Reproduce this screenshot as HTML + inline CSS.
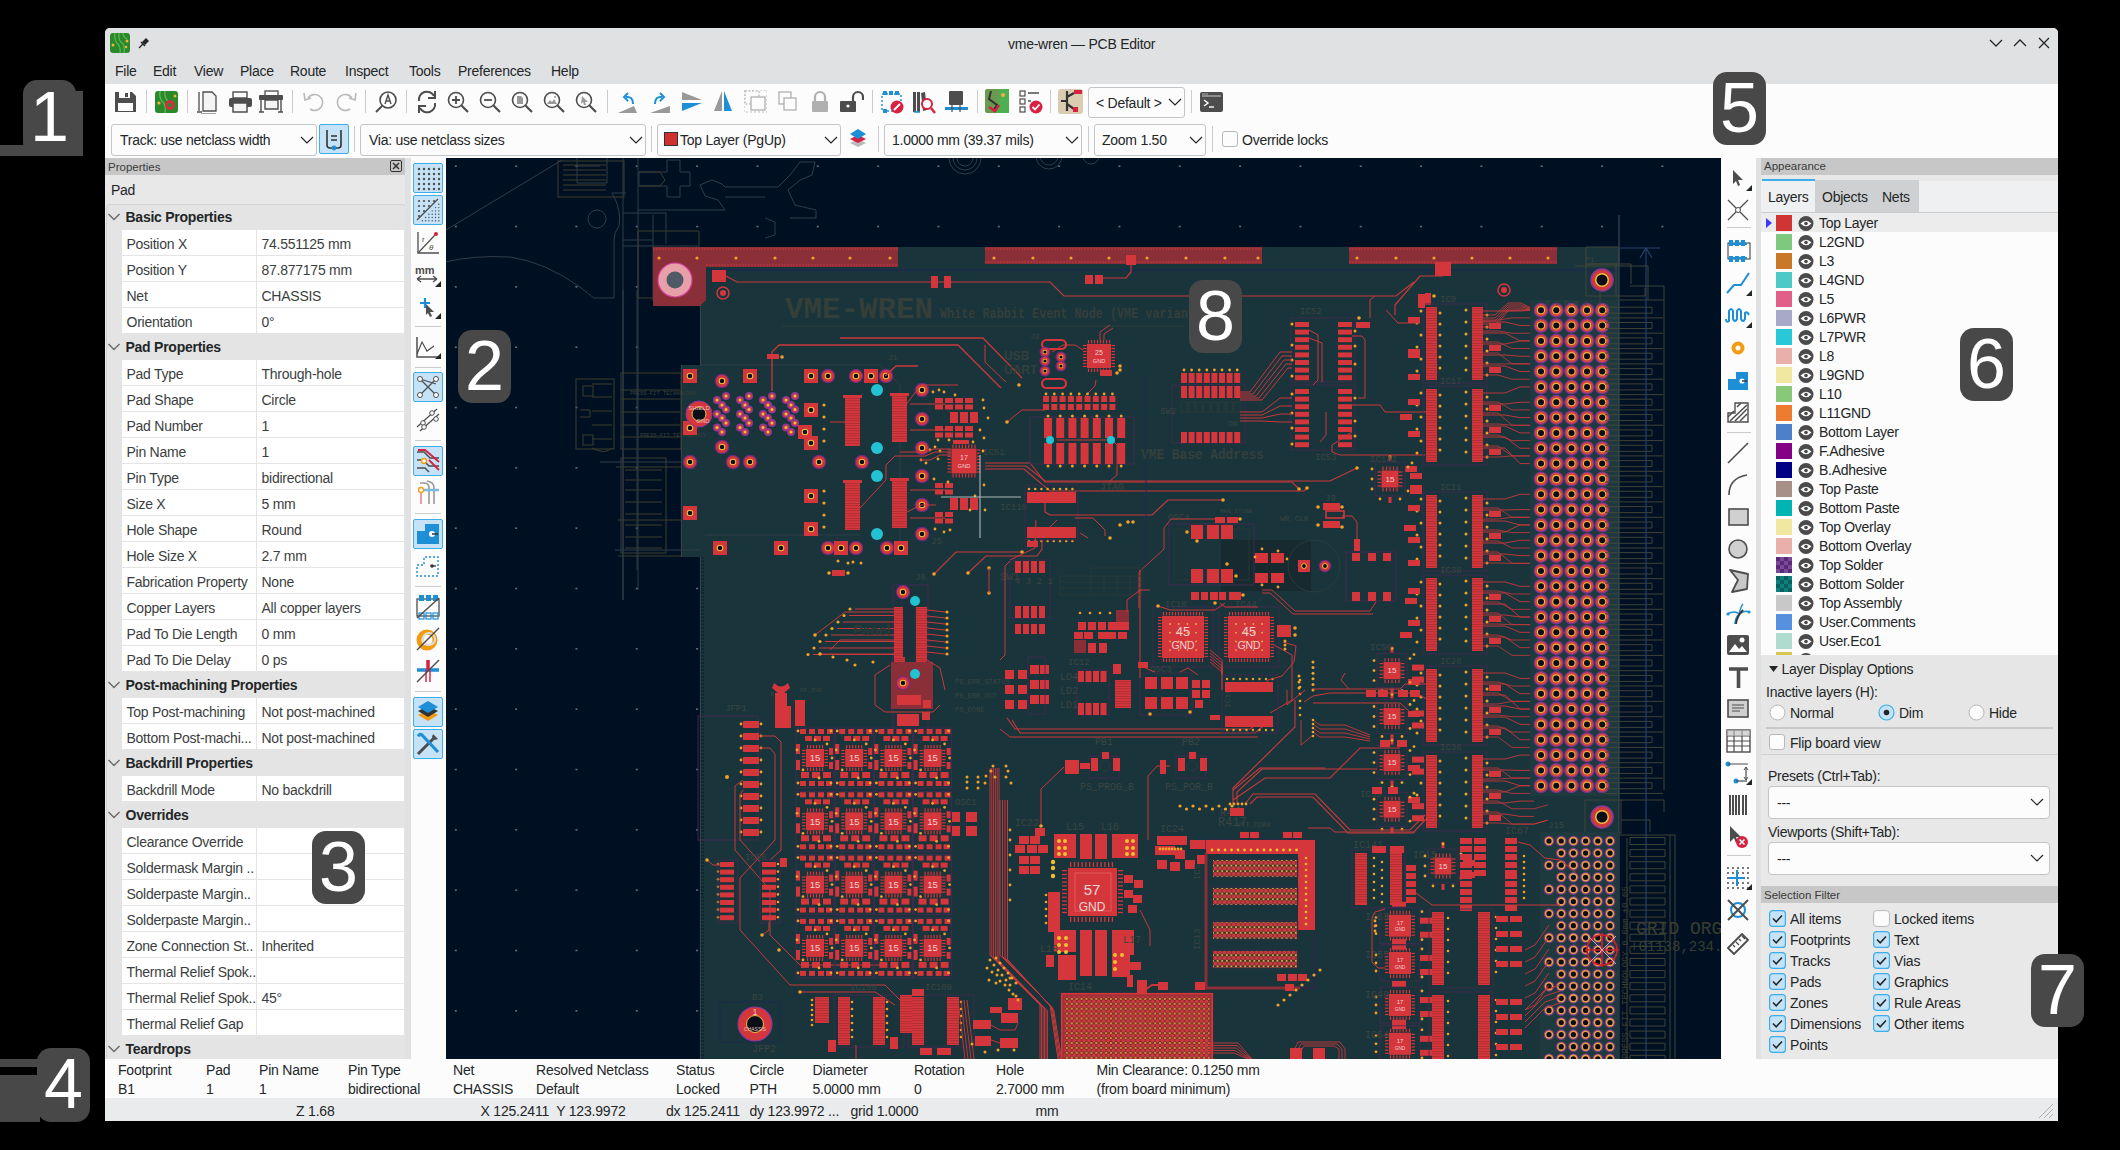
<!DOCTYPE html>
<html><head><meta charset="utf-8"><style>
html,body{margin:0;padding:0;background:#000;width:2120px;height:1150px;overflow:hidden}
body{position:relative;font-family:"Liberation Sans", sans-serif;color:#232627}
svg{overflow:hidden}
</style></head><body>
<div style="position:absolute;left:105px;top:28px;width:1953px;height:1093px;background:#eff0f1;border-radius:5px 5px 0 0;overflow:hidden"></div><div style="position:absolute;left:105px;top:28px;width:1953px;height:56px;background:#e0e1e3;border-radius:5px 5px 0 0"></div>
<svg style="position:absolute;left:445px;top:158px" width="1276" height="901" viewBox="445 158 1276 901"><rect x="445" y="158" width="1276" height="901" fill="#001023"/><defs><pattern id="pbga" x="1062" y="994" width="4.9" height="4.9" patternUnits="userSpaceOnUse"><circle cx="2.45" cy="2.45" r="2.2" fill="#d5363b"/><circle cx="0" cy="0" r="1.1" fill="#f2a22a"/><circle cx="4.9" cy="0" r="1.1" fill="#f2a22a"/><circle cx="0" cy="4.9" r="1.1" fill="#f2a22a"/><circle cx="4.9" cy="4.9" r="1.1" fill="#f2a22a"/></pattern><pattern id="pddr" x="1213" y="860" width="4.6" height="5.6" patternUnits="userSpaceOnUse"><circle cx="2.3" cy="2.8" r="2.1" fill="#d5363b"/><circle cx="0" cy="0" r="1.1" fill="#f2a22a"/><circle cx="4.6" cy="0" r="1.1" fill="#f2a22a"/><circle cx="0" cy="5.6" r="1.1" fill="#f2a22a"/><circle cx="4.6" cy="5.6" r="1.1" fill="#f2a22a"/></pattern><g id="vr"><circle r="7.4" fill="#7a3490"/><circle r="6.1" fill="#d8463a"/><circle r="4.1" fill="#eab440"/><circle r="3.0" fill="#0a0e18"/></g><g id="vs"><circle r="5.3" fill="#8a3898" opacity="0.9"/><circle r="4.2" fill="#e8a040"/><circle r="2.6" fill="#0a0e18"/></g></defs><rect x="454.8" y="165.4" width="2" height="1.6" fill="#8a95a0" opacity="0.7"/><rect x="454.8" y="225.73" width="2" height="1.6" fill="#8a95a0" opacity="0.7"/><rect x="454.8" y="286.06" width="2" height="1.6" fill="#8a95a0" opacity="0.7"/><rect x="454.8" y="346.39" width="2" height="1.6" fill="#8a95a0" opacity="0.7"/><rect x="454.8" y="406.72" width="2" height="1.6" fill="#8a95a0" opacity="0.7"/><rect x="454.8" y="467.05" width="2" height="1.6" fill="#8a95a0" opacity="0.7"/><rect x="454.8" y="527.38" width="2" height="1.6" fill="#8a95a0" opacity="0.7"/><rect x="454.8" y="587.71" width="2" height="1.6" fill="#8a95a0" opacity="0.7"/><rect x="454.8" y="648.04" width="2" height="1.6" fill="#8a95a0" opacity="0.7"/><rect x="454.8" y="708.37" width="2" height="1.6" fill="#8a95a0" opacity="0.7"/><rect x="454.8" y="768.7" width="2" height="1.6" fill="#8a95a0" opacity="0.7"/><rect x="454.8" y="829.03" width="2" height="1.6" fill="#8a95a0" opacity="0.7"/><rect x="454.8" y="889.36" width="2" height="1.6" fill="#8a95a0" opacity="0.7"/><rect x="454.8" y="949.69" width="2" height="1.6" fill="#8a95a0" opacity="0.7"/><rect x="454.8" y="1010.02" width="2" height="1.6" fill="#8a95a0" opacity="0.7"/><rect x="515.13" y="165.4" width="2" height="1.6" fill="#8a95a0" opacity="0.7"/><rect x="515.13" y="225.73" width="2" height="1.6" fill="#8a95a0" opacity="0.7"/><rect x="515.13" y="286.06" width="2" height="1.6" fill="#8a95a0" opacity="0.7"/><rect x="515.13" y="346.39" width="2" height="1.6" fill="#8a95a0" opacity="0.7"/><rect x="515.13" y="406.72" width="2" height="1.6" fill="#8a95a0" opacity="0.7"/><rect x="515.13" y="467.05" width="2" height="1.6" fill="#8a95a0" opacity="0.7"/><rect x="515.13" y="527.38" width="2" height="1.6" fill="#8a95a0" opacity="0.7"/><rect x="515.13" y="587.71" width="2" height="1.6" fill="#8a95a0" opacity="0.7"/><rect x="515.13" y="648.04" width="2" height="1.6" fill="#8a95a0" opacity="0.7"/><rect x="515.13" y="708.37" width="2" height="1.6" fill="#8a95a0" opacity="0.7"/><rect x="515.13" y="768.7" width="2" height="1.6" fill="#8a95a0" opacity="0.7"/><rect x="515.13" y="829.03" width="2" height="1.6" fill="#8a95a0" opacity="0.7"/><rect x="515.13" y="889.36" width="2" height="1.6" fill="#8a95a0" opacity="0.7"/><rect x="515.13" y="949.69" width="2" height="1.6" fill="#8a95a0" opacity="0.7"/><rect x="515.13" y="1010.02" width="2" height="1.6" fill="#8a95a0" opacity="0.7"/><rect x="575.46" y="165.4" width="2" height="1.6" fill="#8a95a0" opacity="0.7"/><rect x="575.46" y="225.73" width="2" height="1.6" fill="#8a95a0" opacity="0.7"/><rect x="575.46" y="286.06" width="2" height="1.6" fill="#8a95a0" opacity="0.7"/><rect x="575.46" y="346.39" width="2" height="1.6" fill="#8a95a0" opacity="0.7"/><rect x="575.46" y="406.72" width="2" height="1.6" fill="#8a95a0" opacity="0.7"/><rect x="575.46" y="467.05" width="2" height="1.6" fill="#8a95a0" opacity="0.7"/><rect x="575.46" y="527.38" width="2" height="1.6" fill="#8a95a0" opacity="0.7"/><rect x="575.46" y="587.71" width="2" height="1.6" fill="#8a95a0" opacity="0.7"/><rect x="575.46" y="648.04" width="2" height="1.6" fill="#8a95a0" opacity="0.7"/><rect x="575.46" y="708.37" width="2" height="1.6" fill="#8a95a0" opacity="0.7"/><rect x="575.46" y="768.7" width="2" height="1.6" fill="#8a95a0" opacity="0.7"/><rect x="575.46" y="829.03" width="2" height="1.6" fill="#8a95a0" opacity="0.7"/><rect x="575.46" y="889.36" width="2" height="1.6" fill="#8a95a0" opacity="0.7"/><rect x="575.46" y="949.69" width="2" height="1.6" fill="#8a95a0" opacity="0.7"/><rect x="575.46" y="1010.02" width="2" height="1.6" fill="#8a95a0" opacity="0.7"/><rect x="635.79" y="165.4" width="2" height="1.6" fill="#8a95a0" opacity="0.7"/><rect x="635.79" y="225.73" width="2" height="1.6" fill="#8a95a0" opacity="0.7"/><rect x="635.79" y="286.06" width="2" height="1.6" fill="#8a95a0" opacity="0.7"/><rect x="635.79" y="346.39" width="2" height="1.6" fill="#8a95a0" opacity="0.7"/><rect x="635.79" y="406.72" width="2" height="1.6" fill="#8a95a0" opacity="0.7"/><rect x="635.79" y="467.05" width="2" height="1.6" fill="#8a95a0" opacity="0.7"/><rect x="635.79" y="527.38" width="2" height="1.6" fill="#8a95a0" opacity="0.7"/><rect x="635.79" y="587.71" width="2" height="1.6" fill="#8a95a0" opacity="0.7"/><rect x="635.79" y="648.04" width="2" height="1.6" fill="#8a95a0" opacity="0.7"/><rect x="635.79" y="708.37" width="2" height="1.6" fill="#8a95a0" opacity="0.7"/><rect x="635.79" y="768.7" width="2" height="1.6" fill="#8a95a0" opacity="0.7"/><rect x="635.79" y="829.03" width="2" height="1.6" fill="#8a95a0" opacity="0.7"/><rect x="635.79" y="889.36" width="2" height="1.6" fill="#8a95a0" opacity="0.7"/><rect x="635.79" y="949.69" width="2" height="1.6" fill="#8a95a0" opacity="0.7"/><rect x="635.79" y="1010.02" width="2" height="1.6" fill="#8a95a0" opacity="0.7"/><rect x="696.12" y="165.4" width="2" height="1.6" fill="#8a95a0" opacity="0.7"/><rect x="696.12" y="225.73" width="2" height="1.6" fill="#8a95a0" opacity="0.7"/><rect x="696.12" y="286.06" width="2" height="1.6" fill="#8a95a0" opacity="0.7"/><rect x="696.12" y="346.39" width="2" height="1.6" fill="#8a95a0" opacity="0.7"/><rect x="696.12" y="406.72" width="2" height="1.6" fill="#8a95a0" opacity="0.7"/><rect x="696.12" y="467.05" width="2" height="1.6" fill="#8a95a0" opacity="0.7"/><rect x="696.12" y="527.38" width="2" height="1.6" fill="#8a95a0" opacity="0.7"/><rect x="696.12" y="587.71" width="2" height="1.6" fill="#8a95a0" opacity="0.7"/><rect x="696.12" y="648.04" width="2" height="1.6" fill="#8a95a0" opacity="0.7"/><rect x="696.12" y="708.37" width="2" height="1.6" fill="#8a95a0" opacity="0.7"/><rect x="696.12" y="768.7" width="2" height="1.6" fill="#8a95a0" opacity="0.7"/><rect x="696.12" y="829.03" width="2" height="1.6" fill="#8a95a0" opacity="0.7"/><rect x="696.12" y="889.36" width="2" height="1.6" fill="#8a95a0" opacity="0.7"/><rect x="696.12" y="949.69" width="2" height="1.6" fill="#8a95a0" opacity="0.7"/><rect x="696.12" y="1010.02" width="2" height="1.6" fill="#8a95a0" opacity="0.7"/><rect x="756.45" y="165.4" width="2" height="1.6" fill="#8a95a0" opacity="0.7"/><rect x="756.45" y="225.73" width="2" height="1.6" fill="#8a95a0" opacity="0.7"/><rect x="756.45" y="286.06" width="2" height="1.6" fill="#8a95a0" opacity="0.7"/><rect x="756.45" y="346.39" width="2" height="1.6" fill="#8a95a0" opacity="0.7"/><rect x="756.45" y="406.72" width="2" height="1.6" fill="#8a95a0" opacity="0.7"/><rect x="756.45" y="467.05" width="2" height="1.6" fill="#8a95a0" opacity="0.7"/><rect x="756.45" y="527.38" width="2" height="1.6" fill="#8a95a0" opacity="0.7"/><rect x="756.45" y="587.71" width="2" height="1.6" fill="#8a95a0" opacity="0.7"/><rect x="756.45" y="648.04" width="2" height="1.6" fill="#8a95a0" opacity="0.7"/><rect x="756.45" y="708.37" width="2" height="1.6" fill="#8a95a0" opacity="0.7"/><rect x="756.45" y="768.7" width="2" height="1.6" fill="#8a95a0" opacity="0.7"/><rect x="756.45" y="829.03" width="2" height="1.6" fill="#8a95a0" opacity="0.7"/><rect x="756.45" y="889.36" width="2" height="1.6" fill="#8a95a0" opacity="0.7"/><rect x="756.45" y="949.69" width="2" height="1.6" fill="#8a95a0" opacity="0.7"/><rect x="756.45" y="1010.02" width="2" height="1.6" fill="#8a95a0" opacity="0.7"/><rect x="816.78" y="165.4" width="2" height="1.6" fill="#8a95a0" opacity="0.7"/><rect x="816.78" y="225.73" width="2" height="1.6" fill="#8a95a0" opacity="0.7"/><rect x="816.78" y="286.06" width="2" height="1.6" fill="#8a95a0" opacity="0.7"/><rect x="816.78" y="346.39" width="2" height="1.6" fill="#8a95a0" opacity="0.7"/><rect x="816.78" y="406.72" width="2" height="1.6" fill="#8a95a0" opacity="0.7"/><rect x="816.78" y="467.05" width="2" height="1.6" fill="#8a95a0" opacity="0.7"/><rect x="816.78" y="527.38" width="2" height="1.6" fill="#8a95a0" opacity="0.7"/><rect x="816.78" y="587.71" width="2" height="1.6" fill="#8a95a0" opacity="0.7"/><rect x="816.78" y="648.04" width="2" height="1.6" fill="#8a95a0" opacity="0.7"/><rect x="816.78" y="708.37" width="2" height="1.6" fill="#8a95a0" opacity="0.7"/><rect x="816.78" y="768.7" width="2" height="1.6" fill="#8a95a0" opacity="0.7"/><rect x="816.78" y="829.03" width="2" height="1.6" fill="#8a95a0" opacity="0.7"/><rect x="816.78" y="889.36" width="2" height="1.6" fill="#8a95a0" opacity="0.7"/><rect x="816.78" y="949.69" width="2" height="1.6" fill="#8a95a0" opacity="0.7"/><rect x="816.78" y="1010.02" width="2" height="1.6" fill="#8a95a0" opacity="0.7"/><rect x="877.11" y="165.4" width="2" height="1.6" fill="#8a95a0" opacity="0.7"/><rect x="877.11" y="225.73" width="2" height="1.6" fill="#8a95a0" opacity="0.7"/><rect x="877.11" y="286.06" width="2" height="1.6" fill="#8a95a0" opacity="0.7"/><rect x="877.11" y="346.39" width="2" height="1.6" fill="#8a95a0" opacity="0.7"/><rect x="877.11" y="406.72" width="2" height="1.6" fill="#8a95a0" opacity="0.7"/><rect x="877.11" y="467.05" width="2" height="1.6" fill="#8a95a0" opacity="0.7"/><rect x="877.11" y="527.38" width="2" height="1.6" fill="#8a95a0" opacity="0.7"/><rect x="877.11" y="587.71" width="2" height="1.6" fill="#8a95a0" opacity="0.7"/><rect x="877.11" y="648.04" width="2" height="1.6" fill="#8a95a0" opacity="0.7"/><rect x="877.11" y="708.37" width="2" height="1.6" fill="#8a95a0" opacity="0.7"/><rect x="877.11" y="768.7" width="2" height="1.6" fill="#8a95a0" opacity="0.7"/><rect x="877.11" y="829.03" width="2" height="1.6" fill="#8a95a0" opacity="0.7"/><rect x="877.11" y="889.36" width="2" height="1.6" fill="#8a95a0" opacity="0.7"/><rect x="877.11" y="949.69" width="2" height="1.6" fill="#8a95a0" opacity="0.7"/><rect x="877.11" y="1010.02" width="2" height="1.6" fill="#8a95a0" opacity="0.7"/><rect x="937.44" y="165.4" width="2" height="1.6" fill="#8a95a0" opacity="0.7"/><rect x="937.44" y="225.73" width="2" height="1.6" fill="#8a95a0" opacity="0.7"/><rect x="937.44" y="286.06" width="2" height="1.6" fill="#8a95a0" opacity="0.7"/><rect x="937.44" y="346.39" width="2" height="1.6" fill="#8a95a0" opacity="0.7"/><rect x="937.44" y="406.72" width="2" height="1.6" fill="#8a95a0" opacity="0.7"/><rect x="937.44" y="467.05" width="2" height="1.6" fill="#8a95a0" opacity="0.7"/><rect x="937.44" y="527.38" width="2" height="1.6" fill="#8a95a0" opacity="0.7"/><rect x="937.44" y="587.71" width="2" height="1.6" fill="#8a95a0" opacity="0.7"/><rect x="937.44" y="648.04" width="2" height="1.6" fill="#8a95a0" opacity="0.7"/><rect x="937.44" y="708.37" width="2" height="1.6" fill="#8a95a0" opacity="0.7"/><rect x="937.44" y="768.7" width="2" height="1.6" fill="#8a95a0" opacity="0.7"/><rect x="937.44" y="829.03" width="2" height="1.6" fill="#8a95a0" opacity="0.7"/><rect x="937.44" y="889.36" width="2" height="1.6" fill="#8a95a0" opacity="0.7"/><rect x="937.44" y="949.69" width="2" height="1.6" fill="#8a95a0" opacity="0.7"/><rect x="937.44" y="1010.02" width="2" height="1.6" fill="#8a95a0" opacity="0.7"/><rect x="997.77" y="165.4" width="2" height="1.6" fill="#8a95a0" opacity="0.7"/><rect x="997.77" y="225.73" width="2" height="1.6" fill="#8a95a0" opacity="0.7"/><rect x="997.77" y="286.06" width="2" height="1.6" fill="#8a95a0" opacity="0.7"/><rect x="997.77" y="346.39" width="2" height="1.6" fill="#8a95a0" opacity="0.7"/><rect x="997.77" y="406.72" width="2" height="1.6" fill="#8a95a0" opacity="0.7"/><rect x="997.77" y="467.05" width="2" height="1.6" fill="#8a95a0" opacity="0.7"/><rect x="997.77" y="527.38" width="2" height="1.6" fill="#8a95a0" opacity="0.7"/><rect x="997.77" y="587.71" width="2" height="1.6" fill="#8a95a0" opacity="0.7"/><rect x="997.77" y="648.04" width="2" height="1.6" fill="#8a95a0" opacity="0.7"/><rect x="997.77" y="708.37" width="2" height="1.6" fill="#8a95a0" opacity="0.7"/><rect x="997.77" y="768.7" width="2" height="1.6" fill="#8a95a0" opacity="0.7"/><rect x="997.77" y="829.03" width="2" height="1.6" fill="#8a95a0" opacity="0.7"/><rect x="997.77" y="889.36" width="2" height="1.6" fill="#8a95a0" opacity="0.7"/><rect x="997.77" y="949.69" width="2" height="1.6" fill="#8a95a0" opacity="0.7"/><rect x="997.77" y="1010.02" width="2" height="1.6" fill="#8a95a0" opacity="0.7"/><rect x="1058.1" y="165.4" width="2" height="1.6" fill="#8a95a0" opacity="0.7"/><rect x="1058.1" y="225.73" width="2" height="1.6" fill="#8a95a0" opacity="0.7"/><rect x="1058.1" y="286.06" width="2" height="1.6" fill="#8a95a0" opacity="0.7"/><rect x="1058.1" y="346.39" width="2" height="1.6" fill="#8a95a0" opacity="0.7"/><rect x="1058.1" y="406.72" width="2" height="1.6" fill="#8a95a0" opacity="0.7"/><rect x="1058.1" y="467.05" width="2" height="1.6" fill="#8a95a0" opacity="0.7"/><rect x="1058.1" y="527.38" width="2" height="1.6" fill="#8a95a0" opacity="0.7"/><rect x="1058.1" y="587.71" width="2" height="1.6" fill="#8a95a0" opacity="0.7"/><rect x="1058.1" y="648.04" width="2" height="1.6" fill="#8a95a0" opacity="0.7"/><rect x="1058.1" y="708.37" width="2" height="1.6" fill="#8a95a0" opacity="0.7"/><rect x="1058.1" y="768.7" width="2" height="1.6" fill="#8a95a0" opacity="0.7"/><rect x="1058.1" y="829.03" width="2" height="1.6" fill="#8a95a0" opacity="0.7"/><rect x="1058.1" y="889.36" width="2" height="1.6" fill="#8a95a0" opacity="0.7"/><rect x="1058.1" y="949.69" width="2" height="1.6" fill="#8a95a0" opacity="0.7"/><rect x="1058.1" y="1010.02" width="2" height="1.6" fill="#8a95a0" opacity="0.7"/><rect x="1118.43" y="165.4" width="2" height="1.6" fill="#8a95a0" opacity="0.7"/><rect x="1118.43" y="225.73" width="2" height="1.6" fill="#8a95a0" opacity="0.7"/><rect x="1118.43" y="286.06" width="2" height="1.6" fill="#8a95a0" opacity="0.7"/><rect x="1118.43" y="346.39" width="2" height="1.6" fill="#8a95a0" opacity="0.7"/><rect x="1118.43" y="406.72" width="2" height="1.6" fill="#8a95a0" opacity="0.7"/><rect x="1118.43" y="467.05" width="2" height="1.6" fill="#8a95a0" opacity="0.7"/><rect x="1118.43" y="527.38" width="2" height="1.6" fill="#8a95a0" opacity="0.7"/><rect x="1118.43" y="587.71" width="2" height="1.6" fill="#8a95a0" opacity="0.7"/><rect x="1118.43" y="648.04" width="2" height="1.6" fill="#8a95a0" opacity="0.7"/><rect x="1118.43" y="708.37" width="2" height="1.6" fill="#8a95a0" opacity="0.7"/><rect x="1118.43" y="768.7" width="2" height="1.6" fill="#8a95a0" opacity="0.7"/><rect x="1118.43" y="829.03" width="2" height="1.6" fill="#8a95a0" opacity="0.7"/><rect x="1118.43" y="889.36" width="2" height="1.6" fill="#8a95a0" opacity="0.7"/><rect x="1118.43" y="949.69" width="2" height="1.6" fill="#8a95a0" opacity="0.7"/><rect x="1118.43" y="1010.02" width="2" height="1.6" fill="#8a95a0" opacity="0.7"/><rect x="1178.76" y="165.4" width="2" height="1.6" fill="#8a95a0" opacity="0.7"/><rect x="1178.76" y="225.73" width="2" height="1.6" fill="#8a95a0" opacity="0.7"/><rect x="1178.76" y="286.06" width="2" height="1.6" fill="#8a95a0" opacity="0.7"/><rect x="1178.76" y="346.39" width="2" height="1.6" fill="#8a95a0" opacity="0.7"/><rect x="1178.76" y="406.72" width="2" height="1.6" fill="#8a95a0" opacity="0.7"/><rect x="1178.76" y="467.05" width="2" height="1.6" fill="#8a95a0" opacity="0.7"/><rect x="1178.76" y="527.38" width="2" height="1.6" fill="#8a95a0" opacity="0.7"/><rect x="1178.76" y="587.71" width="2" height="1.6" fill="#8a95a0" opacity="0.7"/><rect x="1178.76" y="648.04" width="2" height="1.6" fill="#8a95a0" opacity="0.7"/><rect x="1178.76" y="708.37" width="2" height="1.6" fill="#8a95a0" opacity="0.7"/><rect x="1178.76" y="768.7" width="2" height="1.6" fill="#8a95a0" opacity="0.7"/><rect x="1178.76" y="829.03" width="2" height="1.6" fill="#8a95a0" opacity="0.7"/><rect x="1178.76" y="889.36" width="2" height="1.6" fill="#8a95a0" opacity="0.7"/><rect x="1178.76" y="949.69" width="2" height="1.6" fill="#8a95a0" opacity="0.7"/><rect x="1178.76" y="1010.02" width="2" height="1.6" fill="#8a95a0" opacity="0.7"/><rect x="1239.09" y="165.4" width="2" height="1.6" fill="#8a95a0" opacity="0.7"/><rect x="1239.09" y="225.73" width="2" height="1.6" fill="#8a95a0" opacity="0.7"/><rect x="1239.09" y="286.06" width="2" height="1.6" fill="#8a95a0" opacity="0.7"/><rect x="1239.09" y="346.39" width="2" height="1.6" fill="#8a95a0" opacity="0.7"/><rect x="1239.09" y="406.72" width="2" height="1.6" fill="#8a95a0" opacity="0.7"/><rect x="1239.09" y="467.05" width="2" height="1.6" fill="#8a95a0" opacity="0.7"/><rect x="1239.09" y="527.38" width="2" height="1.6" fill="#8a95a0" opacity="0.7"/><rect x="1239.09" y="587.71" width="2" height="1.6" fill="#8a95a0" opacity="0.7"/><rect x="1239.09" y="648.04" width="2" height="1.6" fill="#8a95a0" opacity="0.7"/><rect x="1239.09" y="708.37" width="2" height="1.6" fill="#8a95a0" opacity="0.7"/><rect x="1239.09" y="768.7" width="2" height="1.6" fill="#8a95a0" opacity="0.7"/><rect x="1239.09" y="829.03" width="2" height="1.6" fill="#8a95a0" opacity="0.7"/><rect x="1239.09" y="889.36" width="2" height="1.6" fill="#8a95a0" opacity="0.7"/><rect x="1239.09" y="949.69" width="2" height="1.6" fill="#8a95a0" opacity="0.7"/><rect x="1239.09" y="1010.02" width="2" height="1.6" fill="#8a95a0" opacity="0.7"/><rect x="1299.42" y="165.4" width="2" height="1.6" fill="#8a95a0" opacity="0.7"/><rect x="1299.42" y="225.73" width="2" height="1.6" fill="#8a95a0" opacity="0.7"/><rect x="1299.42" y="286.06" width="2" height="1.6" fill="#8a95a0" opacity="0.7"/><rect x="1299.42" y="346.39" width="2" height="1.6" fill="#8a95a0" opacity="0.7"/><rect x="1299.42" y="406.72" width="2" height="1.6" fill="#8a95a0" opacity="0.7"/><rect x="1299.42" y="467.05" width="2" height="1.6" fill="#8a95a0" opacity="0.7"/><rect x="1299.42" y="527.38" width="2" height="1.6" fill="#8a95a0" opacity="0.7"/><rect x="1299.42" y="587.71" width="2" height="1.6" fill="#8a95a0" opacity="0.7"/><rect x="1299.42" y="648.04" width="2" height="1.6" fill="#8a95a0" opacity="0.7"/><rect x="1299.42" y="708.37" width="2" height="1.6" fill="#8a95a0" opacity="0.7"/><rect x="1299.42" y="768.7" width="2" height="1.6" fill="#8a95a0" opacity="0.7"/><rect x="1299.42" y="829.03" width="2" height="1.6" fill="#8a95a0" opacity="0.7"/><rect x="1299.42" y="889.36" width="2" height="1.6" fill="#8a95a0" opacity="0.7"/><rect x="1299.42" y="949.69" width="2" height="1.6" fill="#8a95a0" opacity="0.7"/><rect x="1299.42" y="1010.02" width="2" height="1.6" fill="#8a95a0" opacity="0.7"/><rect x="1359.75" y="165.4" width="2" height="1.6" fill="#8a95a0" opacity="0.7"/><rect x="1359.75" y="225.73" width="2" height="1.6" fill="#8a95a0" opacity="0.7"/><rect x="1359.75" y="286.06" width="2" height="1.6" fill="#8a95a0" opacity="0.7"/><rect x="1359.75" y="346.39" width="2" height="1.6" fill="#8a95a0" opacity="0.7"/><rect x="1359.75" y="406.72" width="2" height="1.6" fill="#8a95a0" opacity="0.7"/><rect x="1359.75" y="467.05" width="2" height="1.6" fill="#8a95a0" opacity="0.7"/><rect x="1359.75" y="527.38" width="2" height="1.6" fill="#8a95a0" opacity="0.7"/><rect x="1359.75" y="587.71" width="2" height="1.6" fill="#8a95a0" opacity="0.7"/><rect x="1359.75" y="648.04" width="2" height="1.6" fill="#8a95a0" opacity="0.7"/><rect x="1359.75" y="708.37" width="2" height="1.6" fill="#8a95a0" opacity="0.7"/><rect x="1359.75" y="768.7" width="2" height="1.6" fill="#8a95a0" opacity="0.7"/><rect x="1359.75" y="829.03" width="2" height="1.6" fill="#8a95a0" opacity="0.7"/><rect x="1359.75" y="889.36" width="2" height="1.6" fill="#8a95a0" opacity="0.7"/><rect x="1359.75" y="949.69" width="2" height="1.6" fill="#8a95a0" opacity="0.7"/><rect x="1359.75" y="1010.02" width="2" height="1.6" fill="#8a95a0" opacity="0.7"/><rect x="1420.08" y="165.4" width="2" height="1.6" fill="#8a95a0" opacity="0.7"/><rect x="1420.08" y="225.73" width="2" height="1.6" fill="#8a95a0" opacity="0.7"/><rect x="1420.08" y="286.06" width="2" height="1.6" fill="#8a95a0" opacity="0.7"/><rect x="1420.08" y="346.39" width="2" height="1.6" fill="#8a95a0" opacity="0.7"/><rect x="1420.08" y="406.72" width="2" height="1.6" fill="#8a95a0" opacity="0.7"/><rect x="1420.08" y="467.05" width="2" height="1.6" fill="#8a95a0" opacity="0.7"/><rect x="1420.08" y="527.38" width="2" height="1.6" fill="#8a95a0" opacity="0.7"/><rect x="1420.08" y="587.71" width="2" height="1.6" fill="#8a95a0" opacity="0.7"/><rect x="1420.08" y="648.04" width="2" height="1.6" fill="#8a95a0" opacity="0.7"/><rect x="1420.08" y="708.37" width="2" height="1.6" fill="#8a95a0" opacity="0.7"/><rect x="1420.08" y="768.7" width="2" height="1.6" fill="#8a95a0" opacity="0.7"/><rect x="1420.08" y="829.03" width="2" height="1.6" fill="#8a95a0" opacity="0.7"/><rect x="1420.08" y="889.36" width="2" height="1.6" fill="#8a95a0" opacity="0.7"/><rect x="1420.08" y="949.69" width="2" height="1.6" fill="#8a95a0" opacity="0.7"/><rect x="1420.08" y="1010.02" width="2" height="1.6" fill="#8a95a0" opacity="0.7"/><rect x="1480.41" y="165.4" width="2" height="1.6" fill="#8a95a0" opacity="0.7"/><rect x="1480.41" y="225.73" width="2" height="1.6" fill="#8a95a0" opacity="0.7"/><rect x="1480.41" y="286.06" width="2" height="1.6" fill="#8a95a0" opacity="0.7"/><rect x="1480.41" y="346.39" width="2" height="1.6" fill="#8a95a0" opacity="0.7"/><rect x="1480.41" y="406.72" width="2" height="1.6" fill="#8a95a0" opacity="0.7"/><rect x="1480.41" y="467.05" width="2" height="1.6" fill="#8a95a0" opacity="0.7"/><rect x="1480.41" y="527.38" width="2" height="1.6" fill="#8a95a0" opacity="0.7"/><rect x="1480.41" y="587.71" width="2" height="1.6" fill="#8a95a0" opacity="0.7"/><rect x="1480.41" y="648.04" width="2" height="1.6" fill="#8a95a0" opacity="0.7"/><rect x="1480.41" y="708.37" width="2" height="1.6" fill="#8a95a0" opacity="0.7"/><rect x="1480.41" y="768.7" width="2" height="1.6" fill="#8a95a0" opacity="0.7"/><rect x="1480.41" y="829.03" width="2" height="1.6" fill="#8a95a0" opacity="0.7"/><rect x="1480.41" y="889.36" width="2" height="1.6" fill="#8a95a0" opacity="0.7"/><rect x="1480.41" y="949.69" width="2" height="1.6" fill="#8a95a0" opacity="0.7"/><rect x="1480.41" y="1010.02" width="2" height="1.6" fill="#8a95a0" opacity="0.7"/><rect x="1540.74" y="165.4" width="2" height="1.6" fill="#8a95a0" opacity="0.7"/><rect x="1540.74" y="225.73" width="2" height="1.6" fill="#8a95a0" opacity="0.7"/><rect x="1540.74" y="286.06" width="2" height="1.6" fill="#8a95a0" opacity="0.7"/><rect x="1540.74" y="346.39" width="2" height="1.6" fill="#8a95a0" opacity="0.7"/><rect x="1540.74" y="406.72" width="2" height="1.6" fill="#8a95a0" opacity="0.7"/><rect x="1540.74" y="467.05" width="2" height="1.6" fill="#8a95a0" opacity="0.7"/><rect x="1540.74" y="527.38" width="2" height="1.6" fill="#8a95a0" opacity="0.7"/><rect x="1540.74" y="587.71" width="2" height="1.6" fill="#8a95a0" opacity="0.7"/><rect x="1540.74" y="648.04" width="2" height="1.6" fill="#8a95a0" opacity="0.7"/><rect x="1540.74" y="708.37" width="2" height="1.6" fill="#8a95a0" opacity="0.7"/><rect x="1540.74" y="768.7" width="2" height="1.6" fill="#8a95a0" opacity="0.7"/><rect x="1540.74" y="829.03" width="2" height="1.6" fill="#8a95a0" opacity="0.7"/><rect x="1540.74" y="889.36" width="2" height="1.6" fill="#8a95a0" opacity="0.7"/><rect x="1540.74" y="949.69" width="2" height="1.6" fill="#8a95a0" opacity="0.7"/><rect x="1540.74" y="1010.02" width="2" height="1.6" fill="#8a95a0" opacity="0.7"/><rect x="1601.07" y="165.4" width="2" height="1.6" fill="#8a95a0" opacity="0.7"/><rect x="1601.07" y="225.73" width="2" height="1.6" fill="#8a95a0" opacity="0.7"/><rect x="1601.07" y="286.06" width="2" height="1.6" fill="#8a95a0" opacity="0.7"/><rect x="1601.07" y="346.39" width="2" height="1.6" fill="#8a95a0" opacity="0.7"/><rect x="1601.07" y="406.72" width="2" height="1.6" fill="#8a95a0" opacity="0.7"/><rect x="1601.07" y="467.05" width="2" height="1.6" fill="#8a95a0" opacity="0.7"/><rect x="1601.07" y="527.38" width="2" height="1.6" fill="#8a95a0" opacity="0.7"/><rect x="1601.07" y="587.71" width="2" height="1.6" fill="#8a95a0" opacity="0.7"/><rect x="1601.07" y="648.04" width="2" height="1.6" fill="#8a95a0" opacity="0.7"/><rect x="1601.07" y="708.37" width="2" height="1.6" fill="#8a95a0" opacity="0.7"/><rect x="1601.07" y="768.7" width="2" height="1.6" fill="#8a95a0" opacity="0.7"/><rect x="1601.07" y="829.03" width="2" height="1.6" fill="#8a95a0" opacity="0.7"/><rect x="1601.07" y="889.36" width="2" height="1.6" fill="#8a95a0" opacity="0.7"/><rect x="1601.07" y="949.69" width="2" height="1.6" fill="#8a95a0" opacity="0.7"/><rect x="1601.07" y="1010.02" width="2" height="1.6" fill="#8a95a0" opacity="0.7"/><rect x="1661.4" y="165.4" width="2" height="1.6" fill="#8a95a0" opacity="0.7"/><rect x="1661.4" y="225.73" width="2" height="1.6" fill="#8a95a0" opacity="0.7"/><rect x="1661.4" y="286.06" width="2" height="1.6" fill="#8a95a0" opacity="0.7"/><rect x="1661.4" y="346.39" width="2" height="1.6" fill="#8a95a0" opacity="0.7"/><rect x="1661.4" y="406.72" width="2" height="1.6" fill="#8a95a0" opacity="0.7"/><rect x="1661.4" y="467.05" width="2" height="1.6" fill="#8a95a0" opacity="0.7"/><rect x="1661.4" y="527.38" width="2" height="1.6" fill="#8a95a0" opacity="0.7"/><rect x="1661.4" y="587.71" width="2" height="1.6" fill="#8a95a0" opacity="0.7"/><rect x="1661.4" y="648.04" width="2" height="1.6" fill="#8a95a0" opacity="0.7"/><rect x="1661.4" y="708.37" width="2" height="1.6" fill="#8a95a0" opacity="0.7"/><rect x="1661.4" y="768.7" width="2" height="1.6" fill="#8a95a0" opacity="0.7"/><rect x="1661.4" y="829.03" width="2" height="1.6" fill="#8a95a0" opacity="0.7"/><rect x="1661.4" y="889.36" width="2" height="1.6" fill="#8a95a0" opacity="0.7"/><rect x="1661.4" y="949.69" width="2" height="1.6" fill="#8a95a0" opacity="0.7"/><rect x="1661.4" y="1010.02" width="2" height="1.6" fill="#8a95a0" opacity="0.7"/><g stroke="#2f3d47" stroke-width="1" fill="none"><path d="M446 230 L562 160"/><path d="M445 262 Q475 255 510 257 Q545 262 580 287 Q590 295 594 298 L614 298 L614 240 Q614 232 619 226 Q622 210 612 193 L626 193"/><circle cx="597" cy="219" r="9"/><path d="M623 158 L623 600 M638 158 L638 590 M623 213 L666 213 L666 244 M623 240 L653 240 M623 246 L700 246 M653 215 L653 301"/><path d="M577 158 L577 183 L607 183 L607 158 M577 166 L600 166"/><path d="M667 160 L680 160 L680 172 L690 172 L690 186 L680 186 L680 197 L667 197 L667 186 L639 186 L639 172 L667 172 Z"/><path d="M638 210 L725 210 L718 200 L705 196 L700 185 L712 180 L722 184 L725 187 L765 187 M725 197 L765 197"/><path d="M765 187 L778 187 L790 175 L800 162 L815 162 L812 175 L800 180 L788 190 L795 205 L816 210 L816 218 L790 218"/><path d="M765 218 L775 222 L775 235 L765 238"/><circle cx="965" cy="158" r="16"/><circle cx="965" cy="158" r="12"/><circle cx="965" cy="158" r="8"/><circle cx="1049" cy="156" r="13"/><circle cx="1049" cy="156" r="9"/><circle cx="1091" cy="156" r="8"/></g><g stroke="#3d3d2c" stroke-width="1" fill="none"><rect x="558" y="161" width="66" height="36"/><path d="M563 165 L606 165 M563 170 L606 170 M563 175 L606 175 M563 180 L606 180 M563 185 L606 185 M563 190 L606 190"/><path d="M638 298 L638 231 L699 231 L699 245 M638 298 L653 298"/><path d="M639 172 L660 172 M639 186 L660 186 L665 180 L660 172"/></g><path d="M653 247 L1619 247 L1619 1059 L700 1059 L700 557 L681 557 L681 365 L700 365 L700 305 L653 305 Z" fill="#19343a"/><path d="M653 305 L700 305 L700 365 L681 365 L681 305 Z" fill="#001023"/><path d="M653 270 L1619 270" stroke="#1a2a50" stroke-width="1.5"/><path d="M700.5 557 L700.5 1059 M681.5 365 L681.5 557 M700.5 305 L700.5 365" stroke="#34444e" stroke-width="1.2"/><path d="M702.5 557 L702.5 1059" stroke="#0e2430" stroke-width="2.5" stroke-dasharray="2,1.5"/><path d="M653 247 L898 247 L898 267 L706 267 L706 300 L700 306 L653 306 Z" fill="#8a2e38"/><path d="M985 247 L1262 247 L1262 264 L985 264 Z" fill="#8a2e38"/><path d="M1349 247 L1557 247 L1557 264 L1349 264 Z" fill="#8a2e38"/><path d="M706 265 L898 265 M985 262 L1262 262 M1349 262 L1557 262 M653 249 L898 249 M985 249 L1262 249 M1349 249 L1557 249" stroke="#a8343a" stroke-width="2.5" stroke-dasharray="2,1"/><path d="M1435 262 L1451 262 L1451 276 L1435 276 Z" fill="#d5363b"/><circle cx="659" cy="258" r="1.6" fill="#f2a22a"/><circle cx="697" cy="258" r="1.6" fill="#f2a22a"/><circle cx="736" cy="258" r="1.6" fill="#f2a22a"/><circle cx="775" cy="258" r="1.6" fill="#f2a22a"/><circle cx="813" cy="258" r="1.6" fill="#f2a22a"/><circle cx="850" cy="258" r="1.6" fill="#f2a22a"/><circle cx="890" cy="258" r="1.6" fill="#f2a22a"/><circle cx="994" cy="258" r="1.6" fill="#f2a22a"/><circle cx="1033" cy="258" r="1.6" fill="#f2a22a"/><circle cx="1071" cy="258" r="1.6" fill="#f2a22a"/><circle cx="1109" cy="258" r="1.6" fill="#f2a22a"/><circle cx="1147" cy="258" r="1.6" fill="#f2a22a"/><circle cx="1186" cy="258" r="1.6" fill="#f2a22a"/><circle cx="1225" cy="258" r="1.6" fill="#f2a22a"/><circle cx="1258" cy="258" r="1.6" fill="#f2a22a"/><circle cx="1357" cy="258" r="1.6" fill="#f2a22a"/><circle cx="1396" cy="258" r="1.6" fill="#f2a22a"/><circle cx="1434" cy="258" r="1.6" fill="#f2a22a"/><circle cx="1472" cy="258" r="1.6" fill="#f2a22a"/><circle cx="1510" cy="258" r="1.6" fill="#f2a22a"/><circle cx="1548" cy="258" r="1.6" fill="#f2a22a"/><circle cx="675" cy="280" r="17" fill="#e8a0a8" stroke="#d040a0" stroke-width="1.2"/><circle cx="675" cy="280" r="8.5" fill="#505a66"/><circle cx="723" cy="293" r="6" fill="none" stroke="#d5363b" stroke-width="1.5"/><circle cx="723" cy="293" r="3" fill="#d5363b"/><rect x="712" y="270" width="14" height="12" fill="#d5363b" /><circle cx="1602" cy="280" r="11" fill="#d03a3a" stroke="#8a3898" stroke-width="1.5"/><circle cx="1602" cy="280" r="7" fill="#f0c040"/><circle cx="1602" cy="280" r="5.5" fill="#0a0e18"/><circle cx="1504" cy="290" r="6" fill="none" stroke="#d5363b" stroke-width="1.5"/><circle cx="1504" cy="290" r="3" fill="#d5363b"/><text x="785" y="318" font-size="30" fill="#343f3a" font-weight="bold" font-family="Liberation Mono" text-anchor="start" textLength="148" lengthAdjust="spacingAndGlyphs">VME-WREN</text><text x="940" y="318" font-size="15" fill="#343f3a" font-weight="bold" font-family="Liberation Mono" text-anchor="start" textLength="262" lengthAdjust="spacingAndGlyphs">White Rabbit Event Node (VME variant)</text><path d="M782 326 L1185 326" stroke="#2f3c38" stroke-width="1"/><g stroke="#3d3d2c" stroke-width="1" fill="none"><rect x="576" y="379" width="38" height="70"/><rect x="583" y="386" width="10" height="10"/><rect x="583" y="435" width="10" height="10"/><path d="M580 410 L590 410 L590 417 L580 417"/><path d="M592 384 L612 384 M592 397 L612 397 M592 411 L612 411 M592 425 L612 425 M592 439 L612 439 M592 448 Q605 455 612 448"/><rect x="621" y="373" width="60" height="76"/><path d="M621 390 L680 390 M621 399 L680 399 M621 412 L680 412 M621 425 L680 425 M621 437 L680 437"/><rect x="621" y="458" width="45" height="95"/><path d="M625 470 L662 470 M625 480 L662 480 M625 490 L662 490 M625 502 L662 502 M625 514 L662 514 M625 525 L662 525 M625 537 L662 537 M625 548 L662 548"/><path d="M616 467 L681 467 M618 520 L681 520 M618 556 L681 556"/></g><g stroke="#2f3d47" stroke-width="1" fill="none"><path d="M623 290 L623 600 M637 290 L637 570 M600 462 L700 462 M615 550 L700 550"/><path d="M700 365 L880 365 L900 385 L900 555"/><path d="M705 535 L860 535"/></g><text x="630" y="395" font-size="5.5" fill="#3d4038" font-weight="normal" font-family="Liberation Mono" text-anchor="start" >PRESS-FIT TECHNOLOGY</text><text x="640" y="437" font-size="5.5" fill="#3d4038" font-weight="normal" font-family="Liberation Mono" text-anchor="start" >PRESS-FIT TECHNOLOGY</text><circle cx="690" cy="376" r="7.3" fill="#7a2a88" opacity="0.85"/><rect x="683" y="369" width="14" height="14" fill="#d5363b" /><circle cx="690" cy="376" r="3.3000000000000003" fill="#f0c040"/><circle cx="690" cy="376" r="2.2800000000000002" fill="#0a1018"/><circle cx="750" cy="376" r="7.3" fill="#7a2a88" opacity="0.85"/><rect x="743" y="369" width="14" height="14" fill="#d5363b" /><circle cx="750" cy="376" r="3.3000000000000003" fill="#f0c040"/><circle cx="750" cy="376" r="2.2800000000000002" fill="#0a1018"/><circle cx="811" cy="376" r="7.3" fill="#7a2a88" opacity="0.85"/><rect x="804" y="369" width="14" height="14" fill="#d5363b" /><circle cx="811" cy="376" r="3.3000000000000003" fill="#f0c040"/><circle cx="811" cy="376" r="2.2800000000000002" fill="#0a1018"/><circle cx="828" cy="376" r="7.3" fill="#7a2a88" opacity="0.85"/><circle cx="828" cy="376" r="6" fill="#d5363b"/><circle cx="828" cy="376" r="3.3000000000000003" fill="#f0c040"/><circle cx="828" cy="376" r="2.2800000000000002" fill="#0a1018"/><circle cx="856" cy="376" r="7.3" fill="#7a2a88" opacity="0.85"/><circle cx="856" cy="376" r="6" fill="#d5363b"/><circle cx="856" cy="376" r="3.3000000000000003" fill="#f0c040"/><circle cx="856" cy="376" r="2.2800000000000002" fill="#0a1018"/><circle cx="871" cy="376" r="7.3" fill="#7a2a88" opacity="0.85"/><rect x="864" y="369" width="14" height="14" fill="#d5363b" /><circle cx="871" cy="376" r="3.3000000000000003" fill="#f0c040"/><circle cx="871" cy="376" r="2.2800000000000002" fill="#0a1018"/><circle cx="886" cy="376" r="7.3" fill="#7a2a88" opacity="0.85"/><circle cx="886" cy="376" r="6" fill="#d5363b"/><circle cx="886" cy="376" r="3.3000000000000003" fill="#f0c040"/><circle cx="886" cy="376" r="2.2800000000000002" fill="#0a1018"/><circle cx="722" cy="381" r="7.3" fill="#7a2a88" opacity="0.85"/><circle cx="722" cy="381" r="6" fill="#d5363b"/><circle cx="722" cy="381" r="3.3000000000000003" fill="#f0c040"/><circle cx="722" cy="381" r="2.2800000000000002" fill="#0a1018"/><circle cx="690" cy="428" r="7.3" fill="#7a2a88" opacity="0.85"/><rect x="683" y="421" width="14" height="14" fill="#d5363b" /><circle cx="690" cy="428" r="3.3000000000000003" fill="#f0c040"/><circle cx="690" cy="428" r="2.2800000000000002" fill="#0a1018"/><circle cx="811" cy="410" r="7.3" fill="#7a2a88" opacity="0.85"/><rect x="804" y="403" width="14" height="14" fill="#d5363b" /><circle cx="811" cy="410" r="3.3000000000000003" fill="#f0c040"/><circle cx="811" cy="410" r="2.2800000000000002" fill="#0a1018"/><circle cx="805" cy="432" r="7.3" fill="#7a2a88" opacity="0.85"/><rect x="798" y="425" width="14" height="14" fill="#d5363b" /><circle cx="805" cy="432" r="3.3000000000000003" fill="#f0c040"/><circle cx="805" cy="432" r="2.2800000000000002" fill="#0a1018"/><circle cx="811" cy="443" r="7.3" fill="#7a2a88" opacity="0.85"/><rect x="804" y="436" width="14" height="14" fill="#d5363b" /><circle cx="811" cy="443" r="3.3000000000000003" fill="#f0c040"/><circle cx="811" cy="443" r="2.2800000000000002" fill="#0a1018"/><circle cx="722" cy="447" r="7.3" fill="#7a2a88" opacity="0.85"/><circle cx="722" cy="447" r="6" fill="#d5363b"/><circle cx="722" cy="447" r="3.3000000000000003" fill="#f0c040"/><circle cx="722" cy="447" r="2.2800000000000002" fill="#0a1018"/><circle cx="690" cy="462" r="7.3" fill="#7a2a88" opacity="0.85"/><circle cx="690" cy="462" r="6" fill="#d5363b"/><circle cx="690" cy="462" r="3.3000000000000003" fill="#f0c040"/><circle cx="690" cy="462" r="2.2800000000000002" fill="#0a1018"/><circle cx="733" cy="462" r="7.3" fill="#7a2a88" opacity="0.85"/><circle cx="733" cy="462" r="6" fill="#d5363b"/><circle cx="733" cy="462" r="3.3000000000000003" fill="#f0c040"/><circle cx="733" cy="462" r="2.2800000000000002" fill="#0a1018"/><circle cx="750" cy="462" r="7.3" fill="#7a2a88" opacity="0.85"/><circle cx="750" cy="462" r="6" fill="#d5363b"/><circle cx="750" cy="462" r="3.3000000000000003" fill="#f0c040"/><circle cx="750" cy="462" r="2.2800000000000002" fill="#0a1018"/><circle cx="819" cy="462" r="7.3" fill="#7a2a88" opacity="0.85"/><circle cx="819" cy="462" r="6" fill="#d5363b"/><circle cx="819" cy="462" r="3.3000000000000003" fill="#f0c040"/><circle cx="819" cy="462" r="2.2800000000000002" fill="#0a1018"/><circle cx="862" cy="462" r="7.3" fill="#7a2a88" opacity="0.85"/><circle cx="862" cy="462" r="6" fill="#d5363b"/><circle cx="862" cy="462" r="3.3000000000000003" fill="#f0c040"/><circle cx="862" cy="462" r="2.2800000000000002" fill="#0a1018"/><circle cx="811" cy="496" r="7.3" fill="#7a2a88" opacity="0.85"/><rect x="804" y="489" width="14" height="14" fill="#d5363b" /><circle cx="811" cy="496" r="3.3000000000000003" fill="#f0c040"/><circle cx="811" cy="496" r="2.2800000000000002" fill="#0a1018"/><circle cx="690" cy="513" r="7.3" fill="#7a2a88" opacity="0.85"/><rect x="683" y="506" width="14" height="14" fill="#d5363b" /><circle cx="690" cy="513" r="3.3000000000000003" fill="#f0c040"/><circle cx="690" cy="513" r="2.2800000000000002" fill="#0a1018"/><circle cx="811" cy="529" r="7.3" fill="#7a2a88" opacity="0.85"/><rect x="804" y="522" width="14" height="14" fill="#d5363b" /><circle cx="811" cy="529" r="3.3000000000000003" fill="#f0c040"/><circle cx="811" cy="529" r="2.2800000000000002" fill="#0a1018"/><circle cx="720" cy="548" r="7.3" fill="#7a2a88" opacity="0.85"/><rect x="713" y="541" width="14" height="14" fill="#d5363b" /><circle cx="720" cy="548" r="3.3000000000000003" fill="#f0c040"/><circle cx="720" cy="548" r="2.2800000000000002" fill="#0a1018"/><circle cx="781" cy="548" r="7.3" fill="#7a2a88" opacity="0.85"/><rect x="774" y="541" width="14" height="14" fill="#d5363b" /><circle cx="781" cy="548" r="3.3000000000000003" fill="#f0c040"/><circle cx="781" cy="548" r="2.2800000000000002" fill="#0a1018"/><circle cx="828" cy="548" r="7.3" fill="#7a2a88" opacity="0.85"/><circle cx="828" cy="548" r="6" fill="#d5363b"/><circle cx="828" cy="548" r="3.3000000000000003" fill="#f0c040"/><circle cx="828" cy="548" r="2.2800000000000002" fill="#0a1018"/><circle cx="841" cy="548" r="7.3" fill="#7a2a88" opacity="0.85"/><rect x="834" y="541" width="14" height="14" fill="#d5363b" /><circle cx="841" cy="548" r="3.3000000000000003" fill="#f0c040"/><circle cx="841" cy="548" r="2.2800000000000002" fill="#0a1018"/><circle cx="856" cy="548" r="7.3" fill="#7a2a88" opacity="0.85"/><circle cx="856" cy="548" r="6" fill="#d5363b"/><circle cx="856" cy="548" r="3.3000000000000003" fill="#f0c040"/><circle cx="856" cy="548" r="2.2800000000000002" fill="#0a1018"/><circle cx="887" cy="548" r="7.3" fill="#7a2a88" opacity="0.85"/><circle cx="887" cy="548" r="6" fill="#d5363b"/><circle cx="887" cy="548" r="3.3000000000000003" fill="#f0c040"/><circle cx="887" cy="548" r="2.2800000000000002" fill="#0a1018"/><circle cx="901" cy="548" r="7.3" fill="#7a2a88" opacity="0.85"/><rect x="894" y="541" width="14" height="14" fill="#d5363b" /><circle cx="901" cy="548" r="3.3000000000000003" fill="#f0c040"/><circle cx="901" cy="548" r="2.2800000000000002" fill="#0a1018"/><circle cx="922" cy="390" r="7.3" fill="#7a2a88" opacity="0.85"/><circle cx="922" cy="390" r="6" fill="#d5363b"/><circle cx="922" cy="390" r="3.3000000000000003" fill="#f0c040"/><circle cx="922" cy="390" r="2.2800000000000002" fill="#0a1018"/><circle cx="922" cy="419" r="7.3" fill="#7a2a88" opacity="0.85"/><circle cx="922" cy="419" r="6" fill="#d5363b"/><circle cx="922" cy="419" r="3.3000000000000003" fill="#f0c040"/><circle cx="922" cy="419" r="2.2800000000000002" fill="#0a1018"/><circle cx="922" cy="448" r="7.3" fill="#7a2a88" opacity="0.85"/><circle cx="922" cy="448" r="6" fill="#d5363b"/><circle cx="922" cy="448" r="3.3000000000000003" fill="#f0c040"/><circle cx="922" cy="448" r="2.2800000000000002" fill="#0a1018"/><circle cx="922" cy="476" r="7.3" fill="#7a2a88" opacity="0.85"/><circle cx="922" cy="476" r="6" fill="#d5363b"/><circle cx="922" cy="476" r="3.3000000000000003" fill="#f0c040"/><circle cx="922" cy="476" r="2.2800000000000002" fill="#0a1018"/><circle cx="922" cy="505" r="7.3" fill="#7a2a88" opacity="0.85"/><circle cx="922" cy="505" r="6" fill="#d5363b"/><circle cx="922" cy="505" r="3.3000000000000003" fill="#f0c040"/><circle cx="922" cy="505" r="2.2800000000000002" fill="#0a1018"/><circle cx="922" cy="534" r="7.3" fill="#7a2a88" opacity="0.85"/><circle cx="922" cy="534" r="6" fill="#d5363b"/><circle cx="922" cy="534" r="3.3000000000000003" fill="#f0c040"/><circle cx="922" cy="534" r="2.2800000000000002" fill="#0a1018"/><circle cx="699" cy="414" r="13" fill="#d5363b" stroke="#8a3898" stroke-width="1"/><circle cx="699" cy="414" r="7" fill="#0a0e18" stroke="#f0c040" stroke-width="1"/><text x="699" y="410" font-size="6" fill="#e8c0c0" font-weight="normal" font-family="Liberation Sans" text-anchor="middle" >SHIELD</text><text x="703" y="423" font-size="6" fill="#e8c0c0" font-weight="normal" font-family="Liberation Sans" text-anchor="middle" >GND</text><circle cx="726" cy="396" r="4" fill="#8a3898"/><circle cx="726" cy="396" r="2.6" fill="#d5363b"/><circle cx="726" cy="396" r="1.5" fill="#f0c040"/><circle cx="717" cy="400" r="4" fill="#8a3898"/><circle cx="717" cy="400" r="2.6" fill="#d5363b"/><circle cx="717" cy="400" r="1.5" fill="#f0c040"/><circle cx="722" cy="405" r="4" fill="#8a3898"/><circle cx="722" cy="405" r="2.6" fill="#d5363b"/><circle cx="722" cy="405" r="1.5" fill="#f0c040"/><circle cx="726" cy="409.5" r="4" fill="#8a3898"/><circle cx="726" cy="409.5" r="2.6" fill="#d5363b"/><circle cx="726" cy="409.5" r="1.5" fill="#f0c040"/><circle cx="717" cy="414" r="4" fill="#8a3898"/><circle cx="717" cy="414" r="2.6" fill="#d5363b"/><circle cx="717" cy="414" r="1.5" fill="#f0c040"/><circle cx="722" cy="418" r="4" fill="#8a3898"/><circle cx="722" cy="418" r="2.6" fill="#d5363b"/><circle cx="722" cy="418" r="1.5" fill="#f0c040"/><circle cx="726" cy="423" r="4" fill="#8a3898"/><circle cx="726" cy="423" r="2.6" fill="#d5363b"/><circle cx="726" cy="423" r="1.5" fill="#f0c040"/><circle cx="717" cy="427.5" r="4" fill="#8a3898"/><circle cx="717" cy="427.5" r="2.6" fill="#d5363b"/><circle cx="717" cy="427.5" r="1.5" fill="#f0c040"/><circle cx="722" cy="432" r="4" fill="#8a3898"/><circle cx="722" cy="432" r="2.6" fill="#d5363b"/><circle cx="722" cy="432" r="1.5" fill="#f0c040"/><circle cx="749" cy="396" r="4" fill="#8a3898"/><circle cx="749" cy="396" r="2.6" fill="#d5363b"/><circle cx="749" cy="396" r="1.5" fill="#f0c040"/><circle cx="740" cy="400" r="4" fill="#8a3898"/><circle cx="740" cy="400" r="2.6" fill="#d5363b"/><circle cx="740" cy="400" r="1.5" fill="#f0c040"/><circle cx="745" cy="405" r="4" fill="#8a3898"/><circle cx="745" cy="405" r="2.6" fill="#d5363b"/><circle cx="745" cy="405" r="1.5" fill="#f0c040"/><circle cx="749" cy="409.5" r="4" fill="#8a3898"/><circle cx="749" cy="409.5" r="2.6" fill="#d5363b"/><circle cx="749" cy="409.5" r="1.5" fill="#f0c040"/><circle cx="740" cy="414" r="4" fill="#8a3898"/><circle cx="740" cy="414" r="2.6" fill="#d5363b"/><circle cx="740" cy="414" r="1.5" fill="#f0c040"/><circle cx="745" cy="418" r="4" fill="#8a3898"/><circle cx="745" cy="418" r="2.6" fill="#d5363b"/><circle cx="745" cy="418" r="1.5" fill="#f0c040"/><circle cx="749" cy="423" r="4" fill="#8a3898"/><circle cx="749" cy="423" r="2.6" fill="#d5363b"/><circle cx="749" cy="423" r="1.5" fill="#f0c040"/><circle cx="740" cy="427.5" r="4" fill="#8a3898"/><circle cx="740" cy="427.5" r="2.6" fill="#d5363b"/><circle cx="740" cy="427.5" r="1.5" fill="#f0c040"/><circle cx="745" cy="432" r="4" fill="#8a3898"/><circle cx="745" cy="432" r="2.6" fill="#d5363b"/><circle cx="745" cy="432" r="1.5" fill="#f0c040"/><circle cx="772" cy="396" r="4" fill="#8a3898"/><circle cx="772" cy="396" r="2.6" fill="#d5363b"/><circle cx="772" cy="396" r="1.5" fill="#f0c040"/><circle cx="763" cy="400" r="4" fill="#8a3898"/><circle cx="763" cy="400" r="2.6" fill="#d5363b"/><circle cx="763" cy="400" r="1.5" fill="#f0c040"/><circle cx="768" cy="405" r="4" fill="#8a3898"/><circle cx="768" cy="405" r="2.6" fill="#d5363b"/><circle cx="768" cy="405" r="1.5" fill="#f0c040"/><circle cx="772" cy="409.5" r="4" fill="#8a3898"/><circle cx="772" cy="409.5" r="2.6" fill="#d5363b"/><circle cx="772" cy="409.5" r="1.5" fill="#f0c040"/><circle cx="763" cy="414" r="4" fill="#8a3898"/><circle cx="763" cy="414" r="2.6" fill="#d5363b"/><circle cx="763" cy="414" r="1.5" fill="#f0c040"/><circle cx="768" cy="418" r="4" fill="#8a3898"/><circle cx="768" cy="418" r="2.6" fill="#d5363b"/><circle cx="768" cy="418" r="1.5" fill="#f0c040"/><circle cx="772" cy="423" r="4" fill="#8a3898"/><circle cx="772" cy="423" r="2.6" fill="#d5363b"/><circle cx="772" cy="423" r="1.5" fill="#f0c040"/><circle cx="763" cy="427.5" r="4" fill="#8a3898"/><circle cx="763" cy="427.5" r="2.6" fill="#d5363b"/><circle cx="763" cy="427.5" r="1.5" fill="#f0c040"/><circle cx="768" cy="432" r="4" fill="#8a3898"/><circle cx="768" cy="432" r="2.6" fill="#d5363b"/><circle cx="768" cy="432" r="1.5" fill="#f0c040"/><circle cx="795" cy="396" r="4" fill="#8a3898"/><circle cx="795" cy="396" r="2.6" fill="#d5363b"/><circle cx="795" cy="396" r="1.5" fill="#f0c040"/><circle cx="786" cy="400" r="4" fill="#8a3898"/><circle cx="786" cy="400" r="2.6" fill="#d5363b"/><circle cx="786" cy="400" r="1.5" fill="#f0c040"/><circle cx="791" cy="405" r="4" fill="#8a3898"/><circle cx="791" cy="405" r="2.6" fill="#d5363b"/><circle cx="791" cy="405" r="1.5" fill="#f0c040"/><circle cx="795" cy="409.5" r="4" fill="#8a3898"/><circle cx="795" cy="409.5" r="2.6" fill="#d5363b"/><circle cx="795" cy="409.5" r="1.5" fill="#f0c040"/><circle cx="786" cy="414" r="4" fill="#8a3898"/><circle cx="786" cy="414" r="2.6" fill="#d5363b"/><circle cx="786" cy="414" r="1.5" fill="#f0c040"/><circle cx="791" cy="418" r="4" fill="#8a3898"/><circle cx="791" cy="418" r="2.6" fill="#d5363b"/><circle cx="791" cy="418" r="1.5" fill="#f0c040"/><circle cx="795" cy="423" r="4" fill="#8a3898"/><circle cx="795" cy="423" r="2.6" fill="#d5363b"/><circle cx="795" cy="423" r="1.5" fill="#f0c040"/><circle cx="786" cy="427.5" r="4" fill="#8a3898"/><circle cx="786" cy="427.5" r="2.6" fill="#d5363b"/><circle cx="786" cy="427.5" r="1.5" fill="#f0c040"/><circle cx="791" cy="432" r="4" fill="#8a3898"/><circle cx="791" cy="432" r="2.6" fill="#d5363b"/><circle cx="791" cy="432" r="1.5" fill="#f0c040"/><rect x="845" y="397" width="15" height="49" fill="#d5363b" /><rect x="845" y="398" width="15" height="0.6" fill="#a02a30" /><rect x="845" y="400.5" width="15" height="0.6" fill="#a02a30" /><rect x="845" y="403" width="15" height="0.6" fill="#a02a30" /><rect x="845" y="405.5" width="15" height="0.6" fill="#a02a30" /><rect x="845" y="408" width="15" height="0.6" fill="#a02a30" /><rect x="845" y="410.5" width="15" height="0.6" fill="#a02a30" /><rect x="845" y="413" width="15" height="0.6" fill="#a02a30" /><rect x="845" y="415.5" width="15" height="0.6" fill="#a02a30" /><rect x="845" y="418" width="15" height="0.6" fill="#a02a30" /><rect x="845" y="420.5" width="15" height="0.6" fill="#a02a30" /><rect x="845" y="423" width="15" height="0.6" fill="#a02a30" /><rect x="845" y="425.5" width="15" height="0.6" fill="#a02a30" /><rect x="845" y="428" width="15" height="0.6" fill="#a02a30" /><rect x="845" y="430.5" width="15" height="0.6" fill="#a02a30" /><rect x="845" y="433" width="15" height="0.6" fill="#a02a30" /><rect x="845" y="435.5" width="15" height="0.6" fill="#a02a30" /><rect x="845" y="438" width="15" height="0.6" fill="#a02a30" /><rect x="845" y="440.5" width="15" height="0.6" fill="#a02a30" /><rect x="845" y="443" width="15" height="0.6" fill="#a02a30" /><rect x="843" y="395" width="19" height="3" fill="#d5363b" /><rect x="845" y="482" width="15" height="48" fill="#d5363b" /><rect x="845" y="483" width="15" height="0.6" fill="#a02a30" /><rect x="845" y="485.5" width="15" height="0.6" fill="#a02a30" /><rect x="845" y="488" width="15" height="0.6" fill="#a02a30" /><rect x="845" y="490.5" width="15" height="0.6" fill="#a02a30" /><rect x="845" y="493" width="15" height="0.6" fill="#a02a30" /><rect x="845" y="495.5" width="15" height="0.6" fill="#a02a30" /><rect x="845" y="498" width="15" height="0.6" fill="#a02a30" /><rect x="845" y="500.5" width="15" height="0.6" fill="#a02a30" /><rect x="845" y="503" width="15" height="0.6" fill="#a02a30" /><rect x="845" y="505.5" width="15" height="0.6" fill="#a02a30" /><rect x="845" y="508" width="15" height="0.6" fill="#a02a30" /><rect x="845" y="510.5" width="15" height="0.6" fill="#a02a30" /><rect x="845" y="513" width="15" height="0.6" fill="#a02a30" /><rect x="845" y="515.5" width="15" height="0.6" fill="#a02a30" /><rect x="845" y="518" width="15" height="0.6" fill="#a02a30" /><rect x="845" y="520.5" width="15" height="0.6" fill="#a02a30" /><rect x="845" y="523" width="15" height="0.6" fill="#a02a30" /><rect x="845" y="525.5" width="15" height="0.6" fill="#a02a30" /><rect x="845" y="528" width="15" height="0.6" fill="#a02a30" /><rect x="843" y="480" width="19" height="3" fill="#d5363b" /><rect x="892" y="395" width="15" height="47" fill="#d5363b" /><rect x="892" y="396" width="15" height="0.6" fill="#a02a30" /><rect x="892" y="398.5" width="15" height="0.6" fill="#a02a30" /><rect x="892" y="401" width="15" height="0.6" fill="#a02a30" /><rect x="892" y="403.5" width="15" height="0.6" fill="#a02a30" /><rect x="892" y="406" width="15" height="0.6" fill="#a02a30" /><rect x="892" y="408.5" width="15" height="0.6" fill="#a02a30" /><rect x="892" y="411" width="15" height="0.6" fill="#a02a30" /><rect x="892" y="413.5" width="15" height="0.6" fill="#a02a30" /><rect x="892" y="416" width="15" height="0.6" fill="#a02a30" /><rect x="892" y="418.5" width="15" height="0.6" fill="#a02a30" /><rect x="892" y="421" width="15" height="0.6" fill="#a02a30" /><rect x="892" y="423.5" width="15" height="0.6" fill="#a02a30" /><rect x="892" y="426" width="15" height="0.6" fill="#a02a30" /><rect x="892" y="428.5" width="15" height="0.6" fill="#a02a30" /><rect x="892" y="431" width="15" height="0.6" fill="#a02a30" /><rect x="892" y="433.5" width="15" height="0.6" fill="#a02a30" /><rect x="892" y="436" width="15" height="0.6" fill="#a02a30" /><rect x="892" y="438.5" width="15" height="0.6" fill="#a02a30" /><rect x="890" y="393" width="19" height="3" fill="#d5363b" /><rect x="892" y="480" width="15" height="48" fill="#d5363b" /><rect x="892" y="481" width="15" height="0.6" fill="#a02a30" /><rect x="892" y="483.5" width="15" height="0.6" fill="#a02a30" /><rect x="892" y="486" width="15" height="0.6" fill="#a02a30" /><rect x="892" y="488.5" width="15" height="0.6" fill="#a02a30" /><rect x="892" y="491" width="15" height="0.6" fill="#a02a30" /><rect x="892" y="493.5" width="15" height="0.6" fill="#a02a30" /><rect x="892" y="496" width="15" height="0.6" fill="#a02a30" /><rect x="892" y="498.5" width="15" height="0.6" fill="#a02a30" /><rect x="892" y="501" width="15" height="0.6" fill="#a02a30" /><rect x="892" y="503.5" width="15" height="0.6" fill="#a02a30" /><rect x="892" y="506" width="15" height="0.6" fill="#a02a30" /><rect x="892" y="508.5" width="15" height="0.6" fill="#a02a30" /><rect x="892" y="511" width="15" height="0.6" fill="#a02a30" /><rect x="892" y="513.5" width="15" height="0.6" fill="#a02a30" /><rect x="892" y="516" width="15" height="0.6" fill="#a02a30" /><rect x="892" y="518.5" width="15" height="0.6" fill="#a02a30" /><rect x="892" y="521" width="15" height="0.6" fill="#a02a30" /><rect x="892" y="523.5" width="15" height="0.6" fill="#a02a30" /><rect x="892" y="526" width="15" height="0.6" fill="#a02a30" /><rect x="890" y="478" width="19" height="3" fill="#d5363b" /><circle cx="877" cy="390" r="6" fill="#22c2d2"/><circle cx="877" cy="448" r="6" fill="#22c2d2"/><circle cx="877" cy="476" r="6" fill="#22c2d2"/><circle cx="877" cy="534" r="6" fill="#22c2d2"/><circle cx="824" cy="405" r="1.6" fill="#f2a22a"/><circle cx="824" cy="417" r="1.6" fill="#f2a22a"/><circle cx="824" cy="429" r="1.6" fill="#f2a22a"/><circle cx="824" cy="441" r="1.6" fill="#f2a22a"/><circle cx="824" cy="491" r="1.6" fill="#f2a22a"/><circle cx="824" cy="503" r="1.6" fill="#f2a22a"/><circle cx="824" cy="515" r="1.6" fill="#f2a22a"/><circle cx="824" cy="527" r="1.6" fill="#f2a22a"/><rect x="935" y="398" width="8" height="5" fill="#d5363b" /><rect x="935" y="404.5" width="8" height="5" fill="#d5363b" /><rect x="945" y="398" width="8" height="5" fill="#d5363b" /><rect x="945" y="404.5" width="8" height="5" fill="#d5363b" /><rect x="955" y="398" width="8" height="5" fill="#d5363b" /><rect x="955" y="404.5" width="8" height="5" fill="#d5363b" /><rect x="965" y="398" width="8" height="5" fill="#d5363b" /><rect x="965" y="404.5" width="8" height="5" fill="#d5363b" /><rect x="950" y="412" width="8" height="11" fill="#d5363b" /><rect x="960" y="412" width="8" height="11" fill="#d5363b" /><rect x="970" y="412" width="8" height="11" fill="#d5363b" /><rect x="935" y="426" width="8" height="5" fill="#d5363b" /><rect x="935" y="432.5" width="8" height="5" fill="#d5363b" /><rect x="945" y="426" width="8" height="5" fill="#d5363b" /><rect x="945" y="432.5" width="8" height="5" fill="#d5363b" /><rect x="955" y="426" width="8" height="5" fill="#d5363b" /><rect x="955" y="432.5" width="8" height="5" fill="#d5363b" /><rect x="965" y="426" width="8" height="5" fill="#d5363b" /><rect x="965" y="432.5" width="8" height="5" fill="#d5363b" /><rect x="935" y="483" width="8" height="5" fill="#d5363b" /><rect x="935" y="489.5" width="8" height="5" fill="#d5363b" /><rect x="945" y="483" width="8" height="5" fill="#d5363b" /><rect x="945" y="489.5" width="8" height="5" fill="#d5363b" /><rect x="950" y="498" width="8" height="12" fill="#d5363b" /><rect x="960" y="498" width="8" height="12" fill="#d5363b" /><rect x="970" y="498" width="8" height="12" fill="#d5363b" /><rect x="935" y="512" width="8" height="5" fill="#d5363b" /><rect x="935" y="518.5" width="8" height="5" fill="#d5363b" /><rect x="945" y="512" width="8" height="5" fill="#d5363b" /><rect x="945" y="518.5" width="8" height="5" fill="#d5363b" /><circle cx="933" cy="392" r="1.4" fill="#f2a22a"/><circle cx="939" cy="390" r="1.4" fill="#f2a22a"/><circle cx="944" cy="392" r="1.4" fill="#f2a22a"/><circle cx="955" cy="395" r="1.4" fill="#f2a22a"/><circle cx="983" cy="400" r="1.4" fill="#f2a22a"/><circle cx="984" cy="408" r="1.4" fill="#f2a22a"/><circle cx="988" cy="418" r="1.4" fill="#f2a22a"/><circle cx="980" cy="430" r="1.4" fill="#f2a22a"/><circle cx="984" cy="438" r="1.4" fill="#f2a22a"/><circle cx="938" cy="440" r="1.4" fill="#f2a22a"/><circle cx="949" cy="440" r="1.4" fill="#f2a22a"/><circle cx="973" cy="442" r="1.4" fill="#f2a22a"/><circle cx="983" cy="451" r="1.4" fill="#f2a22a"/><circle cx="930" cy="450" r="1.4" fill="#f2a22a"/><circle cx="935" cy="447" r="1.4" fill="#f2a22a"/><circle cx="940" cy="451" r="1.4" fill="#f2a22a"/><circle cx="934" cy="479" r="1.4" fill="#f2a22a"/><circle cx="948" cy="482" r="1.4" fill="#f2a22a"/><circle cx="984" cy="485" r="1.4" fill="#f2a22a"/><circle cx="975" cy="496" r="1.4" fill="#f2a22a"/><circle cx="970" cy="510" r="1.4" fill="#f2a22a"/><circle cx="985" cy="510" r="1.4" fill="#f2a22a"/><circle cx="935" cy="529" r="1.4" fill="#f2a22a"/><circle cx="944" cy="532" r="1.4" fill="#f2a22a"/><circle cx="950" cy="530" r="1.4" fill="#f2a22a"/><circle cx="921" cy="460" r="1.4" fill="#f2a22a"/><circle cx="926" cy="463" r="1.4" fill="#f2a22a"/><circle cx="938" cy="459" r="1.4" fill="#f2a22a"/><circle cx="955" cy="459" r="1.4" fill="#f2a22a"/><path d="M951 455 L940 455 L930 460 L920 460" stroke="#c9383a" stroke-width="1" fill="none"/><path d="M951 452 L935 452 L925 456 L895 456 L886 465 L886 480 L860 508" stroke="#c9383a" stroke-width="1" fill="none"/><path d="M951 449 L933 449 L926 452 L900 452" stroke="#c9383a" stroke-width="1" fill="none"/><rect x="951.5" y="448.5" width="25" height="25" fill="#d5363b" /><rect x="947.5" y="449.4" width="3.5" height="1.2" fill="#d5363b" /><rect x="977" y="449.4" width="3.5" height="1.2" fill="#d5363b" /><rect x="952.4" y="444.5" width="1.2" height="3.5" fill="#d5363b" /><rect x="952.4" y="474" width="1.2" height="3.5" fill="#d5363b" /><rect x="947.5" y="452.543" width="3.5" height="1.2" fill="#d5363b" /><rect x="977" y="452.543" width="3.5" height="1.2" fill="#d5363b" /><rect x="955.543" y="444.5" width="1.2" height="3.5" fill="#d5363b" /><rect x="955.543" y="474" width="1.2" height="3.5" fill="#d5363b" /><rect x="947.5" y="455.686" width="3.5" height="1.2" fill="#d5363b" /><rect x="977" y="455.686" width="3.5" height="1.2" fill="#d5363b" /><rect x="958.686" y="444.5" width="1.2" height="3.5" fill="#d5363b" /><rect x="958.686" y="474" width="1.2" height="3.5" fill="#d5363b" /><rect x="947.5" y="458.829" width="3.5" height="1.2" fill="#d5363b" /><rect x="977" y="458.829" width="3.5" height="1.2" fill="#d5363b" /><rect x="961.829" y="444.5" width="1.2" height="3.5" fill="#d5363b" /><rect x="961.829" y="474" width="1.2" height="3.5" fill="#d5363b" /><rect x="947.5" y="461.971" width="3.5" height="1.2" fill="#d5363b" /><rect x="977" y="461.971" width="3.5" height="1.2" fill="#d5363b" /><rect x="964.971" y="444.5" width="1.2" height="3.5" fill="#d5363b" /><rect x="964.971" y="474" width="1.2" height="3.5" fill="#d5363b" /><rect x="947.5" y="465.114" width="3.5" height="1.2" fill="#d5363b" /><rect x="977" y="465.114" width="3.5" height="1.2" fill="#d5363b" /><rect x="968.114" y="444.5" width="1.2" height="3.5" fill="#d5363b" /><rect x="968.114" y="474" width="1.2" height="3.5" fill="#d5363b" /><rect x="947.5" y="468.257" width="3.5" height="1.2" fill="#d5363b" /><rect x="977" y="468.257" width="3.5" height="1.2" fill="#d5363b" /><rect x="971.257" y="444.5" width="1.2" height="3.5" fill="#d5363b" /><rect x="971.257" y="474" width="1.2" height="3.5" fill="#d5363b" /><rect x="947.5" y="471.4" width="3.5" height="1.2" fill="#d5363b" /><rect x="977" y="471.4" width="3.5" height="1.2" fill="#d5363b" /><rect x="974.4" y="444.5" width="1.2" height="3.5" fill="#d5363b" /><rect x="974.4" y="474" width="1.2" height="3.5" fill="#d5363b" /><text x="964" y="460" font-size="7" fill="#f4d0d0" font-weight="normal" font-family="Liberation Sans" text-anchor="middle" >17</text><text x="964" y="467.65" font-size="5.6000000000000005" fill="#f4d0d0" font-weight="normal" font-family="Liberation Sans" text-anchor="middle" >GND</text><rect x="953" y="440" width="16" height="4" fill="#d5363b" /><path d="M980 455 L980 538 M941 497 L1021 497" stroke="#c8d0d0" stroke-width="1.1" opacity="0.85"/><text x="983" y="455" font-size="9" fill="#3b4542" font-weight="normal" font-family="Liberation Mono" text-anchor="start" >IC51</text><text x="1000" y="510" font-size="9" fill="#3b4542" font-weight="normal" font-family="Liberation Mono" text-anchor="start" >IC110</text><text x="888" y="360" font-size="8" fill="#3b4542" font-weight="normal" font-family="Liberation Mono" text-anchor="start" >J1</text><text x="931" y="544" font-size="9" fill="#3b4542" font-weight="normal" font-family="Liberation Mono" text-anchor="start" >J5</text><path d="M772 391 L772 352 L779 345 L958 345 L1001 388" stroke="#c9383a" stroke-width="1.3" fill="none"/><path d="M840 338 L983 338 L1022 378" stroke="#c9383a" stroke-width="1.3" fill="none"/><path d="M885 376 L896 366 L918 366" stroke="#c9383a" stroke-width="1.3" fill="none"/><rect x="767" y="354" width="12" height="5" fill="#d5363b" /><circle cx="782" cy="357" r="1.8" fill="#f2a22a"/><path d="M845 422 L830 422" stroke="#c9383a" stroke-width="1" fill="none"/><path d="M901 411 L921 385 L958 385" stroke="#c9383a" stroke-width="1" fill="none"/><path d="M901 515 L921 505 L936 505" stroke="#c9383a" stroke-width="1" fill="none"/><path d="M910 404 L945 404" stroke="#c9383a" stroke-width="1" fill="none"/><path d="M910 430 L945 430" stroke="#c9383a" stroke-width="1" fill="none"/><path d="M910 490 L945 490" stroke="#c9383a" stroke-width="1" fill="none"/><path d="M910 518 L945 518" stroke="#c9383a" stroke-width="1" fill="none"/><path d="M985 463 L1030 463 L1045 482 L1292 482 L1299 489" stroke="#c9383a" stroke-width="1.2" fill="none"/><circle cx="1299" cy="489" r="1.8" fill="#f2a22a"/><path d="M985 466 L1026 466 L1045 481 L1330 481 L1357 468" stroke="#c9383a" stroke-width="1.2" fill="none"/><path d="M985 469 L1024 469 L1050 491 L1304 491 L1307 488" stroke="#c9383a" stroke-width="1.2" fill="none"/><circle cx="1307" cy="488" r="1.8" fill="#f2a22a"/><circle cx="1357" cy="468" r="1.8" fill="#f2a22a"/><path d="M1085 396 L1095 386 L1096 380" stroke="#c9383a" stroke-width="1" fill="none"/><path d="M1057 440 L1112 440 L1117 445 L1117 475 L1110 481" stroke="#c9383a" stroke-width="1" fill="none"/><text x="1004" y="360" font-size="12" fill="#34403d" font-weight="bold" font-family="Liberation Sans" text-anchor="start" >USB</text><text x="1004" y="374" font-size="12" fill="#34403d" font-weight="bold" font-family="Liberation Sans" text-anchor="start" >UART</text><text x="1030" y="339" font-size="8" fill="#3b4542" font-weight="normal" font-family="Liberation Mono" text-anchor="start" >J2</text><rect x="1042" y="340" width="24" height="9" rx="4.5" fill="none" stroke="#d5363b" stroke-width="2.2"/><rect x="1042" y="379" width="24" height="9" rx="4.5" fill="none" stroke="#d5363b" stroke-width="2.2"/><circle cx="1045" cy="352" r="5.5" fill="#7a2a88" opacity="0.85"/><circle cx="1045" cy="352" r="4.2" fill="#d5363b"/><circle cx="1045" cy="352" r="2.3100000000000005" fill="#f0c040"/><circle cx="1045" cy="352" r="1.596" fill="#0a1018"/><circle cx="1045" cy="361" r="5.5" fill="#7a2a88" opacity="0.85"/><circle cx="1045" cy="361" r="4.2" fill="#d5363b"/><circle cx="1045" cy="361" r="2.3100000000000005" fill="#f0c040"/><circle cx="1045" cy="361" r="1.596" fill="#0a1018"/><circle cx="1045" cy="371" r="5.5" fill="#7a2a88" opacity="0.85"/><circle cx="1045" cy="371" r="4.2" fill="#d5363b"/><circle cx="1045" cy="371" r="2.3100000000000005" fill="#f0c040"/><circle cx="1045" cy="371" r="1.596" fill="#0a1018"/><circle cx="1061" cy="357" r="5.5" fill="#7a2a88" opacity="0.85"/><circle cx="1061" cy="357" r="4.2" fill="#d5363b"/><circle cx="1061" cy="357" r="2.3100000000000005" fill="#f0c040"/><circle cx="1061" cy="357" r="1.596" fill="#0a1018"/><circle cx="1061" cy="366" r="5.5" fill="#7a2a88" opacity="0.85"/><circle cx="1061" cy="366" r="4.2" fill="#d5363b"/><circle cx="1061" cy="366" r="2.3100000000000005" fill="#f0c040"/><circle cx="1061" cy="366" r="1.596" fill="#0a1018"/><rect x="1087" y="344" width="24" height="24" fill="#d5363b" /><rect x="1083" y="344.9" width="3.5" height="1.2" fill="#d5363b" /><rect x="1111.5" y="344.9" width="3.5" height="1.2" fill="#d5363b" /><rect x="1087.9" y="340" width="1.2" height="3.5" fill="#d5363b" /><rect x="1087.9" y="368.5" width="1.2" height="3.5" fill="#d5363b" /><rect x="1083" y="347.9" width="3.5" height="1.2" fill="#d5363b" /><rect x="1111.5" y="347.9" width="3.5" height="1.2" fill="#d5363b" /><rect x="1090.9" y="340" width="1.2" height="3.5" fill="#d5363b" /><rect x="1090.9" y="368.5" width="1.2" height="3.5" fill="#d5363b" /><rect x="1083" y="350.9" width="3.5" height="1.2" fill="#d5363b" /><rect x="1111.5" y="350.9" width="3.5" height="1.2" fill="#d5363b" /><rect x="1093.9" y="340" width="1.2" height="3.5" fill="#d5363b" /><rect x="1093.9" y="368.5" width="1.2" height="3.5" fill="#d5363b" /><rect x="1083" y="353.9" width="3.5" height="1.2" fill="#d5363b" /><rect x="1111.5" y="353.9" width="3.5" height="1.2" fill="#d5363b" /><rect x="1096.9" y="340" width="1.2" height="3.5" fill="#d5363b" /><rect x="1096.9" y="368.5" width="1.2" height="3.5" fill="#d5363b" /><rect x="1083" y="356.9" width="3.5" height="1.2" fill="#d5363b" /><rect x="1111.5" y="356.9" width="3.5" height="1.2" fill="#d5363b" /><rect x="1099.9" y="340" width="1.2" height="3.5" fill="#d5363b" /><rect x="1099.9" y="368.5" width="1.2" height="3.5" fill="#d5363b" /><rect x="1083" y="359.9" width="3.5" height="1.2" fill="#d5363b" /><rect x="1111.5" y="359.9" width="3.5" height="1.2" fill="#d5363b" /><rect x="1102.9" y="340" width="1.2" height="3.5" fill="#d5363b" /><rect x="1102.9" y="368.5" width="1.2" height="3.5" fill="#d5363b" /><rect x="1083" y="362.9" width="3.5" height="1.2" fill="#d5363b" /><rect x="1111.5" y="362.9" width="3.5" height="1.2" fill="#d5363b" /><rect x="1105.9" y="340" width="1.2" height="3.5" fill="#d5363b" /><rect x="1105.9" y="368.5" width="1.2" height="3.5" fill="#d5363b" /><rect x="1083" y="365.9" width="3.5" height="1.2" fill="#d5363b" /><rect x="1111.5" y="365.9" width="3.5" height="1.2" fill="#d5363b" /><rect x="1108.9" y="340" width="1.2" height="3.5" fill="#d5363b" /><rect x="1108.9" y="368.5" width="1.2" height="3.5" fill="#d5363b" /><text x="1099" y="355" font-size="7" fill="#f4d0d0" font-weight="normal" font-family="Liberation Sans" text-anchor="middle" >25</text><text x="1099" y="362.65" font-size="5.6000000000000005" fill="#f4d0d0" font-weight="normal" font-family="Liberation Sans" text-anchor="middle" >GND</text><path d="M1052 352 L1063 345 L1075 345 L1083 350" stroke="#c9383a" stroke-width="1" fill="none"/><path d="M1100 340 L1100 332 L1110 325" stroke="#c9383a" stroke-width="1" fill="none"/><path d="M1104 340 L1104 334 L1113 328" stroke="#c9383a" stroke-width="1" fill="none"/><rect x="1100" y="370" width="12" height="6" fill="#d5363b" /><circle cx="1117" cy="373" r="1.8" fill="#f2a22a"/><circle cx="1120" cy="366" r="1.8" fill="#f2a22a"/><circle cx="1120" cy="370" r="1.8" fill="#f2a22a"/><path d="M726 276 L737 282 L1050 282 L1064 296 L1396 296 L1414 282" stroke="#c9383a" stroke-width="1.2" fill="none"/><rect x="931" y="276" width="7" height="12" fill="#d5363b" /><rect x="944" y="276" width="7" height="12" fill="#d5363b" /><path d="M1131 262 L1131 272 L1126 278 L1100 278" stroke="#c9383a" stroke-width="1.2" fill="none"/><rect x="1095" y="275" width="8" height="9" fill="#d5363b" /><rect x="1085" y="275" width="8" height="9" fill="#d5363b" /><rect x="1126" y="255" width="10" height="10" fill="#d5363b" /><path d="M1443 276 L1420 276 L1395 305 L1395 315" stroke="#c9383a" stroke-width="1.2" fill="none"/><rect x="1425" y="293" width="6" height="12" fill="#d5363b" /><circle cx="1434" cy="296" r="1.8" fill="#f2a22a"/><rect x="1030" y="417" width="104" height="47" fill="none" stroke="#452a55" stroke-width="0.9"/><rect x="1043" y="396" width="6" height="6" fill="#d5363b" /><rect x="1043" y="404" width="6" height="6" fill="#d5363b" /><circle cx="1046" cy="394" r="1.4" fill="#f2a22a"/><rect x="1051.3" y="396" width="6" height="6" fill="#d5363b" /><rect x="1051.3" y="404" width="6" height="6" fill="#d5363b" /><circle cx="1054.3" cy="394" r="1.4" fill="#f2a22a"/><rect x="1059.6" y="396" width="6" height="6" fill="#d5363b" /><rect x="1059.6" y="404" width="6" height="6" fill="#d5363b" /><circle cx="1062.6" cy="394" r="1.4" fill="#f2a22a"/><rect x="1067.9" y="396" width="6" height="6" fill="#d5363b" /><rect x="1067.9" y="404" width="6" height="6" fill="#d5363b" /><circle cx="1070.9" cy="394" r="1.4" fill="#f2a22a"/><rect x="1076.2" y="396" width="6" height="6" fill="#d5363b" /><rect x="1076.2" y="404" width="6" height="6" fill="#d5363b" /><circle cx="1079.2" cy="394" r="1.4" fill="#f2a22a"/><rect x="1084.5" y="396" width="6" height="6" fill="#d5363b" /><rect x="1084.5" y="404" width="6" height="6" fill="#d5363b" /><circle cx="1087.5" cy="394" r="1.4" fill="#f2a22a"/><rect x="1092.8" y="396" width="6" height="6" fill="#d5363b" /><rect x="1092.8" y="404" width="6" height="6" fill="#d5363b" /><circle cx="1095.8" cy="394" r="1.4" fill="#f2a22a"/><rect x="1101.1" y="396" width="6" height="6" fill="#d5363b" /><rect x="1101.1" y="404" width="6" height="6" fill="#d5363b" /><circle cx="1104.1" cy="394" r="1.4" fill="#f2a22a"/><rect x="1109.4" y="396" width="6" height="6" fill="#d5363b" /><rect x="1109.4" y="404" width="6" height="6" fill="#d5363b" /><circle cx="1112.4" cy="394" r="1.4" fill="#f2a22a"/><rect x="1044" y="418" width="8" height="20" fill="#d5363b" /><rect x="1044" y="443" width="8" height="21" fill="#d5363b" /><circle cx="1048" cy="416" r="1.5" fill="#f2a22a"/><circle cx="1048" cy="466" r="1.5" fill="#f2a22a"/><rect x="1056.2" y="418" width="8" height="20" fill="#d5363b" /><rect x="1056.2" y="443" width="8" height="21" fill="#d5363b" /><circle cx="1060.2" cy="416" r="1.5" fill="#f2a22a"/><circle cx="1060.2" cy="466" r="1.5" fill="#f2a22a"/><rect x="1068.4" y="418" width="8" height="20" fill="#d5363b" /><rect x="1068.4" y="443" width="8" height="21" fill="#d5363b" /><circle cx="1072.4" cy="416" r="1.5" fill="#f2a22a"/><circle cx="1072.4" cy="466" r="1.5" fill="#f2a22a"/><rect x="1080.6" y="418" width="8" height="20" fill="#d5363b" /><rect x="1080.6" y="443" width="8" height="21" fill="#d5363b" /><circle cx="1084.6" cy="416" r="1.5" fill="#f2a22a"/><circle cx="1084.6" cy="466" r="1.5" fill="#f2a22a"/><rect x="1092.8" y="418" width="8" height="20" fill="#d5363b" /><rect x="1092.8" y="443" width="8" height="21" fill="#d5363b" /><circle cx="1096.8" cy="416" r="1.5" fill="#f2a22a"/><circle cx="1096.8" cy="466" r="1.5" fill="#f2a22a"/><rect x="1105" y="418" width="8" height="20" fill="#d5363b" /><rect x="1105" y="443" width="8" height="21" fill="#d5363b" /><circle cx="1109" cy="416" r="1.5" fill="#f2a22a"/><circle cx="1109" cy="466" r="1.5" fill="#f2a22a"/><rect x="1117.2" y="418" width="8" height="20" fill="#d5363b" /><rect x="1117.2" y="443" width="8" height="21" fill="#d5363b" /><circle cx="1121.2" cy="416" r="1.5" fill="#f2a22a"/><circle cx="1121.2" cy="466" r="1.5" fill="#f2a22a"/><circle cx="1050" cy="440" r="4" fill="#22c2d2"/><circle cx="1111" cy="440" r="4" fill="#22c2d2"/><path d="M1007 422 L1022 410 L1045 410" stroke="#c9383a" stroke-width="1" fill="none"/><circle cx="1007" cy="422" r="1.8" fill="#f2a22a"/><circle cx="1019" cy="385" r="1.8" fill="#f2a22a"/><path d="M1006 382 L985 362 L985 345" stroke="#c9383a" stroke-width="1" fill="none"/><rect x="1027" y="492" width="49" height="11" fill="#d5363b" /><circle cx="1029" cy="489" r="1.3" fill="#f2a22a"/><circle cx="1035.2" cy="489" r="1.3" fill="#f2a22a"/><circle cx="1041.4" cy="489" r="1.3" fill="#f2a22a"/><circle cx="1047.6" cy="489" r="1.3" fill="#f2a22a"/><circle cx="1053.8" cy="489" r="1.3" fill="#f2a22a"/><circle cx="1060" cy="489" r="1.3" fill="#f2a22a"/><circle cx="1066.2" cy="489" r="1.3" fill="#f2a22a"/><circle cx="1072.4" cy="489" r="1.3" fill="#f2a22a"/><rect x="1027" y="527" width="49" height="11" fill="#d5363b" /><circle cx="1029" cy="541" r="1.3" fill="#f2a22a"/><circle cx="1035.2" cy="541" r="1.3" fill="#f2a22a"/><circle cx="1041.4" cy="541" r="1.3" fill="#f2a22a"/><circle cx="1047.6" cy="541" r="1.3" fill="#f2a22a"/><circle cx="1053.8" cy="541" r="1.3" fill="#f2a22a"/><circle cx="1060" cy="541" r="1.3" fill="#f2a22a"/><circle cx="1066.2" cy="541" r="1.3" fill="#f2a22a"/><circle cx="1072.4" cy="541" r="1.3" fill="#f2a22a"/><rect x="1025" y="485" width="53" height="55" fill="none" stroke="#452a55" stroke-width="0.8"/><path d="M1045 503 L1045 512 L1050 515 L1152 515 L1168 500 L1223 500" stroke="#c9383a" stroke-width="1.2" fill="none"/><circle cx="1223" cy="500" r="1.8" fill="#f2a22a"/><path d="M1050 527 L1057 520" stroke="#c9383a" stroke-width="1" fill="none"/><path d="M1080 533 L1088 538" stroke="#c9383a" stroke-width="1" fill="none"/><path d="M934 574 L956 552 L1022 552" stroke="#c9383a" stroke-width="1.1" fill="none"/><circle cx="934" cy="574" r="1.8" fill="#f2a22a"/><circle cx="1022" cy="552" r="1.8" fill="#f2a22a"/><path d="M968 573 L986 556 L1037 556 L1042 549 L1042 540" stroke="#c9383a" stroke-width="1.1" fill="none"/><circle cx="968" cy="573" r="1.8" fill="#f2a22a"/><circle cx="838" cy="561" r="1.5" fill="#f2a22a"/><circle cx="848" cy="563" r="1.5" fill="#f2a22a"/><circle cx="853" cy="562" r="1.5" fill="#f2a22a"/><circle cx="861" cy="563" r="1.5" fill="#f2a22a"/><rect x="832" y="570" width="13" height="6" fill="#d5363b" /><circle cx="829" cy="573" r="1.8" fill="#f2a22a"/><circle cx="848" cy="573" r="1.8" fill="#f2a22a"/><rect x="1027" y="541" width="11" height="6" fill="#d5363b" /><circle cx="1110" cy="538" r="1.8" fill="#f2a22a"/><circle cx="1120" cy="525" r="1.8" fill="#f2a22a"/><path d="M1075 518 L1093 518 L1105 530 L1105 536" stroke="#c9383a" stroke-width="1" fill="none"/><circle cx="1128" cy="522" r="1.8" fill="#f2a22a"/><circle cx="1133" cy="522" r="1.8" fill="#f2a22a"/><text x="1141" y="459" font-size="14" fill="#34403d" font-weight="bold" font-family="Liberation Mono" text-anchor="start" textLength="123" lengthAdjust="spacingAndGlyphs">VME Base Address</text><text x="1100" y="490" font-size="10" fill="#34403d" font-weight="bold" font-family="Liberation Mono" text-anchor="start" >JTAG</text><path d="M1146 375 L1146 565" stroke="#1e2a50" stroke-width="1"/><rect x="1291" y="318" width="64" height="64" fill="none" stroke="#452a55" stroke-width="0.8"/><rect x="1291" y="385" width="64" height="65" fill="none" stroke="#452a55" stroke-width="0.8"/><text x="1300" y="314" font-size="9" fill="#3b4542" font-weight="normal" font-family="Liberation Mono" text-anchor="start" >IC52</text><text x="1315" y="460" font-size="9" fill="#3b4542" font-weight="normal" font-family="Liberation Mono" text-anchor="start" >IC53</text><rect x="1295" y="322" width="14" height="5" fill="#d5363b" /><rect x="1338" y="322" width="14" height="5" fill="#d5363b" /><rect x="1295" y="389" width="14" height="5" fill="#d5363b" /><rect x="1338" y="389" width="14" height="5" fill="#d5363b" /><rect x="1295" y="329.6" width="14" height="5" fill="#d5363b" /><rect x="1338" y="329.6" width="14" height="5" fill="#d5363b" /><rect x="1295" y="396.6" width="14" height="5" fill="#d5363b" /><rect x="1338" y="396.6" width="14" height="5" fill="#d5363b" /><rect x="1295" y="337.2" width="14" height="5" fill="#d5363b" /><rect x="1338" y="337.2" width="14" height="5" fill="#d5363b" /><rect x="1295" y="404.2" width="14" height="5" fill="#d5363b" /><rect x="1338" y="404.2" width="14" height="5" fill="#d5363b" /><rect x="1295" y="344.8" width="14" height="5" fill="#d5363b" /><rect x="1338" y="344.8" width="14" height="5" fill="#d5363b" /><rect x="1295" y="411.8" width="14" height="5" fill="#d5363b" /><rect x="1338" y="411.8" width="14" height="5" fill="#d5363b" /><rect x="1295" y="352.4" width="14" height="5" fill="#d5363b" /><rect x="1338" y="352.4" width="14" height="5" fill="#d5363b" /><rect x="1295" y="419.4" width="14" height="5" fill="#d5363b" /><rect x="1338" y="419.4" width="14" height="5" fill="#d5363b" /><rect x="1295" y="360" width="14" height="5" fill="#d5363b" /><rect x="1338" y="360" width="14" height="5" fill="#d5363b" /><rect x="1295" y="427" width="14" height="5" fill="#d5363b" /><rect x="1338" y="427" width="14" height="5" fill="#d5363b" /><rect x="1295" y="367.6" width="14" height="5" fill="#d5363b" /><rect x="1338" y="367.6" width="14" height="5" fill="#d5363b" /><rect x="1295" y="434.6" width="14" height="5" fill="#d5363b" /><rect x="1338" y="434.6" width="14" height="5" fill="#d5363b" /><rect x="1295" y="375.2" width="14" height="5" fill="#d5363b" /><rect x="1338" y="375.2" width="14" height="5" fill="#d5363b" /><rect x="1295" y="442.2" width="14" height="5" fill="#d5363b" /><rect x="1338" y="442.2" width="14" height="5" fill="#d5363b" /><circle cx="1292" cy="324" r="1.5" fill="#f2a22a"/><circle cx="1292" cy="345" r="1.5" fill="#f2a22a"/><circle cx="1292" cy="360" r="1.5" fill="#f2a22a"/><circle cx="1292" cy="376" r="1.5" fill="#f2a22a"/><circle cx="1292" cy="394" r="1.5" fill="#f2a22a"/><circle cx="1292" cy="413" r="1.5" fill="#f2a22a"/><circle cx="1292" cy="428" r="1.5" fill="#f2a22a"/><circle cx="1292" cy="444" r="1.5" fill="#f2a22a"/><circle cx="1355" cy="331" r="1.5" fill="#f2a22a"/><circle cx="1355" cy="346" r="1.5" fill="#f2a22a"/><circle cx="1355" cy="364" r="1.5" fill="#f2a22a"/><circle cx="1355" cy="398" r="1.5" fill="#f2a22a"/><circle cx="1355" cy="421" r="1.5" fill="#f2a22a"/><circle cx="1355" cy="436" r="1.5" fill="#f2a22a"/><rect x="1356" y="322" width="14" height="6" fill="#d5363b" /><circle cx="1359" cy="318" r="1.8" fill="#f2a22a"/><rect x="1172" y="385" width="73" height="58" fill="none" stroke="#452a55" stroke-width="0.8"/><text x="1160" y="414" font-size="9" fill="#3b4542" font-weight="normal" font-family="Liberation Mono" text-anchor="start" >SW2</text><rect x="1181" y="373" width="6" height="10" fill="#d5363b" /><rect x="1181" y="386" width="6" height="12" fill="#d5363b" /><rect x="1181" y="432" width="6" height="11" fill="#d5363b" /><circle cx="1184" cy="370" r="1.4" fill="#f2a22a"/><rect x="1188.6" y="373" width="6" height="10" fill="#d5363b" /><rect x="1188.6" y="386" width="6" height="12" fill="#d5363b" /><rect x="1188.6" y="432" width="6" height="11" fill="#d5363b" /><circle cx="1191.6" cy="370" r="1.4" fill="#f2a22a"/><rect x="1196.2" y="373" width="6" height="10" fill="#d5363b" /><rect x="1196.2" y="386" width="6" height="12" fill="#d5363b" /><rect x="1196.2" y="432" width="6" height="11" fill="#d5363b" /><circle cx="1199.2" cy="370" r="1.4" fill="#f2a22a"/><rect x="1203.8" y="373" width="6" height="10" fill="#d5363b" /><rect x="1203.8" y="386" width="6" height="12" fill="#d5363b" /><rect x="1203.8" y="432" width="6" height="11" fill="#d5363b" /><circle cx="1206.8" cy="370" r="1.4" fill="#f2a22a"/><rect x="1211.4" y="373" width="6" height="10" fill="#d5363b" /><rect x="1211.4" y="386" width="6" height="12" fill="#d5363b" /><rect x="1211.4" y="432" width="6" height="11" fill="#d5363b" /><circle cx="1214.4" cy="370" r="1.4" fill="#f2a22a"/><rect x="1219" y="373" width="6" height="10" fill="#d5363b" /><rect x="1219" y="386" width="6" height="12" fill="#d5363b" /><rect x="1219" y="432" width="6" height="11" fill="#d5363b" /><circle cx="1222" cy="370" r="1.4" fill="#f2a22a"/><rect x="1226.6" y="373" width="6" height="10" fill="#d5363b" /><rect x="1226.6" y="386" width="6" height="12" fill="#d5363b" /><rect x="1226.6" y="432" width="6" height="11" fill="#d5363b" /><circle cx="1229.6" cy="370" r="1.4" fill="#f2a22a"/><rect x="1234.2" y="373" width="6" height="10" fill="#d5363b" /><rect x="1234.2" y="386" width="6" height="12" fill="#d5363b" /><rect x="1234.2" y="432" width="6" height="11" fill="#d5363b" /><circle cx="1237.2" cy="370" r="1.4" fill="#f2a22a"/><g fill="none" stroke="#2e3c3a" stroke-width="0.8"><rect x="1181.0" y="402" width="6" height="10"/><rect x="1188.6" y="402" width="6" height="10"/><rect x="1196.2" y="402" width="6" height="10"/><rect x="1203.8" y="402" width="6" height="10"/><rect x="1211.4" y="402" width="6" height="10"/><rect x="1219.0" y="402" width="6" height="10"/><rect x="1226.6" y="402" width="6" height="10"/><rect x="1234.2" y="402" width="6" height="10"/></g><text x="1228" y="426" font-size="8" fill="#3b4542" font-weight="normal" font-family="Liberation Mono" text-anchor="start" >ON</text><path d="M1240 392 L1250 392 L1280 352 L1292 352" stroke="#c9383a" stroke-width="1" fill="none"/><path d="M1240 394 L1253 394 L1282 356 L1292 356" stroke="#c9383a" stroke-width="1" fill="none"/><path d="M1240 396 L1256 396 L1284 360 L1292 360" stroke="#c9383a" stroke-width="1" fill="none"/><path d="M1240 398 L1259 398 L1286 364 L1292 364" stroke="#c9383a" stroke-width="1" fill="none"/><path d="M1240 400 L1262 400 L1288 368 L1292 368" stroke="#c9383a" stroke-width="1" fill="none"/><path d="M1240 412 L1262 412 L1280 398 L1292 398" stroke="#c9383a" stroke-width="1" fill="none"/><path d="M1240 415 L1262 415 L1280 406 L1292 406" stroke="#c9383a" stroke-width="1" fill="none"/><path d="M1240 418 L1262 418 L1280 414 L1292 414" stroke="#c9383a" stroke-width="1" fill="none"/><path d="M1240 421 L1262 421 L1280 422 L1292 422" stroke="#c9383a" stroke-width="1" fill="none"/><path d="M1309 330 L1318 335 L1318 380 L1313 385" stroke="#c9383a" stroke-width="1" fill="none"/><path d="M1309 338 L1322 343 L1322 382" stroke="#c9383a" stroke-width="1" fill="none"/><path d="M1326 412 L1326 435 L1320 442" stroke="#c9383a" stroke-width="1" fill="none"/><path d="M1352 432 L1332 445 L1332 452 L1340 455 L1425 455" stroke="#c9383a" stroke-width="1" fill="none"/><path d="M1352 405 L1380 405 L1385 412 L1427 412" stroke="#c9383a" stroke-width="1" fill="none"/><path d="M1352 336 L1362 336 L1365 340 L1365 398 L1358 398" stroke="#c9383a" stroke-width="1" fill="none"/><path d="M1370 318 L1370 300 L1375 296" stroke="#c9383a" stroke-width="1" fill="none"/><rect x="1423" y="304" width="64" height="79" fill="none" stroke="#452a55" stroke-width="0.8"/><rect x="1426" y="307" width="11" height="73" fill="#d5363b" /><rect x="1426" y="308" width="11" height="0.6" fill="#a02a30" /><rect x="1426" y="310.5" width="11" height="0.6" fill="#a02a30" /><rect x="1426" y="313" width="11" height="0.6" fill="#a02a30" /><rect x="1426" y="315.5" width="11" height="0.6" fill="#a02a30" /><rect x="1426" y="318" width="11" height="0.6" fill="#a02a30" /><rect x="1426" y="320.5" width="11" height="0.6" fill="#a02a30" /><rect x="1426" y="323" width="11" height="0.6" fill="#a02a30" /><rect x="1426" y="325.5" width="11" height="0.6" fill="#a02a30" /><rect x="1426" y="328" width="11" height="0.6" fill="#a02a30" /><rect x="1426" y="330.5" width="11" height="0.6" fill="#a02a30" /><rect x="1426" y="333" width="11" height="0.6" fill="#a02a30" /><rect x="1426" y="335.5" width="11" height="0.6" fill="#a02a30" /><rect x="1426" y="338" width="11" height="0.6" fill="#a02a30" /><rect x="1426" y="340.5" width="11" height="0.6" fill="#a02a30" /><rect x="1426" y="343" width="11" height="0.6" fill="#a02a30" /><rect x="1426" y="345.5" width="11" height="0.6" fill="#a02a30" /><rect x="1426" y="348" width="11" height="0.6" fill="#a02a30" /><rect x="1426" y="350.5" width="11" height="0.6" fill="#a02a30" /><rect x="1426" y="353" width="11" height="0.6" fill="#a02a30" /><rect x="1426" y="355.5" width="11" height="0.6" fill="#a02a30" /><rect x="1426" y="358" width="11" height="0.6" fill="#a02a30" /><rect x="1426" y="360.5" width="11" height="0.6" fill="#a02a30" /><rect x="1426" y="363" width="11" height="0.6" fill="#a02a30" /><rect x="1426" y="365.5" width="11" height="0.6" fill="#a02a30" /><rect x="1426" y="368" width="11" height="0.6" fill="#a02a30" /><rect x="1426" y="370.5" width="11" height="0.6" fill="#a02a30" /><rect x="1426" y="373" width="11" height="0.6" fill="#a02a30" /><rect x="1426" y="375.5" width="11" height="0.6" fill="#a02a30" /><rect x="1426" y="378" width="11" height="0.6" fill="#a02a30" /><rect x="1472" y="307" width="11" height="73" fill="#d5363b" /><rect x="1472" y="308" width="11" height="0.6" fill="#a02a30" /><rect x="1472" y="310.5" width="11" height="0.6" fill="#a02a30" /><rect x="1472" y="313" width="11" height="0.6" fill="#a02a30" /><rect x="1472" y="315.5" width="11" height="0.6" fill="#a02a30" /><rect x="1472" y="318" width="11" height="0.6" fill="#a02a30" /><rect x="1472" y="320.5" width="11" height="0.6" fill="#a02a30" /><rect x="1472" y="323" width="11" height="0.6" fill="#a02a30" /><rect x="1472" y="325.5" width="11" height="0.6" fill="#a02a30" /><rect x="1472" y="328" width="11" height="0.6" fill="#a02a30" /><rect x="1472" y="330.5" width="11" height="0.6" fill="#a02a30" /><rect x="1472" y="333" width="11" height="0.6" fill="#a02a30" /><rect x="1472" y="335.5" width="11" height="0.6" fill="#a02a30" /><rect x="1472" y="338" width="11" height="0.6" fill="#a02a30" /><rect x="1472" y="340.5" width="11" height="0.6" fill="#a02a30" /><rect x="1472" y="343" width="11" height="0.6" fill="#a02a30" /><rect x="1472" y="345.5" width="11" height="0.6" fill="#a02a30" /><rect x="1472" y="348" width="11" height="0.6" fill="#a02a30" /><rect x="1472" y="350.5" width="11" height="0.6" fill="#a02a30" /><rect x="1472" y="353" width="11" height="0.6" fill="#a02a30" /><rect x="1472" y="355.5" width="11" height="0.6" fill="#a02a30" /><rect x="1472" y="358" width="11" height="0.6" fill="#a02a30" /><rect x="1472" y="360.5" width="11" height="0.6" fill="#a02a30" /><rect x="1472" y="363" width="11" height="0.6" fill="#a02a30" /><rect x="1472" y="365.5" width="11" height="0.6" fill="#a02a30" /><rect x="1472" y="368" width="11" height="0.6" fill="#a02a30" /><rect x="1472" y="370.5" width="11" height="0.6" fill="#a02a30" /><rect x="1472" y="373" width="11" height="0.6" fill="#a02a30" /><rect x="1472" y="375.5" width="11" height="0.6" fill="#a02a30" /><rect x="1472" y="378" width="11" height="0.6" fill="#a02a30" /><circle cx="1421" cy="311" r="1.5" fill="#f2a22a"/><circle cx="1440" cy="313" r="1.5" fill="#f2a22a"/><circle cx="1466" cy="310" r="1.5" fill="#f2a22a"/><circle cx="1487" cy="315" r="1.5" fill="#f2a22a"/><circle cx="1417" cy="323" r="1.5" fill="#f2a22a"/><circle cx="1440" cy="324" r="1.5" fill="#f2a22a"/><circle cx="1466" cy="322" r="1.5" fill="#f2a22a"/><circle cx="1487" cy="327" r="1.5" fill="#f2a22a"/><circle cx="1421" cy="335" r="1.5" fill="#f2a22a"/><circle cx="1440" cy="335" r="1.5" fill="#f2a22a"/><circle cx="1466" cy="334" r="1.5" fill="#f2a22a"/><circle cx="1487" cy="339" r="1.5" fill="#f2a22a"/><circle cx="1417" cy="347" r="1.5" fill="#f2a22a"/><circle cx="1440" cy="346" r="1.5" fill="#f2a22a"/><circle cx="1466" cy="346" r="1.5" fill="#f2a22a"/><circle cx="1487" cy="351" r="1.5" fill="#f2a22a"/><circle cx="1421" cy="359" r="1.5" fill="#f2a22a"/><circle cx="1440" cy="357" r="1.5" fill="#f2a22a"/><circle cx="1466" cy="358" r="1.5" fill="#f2a22a"/><circle cx="1487" cy="363" r="1.5" fill="#f2a22a"/><circle cx="1417" cy="371" r="1.5" fill="#f2a22a"/><circle cx="1440" cy="368" r="1.5" fill="#f2a22a"/><circle cx="1466" cy="370" r="1.5" fill="#f2a22a"/><circle cx="1487" cy="375" r="1.5" fill="#f2a22a"/><rect x="1408" y="317" width="12" height="6" fill="#d5363b" /><rect x="1408" y="349" width="12" height="6" fill="#d5363b" /><rect x="1489" y="323" width="12" height="6" fill="#d5363b" /><rect x="1489" y="345" width="12" height="6" fill="#d5363b" /><rect x="1489" y="367" width="12" height="6" fill="#d5363b" /><text x="1440" y="302" font-size="9" fill="#3b4542" font-weight="normal" font-family="Liberation Mono" text-anchor="start" >IC9</text><rect x="1423" y="386" width="64" height="79" fill="none" stroke="#452a55" stroke-width="0.8"/><rect x="1426" y="389" width="11" height="73" fill="#d5363b" /><rect x="1426" y="390" width="11" height="0.6" fill="#a02a30" /><rect x="1426" y="392.5" width="11" height="0.6" fill="#a02a30" /><rect x="1426" y="395" width="11" height="0.6" fill="#a02a30" /><rect x="1426" y="397.5" width="11" height="0.6" fill="#a02a30" /><rect x="1426" y="400" width="11" height="0.6" fill="#a02a30" /><rect x="1426" y="402.5" width="11" height="0.6" fill="#a02a30" /><rect x="1426" y="405" width="11" height="0.6" fill="#a02a30" /><rect x="1426" y="407.5" width="11" height="0.6" fill="#a02a30" /><rect x="1426" y="410" width="11" height="0.6" fill="#a02a30" /><rect x="1426" y="412.5" width="11" height="0.6" fill="#a02a30" /><rect x="1426" y="415" width="11" height="0.6" fill="#a02a30" /><rect x="1426" y="417.5" width="11" height="0.6" fill="#a02a30" /><rect x="1426" y="420" width="11" height="0.6" fill="#a02a30" /><rect x="1426" y="422.5" width="11" height="0.6" fill="#a02a30" /><rect x="1426" y="425" width="11" height="0.6" fill="#a02a30" /><rect x="1426" y="427.5" width="11" height="0.6" fill="#a02a30" /><rect x="1426" y="430" width="11" height="0.6" fill="#a02a30" /><rect x="1426" y="432.5" width="11" height="0.6" fill="#a02a30" /><rect x="1426" y="435" width="11" height="0.6" fill="#a02a30" /><rect x="1426" y="437.5" width="11" height="0.6" fill="#a02a30" /><rect x="1426" y="440" width="11" height="0.6" fill="#a02a30" /><rect x="1426" y="442.5" width="11" height="0.6" fill="#a02a30" /><rect x="1426" y="445" width="11" height="0.6" fill="#a02a30" /><rect x="1426" y="447.5" width="11" height="0.6" fill="#a02a30" /><rect x="1426" y="450" width="11" height="0.6" fill="#a02a30" /><rect x="1426" y="452.5" width="11" height="0.6" fill="#a02a30" /><rect x="1426" y="455" width="11" height="0.6" fill="#a02a30" /><rect x="1426" y="457.5" width="11" height="0.6" fill="#a02a30" /><rect x="1426" y="460" width="11" height="0.6" fill="#a02a30" /><rect x="1472" y="389" width="11" height="73" fill="#d5363b" /><rect x="1472" y="390" width="11" height="0.6" fill="#a02a30" /><rect x="1472" y="392.5" width="11" height="0.6" fill="#a02a30" /><rect x="1472" y="395" width="11" height="0.6" fill="#a02a30" /><rect x="1472" y="397.5" width="11" height="0.6" fill="#a02a30" /><rect x="1472" y="400" width="11" height="0.6" fill="#a02a30" /><rect x="1472" y="402.5" width="11" height="0.6" fill="#a02a30" /><rect x="1472" y="405" width="11" height="0.6" fill="#a02a30" /><rect x="1472" y="407.5" width="11" height="0.6" fill="#a02a30" /><rect x="1472" y="410" width="11" height="0.6" fill="#a02a30" /><rect x="1472" y="412.5" width="11" height="0.6" fill="#a02a30" /><rect x="1472" y="415" width="11" height="0.6" fill="#a02a30" /><rect x="1472" y="417.5" width="11" height="0.6" fill="#a02a30" /><rect x="1472" y="420" width="11" height="0.6" fill="#a02a30" /><rect x="1472" y="422.5" width="11" height="0.6" fill="#a02a30" /><rect x="1472" y="425" width="11" height="0.6" fill="#a02a30" /><rect x="1472" y="427.5" width="11" height="0.6" fill="#a02a30" /><rect x="1472" y="430" width="11" height="0.6" fill="#a02a30" /><rect x="1472" y="432.5" width="11" height="0.6" fill="#a02a30" /><rect x="1472" y="435" width="11" height="0.6" fill="#a02a30" /><rect x="1472" y="437.5" width="11" height="0.6" fill="#a02a30" /><rect x="1472" y="440" width="11" height="0.6" fill="#a02a30" /><rect x="1472" y="442.5" width="11" height="0.6" fill="#a02a30" /><rect x="1472" y="445" width="11" height="0.6" fill="#a02a30" /><rect x="1472" y="447.5" width="11" height="0.6" fill="#a02a30" /><rect x="1472" y="450" width="11" height="0.6" fill="#a02a30" /><rect x="1472" y="452.5" width="11" height="0.6" fill="#a02a30" /><rect x="1472" y="455" width="11" height="0.6" fill="#a02a30" /><rect x="1472" y="457.5" width="11" height="0.6" fill="#a02a30" /><rect x="1472" y="460" width="11" height="0.6" fill="#a02a30" /><circle cx="1421" cy="393" r="1.5" fill="#f2a22a"/><circle cx="1440" cy="395" r="1.5" fill="#f2a22a"/><circle cx="1466" cy="392" r="1.5" fill="#f2a22a"/><circle cx="1487" cy="397" r="1.5" fill="#f2a22a"/><circle cx="1417" cy="405" r="1.5" fill="#f2a22a"/><circle cx="1440" cy="406" r="1.5" fill="#f2a22a"/><circle cx="1466" cy="404" r="1.5" fill="#f2a22a"/><circle cx="1487" cy="409" r="1.5" fill="#f2a22a"/><circle cx="1421" cy="417" r="1.5" fill="#f2a22a"/><circle cx="1440" cy="417" r="1.5" fill="#f2a22a"/><circle cx="1466" cy="416" r="1.5" fill="#f2a22a"/><circle cx="1487" cy="421" r="1.5" fill="#f2a22a"/><circle cx="1417" cy="429" r="1.5" fill="#f2a22a"/><circle cx="1440" cy="428" r="1.5" fill="#f2a22a"/><circle cx="1466" cy="428" r="1.5" fill="#f2a22a"/><circle cx="1487" cy="433" r="1.5" fill="#f2a22a"/><circle cx="1421" cy="441" r="1.5" fill="#f2a22a"/><circle cx="1440" cy="439" r="1.5" fill="#f2a22a"/><circle cx="1466" cy="440" r="1.5" fill="#f2a22a"/><circle cx="1487" cy="445" r="1.5" fill="#f2a22a"/><circle cx="1417" cy="453" r="1.5" fill="#f2a22a"/><circle cx="1440" cy="450" r="1.5" fill="#f2a22a"/><circle cx="1466" cy="452" r="1.5" fill="#f2a22a"/><circle cx="1487" cy="457" r="1.5" fill="#f2a22a"/><rect x="1408" y="399" width="12" height="6" fill="#d5363b" /><rect x="1408" y="431" width="12" height="6" fill="#d5363b" /><rect x="1489" y="405" width="12" height="6" fill="#d5363b" /><rect x="1489" y="427" width="12" height="6" fill="#d5363b" /><rect x="1489" y="449" width="12" height="6" fill="#d5363b" /><text x="1440" y="384" font-size="9" fill="#3b4542" font-weight="normal" font-family="Liberation Mono" text-anchor="start" >IC17</text><rect x="1423" y="492" width="64" height="79" fill="none" stroke="#452a55" stroke-width="0.8"/><rect x="1426" y="495" width="11" height="73" fill="#d5363b" /><rect x="1426" y="496" width="11" height="0.6" fill="#a02a30" /><rect x="1426" y="498.5" width="11" height="0.6" fill="#a02a30" /><rect x="1426" y="501" width="11" height="0.6" fill="#a02a30" /><rect x="1426" y="503.5" width="11" height="0.6" fill="#a02a30" /><rect x="1426" y="506" width="11" height="0.6" fill="#a02a30" /><rect x="1426" y="508.5" width="11" height="0.6" fill="#a02a30" /><rect x="1426" y="511" width="11" height="0.6" fill="#a02a30" /><rect x="1426" y="513.5" width="11" height="0.6" fill="#a02a30" /><rect x="1426" y="516" width="11" height="0.6" fill="#a02a30" /><rect x="1426" y="518.5" width="11" height="0.6" fill="#a02a30" /><rect x="1426" y="521" width="11" height="0.6" fill="#a02a30" /><rect x="1426" y="523.5" width="11" height="0.6" fill="#a02a30" /><rect x="1426" y="526" width="11" height="0.6" fill="#a02a30" /><rect x="1426" y="528.5" width="11" height="0.6" fill="#a02a30" /><rect x="1426" y="531" width="11" height="0.6" fill="#a02a30" /><rect x="1426" y="533.5" width="11" height="0.6" fill="#a02a30" /><rect x="1426" y="536" width="11" height="0.6" fill="#a02a30" /><rect x="1426" y="538.5" width="11" height="0.6" fill="#a02a30" /><rect x="1426" y="541" width="11" height="0.6" fill="#a02a30" /><rect x="1426" y="543.5" width="11" height="0.6" fill="#a02a30" /><rect x="1426" y="546" width="11" height="0.6" fill="#a02a30" /><rect x="1426" y="548.5" width="11" height="0.6" fill="#a02a30" /><rect x="1426" y="551" width="11" height="0.6" fill="#a02a30" /><rect x="1426" y="553.5" width="11" height="0.6" fill="#a02a30" /><rect x="1426" y="556" width="11" height="0.6" fill="#a02a30" /><rect x="1426" y="558.5" width="11" height="0.6" fill="#a02a30" /><rect x="1426" y="561" width="11" height="0.6" fill="#a02a30" /><rect x="1426" y="563.5" width="11" height="0.6" fill="#a02a30" /><rect x="1426" y="566" width="11" height="0.6" fill="#a02a30" /><rect x="1472" y="495" width="11" height="73" fill="#d5363b" /><rect x="1472" y="496" width="11" height="0.6" fill="#a02a30" /><rect x="1472" y="498.5" width="11" height="0.6" fill="#a02a30" /><rect x="1472" y="501" width="11" height="0.6" fill="#a02a30" /><rect x="1472" y="503.5" width="11" height="0.6" fill="#a02a30" /><rect x="1472" y="506" width="11" height="0.6" fill="#a02a30" /><rect x="1472" y="508.5" width="11" height="0.6" fill="#a02a30" /><rect x="1472" y="511" width="11" height="0.6" fill="#a02a30" /><rect x="1472" y="513.5" width="11" height="0.6" fill="#a02a30" /><rect x="1472" y="516" width="11" height="0.6" fill="#a02a30" /><rect x="1472" y="518.5" width="11" height="0.6" fill="#a02a30" /><rect x="1472" y="521" width="11" height="0.6" fill="#a02a30" /><rect x="1472" y="523.5" width="11" height="0.6" fill="#a02a30" /><rect x="1472" y="526" width="11" height="0.6" fill="#a02a30" /><rect x="1472" y="528.5" width="11" height="0.6" fill="#a02a30" /><rect x="1472" y="531" width="11" height="0.6" fill="#a02a30" /><rect x="1472" y="533.5" width="11" height="0.6" fill="#a02a30" /><rect x="1472" y="536" width="11" height="0.6" fill="#a02a30" /><rect x="1472" y="538.5" width="11" height="0.6" fill="#a02a30" /><rect x="1472" y="541" width="11" height="0.6" fill="#a02a30" /><rect x="1472" y="543.5" width="11" height="0.6" fill="#a02a30" /><rect x="1472" y="546" width="11" height="0.6" fill="#a02a30" /><rect x="1472" y="548.5" width="11" height="0.6" fill="#a02a30" /><rect x="1472" y="551" width="11" height="0.6" fill="#a02a30" /><rect x="1472" y="553.5" width="11" height="0.6" fill="#a02a30" /><rect x="1472" y="556" width="11" height="0.6" fill="#a02a30" /><rect x="1472" y="558.5" width="11" height="0.6" fill="#a02a30" /><rect x="1472" y="561" width="11" height="0.6" fill="#a02a30" /><rect x="1472" y="563.5" width="11" height="0.6" fill="#a02a30" /><rect x="1472" y="566" width="11" height="0.6" fill="#a02a30" /><circle cx="1421" cy="499" r="1.5" fill="#f2a22a"/><circle cx="1440" cy="501" r="1.5" fill="#f2a22a"/><circle cx="1466" cy="498" r="1.5" fill="#f2a22a"/><circle cx="1487" cy="503" r="1.5" fill="#f2a22a"/><circle cx="1417" cy="511" r="1.5" fill="#f2a22a"/><circle cx="1440" cy="512" r="1.5" fill="#f2a22a"/><circle cx="1466" cy="510" r="1.5" fill="#f2a22a"/><circle cx="1487" cy="515" r="1.5" fill="#f2a22a"/><circle cx="1421" cy="523" r="1.5" fill="#f2a22a"/><circle cx="1440" cy="523" r="1.5" fill="#f2a22a"/><circle cx="1466" cy="522" r="1.5" fill="#f2a22a"/><circle cx="1487" cy="527" r="1.5" fill="#f2a22a"/><circle cx="1417" cy="535" r="1.5" fill="#f2a22a"/><circle cx="1440" cy="534" r="1.5" fill="#f2a22a"/><circle cx="1466" cy="534" r="1.5" fill="#f2a22a"/><circle cx="1487" cy="539" r="1.5" fill="#f2a22a"/><circle cx="1421" cy="547" r="1.5" fill="#f2a22a"/><circle cx="1440" cy="545" r="1.5" fill="#f2a22a"/><circle cx="1466" cy="546" r="1.5" fill="#f2a22a"/><circle cx="1487" cy="551" r="1.5" fill="#f2a22a"/><circle cx="1417" cy="559" r="1.5" fill="#f2a22a"/><circle cx="1440" cy="556" r="1.5" fill="#f2a22a"/><circle cx="1466" cy="558" r="1.5" fill="#f2a22a"/><circle cx="1487" cy="563" r="1.5" fill="#f2a22a"/><rect x="1408" y="505" width="12" height="6" fill="#d5363b" /><rect x="1408" y="537" width="12" height="6" fill="#d5363b" /><rect x="1489" y="511" width="12" height="6" fill="#d5363b" /><rect x="1489" y="533" width="12" height="6" fill="#d5363b" /><rect x="1489" y="555" width="12" height="6" fill="#d5363b" /><text x="1440" y="490" font-size="9" fill="#3b4542" font-weight="normal" font-family="Liberation Mono" text-anchor="start" >IC11</text><rect x="1423" y="575" width="64" height="79" fill="none" stroke="#452a55" stroke-width="0.8"/><rect x="1426" y="578" width="11" height="73" fill="#d5363b" /><rect x="1426" y="579" width="11" height="0.6" fill="#a02a30" /><rect x="1426" y="581.5" width="11" height="0.6" fill="#a02a30" /><rect x="1426" y="584" width="11" height="0.6" fill="#a02a30" /><rect x="1426" y="586.5" width="11" height="0.6" fill="#a02a30" /><rect x="1426" y="589" width="11" height="0.6" fill="#a02a30" /><rect x="1426" y="591.5" width="11" height="0.6" fill="#a02a30" /><rect x="1426" y="594" width="11" height="0.6" fill="#a02a30" /><rect x="1426" y="596.5" width="11" height="0.6" fill="#a02a30" /><rect x="1426" y="599" width="11" height="0.6" fill="#a02a30" /><rect x="1426" y="601.5" width="11" height="0.6" fill="#a02a30" /><rect x="1426" y="604" width="11" height="0.6" fill="#a02a30" /><rect x="1426" y="606.5" width="11" height="0.6" fill="#a02a30" /><rect x="1426" y="609" width="11" height="0.6" fill="#a02a30" /><rect x="1426" y="611.5" width="11" height="0.6" fill="#a02a30" /><rect x="1426" y="614" width="11" height="0.6" fill="#a02a30" /><rect x="1426" y="616.5" width="11" height="0.6" fill="#a02a30" /><rect x="1426" y="619" width="11" height="0.6" fill="#a02a30" /><rect x="1426" y="621.5" width="11" height="0.6" fill="#a02a30" /><rect x="1426" y="624" width="11" height="0.6" fill="#a02a30" /><rect x="1426" y="626.5" width="11" height="0.6" fill="#a02a30" /><rect x="1426" y="629" width="11" height="0.6" fill="#a02a30" /><rect x="1426" y="631.5" width="11" height="0.6" fill="#a02a30" /><rect x="1426" y="634" width="11" height="0.6" fill="#a02a30" /><rect x="1426" y="636.5" width="11" height="0.6" fill="#a02a30" /><rect x="1426" y="639" width="11" height="0.6" fill="#a02a30" /><rect x="1426" y="641.5" width="11" height="0.6" fill="#a02a30" /><rect x="1426" y="644" width="11" height="0.6" fill="#a02a30" /><rect x="1426" y="646.5" width="11" height="0.6" fill="#a02a30" /><rect x="1426" y="649" width="11" height="0.6" fill="#a02a30" /><rect x="1472" y="578" width="11" height="73" fill="#d5363b" /><rect x="1472" y="579" width="11" height="0.6" fill="#a02a30" /><rect x="1472" y="581.5" width="11" height="0.6" fill="#a02a30" /><rect x="1472" y="584" width="11" height="0.6" fill="#a02a30" /><rect x="1472" y="586.5" width="11" height="0.6" fill="#a02a30" /><rect x="1472" y="589" width="11" height="0.6" fill="#a02a30" /><rect x="1472" y="591.5" width="11" height="0.6" fill="#a02a30" /><rect x="1472" y="594" width="11" height="0.6" fill="#a02a30" /><rect x="1472" y="596.5" width="11" height="0.6" fill="#a02a30" /><rect x="1472" y="599" width="11" height="0.6" fill="#a02a30" /><rect x="1472" y="601.5" width="11" height="0.6" fill="#a02a30" /><rect x="1472" y="604" width="11" height="0.6" fill="#a02a30" /><rect x="1472" y="606.5" width="11" height="0.6" fill="#a02a30" /><rect x="1472" y="609" width="11" height="0.6" fill="#a02a30" /><rect x="1472" y="611.5" width="11" height="0.6" fill="#a02a30" /><rect x="1472" y="614" width="11" height="0.6" fill="#a02a30" /><rect x="1472" y="616.5" width="11" height="0.6" fill="#a02a30" /><rect x="1472" y="619" width="11" height="0.6" fill="#a02a30" /><rect x="1472" y="621.5" width="11" height="0.6" fill="#a02a30" /><rect x="1472" y="624" width="11" height="0.6" fill="#a02a30" /><rect x="1472" y="626.5" width="11" height="0.6" fill="#a02a30" /><rect x="1472" y="629" width="11" height="0.6" fill="#a02a30" /><rect x="1472" y="631.5" width="11" height="0.6" fill="#a02a30" /><rect x="1472" y="634" width="11" height="0.6" fill="#a02a30" /><rect x="1472" y="636.5" width="11" height="0.6" fill="#a02a30" /><rect x="1472" y="639" width="11" height="0.6" fill="#a02a30" /><rect x="1472" y="641.5" width="11" height="0.6" fill="#a02a30" /><rect x="1472" y="644" width="11" height="0.6" fill="#a02a30" /><rect x="1472" y="646.5" width="11" height="0.6" fill="#a02a30" /><rect x="1472" y="649" width="11" height="0.6" fill="#a02a30" /><circle cx="1421" cy="582" r="1.5" fill="#f2a22a"/><circle cx="1440" cy="584" r="1.5" fill="#f2a22a"/><circle cx="1466" cy="581" r="1.5" fill="#f2a22a"/><circle cx="1487" cy="586" r="1.5" fill="#f2a22a"/><circle cx="1417" cy="594" r="1.5" fill="#f2a22a"/><circle cx="1440" cy="595" r="1.5" fill="#f2a22a"/><circle cx="1466" cy="593" r="1.5" fill="#f2a22a"/><circle cx="1487" cy="598" r="1.5" fill="#f2a22a"/><circle cx="1421" cy="606" r="1.5" fill="#f2a22a"/><circle cx="1440" cy="606" r="1.5" fill="#f2a22a"/><circle cx="1466" cy="605" r="1.5" fill="#f2a22a"/><circle cx="1487" cy="610" r="1.5" fill="#f2a22a"/><circle cx="1417" cy="618" r="1.5" fill="#f2a22a"/><circle cx="1440" cy="617" r="1.5" fill="#f2a22a"/><circle cx="1466" cy="617" r="1.5" fill="#f2a22a"/><circle cx="1487" cy="622" r="1.5" fill="#f2a22a"/><circle cx="1421" cy="630" r="1.5" fill="#f2a22a"/><circle cx="1440" cy="628" r="1.5" fill="#f2a22a"/><circle cx="1466" cy="629" r="1.5" fill="#f2a22a"/><circle cx="1487" cy="634" r="1.5" fill="#f2a22a"/><circle cx="1417" cy="642" r="1.5" fill="#f2a22a"/><circle cx="1440" cy="639" r="1.5" fill="#f2a22a"/><circle cx="1466" cy="641" r="1.5" fill="#f2a22a"/><circle cx="1487" cy="646" r="1.5" fill="#f2a22a"/><rect x="1408" y="588" width="12" height="6" fill="#d5363b" /><rect x="1408" y="620" width="12" height="6" fill="#d5363b" /><rect x="1489" y="594" width="12" height="6" fill="#d5363b" /><rect x="1489" y="616" width="12" height="6" fill="#d5363b" /><rect x="1489" y="638" width="12" height="6" fill="#d5363b" /><text x="1440" y="573" font-size="9" fill="#3b4542" font-weight="normal" font-family="Liberation Mono" text-anchor="start" >IC38</text><rect x="1423" y="666" width="64" height="79" fill="none" stroke="#452a55" stroke-width="0.8"/><rect x="1426" y="669" width="11" height="73" fill="#d5363b" /><rect x="1426" y="670" width="11" height="0.6" fill="#a02a30" /><rect x="1426" y="672.5" width="11" height="0.6" fill="#a02a30" /><rect x="1426" y="675" width="11" height="0.6" fill="#a02a30" /><rect x="1426" y="677.5" width="11" height="0.6" fill="#a02a30" /><rect x="1426" y="680" width="11" height="0.6" fill="#a02a30" /><rect x="1426" y="682.5" width="11" height="0.6" fill="#a02a30" /><rect x="1426" y="685" width="11" height="0.6" fill="#a02a30" /><rect x="1426" y="687.5" width="11" height="0.6" fill="#a02a30" /><rect x="1426" y="690" width="11" height="0.6" fill="#a02a30" /><rect x="1426" y="692.5" width="11" height="0.6" fill="#a02a30" /><rect x="1426" y="695" width="11" height="0.6" fill="#a02a30" /><rect x="1426" y="697.5" width="11" height="0.6" fill="#a02a30" /><rect x="1426" y="700" width="11" height="0.6" fill="#a02a30" /><rect x="1426" y="702.5" width="11" height="0.6" fill="#a02a30" /><rect x="1426" y="705" width="11" height="0.6" fill="#a02a30" /><rect x="1426" y="707.5" width="11" height="0.6" fill="#a02a30" /><rect x="1426" y="710" width="11" height="0.6" fill="#a02a30" /><rect x="1426" y="712.5" width="11" height="0.6" fill="#a02a30" /><rect x="1426" y="715" width="11" height="0.6" fill="#a02a30" /><rect x="1426" y="717.5" width="11" height="0.6" fill="#a02a30" /><rect x="1426" y="720" width="11" height="0.6" fill="#a02a30" /><rect x="1426" y="722.5" width="11" height="0.6" fill="#a02a30" /><rect x="1426" y="725" width="11" height="0.6" fill="#a02a30" /><rect x="1426" y="727.5" width="11" height="0.6" fill="#a02a30" /><rect x="1426" y="730" width="11" height="0.6" fill="#a02a30" /><rect x="1426" y="732.5" width="11" height="0.6" fill="#a02a30" /><rect x="1426" y="735" width="11" height="0.6" fill="#a02a30" /><rect x="1426" y="737.5" width="11" height="0.6" fill="#a02a30" /><rect x="1426" y="740" width="11" height="0.6" fill="#a02a30" /><rect x="1472" y="669" width="11" height="73" fill="#d5363b" /><rect x="1472" y="670" width="11" height="0.6" fill="#a02a30" /><rect x="1472" y="672.5" width="11" height="0.6" fill="#a02a30" /><rect x="1472" y="675" width="11" height="0.6" fill="#a02a30" /><rect x="1472" y="677.5" width="11" height="0.6" fill="#a02a30" /><rect x="1472" y="680" width="11" height="0.6" fill="#a02a30" /><rect x="1472" y="682.5" width="11" height="0.6" fill="#a02a30" /><rect x="1472" y="685" width="11" height="0.6" fill="#a02a30" /><rect x="1472" y="687.5" width="11" height="0.6" fill="#a02a30" /><rect x="1472" y="690" width="11" height="0.6" fill="#a02a30" /><rect x="1472" y="692.5" width="11" height="0.6" fill="#a02a30" /><rect x="1472" y="695" width="11" height="0.6" fill="#a02a30" /><rect x="1472" y="697.5" width="11" height="0.6" fill="#a02a30" /><rect x="1472" y="700" width="11" height="0.6" fill="#a02a30" /><rect x="1472" y="702.5" width="11" height="0.6" fill="#a02a30" /><rect x="1472" y="705" width="11" height="0.6" fill="#a02a30" /><rect x="1472" y="707.5" width="11" height="0.6" fill="#a02a30" /><rect x="1472" y="710" width="11" height="0.6" fill="#a02a30" /><rect x="1472" y="712.5" width="11" height="0.6" fill="#a02a30" /><rect x="1472" y="715" width="11" height="0.6" fill="#a02a30" /><rect x="1472" y="717.5" width="11" height="0.6" fill="#a02a30" /><rect x="1472" y="720" width="11" height="0.6" fill="#a02a30" /><rect x="1472" y="722.5" width="11" height="0.6" fill="#a02a30" /><rect x="1472" y="725" width="11" height="0.6" fill="#a02a30" /><rect x="1472" y="727.5" width="11" height="0.6" fill="#a02a30" /><rect x="1472" y="730" width="11" height="0.6" fill="#a02a30" /><rect x="1472" y="732.5" width="11" height="0.6" fill="#a02a30" /><rect x="1472" y="735" width="11" height="0.6" fill="#a02a30" /><rect x="1472" y="737.5" width="11" height="0.6" fill="#a02a30" /><rect x="1472" y="740" width="11" height="0.6" fill="#a02a30" /><circle cx="1421" cy="673" r="1.5" fill="#f2a22a"/><circle cx="1440" cy="675" r="1.5" fill="#f2a22a"/><circle cx="1466" cy="672" r="1.5" fill="#f2a22a"/><circle cx="1487" cy="677" r="1.5" fill="#f2a22a"/><circle cx="1417" cy="685" r="1.5" fill="#f2a22a"/><circle cx="1440" cy="686" r="1.5" fill="#f2a22a"/><circle cx="1466" cy="684" r="1.5" fill="#f2a22a"/><circle cx="1487" cy="689" r="1.5" fill="#f2a22a"/><circle cx="1421" cy="697" r="1.5" fill="#f2a22a"/><circle cx="1440" cy="697" r="1.5" fill="#f2a22a"/><circle cx="1466" cy="696" r="1.5" fill="#f2a22a"/><circle cx="1487" cy="701" r="1.5" fill="#f2a22a"/><circle cx="1417" cy="709" r="1.5" fill="#f2a22a"/><circle cx="1440" cy="708" r="1.5" fill="#f2a22a"/><circle cx="1466" cy="708" r="1.5" fill="#f2a22a"/><circle cx="1487" cy="713" r="1.5" fill="#f2a22a"/><circle cx="1421" cy="721" r="1.5" fill="#f2a22a"/><circle cx="1440" cy="719" r="1.5" fill="#f2a22a"/><circle cx="1466" cy="720" r="1.5" fill="#f2a22a"/><circle cx="1487" cy="725" r="1.5" fill="#f2a22a"/><circle cx="1417" cy="733" r="1.5" fill="#f2a22a"/><circle cx="1440" cy="730" r="1.5" fill="#f2a22a"/><circle cx="1466" cy="732" r="1.5" fill="#f2a22a"/><circle cx="1487" cy="737" r="1.5" fill="#f2a22a"/><rect x="1408" y="679" width="12" height="6" fill="#d5363b" /><rect x="1408" y="711" width="12" height="6" fill="#d5363b" /><rect x="1489" y="685" width="12" height="6" fill="#d5363b" /><rect x="1489" y="707" width="12" height="6" fill="#d5363b" /><rect x="1489" y="729" width="12" height="6" fill="#d5363b" /><text x="1440" y="664" font-size="9" fill="#3b4542" font-weight="normal" font-family="Liberation Mono" text-anchor="start" >IC28</text><rect x="1423" y="752" width="64" height="79" fill="none" stroke="#452a55" stroke-width="0.8"/><rect x="1426" y="755" width="11" height="73" fill="#d5363b" /><rect x="1426" y="756" width="11" height="0.6" fill="#a02a30" /><rect x="1426" y="758.5" width="11" height="0.6" fill="#a02a30" /><rect x="1426" y="761" width="11" height="0.6" fill="#a02a30" /><rect x="1426" y="763.5" width="11" height="0.6" fill="#a02a30" /><rect x="1426" y="766" width="11" height="0.6" fill="#a02a30" /><rect x="1426" y="768.5" width="11" height="0.6" fill="#a02a30" /><rect x="1426" y="771" width="11" height="0.6" fill="#a02a30" /><rect x="1426" y="773.5" width="11" height="0.6" fill="#a02a30" /><rect x="1426" y="776" width="11" height="0.6" fill="#a02a30" /><rect x="1426" y="778.5" width="11" height="0.6" fill="#a02a30" /><rect x="1426" y="781" width="11" height="0.6" fill="#a02a30" /><rect x="1426" y="783.5" width="11" height="0.6" fill="#a02a30" /><rect x="1426" y="786" width="11" height="0.6" fill="#a02a30" /><rect x="1426" y="788.5" width="11" height="0.6" fill="#a02a30" /><rect x="1426" y="791" width="11" height="0.6" fill="#a02a30" /><rect x="1426" y="793.5" width="11" height="0.6" fill="#a02a30" /><rect x="1426" y="796" width="11" height="0.6" fill="#a02a30" /><rect x="1426" y="798.5" width="11" height="0.6" fill="#a02a30" /><rect x="1426" y="801" width="11" height="0.6" fill="#a02a30" /><rect x="1426" y="803.5" width="11" height="0.6" fill="#a02a30" /><rect x="1426" y="806" width="11" height="0.6" fill="#a02a30" /><rect x="1426" y="808.5" width="11" height="0.6" fill="#a02a30" /><rect x="1426" y="811" width="11" height="0.6" fill="#a02a30" /><rect x="1426" y="813.5" width="11" height="0.6" fill="#a02a30" /><rect x="1426" y="816" width="11" height="0.6" fill="#a02a30" /><rect x="1426" y="818.5" width="11" height="0.6" fill="#a02a30" /><rect x="1426" y="821" width="11" height="0.6" fill="#a02a30" /><rect x="1426" y="823.5" width="11" height="0.6" fill="#a02a30" /><rect x="1426" y="826" width="11" height="0.6" fill="#a02a30" /><rect x="1472" y="755" width="11" height="73" fill="#d5363b" /><rect x="1472" y="756" width="11" height="0.6" fill="#a02a30" /><rect x="1472" y="758.5" width="11" height="0.6" fill="#a02a30" /><rect x="1472" y="761" width="11" height="0.6" fill="#a02a30" /><rect x="1472" y="763.5" width="11" height="0.6" fill="#a02a30" /><rect x="1472" y="766" width="11" height="0.6" fill="#a02a30" /><rect x="1472" y="768.5" width="11" height="0.6" fill="#a02a30" /><rect x="1472" y="771" width="11" height="0.6" fill="#a02a30" /><rect x="1472" y="773.5" width="11" height="0.6" fill="#a02a30" /><rect x="1472" y="776" width="11" height="0.6" fill="#a02a30" /><rect x="1472" y="778.5" width="11" height="0.6" fill="#a02a30" /><rect x="1472" y="781" width="11" height="0.6" fill="#a02a30" /><rect x="1472" y="783.5" width="11" height="0.6" fill="#a02a30" /><rect x="1472" y="786" width="11" height="0.6" fill="#a02a30" /><rect x="1472" y="788.5" width="11" height="0.6" fill="#a02a30" /><rect x="1472" y="791" width="11" height="0.6" fill="#a02a30" /><rect x="1472" y="793.5" width="11" height="0.6" fill="#a02a30" /><rect x="1472" y="796" width="11" height="0.6" fill="#a02a30" /><rect x="1472" y="798.5" width="11" height="0.6" fill="#a02a30" /><rect x="1472" y="801" width="11" height="0.6" fill="#a02a30" /><rect x="1472" y="803.5" width="11" height="0.6" fill="#a02a30" /><rect x="1472" y="806" width="11" height="0.6" fill="#a02a30" /><rect x="1472" y="808.5" width="11" height="0.6" fill="#a02a30" /><rect x="1472" y="811" width="11" height="0.6" fill="#a02a30" /><rect x="1472" y="813.5" width="11" height="0.6" fill="#a02a30" /><rect x="1472" y="816" width="11" height="0.6" fill="#a02a30" /><rect x="1472" y="818.5" width="11" height="0.6" fill="#a02a30" /><rect x="1472" y="821" width="11" height="0.6" fill="#a02a30" /><rect x="1472" y="823.5" width="11" height="0.6" fill="#a02a30" /><rect x="1472" y="826" width="11" height="0.6" fill="#a02a30" /><circle cx="1421" cy="759" r="1.5" fill="#f2a22a"/><circle cx="1440" cy="761" r="1.5" fill="#f2a22a"/><circle cx="1466" cy="758" r="1.5" fill="#f2a22a"/><circle cx="1487" cy="763" r="1.5" fill="#f2a22a"/><circle cx="1417" cy="771" r="1.5" fill="#f2a22a"/><circle cx="1440" cy="772" r="1.5" fill="#f2a22a"/><circle cx="1466" cy="770" r="1.5" fill="#f2a22a"/><circle cx="1487" cy="775" r="1.5" fill="#f2a22a"/><circle cx="1421" cy="783" r="1.5" fill="#f2a22a"/><circle cx="1440" cy="783" r="1.5" fill="#f2a22a"/><circle cx="1466" cy="782" r="1.5" fill="#f2a22a"/><circle cx="1487" cy="787" r="1.5" fill="#f2a22a"/><circle cx="1417" cy="795" r="1.5" fill="#f2a22a"/><circle cx="1440" cy="794" r="1.5" fill="#f2a22a"/><circle cx="1466" cy="794" r="1.5" fill="#f2a22a"/><circle cx="1487" cy="799" r="1.5" fill="#f2a22a"/><circle cx="1421" cy="807" r="1.5" fill="#f2a22a"/><circle cx="1440" cy="805" r="1.5" fill="#f2a22a"/><circle cx="1466" cy="806" r="1.5" fill="#f2a22a"/><circle cx="1487" cy="811" r="1.5" fill="#f2a22a"/><circle cx="1417" cy="819" r="1.5" fill="#f2a22a"/><circle cx="1440" cy="816" r="1.5" fill="#f2a22a"/><circle cx="1466" cy="818" r="1.5" fill="#f2a22a"/><circle cx="1487" cy="823" r="1.5" fill="#f2a22a"/><rect x="1408" y="765" width="12" height="6" fill="#d5363b" /><rect x="1408" y="797" width="12" height="6" fill="#d5363b" /><rect x="1489" y="771" width="12" height="6" fill="#d5363b" /><rect x="1489" y="793" width="12" height="6" fill="#d5363b" /><rect x="1489" y="815" width="12" height="6" fill="#d5363b" /><text x="1440" y="750" font-size="9" fill="#3b4542" font-weight="normal" font-family="Liberation Mono" text-anchor="start" >IC36</text><path d="M1483 311 L1505 311 L1520 310.2 L1534 310.2" stroke="#c9383a" stroke-width="0.9" fill="none"/><path d="M1483 322 L1505 322 L1520 325.54 L1534 325.54" stroke="#c9383a" stroke-width="0.9" fill="none"/><path d="M1483 333 L1505 333 L1520 340.88 L1534 340.88" stroke="#c9383a" stroke-width="0.9" fill="none"/><path d="M1483 344 L1505 344 L1520 340.88 L1534 340.88" stroke="#c9383a" stroke-width="0.9" fill="none"/><path d="M1483 355 L1505 355 L1520 356.22 L1534 356.22" stroke="#c9383a" stroke-width="0.9" fill="none"/><path d="M1483 366 L1505 366 L1520 371.56 L1534 371.56" stroke="#c9383a" stroke-width="0.9" fill="none"/><path d="M1483 393 L1505 393 L1520 386.9 L1534 386.9" stroke="#c9383a" stroke-width="0.9" fill="none"/><path d="M1483 404 L1505 404 L1520 402.24 L1534 402.24" stroke="#c9383a" stroke-width="0.9" fill="none"/><path d="M1483 415 L1505 415 L1520 417.58 L1534 417.58" stroke="#c9383a" stroke-width="0.9" fill="none"/><path d="M1483 426 L1505 426 L1520 432.92 L1534 432.92" stroke="#c9383a" stroke-width="0.9" fill="none"/><path d="M1483 437 L1505 437 L1520 448.26 L1534 448.26" stroke="#c9383a" stroke-width="0.9" fill="none"/><path d="M1483 448 L1505 448 L1520 463.6 L1534 463.6" stroke="#c9383a" stroke-width="0.9" fill="none"/><path d="M1483 499 L1505 499 L1520 494.28 L1534 494.28" stroke="#c9383a" stroke-width="0.9" fill="none"/><path d="M1483 510 L1505 510 L1520 509.62 L1534 509.62" stroke="#c9383a" stroke-width="0.9" fill="none"/><path d="M1483 521 L1505 521 L1520 524.96 L1534 524.96" stroke="#c9383a" stroke-width="0.9" fill="none"/><path d="M1483 532 L1505 532 L1520 524.96 L1534 524.96" stroke="#c9383a" stroke-width="0.9" fill="none"/><path d="M1483 543 L1505 543 L1520 540.3 L1534 540.3" stroke="#c9383a" stroke-width="0.9" fill="none"/><path d="M1483 554 L1505 554 L1520 555.64 L1534 555.64" stroke="#c9383a" stroke-width="0.9" fill="none"/><path d="M1483 582 L1505 582 L1520 586.32 L1534 586.32" stroke="#c9383a" stroke-width="0.9" fill="none"/><path d="M1483 593 L1505 593 L1520 601.66 L1534 601.66" stroke="#c9383a" stroke-width="0.9" fill="none"/><path d="M1483 604 L1505 604 L1520 617 L1534 617" stroke="#c9383a" stroke-width="0.9" fill="none"/><path d="M1483 615 L1505 615 L1520 617 L1534 617" stroke="#c9383a" stroke-width="0.9" fill="none"/><path d="M1483 626 L1505 626 L1520 632.34 L1534 632.34" stroke="#c9383a" stroke-width="0.9" fill="none"/><path d="M1483 637 L1505 637 L1520 647.68 L1534 647.68" stroke="#c9383a" stroke-width="0.9" fill="none"/><path d="M1483 673 L1505 673 L1520 678.36 L1534 678.36" stroke="#c9383a" stroke-width="0.9" fill="none"/><path d="M1483 684 L1505 684 L1520 693.7 L1534 693.7" stroke="#c9383a" stroke-width="0.9" fill="none"/><path d="M1483 695 L1505 695 L1520 709.04 L1534 709.04" stroke="#c9383a" stroke-width="0.9" fill="none"/><path d="M1483 706 L1505 706 L1520 709.04 L1534 709.04" stroke="#c9383a" stroke-width="0.9" fill="none"/><path d="M1483 717 L1505 717 L1520 724.38 L1534 724.38" stroke="#c9383a" stroke-width="0.9" fill="none"/><path d="M1483 728 L1505 728 L1520 739.72 L1534 739.72" stroke="#c9383a" stroke-width="0.9" fill="none"/><path d="M1483 759 L1505 759 L1520 755.06 L1534 755.06" stroke="#c9383a" stroke-width="0.9" fill="none"/><path d="M1483 770 L1505 770 L1520 770.4 L1534 770.4" stroke="#c9383a" stroke-width="0.9" fill="none"/><path d="M1483 781 L1505 781 L1520 785.74 L1534 785.74" stroke="#c9383a" stroke-width="0.9" fill="none"/><path d="M1483 792 L1505 792 L1520 785.74 L1534 785.74" stroke="#c9383a" stroke-width="0.9" fill="none"/><path d="M1483 803 L1505 803 L1520 801.08 L1534 801.08" stroke="#c9383a" stroke-width="0.9" fill="none"/><path d="M1483 814 L1505 814 L1520 816.42 L1534 816.42" stroke="#c9383a" stroke-width="0.9" fill="none"/><path d="M1483 315 L1495 315 L1508 303 L1521 303 L1535 310" stroke="#c9383a" stroke-width="0.9" fill="none"/><path d="M1483 318 L1495 318 L1508 305 L1521 305 L1535 310" stroke="#c9383a" stroke-width="0.9" fill="none"/><path d="M1483 321 L1495 321 L1508 307 L1521 307 L1535 310" stroke="#c9383a" stroke-width="0.9" fill="none"/><path d="M1483 324 L1495 324 L1508 309 L1521 309 L1535 310" stroke="#c9383a" stroke-width="0.9" fill="none"/><path d="M1483 327 L1495 327 L1508 311 L1521 311 L1535 310" stroke="#c9383a" stroke-width="0.9" fill="none"/><path d="M1483 320 L1498 320 L1512 317.87 L1534 317.87 L1548 313.87" stroke="#c9383a" stroke-width="0.8" fill="none"/><path d="M1483 331 L1498 331 L1512 333.21 L1534 333.21 L1548 329.21" stroke="#c9383a" stroke-width="0.8" fill="none"/><path d="M1483 342 L1498 342 L1512 348.55 L1534 348.55 L1548 344.55" stroke="#c9383a" stroke-width="0.8" fill="none"/><path d="M1483 353 L1498 353 L1512 363.89 L1534 363.89 L1548 359.89" stroke="#c9383a" stroke-width="0.8" fill="none"/><path d="M1483 364 L1498 364 L1512 363.89 L1534 363.89 L1548 359.89" stroke="#c9383a" stroke-width="0.8" fill="none"/><path d="M1483 375 L1498 375 L1512 379.23 L1534 379.23 L1548 375.23" stroke="#c9383a" stroke-width="0.8" fill="none"/><path d="M1483 402 L1498 402 L1512 409.91 L1534 409.91 L1548 405.91" stroke="#c9383a" stroke-width="0.8" fill="none"/><path d="M1483 413 L1498 413 L1512 425.25 L1534 425.25 L1548 421.25" stroke="#c9383a" stroke-width="0.8" fill="none"/><path d="M1483 424 L1498 424 L1512 425.25 L1534 425.25 L1548 421.25" stroke="#c9383a" stroke-width="0.8" fill="none"/><path d="M1483 435 L1498 435 L1512 440.59 L1534 440.59 L1548 436.59" stroke="#c9383a" stroke-width="0.8" fill="none"/><path d="M1483 446 L1498 446 L1512 455.93 L1534 455.93 L1548 451.93" stroke="#c9383a" stroke-width="0.8" fill="none"/><path d="M1483 457 L1498 457 L1512 455.93 L1534 455.93 L1548 451.93" stroke="#c9383a" stroke-width="0.8" fill="none"/><path d="M1483 508 L1498 508 L1512 517.29 L1534 517.29 L1548 513.29" stroke="#c9383a" stroke-width="0.8" fill="none"/><path d="M1483 519 L1498 519 L1512 517.29 L1534 517.29 L1548 513.29" stroke="#c9383a" stroke-width="0.8" fill="none"/><path d="M1483 530 L1498 530 L1512 532.63 L1534 532.63 L1548 528.63" stroke="#c9383a" stroke-width="0.8" fill="none"/><path d="M1483 541 L1498 541 L1512 547.97 L1534 547.97 L1548 543.97" stroke="#c9383a" stroke-width="0.8" fill="none"/><path d="M1483 552 L1498 552 L1512 563.31 L1534 563.31 L1548 559.31" stroke="#c9383a" stroke-width="0.8" fill="none"/><path d="M1483 563 L1498 563 L1512 563.31 L1534 563.31 L1548 559.31" stroke="#c9383a" stroke-width="0.8" fill="none"/><path d="M1483 591 L1498 591 L1512 593.99 L1534 593.99 L1548 589.99" stroke="#c9383a" stroke-width="0.8" fill="none"/><path d="M1483 602 L1498 602 L1512 609.33 L1534 609.33 L1548 605.33" stroke="#c9383a" stroke-width="0.8" fill="none"/><path d="M1483 613 L1498 613 L1512 624.67 L1534 624.67 L1548 620.67" stroke="#c9383a" stroke-width="0.8" fill="none"/><path d="M1483 624 L1498 624 L1512 624.67 L1534 624.67 L1548 620.67" stroke="#c9383a" stroke-width="0.8" fill="none"/><path d="M1483 635 L1498 635 L1512 640.01 L1534 640.01 L1548 636.01" stroke="#c9383a" stroke-width="0.8" fill="none"/><path d="M1483 646 L1498 646 L1512 655.35 L1534 655.35 L1548 651.35" stroke="#c9383a" stroke-width="0.8" fill="none"/><path d="M1483 682 L1498 682 L1512 686.03 L1534 686.03 L1548 682.03" stroke="#c9383a" stroke-width="0.8" fill="none"/><path d="M1483 693 L1498 693 L1512 701.37 L1534 701.37 L1548 697.37" stroke="#c9383a" stroke-width="0.8" fill="none"/><path d="M1483 704 L1498 704 L1512 701.37 L1534 701.37 L1548 697.37" stroke="#c9383a" stroke-width="0.8" fill="none"/><path d="M1483 715 L1498 715 L1512 716.71 L1534 716.71 L1548 712.71" stroke="#c9383a" stroke-width="0.8" fill="none"/><path d="M1483 726 L1498 726 L1512 732.05 L1534 732.05 L1548 728.05" stroke="#c9383a" stroke-width="0.8" fill="none"/><path d="M1483 737 L1498 737 L1512 747.39 L1534 747.39 L1548 743.39" stroke="#c9383a" stroke-width="0.8" fill="none"/><path d="M1483 768 L1498 768 L1512 778.07 L1534 778.07 L1548 774.07" stroke="#c9383a" stroke-width="0.8" fill="none"/><path d="M1483 779 L1498 779 L1512 778.07 L1534 778.07 L1548 774.07" stroke="#c9383a" stroke-width="0.8" fill="none"/><path d="M1483 790 L1498 790 L1512 793.41 L1534 793.41 L1548 789.41" stroke="#c9383a" stroke-width="0.8" fill="none"/><path d="M1483 801 L1498 801 L1512 808.75 L1534 808.75 L1548 804.75" stroke="#c9383a" stroke-width="0.8" fill="none"/><path d="M1483 812 L1498 812 L1512 824.09 L1534 824.09 L1548 820.09" stroke="#c9383a" stroke-width="0.8" fill="none"/><path d="M1483 823 L1498 823 L1512 824.09 L1534 824.09 L1548 820.09" stroke="#c9383a" stroke-width="0.8" fill="none"/><rect x="1408" y="352" width="12" height="6" fill="#d5363b" /><rect x="1408" y="374" width="12" height="6" fill="#d5363b" /><rect x="1400" y="414" width="12" height="6" fill="#d5363b" /><rect x="1405" y="466" width="12" height="6" fill="#d5363b" /><rect x="1410" y="488" width="12" height="6" fill="#d5363b" /><rect x="1404" y="525" width="12" height="6" fill="#d5363b" /><rect x="1408" y="560" width="12" height="6" fill="#d5363b" /><rect x="1405" y="598" width="12" height="6" fill="#d5363b" /><rect x="1400" y="632" width="12" height="6" fill="#d5363b" /><path d="M1386 310 L1398 323 L1420 323" stroke="#c9383a" stroke-width="1" fill="none"/><rect x="1418" y="294" width="7" height="14" fill="#d5363b" /><rect x="1530" y="300" width="89" height="496" fill="#1e3a3f"/><use href="#vr" x="1541.0" y="310.2"/><use href="#vr" x="1556.3" y="310.2"/><use href="#vr" x="1571.5" y="310.2"/><use href="#vr" x="1587.0" y="310.2"/><use href="#vr" x="1602.2" y="310.2"/><use href="#vr" x="1541.0" y="325.5"/><use href="#vr" x="1556.3" y="325.5"/><use href="#vr" x="1571.5" y="325.5"/><use href="#vr" x="1587.0" y="325.5"/><use href="#vr" x="1602.2" y="325.5"/><use href="#vr" x="1541.0" y="340.9"/><use href="#vr" x="1556.3" y="340.9"/><use href="#vr" x="1571.5" y="340.9"/><use href="#vr" x="1587.0" y="340.9"/><use href="#vr" x="1602.2" y="340.9"/><use href="#vr" x="1541.0" y="356.2"/><use href="#vr" x="1556.3" y="356.2"/><use href="#vr" x="1571.5" y="356.2"/><use href="#vr" x="1587.0" y="356.2"/><use href="#vr" x="1602.2" y="356.2"/><use href="#vr" x="1541.0" y="371.6"/><use href="#vr" x="1556.3" y="371.6"/><use href="#vr" x="1571.5" y="371.6"/><use href="#vr" x="1587.0" y="371.6"/><use href="#vr" x="1602.2" y="371.6"/><use href="#vr" x="1541.0" y="386.9"/><use href="#vr" x="1556.3" y="386.9"/><use href="#vr" x="1571.5" y="386.9"/><use href="#vr" x="1587.0" y="386.9"/><use href="#vr" x="1602.2" y="386.9"/><use href="#vr" x="1541.0" y="402.2"/><use href="#vr" x="1556.3" y="402.2"/><use href="#vr" x="1571.5" y="402.2"/><use href="#vr" x="1587.0" y="402.2"/><use href="#vr" x="1602.2" y="402.2"/><use href="#vr" x="1541.0" y="417.6"/><use href="#vr" x="1556.3" y="417.6"/><use href="#vr" x="1571.5" y="417.6"/><use href="#vr" x="1587.0" y="417.6"/><use href="#vr" x="1602.2" y="417.6"/><use href="#vr" x="1541.0" y="432.9"/><use href="#vr" x="1556.3" y="432.9"/><use href="#vr" x="1571.5" y="432.9"/><use href="#vr" x="1587.0" y="432.9"/><use href="#vr" x="1602.2" y="432.9"/><use href="#vr" x="1541.0" y="448.3"/><use href="#vr" x="1556.3" y="448.3"/><use href="#vr" x="1571.5" y="448.3"/><use href="#vr" x="1587.0" y="448.3"/><use href="#vr" x="1602.2" y="448.3"/><use href="#vr" x="1541.0" y="463.6"/><use href="#vr" x="1556.3" y="463.6"/><use href="#vr" x="1571.5" y="463.6"/><use href="#vr" x="1587.0" y="463.6"/><use href="#vr" x="1602.2" y="463.6"/><use href="#vr" x="1541.0" y="478.9"/><use href="#vr" x="1556.3" y="478.9"/><use href="#vr" x="1571.5" y="478.9"/><use href="#vr" x="1587.0" y="478.9"/><use href="#vr" x="1602.2" y="478.9"/><use href="#vr" x="1541.0" y="494.3"/><use href="#vr" x="1556.3" y="494.3"/><use href="#vr" x="1571.5" y="494.3"/><use href="#vr" x="1587.0" y="494.3"/><use href="#vr" x="1602.2" y="494.3"/><use href="#vr" x="1541.0" y="509.6"/><use href="#vr" x="1556.3" y="509.6"/><use href="#vr" x="1571.5" y="509.6"/><use href="#vr" x="1587.0" y="509.6"/><use href="#vr" x="1602.2" y="509.6"/><use href="#vr" x="1541.0" y="525.0"/><use href="#vr" x="1556.3" y="525.0"/><use href="#vr" x="1571.5" y="525.0"/><use href="#vr" x="1587.0" y="525.0"/><use href="#vr" x="1602.2" y="525.0"/><use href="#vr" x="1541.0" y="540.3"/><use href="#vr" x="1556.3" y="540.3"/><use href="#vr" x="1571.5" y="540.3"/><use href="#vr" x="1587.0" y="540.3"/><use href="#vr" x="1602.2" y="540.3"/><use href="#vr" x="1541.0" y="555.6"/><use href="#vr" x="1556.3" y="555.6"/><use href="#vr" x="1571.5" y="555.6"/><use href="#vr" x="1587.0" y="555.6"/><use href="#vr" x="1602.2" y="555.6"/><use href="#vr" x="1541.0" y="571.0"/><use href="#vr" x="1556.3" y="571.0"/><use href="#vr" x="1571.5" y="571.0"/><use href="#vr" x="1587.0" y="571.0"/><use href="#vr" x="1602.2" y="571.0"/><use href="#vr" x="1541.0" y="586.3"/><use href="#vr" x="1556.3" y="586.3"/><use href="#vr" x="1571.5" y="586.3"/><use href="#vr" x="1587.0" y="586.3"/><use href="#vr" x="1602.2" y="586.3"/><use href="#vr" x="1541.0" y="601.7"/><use href="#vr" x="1556.3" y="601.7"/><use href="#vr" x="1571.5" y="601.7"/><use href="#vr" x="1587.0" y="601.7"/><use href="#vr" x="1602.2" y="601.7"/><use href="#vr" x="1541.0" y="617.0"/><use href="#vr" x="1556.3" y="617.0"/><use href="#vr" x="1571.5" y="617.0"/><use href="#vr" x="1587.0" y="617.0"/><use href="#vr" x="1602.2" y="617.0"/><use href="#vr" x="1541.0" y="632.3"/><use href="#vr" x="1556.3" y="632.3"/><use href="#vr" x="1571.5" y="632.3"/><use href="#vr" x="1587.0" y="632.3"/><use href="#vr" x="1602.2" y="632.3"/><use href="#vr" x="1541.0" y="647.7"/><use href="#vr" x="1556.3" y="647.7"/><use href="#vr" x="1571.5" y="647.7"/><use href="#vr" x="1587.0" y="647.7"/><use href="#vr" x="1602.2" y="647.7"/><use href="#vr" x="1541.0" y="663.0"/><use href="#vr" x="1556.3" y="663.0"/><use href="#vr" x="1571.5" y="663.0"/><use href="#vr" x="1587.0" y="663.0"/><use href="#vr" x="1602.2" y="663.0"/><use href="#vr" x="1541.0" y="678.4"/><use href="#vr" x="1556.3" y="678.4"/><use href="#vr" x="1571.5" y="678.4"/><use href="#vr" x="1587.0" y="678.4"/><use href="#vr" x="1602.2" y="678.4"/><use href="#vr" x="1541.0" y="693.7"/><use href="#vr" x="1556.3" y="693.7"/><use href="#vr" x="1571.5" y="693.7"/><use href="#vr" x="1587.0" y="693.7"/><use href="#vr" x="1602.2" y="693.7"/><use href="#vr" x="1541.0" y="709.0"/><use href="#vr" x="1556.3" y="709.0"/><use href="#vr" x="1571.5" y="709.0"/><use href="#vr" x="1587.0" y="709.0"/><use href="#vr" x="1602.2" y="709.0"/><use href="#vr" x="1541.0" y="724.4"/><use href="#vr" x="1556.3" y="724.4"/><use href="#vr" x="1571.5" y="724.4"/><use href="#vr" x="1587.0" y="724.4"/><use href="#vr" x="1602.2" y="724.4"/><use href="#vr" x="1541.0" y="739.7"/><use href="#vr" x="1556.3" y="739.7"/><use href="#vr" x="1571.5" y="739.7"/><use href="#vr" x="1587.0" y="739.7"/><use href="#vr" x="1602.2" y="739.7"/><use href="#vr" x="1541.0" y="755.1"/><use href="#vr" x="1556.3" y="755.1"/><use href="#vr" x="1571.5" y="755.1"/><use href="#vr" x="1587.0" y="755.1"/><use href="#vr" x="1602.2" y="755.1"/><use href="#vr" x="1541.0" y="770.4"/><use href="#vr" x="1556.3" y="770.4"/><use href="#vr" x="1571.5" y="770.4"/><use href="#vr" x="1587.0" y="770.4"/><use href="#vr" x="1602.2" y="770.4"/><use href="#vr" x="1541.0" y="785.7"/><use href="#vr" x="1556.3" y="785.7"/><use href="#vr" x="1571.5" y="785.7"/><use href="#vr" x="1587.0" y="785.7"/><use href="#vr" x="1602.2" y="785.7"/><text x="1545" y="305" font-size="8" fill="#3b4542" font-weight="normal" font-family="Liberation Mono" text-anchor="start" >d  c  b  a  z</text><rect x="1619" y="247" width="102" height="812" fill="#001023"/><g stroke="#454838" stroke-width="0.9" fill="none"><path d="M1605 307.2 L1652 307.2 L1652 313.2 L1605 313.2 M1605 317.9 L1663 317.9"/><path d="M1605 322.5 L1652 322.5 L1652 328.5 L1605 328.5 M1605 333.2 L1663 333.2"/><path d="M1605 337.9 L1652 337.9 L1652 343.9 L1605 343.9 M1605 348.6 L1663 348.6"/><path d="M1605 353.2 L1652 353.2 L1652 359.2 L1605 359.2 M1605 363.9 L1663 363.9"/><path d="M1605 368.6 L1652 368.6 L1652 374.6 L1605 374.6 M1605 379.2 L1663 379.2"/><path d="M1605 383.9 L1652 383.9 L1652 389.9 L1605 389.9 M1605 394.6 L1663 394.6"/><path d="M1605 399.2 L1652 399.2 L1652 405.2 L1605 405.2 M1605 409.9 L1663 409.9"/><path d="M1605 414.6 L1652 414.6 L1652 420.6 L1605 420.6 M1605 425.2 L1663 425.2"/><path d="M1605 429.9 L1652 429.9 L1652 435.9 L1605 435.9 M1605 440.6 L1663 440.6"/><path d="M1605 445.3 L1652 445.3 L1652 451.3 L1605 451.3 M1605 455.9 L1663 455.9"/><path d="M1605 460.6 L1652 460.6 L1652 466.6 L1605 466.6 M1605 471.3 L1663 471.3"/><path d="M1605 475.9 L1652 475.9 L1652 481.9 L1605 481.9 M1605 486.6 L1663 486.6"/><path d="M1605 491.3 L1652 491.3 L1652 497.3 L1605 497.3 M1605 501.9 L1663 501.9"/><path d="M1605 506.6 L1652 506.6 L1652 512.6 L1605 512.6 M1605 517.3 L1663 517.3"/><path d="M1605 522.0 L1652 522.0 L1652 528.0 L1605 528.0 M1605 532.6 L1663 532.6"/><path d="M1605 537.3 L1652 537.3 L1652 543.3 L1605 543.3 M1605 548.0 L1663 548.0"/><path d="M1605 552.6 L1652 552.6 L1652 558.6 L1605 558.6 M1605 563.3 L1663 563.3"/><path d="M1605 568.0 L1652 568.0 L1652 574.0 L1605 574.0 M1605 578.6 L1663 578.6"/><path d="M1605 583.3 L1652 583.3 L1652 589.3 L1605 589.3 M1605 594.0 L1663 594.0"/><path d="M1605 598.7 L1652 598.7 L1652 604.7 L1605 604.7 M1605 609.3 L1663 609.3"/><path d="M1605 614.0 L1652 614.0 L1652 620.0 L1605 620.0 M1605 624.7 L1663 624.7"/><path d="M1605 629.3 L1652 629.3 L1652 635.3 L1605 635.3 M1605 640.0 L1663 640.0"/><path d="M1605 644.7 L1652 644.7 L1652 650.7 L1605 650.7 M1605 655.4 L1663 655.4"/><path d="M1605 660.0 L1652 660.0 L1652 666.0 L1605 666.0 M1605 670.7 L1663 670.7"/><path d="M1605 675.4 L1652 675.4 L1652 681.4 L1605 681.4 M1605 686.0 L1663 686.0"/><path d="M1605 690.7 L1652 690.7 L1652 696.7 L1605 696.7 M1605 701.4 L1663 701.4"/><path d="M1605 706.0 L1652 706.0 L1652 712.0 L1605 712.0 M1605 716.7 L1663 716.7"/><path d="M1605 721.4 L1652 721.4 L1652 727.4 L1605 727.4 M1605 732.0 L1663 732.0"/><path d="M1605 736.7 L1652 736.7 L1652 742.7 L1605 742.7 M1605 747.4 L1663 747.4"/><path d="M1605 752.1 L1652 752.1 L1652 758.1 L1605 758.1 M1605 762.7 L1663 762.7"/><path d="M1605 767.4 L1652 767.4 L1652 773.4 L1605 773.4 M1605 778.1 L1663 778.1"/><path d="M1605 782.7 L1652 782.7 L1652 788.7 L1605 788.7 M1605 793.4 L1663 793.4"/><path d="M1664 300 L1664 790 M1620 300 L1664 300"/><path d="M1586 264 L1619 264 L1619 247 L1586 247 Z M1575 266 L1648 266 L1648 300 M1630 286 L1664 286 L1664 300"/></g><text x="1585" y="262" font-size="8" fill="#3b4542" font-weight="normal" font-family="Liberation Mono" text-anchor="start" >P1</text><path d="M1619 215 L1619 1059" stroke="#3a4656" stroke-width="1.2"/><path d="M1646 248 L1646 1059 M1640 258 L1646 248 L1652 258 M1619 248 L1660 248" stroke="#25406a" stroke-width="1.2" fill="none"/><path d="M1601 1059 L1601 960" stroke="#25406a" stroke-width="1"/><g stroke="#454838" stroke-width="0.9" fill="none"><rect x="1586" y="264" width="30" height="32"/><path d="M1616 264 L1631 264 L1631 284 M1616 296 L1645 296 L1645 288 M1600 290 L1600 305"/></g><circle cx="1602" cy="817" r="11" fill="#d03a3a" stroke="#8a3898" stroke-width="1.5"/><circle cx="1602" cy="817" r="7" fill="#f0c040"/><circle cx="1602" cy="817" r="5.5" fill="#0a0e18"/><g stroke="#454838" stroke-width="0.9" fill="none"><rect x="1585" y="800" width="36" height="33"/><path d="M1621 800 L1664 800 L1664 812 M1621 820 L1650 820 L1650 832"/></g><rect x="1540" y="832" width="79" height="227" fill="#1e3a3f"/><use href="#vs" x="1549.0" y="841.0"/><use href="#vs" x="1561.2" y="841.0"/><use href="#vs" x="1573.4" y="841.0"/><use href="#vs" x="1585.6" y="841.0"/><use href="#vs" x="1597.8" y="841.0"/><use href="#vs" x="1610.0" y="841.0"/><use href="#vs" x="1561.2" y="853.1"/><use href="#vs" x="1573.4" y="853.1"/><use href="#vs" x="1585.6" y="853.1"/><use href="#vs" x="1597.8" y="853.1"/><use href="#vs" x="1610.0" y="853.1"/><use href="#vs" x="1549.0" y="865.2"/><use href="#vs" x="1561.2" y="865.2"/><use href="#vs" x="1573.4" y="865.2"/><use href="#vs" x="1585.6" y="865.2"/><use href="#vs" x="1597.8" y="865.2"/><use href="#vs" x="1610.0" y="865.2"/><use href="#vs" x="1561.2" y="877.3"/><use href="#vs" x="1573.4" y="877.3"/><use href="#vs" x="1585.6" y="877.3"/><use href="#vs" x="1597.8" y="877.3"/><use href="#vs" x="1610.0" y="877.3"/><use href="#vs" x="1549.0" y="889.4"/><use href="#vs" x="1561.2" y="889.4"/><use href="#vs" x="1573.4" y="889.4"/><use href="#vs" x="1585.6" y="889.4"/><use href="#vs" x="1597.8" y="889.4"/><use href="#vs" x="1610.0" y="889.4"/><use href="#vs" x="1561.2" y="901.5"/><use href="#vs" x="1573.4" y="901.5"/><use href="#vs" x="1585.6" y="901.5"/><use href="#vs" x="1597.8" y="901.5"/><use href="#vs" x="1610.0" y="901.5"/><use href="#vs" x="1549.0" y="913.6"/><use href="#vs" x="1561.2" y="913.6"/><use href="#vs" x="1573.4" y="913.6"/><use href="#vs" x="1585.6" y="913.6"/><use href="#vs" x="1597.8" y="913.6"/><use href="#vs" x="1610.0" y="913.6"/><use href="#vs" x="1561.2" y="925.7"/><use href="#vs" x="1573.4" y="925.7"/><use href="#vs" x="1585.6" y="925.7"/><use href="#vs" x="1597.8" y="925.7"/><use href="#vs" x="1610.0" y="925.7"/><use href="#vs" x="1549.0" y="937.8"/><use href="#vs" x="1561.2" y="937.8"/><use href="#vs" x="1573.4" y="937.8"/><use href="#vs" x="1585.6" y="937.8"/><use href="#vs" x="1597.8" y="937.8"/><use href="#vs" x="1610.0" y="937.8"/><use href="#vs" x="1561.2" y="949.9"/><use href="#vs" x="1573.4" y="949.9"/><use href="#vs" x="1585.6" y="949.9"/><use href="#vs" x="1597.8" y="949.9"/><use href="#vs" x="1610.0" y="949.9"/><use href="#vs" x="1549.0" y="962.0"/><use href="#vs" x="1561.2" y="962.0"/><use href="#vs" x="1573.4" y="962.0"/><use href="#vs" x="1585.6" y="962.0"/><use href="#vs" x="1597.8" y="962.0"/><use href="#vs" x="1610.0" y="962.0"/><use href="#vs" x="1561.2" y="974.1"/><use href="#vs" x="1573.4" y="974.1"/><use href="#vs" x="1585.6" y="974.1"/><use href="#vs" x="1597.8" y="974.1"/><use href="#vs" x="1610.0" y="974.1"/><use href="#vs" x="1549.0" y="986.2"/><use href="#vs" x="1561.2" y="986.2"/><use href="#vs" x="1573.4" y="986.2"/><use href="#vs" x="1585.6" y="986.2"/><use href="#vs" x="1597.8" y="986.2"/><use href="#vs" x="1610.0" y="986.2"/><use href="#vs" x="1561.2" y="998.3"/><use href="#vs" x="1573.4" y="998.3"/><use href="#vs" x="1585.6" y="998.3"/><use href="#vs" x="1597.8" y="998.3"/><use href="#vs" x="1610.0" y="998.3"/><use href="#vs" x="1549.0" y="1010.4"/><use href="#vs" x="1561.2" y="1010.4"/><use href="#vs" x="1573.4" y="1010.4"/><use href="#vs" x="1585.6" y="1010.4"/><use href="#vs" x="1597.8" y="1010.4"/><use href="#vs" x="1610.0" y="1010.4"/><use href="#vs" x="1561.2" y="1022.5"/><use href="#vs" x="1573.4" y="1022.5"/><use href="#vs" x="1585.6" y="1022.5"/><use href="#vs" x="1597.8" y="1022.5"/><use href="#vs" x="1610.0" y="1022.5"/><use href="#vs" x="1549.0" y="1034.6"/><use href="#vs" x="1561.2" y="1034.6"/><use href="#vs" x="1573.4" y="1034.6"/><use href="#vs" x="1585.6" y="1034.6"/><use href="#vs" x="1597.8" y="1034.6"/><use href="#vs" x="1610.0" y="1034.6"/><use href="#vs" x="1561.2" y="1046.7"/><use href="#vs" x="1573.4" y="1046.7"/><use href="#vs" x="1585.6" y="1046.7"/><use href="#vs" x="1597.8" y="1046.7"/><use href="#vs" x="1610.0" y="1046.7"/><use href="#vs" x="1549.0" y="1058.8"/><use href="#vs" x="1561.2" y="1058.8"/><use href="#vs" x="1573.4" y="1058.8"/><use href="#vs" x="1585.6" y="1058.8"/><use href="#vs" x="1597.8" y="1058.8"/><use href="#vs" x="1610.0" y="1058.8"/><text x="1548" y="828" font-size="9" fill="#3b4542" font-weight="normal" font-family="Liberation Mono" text-anchor="start" >J15</text><g stroke="#454838" stroke-width="0.9" fill="none"><path d="M1630 837.5 L1665 837.5 L1665 844.5 L1630 844.5 Z"/><path d="M1630 849.6 L1665 849.6 L1665 856.6 L1630 856.6 Z"/><path d="M1630 861.7 L1665 861.7 L1665 868.7 L1630 868.7 Z"/><path d="M1630 873.8 L1665 873.8 L1665 880.8 L1630 880.8 Z"/><path d="M1630 885.9 L1665 885.9 L1665 892.9 L1630 892.9 Z"/><path d="M1630 898.0 L1665 898.0 L1665 905.0 L1630 905.0 Z"/><path d="M1630 910.1 L1665 910.1 L1665 917.1 L1630 917.1 Z"/><path d="M1630 922.2 L1665 922.2 L1665 929.2 L1630 929.2 Z"/><path d="M1630 934.3 L1665 934.3 L1665 941.3 L1630 941.3 Z"/><path d="M1630 946.4 L1665 946.4 L1665 953.4 L1630 953.4 Z"/><path d="M1630 958.5 L1665 958.5 L1665 965.5 L1630 965.5 Z"/><path d="M1630 970.6 L1665 970.6 L1665 977.6 L1630 977.6 Z"/><path d="M1630 982.7 L1665 982.7 L1665 989.7 L1630 989.7 Z"/><path d="M1630 994.8 L1665 994.8 L1665 1001.8 L1630 1001.8 Z"/><path d="M1630 1006.9 L1665 1006.9 L1665 1013.9 L1630 1013.9 Z"/><path d="M1630 1019.0 L1665 1019.0 L1665 1026.0 L1630 1026.0 Z"/><path d="M1630 1031.1 L1665 1031.1 L1665 1038.1 L1630 1038.1 Z"/><path d="M1630 1043.2 L1665 1043.2 L1665 1050.2 L1630 1050.2 Z"/><path d="M1630 1055.3 L1665 1055.3 L1665 1062.3 L1630 1062.3 Z"/><path d="M1620 835 L1675 835 L1675 1059 M1670 835 L1670 1059 M1627 838 L1627 1059"/></g><text x="1636" y="934" font-size="18" fill="#3a3e30" font-weight="normal" font-family="Liberation Mono" text-anchor="start" >GRID ORG</text><text x="1630" y="951" font-size="14" fill="#3a3e30" font-weight="normal" font-family="Liberation Mono" text-anchor="start" >+01138,234.24 (</text><text x="0" y="0" font-size="9" fill="#3a3e30" font-family="Liberation Mono" transform="translate(1628 1059) rotate(-90)">PRESS-FIT TECHNOLOGY 0.6mm ±0.05</text><circle cx="1602" cy="950" r="15" fill="none" stroke="#d0202a" stroke-width="1.6"/><path d="M1585 950 L1619 950 M1602 933 L1602 967" stroke="#d0202a" stroke-width="1.6"/><path d="M1588 936 L1616 964 M1616 936 L1588 964" stroke="#c8d0d8" stroke-width="1" opacity="0.8"/><rect x="893" y="585" width="35" height="155" fill="none" stroke="#452a55" stroke-width="0.9"/><text x="915" y="580" font-size="9" fill="#3b4542" font-weight="normal" font-family="Liberation Mono" text-anchor="start" >J6</text><rect x="894" y="607" width="11" height="61" fill="#d5363b" /><rect x="894" y="608" width="11" height="0.6" fill="#a02a30" /><rect x="894" y="610.5" width="11" height="0.6" fill="#a02a30" /><rect x="894" y="613" width="11" height="0.6" fill="#a02a30" /><rect x="894" y="615.5" width="11" height="0.6" fill="#a02a30" /><rect x="894" y="618" width="11" height="0.6" fill="#a02a30" /><rect x="894" y="620.5" width="11" height="0.6" fill="#a02a30" /><rect x="894" y="623" width="11" height="0.6" fill="#a02a30" /><rect x="894" y="625.5" width="11" height="0.6" fill="#a02a30" /><rect x="894" y="628" width="11" height="0.6" fill="#a02a30" /><rect x="894" y="630.5" width="11" height="0.6" fill="#a02a30" /><rect x="894" y="633" width="11" height="0.6" fill="#a02a30" /><rect x="894" y="635.5" width="11" height="0.6" fill="#a02a30" /><rect x="894" y="638" width="11" height="0.6" fill="#a02a30" /><rect x="894" y="640.5" width="11" height="0.6" fill="#a02a30" /><rect x="894" y="643" width="11" height="0.6" fill="#a02a30" /><rect x="894" y="645.5" width="11" height="0.6" fill="#a02a30" /><rect x="894" y="648" width="11" height="0.6" fill="#a02a30" /><rect x="894" y="650.5" width="11" height="0.6" fill="#a02a30" /><rect x="894" y="653" width="11" height="0.6" fill="#a02a30" /><rect x="894" y="655.5" width="11" height="0.6" fill="#a02a30" /><rect x="894" y="658" width="11" height="0.6" fill="#a02a30" /><rect x="894" y="660.5" width="11" height="0.6" fill="#a02a30" /><rect x="894" y="663" width="11" height="0.6" fill="#a02a30" /><rect x="894" y="665.5" width="11" height="0.6" fill="#a02a30" /><rect x="916" y="607" width="11" height="61" fill="#d5363b" /><rect x="916" y="608" width="11" height="0.6" fill="#a02a30" /><rect x="916" y="610.5" width="11" height="0.6" fill="#a02a30" /><rect x="916" y="613" width="11" height="0.6" fill="#a02a30" /><rect x="916" y="615.5" width="11" height="0.6" fill="#a02a30" /><rect x="916" y="618" width="11" height="0.6" fill="#a02a30" /><rect x="916" y="620.5" width="11" height="0.6" fill="#a02a30" /><rect x="916" y="623" width="11" height="0.6" fill="#a02a30" /><rect x="916" y="625.5" width="11" height="0.6" fill="#a02a30" /><rect x="916" y="628" width="11" height="0.6" fill="#a02a30" /><rect x="916" y="630.5" width="11" height="0.6" fill="#a02a30" /><rect x="916" y="633" width="11" height="0.6" fill="#a02a30" /><rect x="916" y="635.5" width="11" height="0.6" fill="#a02a30" /><rect x="916" y="638" width="11" height="0.6" fill="#a02a30" /><rect x="916" y="640.5" width="11" height="0.6" fill="#a02a30" /><rect x="916" y="643" width="11" height="0.6" fill="#a02a30" /><rect x="916" y="645.5" width="11" height="0.6" fill="#a02a30" /><rect x="916" y="648" width="11" height="0.6" fill="#a02a30" /><rect x="916" y="650.5" width="11" height="0.6" fill="#a02a30" /><rect x="916" y="653" width="11" height="0.6" fill="#a02a30" /><rect x="916" y="655.5" width="11" height="0.6" fill="#a02a30" /><rect x="916" y="658" width="11" height="0.6" fill="#a02a30" /><rect x="916" y="660.5" width="11" height="0.6" fill="#a02a30" /><rect x="916" y="663" width="11" height="0.6" fill="#a02a30" /><rect x="916" y="665.5" width="11" height="0.6" fill="#a02a30" /><rect x="891" y="662" width="42" height="47" fill="#8a2e38" /><rect x="903" y="597" width="10" height="60" fill="#1d2f3a" /><circle cx="903" cy="592" r="7.3" fill="#7a2a88" opacity="0.85"/><circle cx="903" cy="592" r="6" fill="#d5363b"/><circle cx="903" cy="592" r="3.3000000000000003" fill="#f0c040"/><circle cx="903" cy="592" r="2.2800000000000002" fill="#0a1018"/><circle cx="915" cy="601" r="5" fill="#22c2d2"/><circle cx="903" cy="683" r="7.3" fill="#7a2a88" opacity="0.85"/><circle cx="903" cy="683" r="6" fill="#d5363b"/><circle cx="903" cy="683" r="3.3000000000000003" fill="#f0c040"/><circle cx="903" cy="683" r="2.2800000000000002" fill="#0a1018"/><circle cx="915" cy="674" r="5" fill="#22c2d2"/><rect x="897" y="695" width="24" height="10" fill="#d5363b" /><rect x="923" y="700" width="8" height="8" fill="#d5363b" /><rect x="897" y="714" width="22" height="12" fill="#d5363b" /><rect x="922" y="712" width="8" height="8" fill="#d5363b" /><path d="M894 609 L855 609" stroke="#c9383a" stroke-width="1" fill="none"/><circle cx="850" cy="609" r="1.6" fill="#f2a22a"/><path d="M927 610 L945 612" stroke="#c9383a" stroke-width="1" fill="none"/><circle cx="947" cy="612" r="1.6" fill="#f2a22a"/><path d="M894 615.5 L849 615.5" stroke="#c9383a" stroke-width="1" fill="none"/><circle cx="844" cy="615.5" r="1.6" fill="#f2a22a"/><path d="M927 616 L945 618" stroke="#c9383a" stroke-width="1" fill="none"/><circle cx="947" cy="618" r="1.6" fill="#f2a22a"/><path d="M894 622 L843 622" stroke="#c9383a" stroke-width="1" fill="none"/><circle cx="838" cy="622" r="1.6" fill="#f2a22a"/><path d="M927 622 L945 624" stroke="#c9383a" stroke-width="1" fill="none"/><circle cx="947" cy="624" r="1.6" fill="#f2a22a"/><path d="M894 628.5 L837 628.5" stroke="#c9383a" stroke-width="1" fill="none"/><circle cx="832" cy="628.5" r="1.6" fill="#f2a22a"/><path d="M927 628 L945 630" stroke="#c9383a" stroke-width="1" fill="none"/><circle cx="947" cy="630" r="1.6" fill="#f2a22a"/><path d="M894 635 L831 635" stroke="#c9383a" stroke-width="1" fill="none"/><circle cx="826" cy="635" r="1.6" fill="#f2a22a"/><path d="M927 634 L945 636" stroke="#c9383a" stroke-width="1" fill="none"/><circle cx="947" cy="636" r="1.6" fill="#f2a22a"/><path d="M894 641.5 L825 641.5" stroke="#c9383a" stroke-width="1" fill="none"/><circle cx="820" cy="641.5" r="1.6" fill="#f2a22a"/><path d="M927 640 L945 642" stroke="#c9383a" stroke-width="1" fill="none"/><circle cx="947" cy="642" r="1.6" fill="#f2a22a"/><path d="M894 648 L819 648" stroke="#c9383a" stroke-width="1" fill="none"/><circle cx="814" cy="648" r="1.6" fill="#f2a22a"/><path d="M927 646 L945 648" stroke="#c9383a" stroke-width="1" fill="none"/><circle cx="947" cy="648" r="1.6" fill="#f2a22a"/><path d="M894 654.5 L813 654.5" stroke="#c9383a" stroke-width="1" fill="none"/><circle cx="808" cy="654.5" r="1.6" fill="#f2a22a"/><path d="M927 652 L945 654" stroke="#c9383a" stroke-width="1" fill="none"/><circle cx="947" cy="654" r="1.6" fill="#f2a22a"/><path d="M894 612 L845 612 L815 635" stroke="#c9383a" stroke-width="1" fill="none"/><circle cx="815" cy="635" r="1.8" fill="#f2a22a"/><path d="M894 640 L840 640 L830 650" stroke="#c9383a" stroke-width="1" fill="none"/><path d="M894 654 L820 654" stroke="#c9383a" stroke-width="1" fill="none"/><circle cx="820" cy="654" r="1.8" fill="#f2a22a"/><path d="M890 665 L875 675 L875 705 L885 712 L933 712 L940 705" stroke="#c9383a" stroke-width="1" fill="none"/><path d="M927 660 L940 668 L945 690" stroke="#c9383a" stroke-width="1" fill="none"/><circle cx="833" cy="657" r="1.6" fill="#f2a22a"/><circle cx="847" cy="660" r="1.6" fill="#f2a22a"/><circle cx="873" cy="662" r="1.6" fill="#f2a22a"/><circle cx="855" cy="665" r="1.6" fill="#f2a22a"/><text x="955" y="684" font-size="7" fill="#3b4542" font-weight="normal" font-family="Liberation Mono" text-anchor="start" >PS_ERR_STATUS</text><text x="955" y="698" font-size="7" fill="#3b4542" font-weight="normal" font-family="Liberation Mono" text-anchor="start" >PS_ERR_OUT</text><text x="955" y="712" font-size="7" fill="#3b4542" font-weight="normal" font-family="Liberation Mono" text-anchor="start" >PS_DONE</text><text x="853" y="635" font-size="14" fill="#2c3a38" font-weight="bold" font-family="Liberation Sans" text-anchor="start" >Panel</text><text x="770" y="697" font-size="8" fill="#3b4542" font-weight="normal" font-family="Liberation Mono" text-anchor="start" >F2</text><path d="M774 683 Q781 690 788 683 L790 688 L784 693 L778 693 L772 688 Z" fill="#d5363b"/><rect x="775" y="693" width="12" height="13" fill="#d5363b" /><rect x="775" y="706" width="16" height="22" fill="#d5363b" /><rect x="795" y="700" width="10" height="26" fill="#d5363b" /><text x="800" y="692" font-size="6" fill="#3b4542" font-weight="normal" font-family="Liberation Mono" text-anchor="start" >FP_3V0</text><rect x="698" y="716" width="60" height="124" fill="none" stroke="#452a55" stroke-width="0.9"/><text x="725" y="711" font-size="9" fill="#3b4542" font-weight="normal" font-family="Liberation Mono" text-anchor="start" >JFP1</text><rect x="743" y="721" width="16" height="7" fill="#d5363b" /><circle cx="741" cy="724" r="1.4" fill="#f2a22a"/><circle cx="761" cy="724" r="1.4" fill="#f2a22a"/><rect x="743" y="733" width="16" height="7" fill="#d5363b" /><circle cx="741" cy="736" r="1.4" fill="#f2a22a"/><circle cx="761" cy="736" r="1.4" fill="#f2a22a"/><rect x="743" y="745" width="16" height="7" fill="#d5363b" /><circle cx="741" cy="748" r="1.4" fill="#f2a22a"/><circle cx="761" cy="748" r="1.4" fill="#f2a22a"/><rect x="743" y="757" width="16" height="7" fill="#d5363b" /><circle cx="741" cy="760" r="1.4" fill="#f2a22a"/><circle cx="761" cy="760" r="1.4" fill="#f2a22a"/><rect x="743" y="769" width="16" height="7" fill="#d5363b" /><circle cx="741" cy="772" r="1.4" fill="#f2a22a"/><circle cx="761" cy="772" r="1.4" fill="#f2a22a"/><rect x="743" y="781" width="16" height="7" fill="#d5363b" /><circle cx="741" cy="784" r="1.4" fill="#f2a22a"/><circle cx="761" cy="784" r="1.4" fill="#f2a22a"/><rect x="743" y="793" width="16" height="7" fill="#d5363b" /><circle cx="741" cy="796" r="1.4" fill="#f2a22a"/><circle cx="761" cy="796" r="1.4" fill="#f2a22a"/><rect x="743" y="805" width="16" height="7" fill="#d5363b" /><circle cx="741" cy="808" r="1.4" fill="#f2a22a"/><circle cx="761" cy="808" r="1.4" fill="#f2a22a"/><rect x="743" y="817" width="16" height="7" fill="#d5363b" /><circle cx="741" cy="820" r="1.4" fill="#f2a22a"/><circle cx="761" cy="820" r="1.4" fill="#f2a22a"/><rect x="743" y="829" width="16" height="7" fill="#d5363b" /><circle cx="741" cy="832" r="1.4" fill="#f2a22a"/><circle cx="761" cy="832" r="1.4" fill="#f2a22a"/><path d="M759 736 L775 736 L781 742 L781 850 L770 860" stroke="#c9383a" stroke-width="1" fill="none"/><path d="M759 748 L770 748 L775 754 L775 840 L740 878 L740 930 L790 985 L885 985 L900 1000" stroke="#c9383a" stroke-width="1" fill="none"/><path d="M743 780 L735 786 L735 850 L770 890 L770 935 L800 965 L880 965" stroke="#c9383a" stroke-width="1" fill="none"/><path d="M743 790 L740 795 L740 840 L760 862" stroke="#c9383a" stroke-width="1" fill="none"/><circle cx="727" cy="777" r="2" fill="#f2a22a"/><defs><g id="c15"><rect x="-19" y="-30" width="38" height="60" fill="none" stroke="#452a55" stroke-width="0.8"/><rect x="-9" y="-9" width="18" height="18" fill="#d5363b" /><rect x="-13" y="-8.1" width="3.5" height="1.2" fill="#d5363b" /><rect x="9.5" y="-8.1" width="3.5" height="1.2" fill="#d5363b" /><rect x="-8.1" y="-13" width="1.2" height="3.5" fill="#d5363b" /><rect x="-8.1" y="9.5" width="1.2" height="3.5" fill="#d5363b" /><rect x="-13" y="-5.1" width="3.5" height="1.2" fill="#d5363b" /><rect x="9.5" y="-5.1" width="3.5" height="1.2" fill="#d5363b" /><rect x="-5.1" y="-13" width="1.2" height="3.5" fill="#d5363b" /><rect x="-5.1" y="9.5" width="1.2" height="3.5" fill="#d5363b" /><rect x="-13" y="-2.1" width="3.5" height="1.2" fill="#d5363b" /><rect x="9.5" y="-2.1" width="3.5" height="1.2" fill="#d5363b" /><rect x="-2.1" y="-13" width="1.2" height="3.5" fill="#d5363b" /><rect x="-2.1" y="9.5" width="1.2" height="3.5" fill="#d5363b" /><rect x="-13" y="0.9" width="3.5" height="1.2" fill="#d5363b" /><rect x="9.5" y="0.9" width="3.5" height="1.2" fill="#d5363b" /><rect x="0.9" y="-13" width="1.2" height="3.5" fill="#d5363b" /><rect x="0.9" y="9.5" width="1.2" height="3.5" fill="#d5363b" /><rect x="-13" y="3.9" width="3.5" height="1.2" fill="#d5363b" /><rect x="9.5" y="3.9" width="3.5" height="1.2" fill="#d5363b" /><rect x="3.9" y="-13" width="1.2" height="3.5" fill="#d5363b" /><rect x="3.9" y="9.5" width="1.2" height="3.5" fill="#d5363b" /><rect x="-13" y="6.9" width="3.5" height="1.2" fill="#d5363b" /><rect x="9.5" y="6.9" width="3.5" height="1.2" fill="#d5363b" /><rect x="6.9" y="-13" width="1.2" height="3.5" fill="#d5363b" /><rect x="6.9" y="9.5" width="1.2" height="3.5" fill="#d5363b" /><text x="0" y="3.3249999999999997" font-size="9.5" fill="#f4d0d0" font-weight="normal" font-family="Liberation Sans" text-anchor="middle" >15</text><rect x="-15" y="-29" width="6" height="5" fill="#d5363b" /><rect x="-6" y="-29" width="6" height="5" fill="#d5363b" /><rect x="3" y="-29" width="6" height="5" fill="#d5363b" /><rect x="12" y="-29" width="6" height="5" fill="#d5363b" /><rect x="-10" y="-22" width="7" height="5" fill="#d5363b" /><rect x="-1" y="-22" width="7" height="5" fill="#d5363b" /><rect x="8" y="-22" width="7" height="5" fill="#d5363b" /><rect x="-19" y="-14" width="4" height="10" fill="#d5363b" /><rect x="-19" y="2" width="4" height="10" fill="#d5363b" /><rect x="14" y="-10" width="4" height="7" fill="#d5363b" /><rect x="14" y="4" width="4" height="7" fill="#d5363b" /><rect x="-14" y="14" width="8" height="6" fill="#d5363b" /><rect x="-3" y="14" width="8" height="6" fill="#d5363b" /><rect x="8" y="14" width="8" height="6" fill="#d5363b" /><rect x="-15" y="23" width="6" height="5" fill="#d5363b" /><rect x="-6" y="23" width="6" height="5" fill="#d5363b" /><rect x="3" y="23" width="6" height="5" fill="#d5363b" /><rect x="11" y="23" width="6" height="5" fill="#d5363b" /><circle cx="-17" cy="-27" r="1.4" fill="#f2a22a"/><circle cx="16" cy="-27" r="1.4" fill="#f2a22a"/><circle cx="-17" cy="25" r="1.4" fill="#f2a22a"/><circle cx="16" cy="25" r="1.4" fill="#f2a22a"/><circle cx="-18" cy="-8" r="1.4" fill="#f2a22a"/><circle cx="17" cy="0" r="1.4" fill="#f2a22a"/><circle cx="-12" cy="12" r="1.4" fill="#f2a22a"/><circle cx="12" cy="-14" r="1.4" fill="#f2a22a"/><circle cx="0" cy="-18" r="1.4" fill="#f2a22a"/><circle cx="4" cy="20" r="1.4" fill="#f2a22a"/></g></defs><use href="#c15" x="815.0" y="758.0"/><use href="#c15" x="854.2" y="758.0"/><use href="#c15" x="893.4" y="758.0"/><use href="#c15" x="932.6" y="758.0"/><use href="#c15" x="815.0" y="821.3"/><use href="#c15" x="854.2" y="821.3"/><use href="#c15" x="893.4" y="821.3"/><use href="#c15" x="932.6" y="821.3"/><use href="#c15" x="815.0" y="884.6"/><use href="#c15" x="854.2" y="884.6"/><use href="#c15" x="893.4" y="884.6"/><use href="#c15" x="932.6" y="884.6"/><use href="#c15" x="815.0" y="947.9"/><use href="#c15" x="854.2" y="947.9"/><use href="#c15" x="893.4" y="947.9"/><use href="#c15" x="932.6" y="947.9"/><text x="745" y="860" font-size="9" fill="#3b4542" font-weight="normal" font-family="Liberation Mono" text-anchor="start" >IC56</text><rect x="720" y="862" width="14" height="5" fill="#d5363b" /><rect x="762" y="862" width="14" height="5" fill="#d5363b" /><circle cx="718" cy="864" r="1.3" fill="#f2a22a"/><circle cx="778" cy="864" r="1.3" fill="#f2a22a"/><rect x="720" y="869.6" width="14" height="5" fill="#d5363b" /><rect x="762" y="869.6" width="14" height="5" fill="#d5363b" /><circle cx="718" cy="871.6" r="1.3" fill="#f2a22a"/><circle cx="778" cy="871.6" r="1.3" fill="#f2a22a"/><rect x="720" y="877.2" width="14" height="5" fill="#d5363b" /><rect x="762" y="877.2" width="14" height="5" fill="#d5363b" /><circle cx="718" cy="879.2" r="1.3" fill="#f2a22a"/><circle cx="778" cy="879.2" r="1.3" fill="#f2a22a"/><rect x="720" y="884.8" width="14" height="5" fill="#d5363b" /><rect x="762" y="884.8" width="14" height="5" fill="#d5363b" /><circle cx="718" cy="886.8" r="1.3" fill="#f2a22a"/><circle cx="778" cy="886.8" r="1.3" fill="#f2a22a"/><rect x="720" y="892.4" width="14" height="5" fill="#d5363b" /><rect x="762" y="892.4" width="14" height="5" fill="#d5363b" /><circle cx="718" cy="894.4" r="1.3" fill="#f2a22a"/><circle cx="778" cy="894.4" r="1.3" fill="#f2a22a"/><rect x="720" y="900" width="14" height="5" fill="#d5363b" /><rect x="762" y="900" width="14" height="5" fill="#d5363b" /><circle cx="718" cy="902" r="1.3" fill="#f2a22a"/><circle cx="778" cy="902" r="1.3" fill="#f2a22a"/><rect x="720" y="907.6" width="14" height="5" fill="#d5363b" /><rect x="762" y="907.6" width="14" height="5" fill="#d5363b" /><circle cx="718" cy="909.6" r="1.3" fill="#f2a22a"/><circle cx="778" cy="909.6" r="1.3" fill="#f2a22a"/><rect x="720" y="915.2" width="14" height="5" fill="#d5363b" /><rect x="762" y="915.2" width="14" height="5" fill="#d5363b" /><circle cx="718" cy="917.2" r="1.3" fill="#f2a22a"/><circle cx="778" cy="917.2" r="1.3" fill="#f2a22a"/><rect x="718" y="860" width="20" height="63" fill="none" stroke="#452a55" stroke-width="0.8"/><rect x="760" y="860" width="20" height="63" fill="none" stroke="#452a55" stroke-width="0.8"/><path d="M707 860 L713 865 L720 865" stroke="#c9383a" stroke-width="1" fill="none"/><circle cx="707" cy="860" r="1.8" fill="#f2a22a"/><rect x="780" y="858" width="7" height="9" fill="#d5363b" /><path d="M769 922 L769 930 L762 935" stroke="#c9383a" stroke-width="1" fill="none"/><circle cx="762" cy="935" r="1.8" fill="#f2a22a"/><circle cx="779" cy="950" r="1.8" fill="#f2a22a"/><text x="752" y="1000" font-size="9" fill="#3b4542" font-weight="normal" font-family="Liberation Mono" text-anchor="start" >B3</text><rect x="720" y="1002" width="60" height="40" fill="none" stroke="#1e2a50" stroke-width="0.9"/><circle cx="755" cy="1024" r="17" fill="#d5363b" stroke="#8a3898" stroke-width="1.2"/><circle cx="755" cy="1024" r="8.5" fill="#0a0e18" stroke="#f0c040" stroke-width="1"/><text x="755" y="1015" font-size="9" fill="#e8c0c0" font-weight="normal" font-family="Liberation Sans" text-anchor="middle" >1</text><text x="755" y="1031" font-size="5" fill="#e8c0c0" font-weight="normal" font-family="Liberation Sans" text-anchor="middle" >CHASSIS</text><text x="752" y="1052" font-size="10" fill="#3b4542" font-weight="normal" font-family="Liberation Mono" text-anchor="start" >JFP2</text><text x="850" y="990" font-size="9" fill="#3b4542" font-weight="normal" font-family="Liberation Mono" text-anchor="start" >IC108</text><text x="925" y="990" font-size="9" fill="#3b4542" font-weight="normal" font-family="Liberation Mono" text-anchor="start" >IC109</text><rect x="834" y="995" width="70" height="52" fill="none" stroke="#452a55" stroke-width="0.8"/><rect x="908" y="995" width="66" height="52" fill="none" stroke="#452a55" stroke-width="0.8"/><rect x="815" y="997" width="14" height="26" fill="#d5363b" /><rect x="815" y="998" width="14" height="0.6" fill="#a02a30" /><rect x="815" y="1000.5" width="14" height="0.6" fill="#a02a30" /><rect x="815" y="1003" width="14" height="0.6" fill="#a02a30" /><rect x="815" y="1005.5" width="14" height="0.6" fill="#a02a30" /><rect x="815" y="1008" width="14" height="0.6" fill="#a02a30" /><rect x="815" y="1010.5" width="14" height="0.6" fill="#a02a30" /><rect x="815" y="1013" width="14" height="0.6" fill="#a02a30" /><rect x="815" y="1015.5" width="14" height="0.6" fill="#a02a30" /><rect x="815" y="1018" width="14" height="0.6" fill="#a02a30" /><rect x="815" y="1020.5" width="14" height="0.6" fill="#a02a30" /><rect x="838" y="997" width="12" height="48" fill="#d5363b" /><rect x="838" y="998" width="12" height="0.6" fill="#a02a30" /><rect x="838" y="1000.5" width="12" height="0.6" fill="#a02a30" /><rect x="838" y="1003" width="12" height="0.6" fill="#a02a30" /><rect x="838" y="1005.5" width="12" height="0.6" fill="#a02a30" /><rect x="838" y="1008" width="12" height="0.6" fill="#a02a30" /><rect x="838" y="1010.5" width="12" height="0.6" fill="#a02a30" /><rect x="838" y="1013" width="12" height="0.6" fill="#a02a30" /><rect x="838" y="1015.5" width="12" height="0.6" fill="#a02a30" /><rect x="838" y="1018" width="12" height="0.6" fill="#a02a30" /><rect x="838" y="1020.5" width="12" height="0.6" fill="#a02a30" /><rect x="838" y="1023" width="12" height="0.6" fill="#a02a30" /><rect x="838" y="1025.5" width="12" height="0.6" fill="#a02a30" /><rect x="838" y="1028" width="12" height="0.6" fill="#a02a30" /><rect x="838" y="1030.5" width="12" height="0.6" fill="#a02a30" /><rect x="838" y="1033" width="12" height="0.6" fill="#a02a30" /><rect x="838" y="1035.5" width="12" height="0.6" fill="#a02a30" /><rect x="838" y="1038" width="12" height="0.6" fill="#a02a30" /><rect x="838" y="1040.5" width="12" height="0.6" fill="#a02a30" /><rect x="838" y="1043" width="12" height="0.6" fill="#a02a30" /><rect x="873" y="997" width="12" height="48" fill="#d5363b" /><rect x="873" y="998" width="12" height="0.6" fill="#a02a30" /><rect x="873" y="1000.5" width="12" height="0.6" fill="#a02a30" /><rect x="873" y="1003" width="12" height="0.6" fill="#a02a30" /><rect x="873" y="1005.5" width="12" height="0.6" fill="#a02a30" /><rect x="873" y="1008" width="12" height="0.6" fill="#a02a30" /><rect x="873" y="1010.5" width="12" height="0.6" fill="#a02a30" /><rect x="873" y="1013" width="12" height="0.6" fill="#a02a30" /><rect x="873" y="1015.5" width="12" height="0.6" fill="#a02a30" /><rect x="873" y="1018" width="12" height="0.6" fill="#a02a30" /><rect x="873" y="1020.5" width="12" height="0.6" fill="#a02a30" /><rect x="873" y="1023" width="12" height="0.6" fill="#a02a30" /><rect x="873" y="1025.5" width="12" height="0.6" fill="#a02a30" /><rect x="873" y="1028" width="12" height="0.6" fill="#a02a30" /><rect x="873" y="1030.5" width="12" height="0.6" fill="#a02a30" /><rect x="873" y="1033" width="12" height="0.6" fill="#a02a30" /><rect x="873" y="1035.5" width="12" height="0.6" fill="#a02a30" /><rect x="873" y="1038" width="12" height="0.6" fill="#a02a30" /><rect x="873" y="1040.5" width="12" height="0.6" fill="#a02a30" /><rect x="873" y="1043" width="12" height="0.6" fill="#a02a30" /><rect x="900" y="995" width="12" height="38" fill="#d5363b" /><rect x="900" y="996" width="12" height="0.6" fill="#a02a30" /><rect x="900" y="998.5" width="12" height="0.6" fill="#a02a30" /><rect x="900" y="1001" width="12" height="0.6" fill="#a02a30" /><rect x="900" y="1003.5" width="12" height="0.6" fill="#a02a30" /><rect x="900" y="1006" width="12" height="0.6" fill="#a02a30" /><rect x="900" y="1008.5" width="12" height="0.6" fill="#a02a30" /><rect x="900" y="1011" width="12" height="0.6" fill="#a02a30" /><rect x="900" y="1013.5" width="12" height="0.6" fill="#a02a30" /><rect x="900" y="1016" width="12" height="0.6" fill="#a02a30" /><rect x="900" y="1018.5" width="12" height="0.6" fill="#a02a30" /><rect x="900" y="1021" width="12" height="0.6" fill="#a02a30" /><rect x="900" y="1023.5" width="12" height="0.6" fill="#a02a30" /><rect x="900" y="1026" width="12" height="0.6" fill="#a02a30" /><rect x="900" y="1028.5" width="12" height="0.6" fill="#a02a30" /><rect x="900" y="1031" width="12" height="0.6" fill="#a02a30" /><rect x="912" y="997" width="12" height="48" fill="#d5363b" /><rect x="912" y="998" width="12" height="0.6" fill="#a02a30" /><rect x="912" y="1000.5" width="12" height="0.6" fill="#a02a30" /><rect x="912" y="1003" width="12" height="0.6" fill="#a02a30" /><rect x="912" y="1005.5" width="12" height="0.6" fill="#a02a30" /><rect x="912" y="1008" width="12" height="0.6" fill="#a02a30" /><rect x="912" y="1010.5" width="12" height="0.6" fill="#a02a30" /><rect x="912" y="1013" width="12" height="0.6" fill="#a02a30" /><rect x="912" y="1015.5" width="12" height="0.6" fill="#a02a30" /><rect x="912" y="1018" width="12" height="0.6" fill="#a02a30" /><rect x="912" y="1020.5" width="12" height="0.6" fill="#a02a30" /><rect x="912" y="1023" width="12" height="0.6" fill="#a02a30" /><rect x="912" y="1025.5" width="12" height="0.6" fill="#a02a30" /><rect x="912" y="1028" width="12" height="0.6" fill="#a02a30" /><rect x="912" y="1030.5" width="12" height="0.6" fill="#a02a30" /><rect x="912" y="1033" width="12" height="0.6" fill="#a02a30" /><rect x="912" y="1035.5" width="12" height="0.6" fill="#a02a30" /><rect x="912" y="1038" width="12" height="0.6" fill="#a02a30" /><rect x="912" y="1040.5" width="12" height="0.6" fill="#a02a30" /><rect x="912" y="1043" width="12" height="0.6" fill="#a02a30" /><rect x="947" y="997" width="12" height="48" fill="#d5363b" /><rect x="947" y="998" width="12" height="0.6" fill="#a02a30" /><rect x="947" y="1000.5" width="12" height="0.6" fill="#a02a30" /><rect x="947" y="1003" width="12" height="0.6" fill="#a02a30" /><rect x="947" y="1005.5" width="12" height="0.6" fill="#a02a30" /><rect x="947" y="1008" width="12" height="0.6" fill="#a02a30" /><rect x="947" y="1010.5" width="12" height="0.6" fill="#a02a30" /><rect x="947" y="1013" width="12" height="0.6" fill="#a02a30" /><rect x="947" y="1015.5" width="12" height="0.6" fill="#a02a30" /><rect x="947" y="1018" width="12" height="0.6" fill="#a02a30" /><rect x="947" y="1020.5" width="12" height="0.6" fill="#a02a30" /><rect x="947" y="1023" width="12" height="0.6" fill="#a02a30" /><rect x="947" y="1025.5" width="12" height="0.6" fill="#a02a30" /><rect x="947" y="1028" width="12" height="0.6" fill="#a02a30" /><rect x="947" y="1030.5" width="12" height="0.6" fill="#a02a30" /><rect x="947" y="1033" width="12" height="0.6" fill="#a02a30" /><rect x="947" y="1035.5" width="12" height="0.6" fill="#a02a30" /><rect x="947" y="1038" width="12" height="0.6" fill="#a02a30" /><rect x="947" y="1040.5" width="12" height="0.6" fill="#a02a30" /><rect x="947" y="1043" width="12" height="0.6" fill="#a02a30" /><circle cx="812" cy="1000" r="1.3" fill="#f2a22a"/><circle cx="852" cy="1002" r="1.3" fill="#f2a22a"/><circle cx="887" cy="1002" r="1.3" fill="#f2a22a"/><circle cx="961" cy="1002" r="1.3" fill="#f2a22a"/><circle cx="812" cy="1005" r="1.3" fill="#f2a22a"/><circle cx="852" cy="1009" r="1.3" fill="#f2a22a"/><circle cx="887" cy="1009" r="1.3" fill="#f2a22a"/><circle cx="961" cy="1009" r="1.3" fill="#f2a22a"/><circle cx="812" cy="1010" r="1.3" fill="#f2a22a"/><circle cx="852" cy="1016" r="1.3" fill="#f2a22a"/><circle cx="887" cy="1016" r="1.3" fill="#f2a22a"/><circle cx="961" cy="1016" r="1.3" fill="#f2a22a"/><circle cx="812" cy="1015" r="1.3" fill="#f2a22a"/><circle cx="852" cy="1023" r="1.3" fill="#f2a22a"/><circle cx="887" cy="1023" r="1.3" fill="#f2a22a"/><circle cx="961" cy="1023" r="1.3" fill="#f2a22a"/><circle cx="812" cy="1020" r="1.3" fill="#f2a22a"/><circle cx="852" cy="1030" r="1.3" fill="#f2a22a"/><circle cx="887" cy="1030" r="1.3" fill="#f2a22a"/><circle cx="961" cy="1030" r="1.3" fill="#f2a22a"/><circle cx="812" cy="1025" r="1.3" fill="#f2a22a"/><circle cx="852" cy="1037" r="1.3" fill="#f2a22a"/><circle cx="887" cy="1037" r="1.3" fill="#f2a22a"/><circle cx="961" cy="1037" r="1.3" fill="#f2a22a"/><rect x="912" y="989" width="12" height="7" fill="#d5363b" /><rect x="920" y="1048" width="12" height="7" fill="#d5363b" /><rect x="937" y="1048" width="14" height="7" fill="#d5363b" /><rect x="828" y="1040" width="8" height="12" fill="#d5363b" /><rect x="890" y="1037" width="8" height="12" fill="#d5363b" /><path d="M800 992 L875 992 L895 1005" stroke="#c9383a" stroke-width="1" fill="none"/><circle cx="800" cy="992" r="1.8" fill="#f2a22a"/><path d="M856 1045 L856 1059" stroke="#c9383a" stroke-width="1" fill="none"/><path d="M990 768 L990 955 L1040 1005 L1040 1059" stroke="#c9383a" stroke-width="0.9" fill="none"/><path d="M991.8 768 L991.8 956.2 L1041.5 1006.2 L1041.5 1059" stroke="#c9383a" stroke-width="0.9" fill="none"/><path d="M993.6 768 L993.6 957.4 L1043 1007.4 L1043 1059" stroke="#c9383a" stroke-width="0.9" fill="none"/><path d="M995.4 768 L995.4 958.6 L1044.5 1008.6 L1044.5 1059" stroke="#c9383a" stroke-width="0.9" fill="none"/><path d="M997.2 768 L997.2 959.8 L1046 1009.8 L1046 1059" stroke="#c9383a" stroke-width="0.9" fill="none"/><path d="M999 768 L999 961 L1047.5 1011 L1047.5 1059" stroke="#c9383a" stroke-width="0.9" fill="none"/><circle cx="993" cy="766" r="1.5" fill="#f2a22a"/><circle cx="1006" cy="766" r="1.5" fill="#f2a22a"/><circle cx="991" cy="771" r="1.5" fill="#f2a22a"/><circle cx="1008" cy="771" r="1.5" fill="#f2a22a"/><circle cx="995" cy="777" r="1.5" fill="#f2a22a"/><circle cx="1006" cy="777" r="1.5" fill="#f2a22a"/><circle cx="1011" cy="783" r="1.5" fill="#f2a22a"/><path d="M958 1000 L965 1059" stroke="#c9383a" stroke-width="0.9" fill="none"/><path d="M961 1000 L968 1059" stroke="#c9383a" stroke-width="0.9" fill="none"/><path d="M964 1000 L971 1059" stroke="#c9383a" stroke-width="0.9" fill="none"/><path d="M967 1000 L974 1059" stroke="#c9383a" stroke-width="0.9" fill="none"/><text x="955" y="805" font-size="9" fill="#3b4542" font-weight="normal" font-family="Liberation Mono" text-anchor="start" >OSC1</text><rect x="966" y="812" width="11" height="10" fill="#d5363b" /><rect x="966" y="826" width="11" height="10" fill="#d5363b" /><rect x="952" y="812" width="8" height="10" fill="#d5363b" /><rect x="952" y="826" width="8" height="10" fill="#d5363b" /><circle cx="967" cy="777" r="1.5" fill="#f2a22a"/><circle cx="967" cy="782" r="1.5" fill="#f2a22a"/><circle cx="967" cy="788" r="1.5" fill="#f2a22a"/><circle cx="978" cy="777" r="1.5" fill="#f2a22a"/><circle cx="978" cy="782" r="1.5" fill="#f2a22a"/><circle cx="978" cy="788" r="1.5" fill="#f2a22a"/><circle cx="986" cy="776" r="1.5" fill="#f2a22a"/><circle cx="985" cy="783" r="1.5" fill="#f2a22a"/><circle cx="1010" cy="830" r="1.4" fill="#f2a22a"/><circle cx="1010" cy="840" r="1.4" fill="#f2a22a"/><circle cx="1010" cy="855" r="1.4" fill="#f2a22a"/><circle cx="1010" cy="870" r="1.4" fill="#f2a22a"/><circle cx="1010" cy="885" r="1.4" fill="#f2a22a"/><circle cx="1010" cy="900" r="1.4" fill="#f2a22a"/><rect x="973" y="1020" width="18" height="9" fill="#d5363b" /><rect x="975" y="1036" width="16" height="10" fill="#d5363b" /><rect x="1001" y="1013" width="17" height="10" fill="#d5363b" /><rect x="1000" y="1038" width="18" height="10" fill="#d5363b" /><rect x="1008" y="998" width="14" height="12" fill="#d5363b" /><rect x="990" y="1007" width="12" height="6" fill="#d5363b" /><circle cx="987" cy="968" r="1.5" fill="#f2a22a"/><circle cx="992" cy="972" r="1.5" fill="#f2a22a"/><circle cx="997" cy="975" r="1.5" fill="#f2a22a"/><circle cx="1000" cy="981" r="1.5" fill="#f2a22a"/><circle cx="1005" cy="985" r="1.5" fill="#f2a22a"/><circle cx="1009" cy="990" r="1.5" fill="#f2a22a"/><circle cx="1013" cy="994" r="1.5" fill="#f2a22a"/><circle cx="1018" cy="1000" r="1.5" fill="#f2a22a"/><circle cx="989" cy="980" r="1.5" fill="#f2a22a"/><circle cx="996" cy="983" r="1.5" fill="#f2a22a"/><circle cx="1010" cy="978" r="1.5" fill="#f2a22a"/><circle cx="1016" cy="996" r="1.5" fill="#f2a22a"/><circle cx="972" cy="1044" r="1.5" fill="#f2a22a"/><circle cx="985" cy="1052" r="1.5" fill="#f2a22a"/><circle cx="998" cy="1050" r="1.5" fill="#f2a22a"/><circle cx="1014" cy="1050" r="1.5" fill="#f2a22a"/><path d="M991 1025 L1000 1030 L1015 1030 L1018 1023" stroke="#c9383a" stroke-width="0.9" fill="none"/><path d="M991 1040 L1000 1043" stroke="#c9383a" stroke-width="0.9" fill="none"/><circle cx="990" cy="960" r="1.5" fill="#f2a22a"/><circle cx="996" cy="958" r="1.5" fill="#f2a22a"/><circle cx="994" cy="965" r="1.5" fill="#f2a22a"/><circle cx="1000" cy="963" r="1.5" fill="#f2a22a"/><circle cx="998" cy="970" r="1.5" fill="#f2a22a"/><circle cx="1004" cy="968" r="1.5" fill="#f2a22a"/><circle cx="1002" cy="975" r="1.5" fill="#f2a22a"/><circle cx="1008" cy="973" r="1.5" fill="#f2a22a"/><circle cx="1006" cy="980" r="1.5" fill="#f2a22a"/><circle cx="1012" cy="978" r="1.5" fill="#f2a22a"/><circle cx="1010" cy="985" r="1.5" fill="#f2a22a"/><circle cx="1016" cy="983" r="1.5" fill="#f2a22a"/><text x="1165" y="607" font-size="9" fill="#3b4542" font-weight="normal" font-family="Liberation Mono" text-anchor="start" >IC18</text><text x="1235" y="607" font-size="9" fill="#3b4542" font-weight="normal" font-family="Liberation Mono" text-anchor="start" >IC44</text><rect x="1153" y="607" width="60" height="60" fill="none" stroke="#452a55" stroke-width="0.8"/><rect x="1162" y="616" width="42" height="42" fill="#d5363b" /><rect x="1158" y="616.9" width="3.5" height="1.2" fill="#d5363b" /><rect x="1204.5" y="616.9" width="3.5" height="1.2" fill="#d5363b" /><rect x="1162.9" y="612" width="1.2" height="3.5" fill="#d5363b" /><rect x="1162.9" y="658.5" width="1.2" height="3.5" fill="#d5363b" /><rect x="1158" y="619.9" width="3.5" height="1.2" fill="#d5363b" /><rect x="1204.5" y="619.9" width="3.5" height="1.2" fill="#d5363b" /><rect x="1165.9" y="612" width="1.2" height="3.5" fill="#d5363b" /><rect x="1165.9" y="658.5" width="1.2" height="3.5" fill="#d5363b" /><rect x="1158" y="622.9" width="3.5" height="1.2" fill="#d5363b" /><rect x="1204.5" y="622.9" width="3.5" height="1.2" fill="#d5363b" /><rect x="1168.9" y="612" width="1.2" height="3.5" fill="#d5363b" /><rect x="1168.9" y="658.5" width="1.2" height="3.5" fill="#d5363b" /><rect x="1158" y="625.9" width="3.5" height="1.2" fill="#d5363b" /><rect x="1204.5" y="625.9" width="3.5" height="1.2" fill="#d5363b" /><rect x="1171.9" y="612" width="1.2" height="3.5" fill="#d5363b" /><rect x="1171.9" y="658.5" width="1.2" height="3.5" fill="#d5363b" /><rect x="1158" y="628.9" width="3.5" height="1.2" fill="#d5363b" /><rect x="1204.5" y="628.9" width="3.5" height="1.2" fill="#d5363b" /><rect x="1174.9" y="612" width="1.2" height="3.5" fill="#d5363b" /><rect x="1174.9" y="658.5" width="1.2" height="3.5" fill="#d5363b" /><rect x="1158" y="631.9" width="3.5" height="1.2" fill="#d5363b" /><rect x="1204.5" y="631.9" width="3.5" height="1.2" fill="#d5363b" /><rect x="1177.9" y="612" width="1.2" height="3.5" fill="#d5363b" /><rect x="1177.9" y="658.5" width="1.2" height="3.5" fill="#d5363b" /><rect x="1158" y="634.9" width="3.5" height="1.2" fill="#d5363b" /><rect x="1204.5" y="634.9" width="3.5" height="1.2" fill="#d5363b" /><rect x="1180.9" y="612" width="1.2" height="3.5" fill="#d5363b" /><rect x="1180.9" y="658.5" width="1.2" height="3.5" fill="#d5363b" /><rect x="1158" y="637.9" width="3.5" height="1.2" fill="#d5363b" /><rect x="1204.5" y="637.9" width="3.5" height="1.2" fill="#d5363b" /><rect x="1183.9" y="612" width="1.2" height="3.5" fill="#d5363b" /><rect x="1183.9" y="658.5" width="1.2" height="3.5" fill="#d5363b" /><rect x="1158" y="640.9" width="3.5" height="1.2" fill="#d5363b" /><rect x="1204.5" y="640.9" width="3.5" height="1.2" fill="#d5363b" /><rect x="1186.9" y="612" width="1.2" height="3.5" fill="#d5363b" /><rect x="1186.9" y="658.5" width="1.2" height="3.5" fill="#d5363b" /><rect x="1158" y="643.9" width="3.5" height="1.2" fill="#d5363b" /><rect x="1204.5" y="643.9" width="3.5" height="1.2" fill="#d5363b" /><rect x="1189.9" y="612" width="1.2" height="3.5" fill="#d5363b" /><rect x="1189.9" y="658.5" width="1.2" height="3.5" fill="#d5363b" /><rect x="1158" y="646.9" width="3.5" height="1.2" fill="#d5363b" /><rect x="1204.5" y="646.9" width="3.5" height="1.2" fill="#d5363b" /><rect x="1192.9" y="612" width="1.2" height="3.5" fill="#d5363b" /><rect x="1192.9" y="658.5" width="1.2" height="3.5" fill="#d5363b" /><rect x="1158" y="649.9" width="3.5" height="1.2" fill="#d5363b" /><rect x="1204.5" y="649.9" width="3.5" height="1.2" fill="#d5363b" /><rect x="1195.9" y="612" width="1.2" height="3.5" fill="#d5363b" /><rect x="1195.9" y="658.5" width="1.2" height="3.5" fill="#d5363b" /><rect x="1158" y="652.9" width="3.5" height="1.2" fill="#d5363b" /><rect x="1204.5" y="652.9" width="3.5" height="1.2" fill="#d5363b" /><rect x="1198.9" y="612" width="1.2" height="3.5" fill="#d5363b" /><rect x="1198.9" y="658.5" width="1.2" height="3.5" fill="#d5363b" /><rect x="1158" y="655.9" width="3.5" height="1.2" fill="#d5363b" /><rect x="1204.5" y="655.9" width="3.5" height="1.2" fill="#d5363b" /><rect x="1201.9" y="612" width="1.2" height="3.5" fill="#d5363b" /><rect x="1201.9" y="658.5" width="1.2" height="3.5" fill="#d5363b" /><text x="1183" y="636" font-size="13" fill="#f4d0d0" font-weight="normal" font-family="Liberation Sans" text-anchor="middle" >45</text><text x="1183" y="649.35" font-size="10.4" fill="#f4d0d0" font-weight="normal" font-family="Liberation Sans" text-anchor="middle" >GND</text><circle cx="1170" cy="624" r="0.9" fill="#f0b040"/><circle cx="1170" cy="632.7" r="0.9" fill="#f0b040"/><circle cx="1170" cy="641.4" r="0.9" fill="#f0b040"/><circle cx="1170" cy="650.1" r="0.9" fill="#f0b040"/><circle cx="1178.7" cy="624" r="0.9" fill="#f0b040"/><circle cx="1178.7" cy="632.7" r="0.9" fill="#f0b040"/><circle cx="1178.7" cy="641.4" r="0.9" fill="#f0b040"/><circle cx="1178.7" cy="650.1" r="0.9" fill="#f0b040"/><circle cx="1187.4" cy="624" r="0.9" fill="#f0b040"/><circle cx="1187.4" cy="632.7" r="0.9" fill="#f0b040"/><circle cx="1187.4" cy="641.4" r="0.9" fill="#f0b040"/><circle cx="1187.4" cy="650.1" r="0.9" fill="#f0b040"/><circle cx="1196.1" cy="624" r="0.9" fill="#f0b040"/><circle cx="1196.1" cy="632.7" r="0.9" fill="#f0b040"/><circle cx="1196.1" cy="641.4" r="0.9" fill="#f0b040"/><circle cx="1196.1" cy="650.1" r="0.9" fill="#f0b040"/><rect x="1219" y="607" width="60" height="60" fill="none" stroke="#452a55" stroke-width="0.8"/><rect x="1228" y="616" width="42" height="42" fill="#d5363b" /><rect x="1224" y="616.9" width="3.5" height="1.2" fill="#d5363b" /><rect x="1270.5" y="616.9" width="3.5" height="1.2" fill="#d5363b" /><rect x="1228.9" y="612" width="1.2" height="3.5" fill="#d5363b" /><rect x="1228.9" y="658.5" width="1.2" height="3.5" fill="#d5363b" /><rect x="1224" y="619.9" width="3.5" height="1.2" fill="#d5363b" /><rect x="1270.5" y="619.9" width="3.5" height="1.2" fill="#d5363b" /><rect x="1231.9" y="612" width="1.2" height="3.5" fill="#d5363b" /><rect x="1231.9" y="658.5" width="1.2" height="3.5" fill="#d5363b" /><rect x="1224" y="622.9" width="3.5" height="1.2" fill="#d5363b" /><rect x="1270.5" y="622.9" width="3.5" height="1.2" fill="#d5363b" /><rect x="1234.9" y="612" width="1.2" height="3.5" fill="#d5363b" /><rect x="1234.9" y="658.5" width="1.2" height="3.5" fill="#d5363b" /><rect x="1224" y="625.9" width="3.5" height="1.2" fill="#d5363b" /><rect x="1270.5" y="625.9" width="3.5" height="1.2" fill="#d5363b" /><rect x="1237.9" y="612" width="1.2" height="3.5" fill="#d5363b" /><rect x="1237.9" y="658.5" width="1.2" height="3.5" fill="#d5363b" /><rect x="1224" y="628.9" width="3.5" height="1.2" fill="#d5363b" /><rect x="1270.5" y="628.9" width="3.5" height="1.2" fill="#d5363b" /><rect x="1240.9" y="612" width="1.2" height="3.5" fill="#d5363b" /><rect x="1240.9" y="658.5" width="1.2" height="3.5" fill="#d5363b" /><rect x="1224" y="631.9" width="3.5" height="1.2" fill="#d5363b" /><rect x="1270.5" y="631.9" width="3.5" height="1.2" fill="#d5363b" /><rect x="1243.9" y="612" width="1.2" height="3.5" fill="#d5363b" /><rect x="1243.9" y="658.5" width="1.2" height="3.5" fill="#d5363b" /><rect x="1224" y="634.9" width="3.5" height="1.2" fill="#d5363b" /><rect x="1270.5" y="634.9" width="3.5" height="1.2" fill="#d5363b" /><rect x="1246.9" y="612" width="1.2" height="3.5" fill="#d5363b" /><rect x="1246.9" y="658.5" width="1.2" height="3.5" fill="#d5363b" /><rect x="1224" y="637.9" width="3.5" height="1.2" fill="#d5363b" /><rect x="1270.5" y="637.9" width="3.5" height="1.2" fill="#d5363b" /><rect x="1249.9" y="612" width="1.2" height="3.5" fill="#d5363b" /><rect x="1249.9" y="658.5" width="1.2" height="3.5" fill="#d5363b" /><rect x="1224" y="640.9" width="3.5" height="1.2" fill="#d5363b" /><rect x="1270.5" y="640.9" width="3.5" height="1.2" fill="#d5363b" /><rect x="1252.9" y="612" width="1.2" height="3.5" fill="#d5363b" /><rect x="1252.9" y="658.5" width="1.2" height="3.5" fill="#d5363b" /><rect x="1224" y="643.9" width="3.5" height="1.2" fill="#d5363b" /><rect x="1270.5" y="643.9" width="3.5" height="1.2" fill="#d5363b" /><rect x="1255.9" y="612" width="1.2" height="3.5" fill="#d5363b" /><rect x="1255.9" y="658.5" width="1.2" height="3.5" fill="#d5363b" /><rect x="1224" y="646.9" width="3.5" height="1.2" fill="#d5363b" /><rect x="1270.5" y="646.9" width="3.5" height="1.2" fill="#d5363b" /><rect x="1258.9" y="612" width="1.2" height="3.5" fill="#d5363b" /><rect x="1258.9" y="658.5" width="1.2" height="3.5" fill="#d5363b" /><rect x="1224" y="649.9" width="3.5" height="1.2" fill="#d5363b" /><rect x="1270.5" y="649.9" width="3.5" height="1.2" fill="#d5363b" /><rect x="1261.9" y="612" width="1.2" height="3.5" fill="#d5363b" /><rect x="1261.9" y="658.5" width="1.2" height="3.5" fill="#d5363b" /><rect x="1224" y="652.9" width="3.5" height="1.2" fill="#d5363b" /><rect x="1270.5" y="652.9" width="3.5" height="1.2" fill="#d5363b" /><rect x="1264.9" y="612" width="1.2" height="3.5" fill="#d5363b" /><rect x="1264.9" y="658.5" width="1.2" height="3.5" fill="#d5363b" /><rect x="1224" y="655.9" width="3.5" height="1.2" fill="#d5363b" /><rect x="1270.5" y="655.9" width="3.5" height="1.2" fill="#d5363b" /><rect x="1267.9" y="612" width="1.2" height="3.5" fill="#d5363b" /><rect x="1267.9" y="658.5" width="1.2" height="3.5" fill="#d5363b" /><text x="1249" y="636" font-size="13" fill="#f4d0d0" font-weight="normal" font-family="Liberation Sans" text-anchor="middle" >45</text><text x="1249" y="649.35" font-size="10.4" fill="#f4d0d0" font-weight="normal" font-family="Liberation Sans" text-anchor="middle" >GND</text><circle cx="1236" cy="624" r="0.9" fill="#f0b040"/><circle cx="1236" cy="632.7" r="0.9" fill="#f0b040"/><circle cx="1236" cy="641.4" r="0.9" fill="#f0b040"/><circle cx="1236" cy="650.1" r="0.9" fill="#f0b040"/><circle cx="1244.7" cy="624" r="0.9" fill="#f0b040"/><circle cx="1244.7" cy="632.7" r="0.9" fill="#f0b040"/><circle cx="1244.7" cy="641.4" r="0.9" fill="#f0b040"/><circle cx="1244.7" cy="650.1" r="0.9" fill="#f0b040"/><circle cx="1253.4" cy="624" r="0.9" fill="#f0b040"/><circle cx="1253.4" cy="632.7" r="0.9" fill="#f0b040"/><circle cx="1253.4" cy="641.4" r="0.9" fill="#f0b040"/><circle cx="1253.4" cy="650.1" r="0.9" fill="#f0b040"/><circle cx="1262.1" cy="624" r="0.9" fill="#f0b040"/><circle cx="1262.1" cy="632.7" r="0.9" fill="#f0b040"/><circle cx="1262.1" cy="641.4" r="0.9" fill="#f0b040"/><circle cx="1262.1" cy="650.1" r="0.9" fill="#f0b040"/><path d="M1210 650 L1222 660 L1222 690" stroke="#c9383a" stroke-width="0.9" fill="none"/><path d="M1210 653 L1222 663 L1222 690" stroke="#c9383a" stroke-width="0.9" fill="none"/><path d="M1210 656 L1222 666 L1222 690" stroke="#c9383a" stroke-width="0.9" fill="none"/><path d="M1210 659 L1222 669 L1222 690" stroke="#c9383a" stroke-width="0.9" fill="none"/><path d="M1210 662 L1222 672 L1222 690" stroke="#c9383a" stroke-width="0.9" fill="none"/><path d="M1158 606 L1170 610 L1215 610 L1225 603" stroke="#c9383a" stroke-width="1" fill="none"/><circle cx="1158" cy="606" r="1.8" fill="#f2a22a"/><rect x="1277" y="625" width="14" height="12" fill="#d5363b" /><circle cx="1295" cy="628" r="1.8" fill="#f2a22a"/><circle cx="1295" cy="635" r="1.8" fill="#f2a22a"/><path d="M1274 645 L1292 655 L1292 700 L1270 713" stroke="#c9383a" stroke-width="1" fill="none"/><rect x="1078" y="622" width="8" height="8" fill="#d5363b" /><rect x="1088" y="622" width="8" height="8" fill="#d5363b" /><rect x="1098" y="622" width="8" height="8" fill="#d5363b" /><rect x="1108" y="622" width="8" height="8" fill="#d5363b" /><rect x="1116" y="610" width="13" height="12" fill="#8a2e38" /><rect x="1116" y="622" width="13" height="8" fill="#d5363b" /><rect x="1074" y="632" width="9" height="7" fill="#d5363b" /><rect x="1084" y="632" width="9" height="7" fill="#d5363b" /><rect x="1098" y="632" width="9" height="7" fill="#d5363b" /><rect x="1107" y="632" width="9" height="7" fill="#d5363b" /><rect x="1118" y="632" width="9" height="7" fill="#d5363b" /><rect x="1074" y="640" width="12" height="13" fill="#8a2e38" /><rect x="1088" y="643" width="8" height="10" fill="#d5363b" /><rect x="1099" y="643" width="8" height="10" fill="#d5363b" /><circle cx="1080" cy="613" r="1.3" fill="#f2a22a"/><circle cx="1090" cy="613" r="1.3" fill="#f2a22a"/><circle cx="1100" cy="613" r="1.3" fill="#f2a22a"/><circle cx="1110" cy="613" r="1.3" fill="#f2a22a"/><text x="1150" y="672" font-size="9" fill="#3b4542" font-weight="normal" font-family="Liberation Mono" text-anchor="start" >OSC3</text><rect x="1140" y="673" width="52" height="42" fill="none" stroke="#452a55" stroke-width="0.8"/><rect x="1145" y="677" width="12" height="12" fill="#d5363b" /><rect x="1161" y="677" width="12" height="12" fill="#d5363b" /><rect x="1176" y="677" width="12" height="12" fill="#d5363b" /><rect x="1145" y="697" width="12" height="12" fill="#d5363b" /><rect x="1161" y="697" width="12" height="12" fill="#d5363b" /><rect x="1176" y="697" width="12" height="12" fill="#d5363b" /><rect x="1192" y="680" width="8" height="8" fill="#d5363b" /><rect x="1202" y="680" width="8" height="8" fill="#d5363b" /><rect x="1192" y="690" width="8" height="8" fill="#d5363b" /><rect x="1202" y="690" width="8" height="8" fill="#d5363b" /><rect x="1195" y="700" width="8" height="8" fill="#d5363b" /><path d="M1180 672 L1188 668 L1198 675" stroke="#c9383a" stroke-width="1" fill="none"/><circle cx="1190" cy="712" r="1.8" fill="#f2a22a"/><circle cx="1150" cy="714" r="1.8" fill="#f2a22a"/><text x="1068" y="665" font-size="9" fill="#3b4542" font-weight="normal" font-family="Liberation Mono" text-anchor="start" >IC12</text><rect x="1077" y="670" width="32" height="45" fill="none" stroke="#452a55" stroke-width="0.8"/><rect x="1078" y="671" width="6" height="11" fill="#d5363b" /><rect x="1078" y="703" width="6" height="12" fill="#d5363b" /><rect x="1085.5" y="671" width="6" height="11" fill="#d5363b" /><rect x="1085.5" y="703" width="6" height="12" fill="#d5363b" /><rect x="1093" y="671" width="6" height="11" fill="#d5363b" /><rect x="1093" y="703" width="6" height="12" fill="#d5363b" /><rect x="1100.5" y="671" width="6" height="11" fill="#d5363b" /><rect x="1100.5" y="703" width="6" height="12" fill="#d5363b" /><rect x="1113" y="664" width="8" height="10" fill="#d5363b" /><rect x="1115" y="680" width="16" height="28" fill="#d5363b" /><rect x="1115" y="681" width="16" height="0.6" fill="#a02a30" /><rect x="1115" y="683.5" width="16" height="0.6" fill="#a02a30" /><rect x="1115" y="686" width="16" height="0.6" fill="#a02a30" /><rect x="1115" y="688.5" width="16" height="0.6" fill="#a02a30" /><rect x="1115" y="691" width="16" height="0.6" fill="#a02a30" /><rect x="1115" y="693.5" width="16" height="0.6" fill="#a02a30" /><rect x="1115" y="696" width="16" height="0.6" fill="#a02a30" /><rect x="1115" y="698.5" width="16" height="0.6" fill="#a02a30" /><rect x="1115" y="701" width="16" height="0.6" fill="#a02a30" /><rect x="1115" y="703.5" width="16" height="0.6" fill="#a02a30" /><rect x="1115" y="706" width="16" height="0.6" fill="#a02a30" /><rect x="1138" y="662" width="10" height="6" fill="#d5363b" /><path d="M1145 668 L1155 672" stroke="#c9383a" stroke-width="1" fill="none"/><path d="M1140 678 L1140 570" stroke="#c9383a" stroke-width="1.1" fill="none"/><text x="1060" y="680" font-size="10" fill="#3b4542" font-weight="normal" font-family="Liberation Mono" text-anchor="start" >LD4</text><text x="1060" y="694" font-size="10" fill="#3b4542" font-weight="normal" font-family="Liberation Mono" text-anchor="start" >LD2</text><text x="1060" y="708" font-size="10" fill="#3b4542" font-weight="normal" font-family="Liberation Mono" text-anchor="start" >LD1</text><rect x="1005" y="670" width="9" height="9" fill="#d5363b" /><rect x="1018" y="670" width="9" height="9" fill="#d5363b" /><rect x="1005" y="685" width="9" height="9" fill="#d5363b" /><rect x="1018" y="685" width="9" height="9" fill="#d5363b" /><rect x="1005" y="700" width="9" height="9" fill="#d5363b" /><rect x="1018" y="700" width="9" height="9" fill="#d5363b" /><rect x="1030" y="665" width="9" height="9" fill="#d5363b" /><rect x="1040" y="665" width="9" height="9" fill="#d5363b" /><rect x="1030" y="680" width="9" height="9" fill="#d5363b" /><rect x="1040" y="680" width="9" height="9" fill="#d5363b" /><rect x="1030" y="695" width="9" height="9" fill="#d5363b" /><rect x="1040" y="695" width="9" height="9" fill="#d5363b" /><rect x="1028" y="657" width="17" height="57" fill="none" stroke="#452a55" stroke-width="0.8"/><path d="M1007 718 L1015 729 L1250 729 L1260 722" stroke="#c9383a" stroke-width="1.1" fill="none"/><path d="M1012 720 L1020 733 L1255 733 L1268 722" stroke="#c9383a" stroke-width="1.1" fill="none"/><path d="M1000 729 L1010 737 L1258 737" stroke="#c9383a" stroke-width="1" fill="none"/><text x="1210" y="712" font-size="8" fill="#3b4542" font-weight="normal" font-family="Liberation Mono" text-anchor="start" transform="rotate(-90 1218 700)">IC107</text><rect x="1225" y="682" width="48" height="10" fill="#d5363b" /><rect x="1225" y="716" width="48" height="11" fill="#d5363b" /><circle cx="1227" cy="679" r="1.2" fill="#f2a22a"/><circle cx="1227" cy="730" r="1.2" fill="#f2a22a"/><circle cx="1233.5" cy="679" r="1.2" fill="#f2a22a"/><circle cx="1233.5" cy="730" r="1.2" fill="#f2a22a"/><circle cx="1240" cy="679" r="1.2" fill="#f2a22a"/><circle cx="1240" cy="730" r="1.2" fill="#f2a22a"/><circle cx="1246.5" cy="679" r="1.2" fill="#f2a22a"/><circle cx="1246.5" cy="730" r="1.2" fill="#f2a22a"/><circle cx="1253" cy="679" r="1.2" fill="#f2a22a"/><circle cx="1253" cy="730" r="1.2" fill="#f2a22a"/><circle cx="1259.5" cy="679" r="1.2" fill="#f2a22a"/><circle cx="1259.5" cy="730" r="1.2" fill="#f2a22a"/><circle cx="1266" cy="679" r="1.2" fill="#f2a22a"/><circle cx="1266" cy="730" r="1.2" fill="#f2a22a"/><circle cx="1272.5" cy="679" r="1.2" fill="#f2a22a"/><circle cx="1272.5" cy="730" r="1.2" fill="#f2a22a"/><rect x="1222" y="675" width="56" height="58" fill="none" stroke="#452a55" stroke-width="0.8"/><rect x="1210" y="715" width="10" height="5" fill="#d5363b" /><circle cx="1300" cy="680" r="1.3" fill="#f2a22a"/><circle cx="1300" cy="687" r="1.3" fill="#f2a22a"/><circle cx="1300" cy="694" r="1.3" fill="#f2a22a"/><circle cx="1300" cy="701" r="1.3" fill="#f2a22a"/><circle cx="1300" cy="708" r="1.3" fill="#f2a22a"/><circle cx="1300" cy="715" r="1.3" fill="#f2a22a"/><text x="1095" y="745" font-size="10" fill="#3b4542" font-weight="normal" font-family="Liberation Mono" text-anchor="start" >PB1</text><text x="1182" y="745" font-size="10" fill="#3b4542" font-weight="normal" font-family="Liberation Mono" text-anchor="start" >PB2</text><rect x="1089" y="756" width="30" height="22" fill="none" stroke="#452a55" stroke-width="0.8"/><rect x="1091" y="758" width="7" height="13" fill="#d5363b" /><rect x="1113" y="758" width="7" height="13" fill="#d5363b" /><rect x="1102" y="752" width="7" height="7" fill="#d5363b" /><circle cx="1105" cy="766" r="5" fill="none" stroke="#2e3c46" stroke-width="0.8"/><rect x="1176" y="756" width="30" height="22" fill="none" stroke="#452a55" stroke-width="0.8"/><rect x="1178" y="758" width="7" height="13" fill="#d5363b" /><rect x="1200" y="758" width="7" height="13" fill="#d5363b" /><rect x="1189" y="752" width="7" height="7" fill="#d5363b" /><circle cx="1192" cy="766" r="5" fill="none" stroke="#2e3c46" stroke-width="0.8"/><rect x="1065" y="760" width="14" height="14" fill="#d5363b" /><rect x="1080" y="763" width="10" height="6" fill="#d5363b" /><rect x="1160" y="760" width="6" height="14" fill="#d5363b" /><text x="1080" y="790" font-size="10" fill="#3b4542" font-weight="normal" font-family="Liberation Mono" text-anchor="start" >PS_PROG_B</text><text x="1165" y="790" font-size="10" fill="#3b4542" font-weight="normal" font-family="Liberation Mono" text-anchor="start" >PS_POR_B</text><path d="M1041 826 L1041 789 L1064 767" stroke="#c9383a" stroke-width="1" fill="none"/><circle cx="1041" cy="826" r="1.8" fill="#f2a22a"/><path d="M1148 840 L1148 776 L1157 766 L1170 766" stroke="#c9383a" stroke-width="1" fill="none"/><path d="M1233 790 L1260 768 L1325 768" stroke="#c9383a" stroke-width="1.1" fill="none"/><path d="M1233 800 L1265 778 L1330 778 L1360 748 L1400 748" stroke="#c9383a" stroke-width="1.1" fill="none"/><text x="1168" y="520" font-size="9" fill="#3b4542" font-weight="normal" font-family="Liberation Mono" text-anchor="start" >OSC4</text><text x="1220" y="513" font-size="6" fill="#3b4542" font-weight="normal" font-family="Liberation Mono" text-anchor="start" >MAN_STUNE</text><rect x="1221" y="540" width="90" height="51" fill="#172a30"/><rect x="1169" y="524" width="85" height="61" fill="none" stroke="#452a55" stroke-width="0.9"/><rect x="1174" y="529" width="75" height="51" fill="none" stroke="#2c3a38" stroke-width="0.8"/><rect x="1191" y="525" width="12" height="14" fill="#d5363b" /><rect x="1207" y="525" width="12" height="14" fill="#d5363b" /><rect x="1221" y="525" width="12" height="14" fill="#d5363b" /><rect x="1191" y="569" width="12" height="14" fill="#d5363b" /><rect x="1207" y="569" width="12" height="14" fill="#d5363b" /><rect x="1221" y="569" width="12" height="14" fill="#d5363b" /><circle cx="1187" cy="532" r="1.8" fill="#f2a22a"/><circle cx="1197" cy="541" r="1.8" fill="#f2a22a"/><circle cx="1227" cy="564" r="1.8" fill="#f2a22a"/><circle cx="1236" cy="576" r="1.8" fill="#f2a22a"/><rect x="1191" y="592" width="8" height="8" fill="#d5363b" /><rect x="1201" y="592" width="7" height="8" fill="#d5363b" /><rect x="1210" y="592" width="8" height="8" fill="#d5363b" /><rect x="1219" y="592" width="7" height="8" fill="#d5363b" /><rect x="1229" y="592" width="12" height="8" fill="#d5363b" /><circle cx="1243" cy="595" r="1.8" fill="#f2a22a"/><circle cx="1215" cy="603" r="1.8" fill="#f2a22a"/><rect x="1215" y="517" width="10" height="6" fill="#d5363b" /><rect x="1227" y="517" width="11" height="6" fill="#d5363b" /><circle cx="1240" cy="519" r="1.8" fill="#f2a22a"/><path d="M1139 608 L1139 572 L1164 549 L1164 528 L1171 519 L1215 519" stroke="#c9383a" stroke-width="1" fill="none"/><rect x="1255" y="553" width="13" height="10" fill="#d5363b" /><rect x="1271" y="553" width="13" height="10" fill="#d5363b" /><rect x="1255" y="573" width="13" height="10" fill="#d5363b" /><rect x="1271" y="573" width="13" height="10" fill="#d5363b" /><circle cx="1262" cy="549" r="1.4" fill="#f2a22a"/><circle cx="1278" cy="551" r="1.4" fill="#f2a22a"/><circle cx="1262" cy="585" r="1.4" fill="#f2a22a"/><circle cx="1278" cy="587" r="1.4" fill="#f2a22a"/><circle cx="1255" cy="557" r="1.4" fill="#f2a22a"/><circle cx="1287" cy="559" r="1.4" fill="#f2a22a"/><circle cx="1314" cy="566" r="26" fill="none" stroke="#2e3c3e" stroke-width="0.9"/><circle cx="1304" cy="566" r="6.3" fill="#7a2a88" opacity="0.85"/><rect x="1298" y="560" width="12" height="12" fill="#d5363b" /><circle cx="1304" cy="566" r="2.75" fill="#f0c040"/><circle cx="1304" cy="566" r="1.9" fill="#0a1018"/><circle cx="1325" cy="566" r="6.3" fill="#7a2a88" opacity="0.85"/><circle cx="1325" cy="566" r="5" fill="#d5363b"/><circle cx="1325" cy="566" r="2.75" fill="#f0c040"/><circle cx="1325" cy="566" r="1.9" fill="#0a1018"/><text x="1280" y="521" font-size="8" fill="#3b4542" font-weight="normal" font-family="Liberation Mono" text-anchor="start" >WR_CLK</text><rect x="1346" y="552" width="50" height="49" fill="none" stroke="#452a55" stroke-width="0.9"/><rect x="1352" y="553" width="8" height="8" fill="#d5363b" /><rect x="1352" y="592" width="8" height="9" fill="#d5363b" /><rect x="1368" y="553" width="8" height="8" fill="#d5363b" /><rect x="1368" y="592" width="8" height="9" fill="#d5363b" /><rect x="1383" y="553" width="8" height="8" fill="#d5363b" /><rect x="1383" y="592" width="8" height="9" fill="#d5363b" /><rect x="1354" y="539" width="6" height="12" fill="#d5363b" /><path d="M1342 516 L1352 516 L1357 522 L1357 539" stroke="#c9383a" stroke-width="1" fill="none"/><path d="M1262 590 L1272 590 L1295 611 L1370 611 L1376 602" stroke="#c9383a" stroke-width="1" fill="none"/><path d="M1262 593 L1270 593 L1293 614 L1373 614" stroke="#c9383a" stroke-width="1" fill="none"/><path d="M1258 607 L1225 607 L1220 603" stroke="#c9383a" stroke-width="1" fill="none"/><text x="1325" y="501" font-size="9" fill="#3b4542" font-weight="normal" font-family="Liberation Mono" text-anchor="start" >J9</text><rect x="1323" y="503" width="17" height="7" fill="#d5363b" /><rect x="1326" y="511" width="18" height="7" fill="none" stroke="#d5363b" stroke-width="1.6"/><rect x="1323" y="521" width="17" height="7" fill="#d5363b" /><circle cx="1318" cy="507" r="1.8" fill="#f2a22a"/><circle cx="1342" cy="507" r="1.8" fill="#f2a22a"/><circle cx="1318" cy="525" r="1.8" fill="#f2a22a"/><circle cx="1342" cy="527" r="1.8" fill="#f2a22a"/><text x="1000" y="580" font-size="11" fill="#3b4542" font-weight="normal" font-family="Liberation Mono" text-anchor="start" >SW1</text><rect x="1010" y="560" width="40" height="58" fill="none" stroke="#452a55" stroke-width="0.8"/><rect x="1015" y="561" width="6" height="12" fill="#d5363b" /><rect x="1015" y="606" width="6" height="12" fill="#d5363b" /><rect x="1015" y="624" width="6" height="10" fill="#d5363b" /><rect x="1023" y="561" width="6" height="12" fill="#d5363b" /><rect x="1023" y="606" width="6" height="12" fill="#d5363b" /><rect x="1023" y="624" width="6" height="10" fill="#d5363b" /><rect x="1031" y="561" width="6" height="12" fill="#d5363b" /><rect x="1031" y="606" width="6" height="12" fill="#d5363b" /><rect x="1031" y="624" width="6" height="10" fill="#d5363b" /><rect x="1039" y="561" width="6" height="12" fill="#d5363b" /><rect x="1039" y="606" width="6" height="12" fill="#d5363b" /><rect x="1039" y="624" width="6" height="10" fill="#d5363b" /><text x="1015" y="584" font-size="9" fill="#3b4542" font-weight="normal" font-family="Liberation Mono" text-anchor="start" >4 3 2 1</text><path d="M1010 561 L1005 566 L1005 655 L1000 660" stroke="#c9383a" stroke-width="1" fill="none"/><path d="M1036 520 L1035 548 L1010 560" stroke="#c9383a" stroke-width="1" fill="none"/><circle cx="989" cy="568" r="1.8" fill="#f2a22a"/><circle cx="989" cy="593" r="1.8" fill="#f2a22a"/><path d="M989 568 L989 593" stroke="#c9383a" stroke-width="1" fill="none"/><g stroke="#2e3a38" stroke-width="0.8" fill="none"><rect x="1060" y="576" width="82" height="19"/><path d="M1060 582 L1142 582 M1060 588 L1142 588 M1091 576 L1091 595 M1104 576 L1104 595 M1117 576 L1117 595 M1130 576 L1130 595 M1091 568 L1142 568 L1142 576 M1091 568 L1091 576"/></g><path d="M1127 612 L1127 600 L1140 590 L1150 590" stroke="#c9383a" stroke-width="1" fill="none"/><rect x="1068" y="868" width="49" height="48" fill="#d5363b" /><rect x="1075" y="873" width="36" height="38" fill="none" stroke="#f08080" stroke-width="0.8" opacity="0.6"/><text x="1092" y="895" font-size="15" fill="#f4d8d8" font-weight="normal" font-family="Liberation Sans" text-anchor="middle" >57</text><text x="1092" y="911" font-size="12" fill="#f4d8d8" font-weight="normal" font-family="Liberation Sans" text-anchor="middle" >GND</text><rect x="1062" y="870" width="5" height="1.3" fill="#d5363b" /><rect x="1118" y="870" width="5" height="1.3" fill="#d5363b" /><rect x="1070" y="862" width="1.3" height="5" fill="#d5363b" /><rect x="1070" y="917" width="1.3" height="5" fill="#d5363b" /><rect x="1062" y="873.8" width="5" height="1.3" fill="#d5363b" /><rect x="1118" y="873.8" width="5" height="1.3" fill="#d5363b" /><rect x="1073.8" y="862" width="1.3" height="5" fill="#d5363b" /><rect x="1073.8" y="917" width="1.3" height="5" fill="#d5363b" /><rect x="1062" y="877.6" width="5" height="1.3" fill="#d5363b" /><rect x="1118" y="877.6" width="5" height="1.3" fill="#d5363b" /><rect x="1077.6" y="862" width="1.3" height="5" fill="#d5363b" /><rect x="1077.6" y="917" width="1.3" height="5" fill="#d5363b" /><rect x="1062" y="881.4" width="5" height="1.3" fill="#d5363b" /><rect x="1118" y="881.4" width="5" height="1.3" fill="#d5363b" /><rect x="1081.4" y="862" width="1.3" height="5" fill="#d5363b" /><rect x="1081.4" y="917" width="1.3" height="5" fill="#d5363b" /><rect x="1062" y="885.2" width="5" height="1.3" fill="#d5363b" /><rect x="1118" y="885.2" width="5" height="1.3" fill="#d5363b" /><rect x="1085.2" y="862" width="1.3" height="5" fill="#d5363b" /><rect x="1085.2" y="917" width="1.3" height="5" fill="#d5363b" /><rect x="1062" y="889" width="5" height="1.3" fill="#d5363b" /><rect x="1118" y="889" width="5" height="1.3" fill="#d5363b" /><rect x="1089" y="862" width="1.3" height="5" fill="#d5363b" /><rect x="1089" y="917" width="1.3" height="5" fill="#d5363b" /><rect x="1062" y="892.8" width="5" height="1.3" fill="#d5363b" /><rect x="1118" y="892.8" width="5" height="1.3" fill="#d5363b" /><rect x="1092.8" y="862" width="1.3" height="5" fill="#d5363b" /><rect x="1092.8" y="917" width="1.3" height="5" fill="#d5363b" /><rect x="1062" y="896.6" width="5" height="1.3" fill="#d5363b" /><rect x="1118" y="896.6" width="5" height="1.3" fill="#d5363b" /><rect x="1096.6" y="862" width="1.3" height="5" fill="#d5363b" /><rect x="1096.6" y="917" width="1.3" height="5" fill="#d5363b" /><rect x="1062" y="900.4" width="5" height="1.3" fill="#d5363b" /><rect x="1118" y="900.4" width="5" height="1.3" fill="#d5363b" /><rect x="1100.4" y="862" width="1.3" height="5" fill="#d5363b" /><rect x="1100.4" y="917" width="1.3" height="5" fill="#d5363b" /><rect x="1062" y="904.2" width="5" height="1.3" fill="#d5363b" /><rect x="1118" y="904.2" width="5" height="1.3" fill="#d5363b" /><rect x="1104.2" y="862" width="1.3" height="5" fill="#d5363b" /><rect x="1104.2" y="917" width="1.3" height="5" fill="#d5363b" /><rect x="1062" y="908" width="5" height="1.3" fill="#d5363b" /><rect x="1118" y="908" width="5" height="1.3" fill="#d5363b" /><rect x="1108" y="862" width="1.3" height="5" fill="#d5363b" /><rect x="1108" y="917" width="1.3" height="5" fill="#d5363b" /><rect x="1062" y="911.8" width="5" height="1.3" fill="#d5363b" /><rect x="1118" y="911.8" width="5" height="1.3" fill="#d5363b" /><rect x="1111.8" y="862" width="1.3" height="5" fill="#d5363b" /><rect x="1111.8" y="917" width="1.3" height="5" fill="#d5363b" /><rect x="1054" y="834" width="22" height="24" fill="#d5363b" /><rect x="1080" y="834" width="12" height="25" fill="#d5363b" /><rect x="1095" y="834" width="12" height="25" fill="#d5363b" /><rect x="1112" y="834" width="26" height="24" fill="#d5363b" /><rect x="1054" y="930" width="22" height="22" fill="#d5363b" /><rect x="1080" y="930" width="12" height="30" fill="#d5363b" /><rect x="1095" y="930" width="12" height="30" fill="#d5363b" /><rect x="1112" y="930" width="22" height="25" fill="#d5363b" /><rect x="1058" y="955" width="18" height="25" fill="#d5363b" /><rect x="1080" y="958" width="12" height="18" fill="#d5363b" /><rect x="1095" y="958" width="12" height="18" fill="#d5363b" /><rect x="1112" y="955" width="18" height="22" fill="#d5363b" /><circle cx="1059" cy="841" r="2" fill="#f0c030"/><circle cx="1065" cy="841" r="2" fill="#f0c030"/><circle cx="1059" cy="848" r="2" fill="#f0c030"/><circle cx="1065" cy="848" r="2" fill="#f0c030"/><circle cx="1059" cy="854" r="2" fill="#f0c030"/><circle cx="1065" cy="854" r="2" fill="#f0c030"/><circle cx="1127" cy="841" r="2" fill="#f0c030"/><circle cx="1133" cy="841" r="2" fill="#f0c030"/><circle cx="1127" cy="848" r="2" fill="#f0c030"/><circle cx="1133" cy="848" r="2" fill="#f0c030"/><circle cx="1127" cy="854" r="2" fill="#f0c030"/><circle cx="1133" cy="854" r="2" fill="#f0c030"/><circle cx="1059" cy="938" r="2" fill="#f0c030"/><circle cx="1066" cy="938" r="2" fill="#f0c030"/><circle cx="1059" cy="945" r="2" fill="#f0c030"/><circle cx="1066" cy="945" r="2" fill="#f0c030"/><circle cx="1059" cy="952" r="2" fill="#f0c030"/><circle cx="1066" cy="952" r="2" fill="#f0c030"/><circle cx="1115" cy="955" r="2" fill="#f0c030"/><circle cx="1122" cy="955" r="2" fill="#f0c030"/><circle cx="1115" cy="962" r="2" fill="#f0c030"/><circle cx="1115" cy="969" r="2" fill="#f0c030"/><circle cx="1053" cy="862" r="2.2" fill="#f0c030"/><circle cx="1053" cy="868" r="2.2" fill="#f0c030"/><circle cx="1053" cy="876" r="2.2" fill="#f0c030"/><text x="1066" y="830" font-size="10" fill="#3b4542" font-weight="normal" font-family="Liberation Mono" text-anchor="start" >L15</text><text x="1101" y="830" font-size="10" fill="#3b4542" font-weight="normal" font-family="Liberation Mono" text-anchor="start" >L16</text><text x="1123" y="943" font-size="10" fill="#3b4542" font-weight="normal" font-family="Liberation Mono" text-anchor="start" >L17</text><text x="1040" y="952" font-size="10" fill="#3b4542" font-weight="normal" font-family="Liberation Mono" text-anchor="start" >L18</text><rect x="1124" y="875" width="9" height="8" fill="#d5363b" /><rect x="1134" y="880" width="9" height="8" fill="#d5363b" /><rect x="1124" y="890" width="9" height="8" fill="#d5363b" /><rect x="1133" y="895" width="9" height="8" fill="#d5363b" /><rect x="1128" y="905" width="9" height="8" fill="#d5363b" /><rect x="1048" y="892" width="12" height="40" fill="#d5363b" /><circle cx="1046" cy="895" r="1.3" fill="#f2a22a"/><circle cx="1046" cy="902" r="1.3" fill="#f2a22a"/><circle cx="1046" cy="909" r="1.3" fill="#f2a22a"/><circle cx="1046" cy="916" r="1.3" fill="#f2a22a"/><circle cx="1046" cy="923" r="1.3" fill="#f2a22a"/><rect x="1046" y="955" width="8" height="12" fill="#d5363b" /><rect x="1127" y="962" width="14" height="8" fill="#d5363b" /><rect x="1127" y="975" width="6" height="12" fill="#d5363b" /><rect x="1137" y="980" width="10" height="14" fill="#d5363b" /><path d="M1140 910 L1150 930 L1150 946" stroke="#c9383a" stroke-width="1" fill="none"/><text x="1015" y="826" font-size="10" fill="#3b4542" font-weight="normal" font-family="Liberation Mono" text-anchor="start" >IC22</text><rect x="1019" y="836" width="10" height="8" fill="#d5363b" /><rect x="1030" y="836" width="10" height="8" fill="#d5363b" /><rect x="1015" y="845" width="10" height="8" fill="#d5363b" /><rect x="1027" y="845" width="10" height="8" fill="#d5363b" /><rect x="1038" y="845" width="10" height="8" fill="#d5363b" /><rect x="1019" y="856" width="10" height="8" fill="#d5363b" /><rect x="1030" y="856" width="10" height="8" fill="#d5363b" /><rect x="1019" y="866" width="10" height="8" fill="#d5363b" /><rect x="1030" y="866" width="10" height="8" fill="#d5363b" /><rect x="1035" y="828" width="10" height="8" fill="#d5363b" /><text x="1160" y="832" font-size="10" fill="#3b4542" font-weight="normal" font-family="Liberation Mono" text-anchor="start" >IC24</text><rect x="1157" y="836" width="10" height="9" fill="#d5363b" /><rect x="1167" y="836" width="10" height="9" fill="#d5363b" /><rect x="1177" y="836" width="10" height="9" fill="#d5363b" /><rect x="1155" y="846" width="10" height="9" fill="#d5363b" /><rect x="1165" y="846" width="10" height="9" fill="#d5363b" /><rect x="1175" y="850" width="10" height="9" fill="#d5363b" /><rect x="1190" y="840" width="10" height="9" fill="#d5363b" /><rect x="1200" y="840" width="10" height="9" fill="#d5363b" /><rect x="1157" y="860" width="10" height="9" fill="#d5363b" /><rect x="1170" y="862" width="10" height="9" fill="#d5363b" /><rect x="1185" y="860" width="10" height="9" fill="#d5363b" /><rect x="1197" y="855" width="10" height="9" fill="#d5363b" /><circle cx="1160" cy="849" r="1.4" fill="#f2a22a"/><circle cx="1163" cy="849" r="1.4" fill="#f2a22a"/><circle cx="1166" cy="849" r="1.4" fill="#f2a22a"/><circle cx="1169" cy="849" r="1.4" fill="#f2a22a"/><circle cx="1172" cy="849" r="1.4" fill="#f2a22a"/><circle cx="1175" cy="849" r="1.4" fill="#f2a22a"/><circle cx="1178" cy="849" r="1.4" fill="#f2a22a"/><circle cx="1181" cy="849" r="1.4" fill="#f2a22a"/><text x="1068" y="990" font-size="10" fill="#3b4542" font-weight="normal" font-family="Liberation Mono" text-anchor="start" >IC14</text><rect x="1062" y="994" width="150" height="70" fill="#2a2a32" /><rect x="1062" y="994" width="150" height="70" fill="url(#pbga)"/><rect x="1062" y="994" width="150" height="70" fill="none" stroke="#d5363b" stroke-width="2.2"/><rect x="1063.5" y="995.5" width="147" height="67" fill="none" stroke="#9a3038" stroke-width="2"/><path d="M1145 990 L1152 985 L1165 985" stroke="#c9383a" stroke-width="2" fill="none"/><rect x="1158" y="982" width="10" height="8" fill="#d5363b" /><path d="M1206 840 L1315 840 L1315 988 L1206 988 Z" fill="none" stroke="#3a2048" stroke-width="1"/><rect x="1206" y="840" width="109" height="14" fill="#d5363b" /><rect x="1298" y="840" width="17" height="90" fill="#d5363b" /><circle cx="1212" cy="850" r="1.4" fill="#f0c030"/><circle cx="1218.5" cy="850" r="1.4" fill="#f0c030"/><circle cx="1225" cy="850" r="1.4" fill="#f0c030"/><circle cx="1231.5" cy="850" r="1.4" fill="#f0c030"/><circle cx="1238" cy="850" r="1.4" fill="#f0c030"/><circle cx="1244.5" cy="850" r="1.4" fill="#f0c030"/><circle cx="1251" cy="850" r="1.4" fill="#f0c030"/><circle cx="1257.5" cy="850" r="1.4" fill="#f0c030"/><circle cx="1264" cy="850" r="1.4" fill="#f0c030"/><circle cx="1270.5" cy="850" r="1.4" fill="#f0c030"/><circle cx="1277" cy="850" r="1.4" fill="#f0c030"/><circle cx="1283.5" cy="850" r="1.4" fill="#f0c030"/><circle cx="1290" cy="850" r="1.4" fill="#f0c030"/><circle cx="1296.5" cy="850" r="1.4" fill="#f0c030"/><circle cx="1306" cy="858" r="1.3" fill="#f0c030"/><circle cx="1306" cy="864" r="1.3" fill="#f0c030"/><circle cx="1306" cy="870" r="1.3" fill="#f0c030"/><circle cx="1306" cy="876" r="1.3" fill="#f0c030"/><circle cx="1306" cy="882" r="1.3" fill="#f0c030"/><circle cx="1306" cy="888" r="1.3" fill="#f0c030"/><circle cx="1306" cy="894" r="1.3" fill="#f0c030"/><circle cx="1306" cy="900" r="1.3" fill="#f0c030"/><circle cx="1306" cy="906" r="1.3" fill="#f0c030"/><circle cx="1306" cy="912" r="1.3" fill="#f0c030"/><circle cx="1306" cy="918" r="1.3" fill="#f0c030"/><circle cx="1306" cy="924" r="1.3" fill="#f0c030"/><rect x="1213" y="860" width="84" height="17" fill="url(#pddr)"/><rect x="1212" y="859" width="86" height="18" fill="none" stroke="#452a55" stroke-width="0.6"/><rect x="1213" y="888" width="84" height="17" fill="url(#pddr)"/><rect x="1212" y="887" width="86" height="18" fill="none" stroke="#452a55" stroke-width="0.6"/><rect x="1213" y="922" width="84" height="17" fill="url(#pddr)"/><rect x="1212" y="921" width="86" height="18" fill="none" stroke="#452a55" stroke-width="0.6"/><rect x="1213" y="951" width="84" height="17" fill="url(#pddr)"/><rect x="1212" y="950" width="86" height="18" fill="none" stroke="#452a55" stroke-width="0.6"/><path d="M1206 853 L1206 988 L1300 988" stroke="#8a2e38" stroke-width="3" fill="none"/><text x="1200" y="880" font-size="9" fill="#3b4542" font-weight="normal" font-family="Liberation Mono" text-anchor="start" transform="rotate(-90 1200 880)">IC5</text><text x="1200" y="950" font-size="9" fill="#3b4542" font-weight="normal" font-family="Liberation Mono" text-anchor="start" transform="rotate(-90 1200 950)">IC13</text><rect x="1240" y="832" width="9" height="6" fill="#d5363b" /><rect x="1250" y="832" width="9" height="6" fill="#d5363b" /><rect x="1283" y="832" width="9" height="6" fill="#d5363b" /><rect x="1293" y="832" width="9" height="6" fill="#d5363b" /><text x="1237" y="827" font-size="7" fill="#3b4542" font-weight="normal" font-family="Liberation Mono" text-anchor="start" >VTT_DDR4</text><text x="1220" y="826" font-size="10" fill="#3b4542" font-weight="normal" font-family="Liberation Mono" text-anchor="start" transform="translate(0 -10)">R417</text><circle cx="1180" cy="806" r="1.6" fill="#f2a22a"/><circle cx="1186.5" cy="809" r="1.6" fill="#f2a22a"/><circle cx="1193" cy="806" r="1.6" fill="#f2a22a"/><circle cx="1199.5" cy="809" r="1.6" fill="#f2a22a"/><circle cx="1206" cy="806" r="1.6" fill="#f2a22a"/><circle cx="1212.5" cy="809" r="1.6" fill="#f2a22a"/><circle cx="1219" cy="806" r="1.6" fill="#f2a22a"/><circle cx="1225.5" cy="809" r="1.6" fill="#f2a22a"/><circle cx="1232" cy="806" r="1.6" fill="#f2a22a"/><circle cx="1238.5" cy="809" r="1.6" fill="#f2a22a"/><rect x="1233" y="808" width="10" height="7" fill="#d5363b" /><rect x="1277" y="974" width="9" height="7" fill="#d5363b" /><rect x="1288" y="974" width="9" height="7" fill="#d5363b" /><rect x="1298" y="974" width="9" height="7" fill="#d5363b" /><rect x="1285" y="984" width="9" height="7" fill="#d5363b" /><rect x="1195" y="982" width="10" height="8" fill="#d5363b" /><circle cx="1278" cy="1005" r="1.6" fill="#f2a22a"/><circle cx="1284" cy="1000" r="1.6" fill="#f2a22a"/><circle cx="1290" cy="995" r="1.6" fill="#f2a22a"/><circle cx="1296" cy="990" r="1.6" fill="#f2a22a"/><circle cx="1302" cy="985" r="1.6" fill="#f2a22a"/><circle cx="1308" cy="980" r="1.6" fill="#f2a22a"/><circle cx="1314" cy="975" r="1.6" fill="#f2a22a"/><circle cx="1320" cy="970" r="1.6" fill="#f2a22a"/><path d="M1000 800 L1000 955 L1050 1005 L1058 1059" stroke="#c9383a" stroke-width="1" fill="none"/><path d="M1002.5 800 L1002.5 956.5 L1051.2 1006.5 L1059.2 1059" stroke="#c9383a" stroke-width="1" fill="none"/><path d="M1005 800 L1005 958 L1052.4 1008 L1060.4 1059" stroke="#c9383a" stroke-width="1" fill="none"/><path d="M1007.5 800 L1007.5 959.5 L1053.6 1009.5 L1061.6 1059" stroke="#c9383a" stroke-width="1" fill="none"/><path d="M1200 1043 L1238 1043 L1252 1059" stroke="#c9383a" stroke-width="0.9" fill="none"/><path d="M1200 1045.5 L1237 1045.5 L1251 1059" stroke="#c9383a" stroke-width="0.9" fill="none"/><path d="M1200 1048 L1236 1048 L1250 1059" stroke="#c9383a" stroke-width="0.9" fill="none"/><path d="M1200 1050.5 L1235 1050.5 L1249 1059" stroke="#c9383a" stroke-width="0.9" fill="none"/><path d="M1200 1053 L1234 1053 L1248 1059" stroke="#c9383a" stroke-width="0.9" fill="none"/><path d="M1290 1059 L1298 1042 L1340 1042 L1345 1049 L1345 1059" stroke="#c9383a" stroke-width="0.9" fill="none"/><path d="M1293 1059 L1301 1044 L1337 1044 L1342 1049 L1342 1059" stroke="#c9383a" stroke-width="0.9" fill="none"/><path d="M1296 1059 L1304 1046 L1334 1046 L1339 1049 L1339 1059" stroke="#c9383a" stroke-width="0.9" fill="none"/><rect x="1290" y="1048" width="12" height="11" fill="#d5363b" /><rect x="1313" y="1048" width="12" height="11" fill="#d5363b" /><rect x="1375" y="462" width="30" height="34" fill="none" stroke="#452a55" stroke-width="0.8"/><rect x="1381.5" y="470.5" width="17" height="17" fill="#d5363b" /><rect x="1377.5" y="471.4" width="3.5" height="1.2" fill="#d5363b" /><rect x="1399" y="471.4" width="3.5" height="1.2" fill="#d5363b" /><rect x="1382.4" y="466.5" width="1.2" height="3.5" fill="#d5363b" /><rect x="1382.4" y="488" width="1.2" height="3.5" fill="#d5363b" /><rect x="1377.5" y="474.9" width="3.5" height="1.2" fill="#d5363b" /><rect x="1399" y="474.9" width="3.5" height="1.2" fill="#d5363b" /><rect x="1385.9" y="466.5" width="1.2" height="3.5" fill="#d5363b" /><rect x="1385.9" y="488" width="1.2" height="3.5" fill="#d5363b" /><rect x="1377.5" y="478.4" width="3.5" height="1.2" fill="#d5363b" /><rect x="1399" y="478.4" width="3.5" height="1.2" fill="#d5363b" /><rect x="1389.4" y="466.5" width="1.2" height="3.5" fill="#d5363b" /><rect x="1389.4" y="488" width="1.2" height="3.5" fill="#d5363b" /><rect x="1377.5" y="481.9" width="3.5" height="1.2" fill="#d5363b" /><rect x="1399" y="481.9" width="3.5" height="1.2" fill="#d5363b" /><rect x="1392.9" y="466.5" width="1.2" height="3.5" fill="#d5363b" /><rect x="1392.9" y="488" width="1.2" height="3.5" fill="#d5363b" /><rect x="1377.5" y="485.4" width="3.5" height="1.2" fill="#d5363b" /><rect x="1399" y="485.4" width="3.5" height="1.2" fill="#d5363b" /><rect x="1396.4" y="466.5" width="1.2" height="3.5" fill="#d5363b" /><rect x="1396.4" y="488" width="1.2" height="3.5" fill="#d5363b" /><text x="1390" y="481.8" font-size="8" fill="#f4d0d0" font-weight="normal" font-family="Liberation Sans" text-anchor="middle" >15</text><rect x="1388.5" y="455" width="3" height="6" fill="#d5363b" /><rect x="1388.5" y="497" width="3" height="6" fill="#d5363b" /><rect x="1410" y="473" width="12" height="6" fill="#d5363b" /><rect x="1410" y="485" width="12" height="6" fill="#d5363b" /><circle cx="1372" cy="469" r="1.4" fill="#f2a22a"/><circle cx="1372" cy="479" r="1.4" fill="#f2a22a"/><circle cx="1372" cy="489" r="1.4" fill="#f2a22a"/><circle cx="1408" cy="467" r="1.4" fill="#f2a22a"/><circle cx="1412" cy="463" r="1.4" fill="#f2a22a"/><circle cx="1408" cy="491" r="1.4" fill="#f2a22a"/><circle cx="1380" cy="499" r="1.4" fill="#f2a22a"/><circle cx="1400" cy="499" r="1.4" fill="#f2a22a"/><circle cx="1390" cy="457" r="1.4" fill="#f2a22a"/><text x="1370" y="462" font-size="9" fill="#3b4542" font-weight="normal" font-family="Liberation Mono" text-anchor="start" >IC142</text><rect x="1377" y="653.6" width="30" height="34" fill="none" stroke="#452a55" stroke-width="0.8"/><rect x="1383.5" y="662.1" width="17" height="17" fill="#d5363b" /><rect x="1379.5" y="663" width="3.5" height="1.2" fill="#d5363b" /><rect x="1401" y="663" width="3.5" height="1.2" fill="#d5363b" /><rect x="1384.4" y="658.1" width="1.2" height="3.5" fill="#d5363b" /><rect x="1384.4" y="679.6" width="1.2" height="3.5" fill="#d5363b" /><rect x="1379.5" y="666.5" width="3.5" height="1.2" fill="#d5363b" /><rect x="1401" y="666.5" width="3.5" height="1.2" fill="#d5363b" /><rect x="1387.9" y="658.1" width="1.2" height="3.5" fill="#d5363b" /><rect x="1387.9" y="679.6" width="1.2" height="3.5" fill="#d5363b" /><rect x="1379.5" y="670" width="3.5" height="1.2" fill="#d5363b" /><rect x="1401" y="670" width="3.5" height="1.2" fill="#d5363b" /><rect x="1391.4" y="658.1" width="1.2" height="3.5" fill="#d5363b" /><rect x="1391.4" y="679.6" width="1.2" height="3.5" fill="#d5363b" /><rect x="1379.5" y="673.5" width="3.5" height="1.2" fill="#d5363b" /><rect x="1401" y="673.5" width="3.5" height="1.2" fill="#d5363b" /><rect x="1394.9" y="658.1" width="1.2" height="3.5" fill="#d5363b" /><rect x="1394.9" y="679.6" width="1.2" height="3.5" fill="#d5363b" /><rect x="1379.5" y="677" width="3.5" height="1.2" fill="#d5363b" /><rect x="1401" y="677" width="3.5" height="1.2" fill="#d5363b" /><rect x="1398.4" y="658.1" width="1.2" height="3.5" fill="#d5363b" /><rect x="1398.4" y="679.6" width="1.2" height="3.5" fill="#d5363b" /><text x="1392" y="673.4" font-size="8" fill="#f4d0d0" font-weight="normal" font-family="Liberation Sans" text-anchor="middle" >15</text><rect x="1390.5" y="646.6" width="3" height="6" fill="#d5363b" /><rect x="1390.5" y="688.6" width="3" height="6" fill="#d5363b" /><rect x="1412" y="664.6" width="12" height="6" fill="#d5363b" /><rect x="1412" y="676.6" width="12" height="6" fill="#d5363b" /><circle cx="1374" cy="660.6" r="1.4" fill="#f2a22a"/><circle cx="1374" cy="670.6" r="1.4" fill="#f2a22a"/><circle cx="1374" cy="680.6" r="1.4" fill="#f2a22a"/><circle cx="1410" cy="658.6" r="1.4" fill="#f2a22a"/><circle cx="1414" cy="654.6" r="1.4" fill="#f2a22a"/><circle cx="1410" cy="682.6" r="1.4" fill="#f2a22a"/><circle cx="1382" cy="690.6" r="1.4" fill="#f2a22a"/><circle cx="1402" cy="690.6" r="1.4" fill="#f2a22a"/><circle cx="1392" cy="648.6" r="1.4" fill="#f2a22a"/><rect x="1377" y="699.5" width="30" height="34" fill="none" stroke="#452a55" stroke-width="0.8"/><rect x="1383.5" y="708" width="17" height="17" fill="#d5363b" /><rect x="1379.5" y="708.9" width="3.5" height="1.2" fill="#d5363b" /><rect x="1401" y="708.9" width="3.5" height="1.2" fill="#d5363b" /><rect x="1384.4" y="704" width="1.2" height="3.5" fill="#d5363b" /><rect x="1384.4" y="725.5" width="1.2" height="3.5" fill="#d5363b" /><rect x="1379.5" y="712.4" width="3.5" height="1.2" fill="#d5363b" /><rect x="1401" y="712.4" width="3.5" height="1.2" fill="#d5363b" /><rect x="1387.9" y="704" width="1.2" height="3.5" fill="#d5363b" /><rect x="1387.9" y="725.5" width="1.2" height="3.5" fill="#d5363b" /><rect x="1379.5" y="715.9" width="3.5" height="1.2" fill="#d5363b" /><rect x="1401" y="715.9" width="3.5" height="1.2" fill="#d5363b" /><rect x="1391.4" y="704" width="1.2" height="3.5" fill="#d5363b" /><rect x="1391.4" y="725.5" width="1.2" height="3.5" fill="#d5363b" /><rect x="1379.5" y="719.4" width="3.5" height="1.2" fill="#d5363b" /><rect x="1401" y="719.4" width="3.5" height="1.2" fill="#d5363b" /><rect x="1394.9" y="704" width="1.2" height="3.5" fill="#d5363b" /><rect x="1394.9" y="725.5" width="1.2" height="3.5" fill="#d5363b" /><rect x="1379.5" y="722.9" width="3.5" height="1.2" fill="#d5363b" /><rect x="1401" y="722.9" width="3.5" height="1.2" fill="#d5363b" /><rect x="1398.4" y="704" width="1.2" height="3.5" fill="#d5363b" /><rect x="1398.4" y="725.5" width="1.2" height="3.5" fill="#d5363b" /><text x="1392" y="719.3" font-size="8" fill="#f4d0d0" font-weight="normal" font-family="Liberation Sans" text-anchor="middle" >15</text><rect x="1390.5" y="692.5" width="3" height="6" fill="#d5363b" /><rect x="1390.5" y="734.5" width="3" height="6" fill="#d5363b" /><rect x="1412" y="710.5" width="12" height="6" fill="#d5363b" /><rect x="1412" y="722.5" width="12" height="6" fill="#d5363b" /><circle cx="1374" cy="706.5" r="1.4" fill="#f2a22a"/><circle cx="1374" cy="716.5" r="1.4" fill="#f2a22a"/><circle cx="1374" cy="726.5" r="1.4" fill="#f2a22a"/><circle cx="1410" cy="704.5" r="1.4" fill="#f2a22a"/><circle cx="1414" cy="700.5" r="1.4" fill="#f2a22a"/><circle cx="1410" cy="728.5" r="1.4" fill="#f2a22a"/><circle cx="1382" cy="736.5" r="1.4" fill="#f2a22a"/><circle cx="1402" cy="736.5" r="1.4" fill="#f2a22a"/><circle cx="1392" cy="694.5" r="1.4" fill="#f2a22a"/><rect x="1377" y="745.6" width="30" height="34" fill="none" stroke="#452a55" stroke-width="0.8"/><rect x="1383.5" y="754.1" width="17" height="17" fill="#d5363b" /><rect x="1379.5" y="755" width="3.5" height="1.2" fill="#d5363b" /><rect x="1401" y="755" width="3.5" height="1.2" fill="#d5363b" /><rect x="1384.4" y="750.1" width="1.2" height="3.5" fill="#d5363b" /><rect x="1384.4" y="771.6" width="1.2" height="3.5" fill="#d5363b" /><rect x="1379.5" y="758.5" width="3.5" height="1.2" fill="#d5363b" /><rect x="1401" y="758.5" width="3.5" height="1.2" fill="#d5363b" /><rect x="1387.9" y="750.1" width="1.2" height="3.5" fill="#d5363b" /><rect x="1387.9" y="771.6" width="1.2" height="3.5" fill="#d5363b" /><rect x="1379.5" y="762" width="3.5" height="1.2" fill="#d5363b" /><rect x="1401" y="762" width="3.5" height="1.2" fill="#d5363b" /><rect x="1391.4" y="750.1" width="1.2" height="3.5" fill="#d5363b" /><rect x="1391.4" y="771.6" width="1.2" height="3.5" fill="#d5363b" /><rect x="1379.5" y="765.5" width="3.5" height="1.2" fill="#d5363b" /><rect x="1401" y="765.5" width="3.5" height="1.2" fill="#d5363b" /><rect x="1394.9" y="750.1" width="1.2" height="3.5" fill="#d5363b" /><rect x="1394.9" y="771.6" width="1.2" height="3.5" fill="#d5363b" /><rect x="1379.5" y="769" width="3.5" height="1.2" fill="#d5363b" /><rect x="1401" y="769" width="3.5" height="1.2" fill="#d5363b" /><rect x="1398.4" y="750.1" width="1.2" height="3.5" fill="#d5363b" /><rect x="1398.4" y="771.6" width="1.2" height="3.5" fill="#d5363b" /><text x="1392" y="765.4" font-size="8" fill="#f4d0d0" font-weight="normal" font-family="Liberation Sans" text-anchor="middle" >15</text><rect x="1390.5" y="738.6" width="3" height="6" fill="#d5363b" /><rect x="1390.5" y="780.6" width="3" height="6" fill="#d5363b" /><rect x="1412" y="756.6" width="12" height="6" fill="#d5363b" /><rect x="1412" y="768.6" width="12" height="6" fill="#d5363b" /><circle cx="1374" cy="752.6" r="1.4" fill="#f2a22a"/><circle cx="1374" cy="762.6" r="1.4" fill="#f2a22a"/><circle cx="1374" cy="772.6" r="1.4" fill="#f2a22a"/><circle cx="1410" cy="750.6" r="1.4" fill="#f2a22a"/><circle cx="1414" cy="746.6" r="1.4" fill="#f2a22a"/><circle cx="1410" cy="774.6" r="1.4" fill="#f2a22a"/><circle cx="1382" cy="782.6" r="1.4" fill="#f2a22a"/><circle cx="1402" cy="782.6" r="1.4" fill="#f2a22a"/><circle cx="1392" cy="740.6" r="1.4" fill="#f2a22a"/><rect x="1377" y="792.2" width="30" height="34" fill="none" stroke="#452a55" stroke-width="0.8"/><rect x="1383.5" y="800.7" width="17" height="17" fill="#d5363b" /><rect x="1379.5" y="801.6" width="3.5" height="1.2" fill="#d5363b" /><rect x="1401" y="801.6" width="3.5" height="1.2" fill="#d5363b" /><rect x="1384.4" y="796.7" width="1.2" height="3.5" fill="#d5363b" /><rect x="1384.4" y="818.2" width="1.2" height="3.5" fill="#d5363b" /><rect x="1379.5" y="805.1" width="3.5" height="1.2" fill="#d5363b" /><rect x="1401" y="805.1" width="3.5" height="1.2" fill="#d5363b" /><rect x="1387.9" y="796.7" width="1.2" height="3.5" fill="#d5363b" /><rect x="1387.9" y="818.2" width="1.2" height="3.5" fill="#d5363b" /><rect x="1379.5" y="808.6" width="3.5" height="1.2" fill="#d5363b" /><rect x="1401" y="808.6" width="3.5" height="1.2" fill="#d5363b" /><rect x="1391.4" y="796.7" width="1.2" height="3.5" fill="#d5363b" /><rect x="1391.4" y="818.2" width="1.2" height="3.5" fill="#d5363b" /><rect x="1379.5" y="812.1" width="3.5" height="1.2" fill="#d5363b" /><rect x="1401" y="812.1" width="3.5" height="1.2" fill="#d5363b" /><rect x="1394.9" y="796.7" width="1.2" height="3.5" fill="#d5363b" /><rect x="1394.9" y="818.2" width="1.2" height="3.5" fill="#d5363b" /><rect x="1379.5" y="815.6" width="3.5" height="1.2" fill="#d5363b" /><rect x="1401" y="815.6" width="3.5" height="1.2" fill="#d5363b" /><rect x="1398.4" y="796.7" width="1.2" height="3.5" fill="#d5363b" /><rect x="1398.4" y="818.2" width="1.2" height="3.5" fill="#d5363b" /><text x="1392" y="812.0" font-size="8" fill="#f4d0d0" font-weight="normal" font-family="Liberation Sans" text-anchor="middle" >15</text><rect x="1390.5" y="785.2" width="3" height="6" fill="#d5363b" /><rect x="1390.5" y="827.2" width="3" height="6" fill="#d5363b" /><rect x="1412" y="803.2" width="12" height="6" fill="#d5363b" /><rect x="1412" y="815.2" width="12" height="6" fill="#d5363b" /><circle cx="1374" cy="799.2" r="1.4" fill="#f2a22a"/><circle cx="1374" cy="809.2" r="1.4" fill="#f2a22a"/><circle cx="1374" cy="819.2" r="1.4" fill="#f2a22a"/><circle cx="1410" cy="797.2" r="1.4" fill="#f2a22a"/><circle cx="1414" cy="793.2" r="1.4" fill="#f2a22a"/><circle cx="1410" cy="821.2" r="1.4" fill="#f2a22a"/><circle cx="1382" cy="829.2" r="1.4" fill="#f2a22a"/><circle cx="1402" cy="829.2" r="1.4" fill="#f2a22a"/><circle cx="1392" cy="787.2" r="1.4" fill="#f2a22a"/><text x="1370" y="650" font-size="9" fill="#3b4542" font-weight="normal" font-family="Liberation Mono" text-anchor="start" >IC50</text><text x="1360" y="797" font-size="9" fill="#3b4542" font-weight="normal" font-family="Liberation Mono" text-anchor="start" >IC39</text><rect x="1366" y="690" width="10" height="7" fill="#d5363b" /><rect x="1378" y="690" width="10" height="7" fill="#d5363b" /><rect x="1398" y="690" width="10" height="7" fill="#d5363b" /><rect x="1410" y="690" width="10" height="7" fill="#d5363b" /><rect x="1380" y="740" width="10" height="7" fill="#d5363b" /><rect x="1397" y="740" width="10" height="7" fill="#d5363b" /><rect x="1372" y="787" width="10" height="7" fill="#d5363b" /><rect x="1388" y="787" width="10" height="7" fill="#d5363b" /><path d="M1313 720 L1320 725 L1345 725 L1370 735" stroke="#c9383a" stroke-width="0.9" fill="none"/><path d="M1313 724 L1320 729 L1345 729 L1370 737" stroke="#c9383a" stroke-width="0.9" fill="none"/><path d="M1313 728 L1320 733 L1345 733 L1370 739" stroke="#c9383a" stroke-width="0.9" fill="none"/><path d="M1313 732 L1320 737 L1345 737 L1370 741" stroke="#c9383a" stroke-width="0.9" fill="none"/><path d="M1301 720 L1301 745 L1313 735" stroke="#c9383a" stroke-width="0.9" fill="none"/><circle cx="1313" cy="720" r="1.3" fill="#f2a22a"/><circle cx="1313" cy="724" r="1.3" fill="#f2a22a"/><circle cx="1313" cy="728" r="1.3" fill="#f2a22a"/><circle cx="1313" cy="732" r="1.3" fill="#f2a22a"/><circle cx="1313" cy="736" r="1.3" fill="#f2a22a"/><path d="M1233 804 L1233 788 L1295 727 L1295 700" stroke="#c9383a" stroke-width="1.1" fill="none"/><path d="M1237 804 L1237 792 L1262 769 L1377 769" stroke="#c9383a" stroke-width="1.1" fill="none"/><path d="M1245 804 L1253 794 L1315 794 L1350 830 L1410 830 L1425 815" stroke="#c9383a" stroke-width="1.1" fill="none"/><path d="M1250 804 L1257 797 L1313 797 L1348 833 L1413 833 L1427 818" stroke="#c9383a" stroke-width="1.1" fill="none"/><path d="M1308 828 L1330 828 L1335 832 L1415 832" stroke="#c9383a" stroke-width="1" fill="none"/><path d="M1287 690 L1287 705 L1305 690" stroke="#c9383a" stroke-width="1" fill="none"/><circle cx="1230" cy="804" r="1.4" fill="#f2a22a"/><circle cx="1234" cy="804" r="1.4" fill="#f2a22a"/><circle cx="1238" cy="804" r="1.4" fill="#f2a22a"/><circle cx="1242" cy="804" r="1.4" fill="#f2a22a"/><circle cx="1246" cy="804" r="1.4" fill="#f2a22a"/><rect x="1230" y="808" width="14" height="8" fill="#d5363b" /><text x="1218" y="826" font-size="12" fill="#3b4542" font-weight="normal" font-family="Liberation Mono" text-anchor="start" >R417</text><circle cx="1313" cy="662" r="1.5" fill="#f2a22a"/><circle cx="1313" cy="667.6" r="1.5" fill="#f2a22a"/><circle cx="1313" cy="673.2" r="1.5" fill="#f2a22a"/><circle cx="1313" cy="678.8" r="1.5" fill="#f2a22a"/><circle cx="1313" cy="684.4" r="1.5" fill="#f2a22a"/><circle cx="1313" cy="690" r="1.5" fill="#f2a22a"/><circle cx="1299" cy="676" r="1.5" fill="#f2a22a"/><circle cx="1299" cy="682" r="1.5" fill="#f2a22a"/><circle cx="1299" cy="688" r="1.5" fill="#f2a22a"/><path d="M1313 689 L1400 689 L1405 684 L1427 684" stroke="#c9383a" stroke-width="1" fill="none"/><path d="M1304 702 L1313 696 L1330 693 L1415 693 L1427 699" stroke="#c9383a" stroke-width="1" fill="none"/><path d="M1313 703 L1400 703 L1410 712" stroke="#c9383a" stroke-width="1" fill="none"/><path d="M1345 673 L1341 680 L1349 689" stroke="#c9383a" stroke-width="1" fill="none"/><path d="M1283 642 L1296 646 L1294 662 L1282 676 L1268 680 L1262 690" stroke="#c9383a" stroke-width="1" fill="none"/><circle cx="1285" cy="641" r="1.5" fill="#f2a22a"/><circle cx="1285" cy="645" r="1.5" fill="#f2a22a"/><circle cx="1285" cy="649" r="1.5" fill="#f2a22a"/><text x="1353" y="848" font-size="10" fill="#3b4542" font-weight="normal" font-family="Liberation Mono" text-anchor="start" >IC141</text><rect x="1355" y="853" width="12" height="52" fill="#d5363b" /><rect x="1355" y="854" width="12" height="0.6" fill="#a02a30" /><rect x="1355" y="856.5" width="12" height="0.6" fill="#a02a30" /><rect x="1355" y="859" width="12" height="0.6" fill="#a02a30" /><rect x="1355" y="861.5" width="12" height="0.6" fill="#a02a30" /><rect x="1355" y="864" width="12" height="0.6" fill="#a02a30" /><rect x="1355" y="866.5" width="12" height="0.6" fill="#a02a30" /><rect x="1355" y="869" width="12" height="0.6" fill="#a02a30" /><rect x="1355" y="871.5" width="12" height="0.6" fill="#a02a30" /><rect x="1355" y="874" width="12" height="0.6" fill="#a02a30" /><rect x="1355" y="876.5" width="12" height="0.6" fill="#a02a30" /><rect x="1355" y="879" width="12" height="0.6" fill="#a02a30" /><rect x="1355" y="881.5" width="12" height="0.6" fill="#a02a30" /><rect x="1355" y="884" width="12" height="0.6" fill="#a02a30" /><rect x="1355" y="886.5" width="12" height="0.6" fill="#a02a30" /><rect x="1355" y="889" width="12" height="0.6" fill="#a02a30" /><rect x="1355" y="891.5" width="12" height="0.6" fill="#a02a30" /><rect x="1355" y="894" width="12" height="0.6" fill="#a02a30" /><rect x="1355" y="896.5" width="12" height="0.6" fill="#a02a30" /><rect x="1355" y="899" width="12" height="0.6" fill="#a02a30" /><rect x="1355" y="901.5" width="12" height="0.6" fill="#a02a30" /><rect x="1390" y="853" width="12" height="52" fill="#d5363b" /><rect x="1390" y="854" width="12" height="0.6" fill="#a02a30" /><rect x="1390" y="856.5" width="12" height="0.6" fill="#a02a30" /><rect x="1390" y="859" width="12" height="0.6" fill="#a02a30" /><rect x="1390" y="861.5" width="12" height="0.6" fill="#a02a30" /><rect x="1390" y="864" width="12" height="0.6" fill="#a02a30" /><rect x="1390" y="866.5" width="12" height="0.6" fill="#a02a30" /><rect x="1390" y="869" width="12" height="0.6" fill="#a02a30" /><rect x="1390" y="871.5" width="12" height="0.6" fill="#a02a30" /><rect x="1390" y="874" width="12" height="0.6" fill="#a02a30" /><rect x="1390" y="876.5" width="12" height="0.6" fill="#a02a30" /><rect x="1390" y="879" width="12" height="0.6" fill="#a02a30" /><rect x="1390" y="881.5" width="12" height="0.6" fill="#a02a30" /><rect x="1390" y="884" width="12" height="0.6" fill="#a02a30" /><rect x="1390" y="886.5" width="12" height="0.6" fill="#a02a30" /><rect x="1390" y="889" width="12" height="0.6" fill="#a02a30" /><rect x="1390" y="891.5" width="12" height="0.6" fill="#a02a30" /><rect x="1390" y="894" width="12" height="0.6" fill="#a02a30" /><rect x="1390" y="896.5" width="12" height="0.6" fill="#a02a30" /><rect x="1390" y="899" width="12" height="0.6" fill="#a02a30" /><rect x="1390" y="901.5" width="12" height="0.6" fill="#a02a30" /><rect x="1352" y="850" width="53" height="58" fill="none" stroke="#452a55" stroke-width="0.8"/><rect x="1372" y="846" width="14" height="7" fill="#d5363b" /><rect x="1390" y="846" width="14" height="7" fill="#d5363b" /><circle cx="1374" cy="858" r="1.3" fill="#f2a22a"/><circle cx="1382" cy="862" r="1.3" fill="#f2a22a"/><circle cx="1374" cy="866" r="1.3" fill="#f2a22a"/><circle cx="1382" cy="870" r="1.3" fill="#f2a22a"/><circle cx="1374" cy="874" r="1.3" fill="#f2a22a"/><circle cx="1382" cy="878" r="1.3" fill="#f2a22a"/><circle cx="1374" cy="882" r="1.3" fill="#f2a22a"/><circle cx="1382" cy="886" r="1.3" fill="#f2a22a"/><circle cx="1374" cy="890" r="1.3" fill="#f2a22a"/><circle cx="1382" cy="894" r="1.3" fill="#f2a22a"/><circle cx="1374" cy="898" r="1.3" fill="#f2a22a"/><circle cx="1382" cy="902" r="1.3" fill="#f2a22a"/><rect x="1406" y="865" width="10" height="6" fill="#d5363b" /><rect x="1406" y="873" width="10" height="6" fill="#d5363b" /><rect x="1406" y="881" width="10" height="6" fill="#d5363b" /><rect x="1406" y="889" width="10" height="6" fill="#d5363b" /><rect x="1406" y="897" width="10" height="6" fill="#d5363b" /><text x="1413" y="858" font-size="10" fill="#3b4542" font-weight="normal" font-family="Liberation Mono" text-anchor="start" >IC15</text><rect x="1428" y="849" width="30" height="34" fill="none" stroke="#452a55" stroke-width="0.8"/><rect x="1434.5" y="857.5" width="17" height="17" fill="#d5363b" /><rect x="1430.5" y="858.4" width="3.5" height="1.2" fill="#d5363b" /><rect x="1452" y="858.4" width="3.5" height="1.2" fill="#d5363b" /><rect x="1435.4" y="853.5" width="1.2" height="3.5" fill="#d5363b" /><rect x="1435.4" y="875" width="1.2" height="3.5" fill="#d5363b" /><rect x="1430.5" y="861.9" width="3.5" height="1.2" fill="#d5363b" /><rect x="1452" y="861.9" width="3.5" height="1.2" fill="#d5363b" /><rect x="1438.9" y="853.5" width="1.2" height="3.5" fill="#d5363b" /><rect x="1438.9" y="875" width="1.2" height="3.5" fill="#d5363b" /><rect x="1430.5" y="865.4" width="3.5" height="1.2" fill="#d5363b" /><rect x="1452" y="865.4" width="3.5" height="1.2" fill="#d5363b" /><rect x="1442.4" y="853.5" width="1.2" height="3.5" fill="#d5363b" /><rect x="1442.4" y="875" width="1.2" height="3.5" fill="#d5363b" /><rect x="1430.5" y="868.9" width="3.5" height="1.2" fill="#d5363b" /><rect x="1452" y="868.9" width="3.5" height="1.2" fill="#d5363b" /><rect x="1445.9" y="853.5" width="1.2" height="3.5" fill="#d5363b" /><rect x="1445.9" y="875" width="1.2" height="3.5" fill="#d5363b" /><rect x="1430.5" y="872.4" width="3.5" height="1.2" fill="#d5363b" /><rect x="1452" y="872.4" width="3.5" height="1.2" fill="#d5363b" /><rect x="1449.4" y="853.5" width="1.2" height="3.5" fill="#d5363b" /><rect x="1449.4" y="875" width="1.2" height="3.5" fill="#d5363b" /><text x="1443" y="868.8" font-size="8" fill="#f4d0d0" font-weight="normal" font-family="Liberation Sans" text-anchor="middle" >15</text><rect x="1441.5" y="842" width="3" height="6" fill="#d5363b" /><rect x="1441.5" y="884" width="3" height="6" fill="#d5363b" /><rect x="1463" y="860" width="12" height="6" fill="#d5363b" /><rect x="1463" y="872" width="12" height="6" fill="#d5363b" /><circle cx="1425" cy="856" r="1.4" fill="#f2a22a"/><circle cx="1425" cy="866" r="1.4" fill="#f2a22a"/><circle cx="1425" cy="876" r="1.4" fill="#f2a22a"/><circle cx="1461" cy="854" r="1.4" fill="#f2a22a"/><circle cx="1465" cy="850" r="1.4" fill="#f2a22a"/><circle cx="1461" cy="878" r="1.4" fill="#f2a22a"/><circle cx="1433" cy="886" r="1.4" fill="#f2a22a"/><circle cx="1453" cy="886" r="1.4" fill="#f2a22a"/><circle cx="1443" cy="844" r="1.4" fill="#f2a22a"/><text x="1505" y="834" font-size="10" fill="#3b4542" font-weight="normal" font-family="Liberation Mono" text-anchor="start" >IC67</text><rect x="1460" y="838" width="12" height="6" fill="#d5363b" /><rect x="1474" y="838" width="12" height="6" fill="#d5363b" /><rect x="1505" y="838" width="12" height="6" fill="#d5363b" /><rect x="1460" y="873" width="12" height="6" fill="#d5363b" /><rect x="1505" y="873" width="12" height="6" fill="#d5363b" /><rect x="1460" y="846" width="12" height="6" fill="#d5363b" /><rect x="1474" y="846" width="12" height="6" fill="#d5363b" /><rect x="1505" y="846" width="12" height="6" fill="#d5363b" /><rect x="1460" y="881" width="12" height="6" fill="#d5363b" /><rect x="1505" y="881" width="12" height="6" fill="#d5363b" /><rect x="1460" y="854" width="12" height="6" fill="#d5363b" /><rect x="1474" y="854" width="12" height="6" fill="#d5363b" /><rect x="1505" y="854" width="12" height="6" fill="#d5363b" /><rect x="1460" y="889" width="12" height="6" fill="#d5363b" /><rect x="1505" y="889" width="12" height="6" fill="#d5363b" /><rect x="1460" y="862" width="12" height="6" fill="#d5363b" /><rect x="1474" y="862" width="12" height="6" fill="#d5363b" /><rect x="1505" y="862" width="12" height="6" fill="#d5363b" /><rect x="1460" y="897" width="12" height="6" fill="#d5363b" /><rect x="1505" y="897" width="12" height="6" fill="#d5363b" /><rect x="1460" y="870" width="12" height="6" fill="#d5363b" /><rect x="1474" y="870" width="12" height="6" fill="#d5363b" /><rect x="1505" y="870" width="12" height="6" fill="#d5363b" /><rect x="1460" y="905" width="12" height="6" fill="#d5363b" /><rect x="1505" y="905" width="12" height="6" fill="#d5363b" /><circle cx="1524" cy="856" r="1.3" fill="#f2a22a"/><circle cx="1524" cy="862" r="1.3" fill="#f2a22a"/><circle cx="1524" cy="868" r="1.3" fill="#f2a22a"/><circle cx="1524" cy="874" r="1.3" fill="#f2a22a"/><circle cx="1524" cy="880" r="1.3" fill="#f2a22a"/><circle cx="1524" cy="886" r="1.3" fill="#f2a22a"/><circle cx="1524" cy="892" r="1.3" fill="#f2a22a"/><circle cx="1524" cy="898" r="1.3" fill="#f2a22a"/><path d="M1518 842 L1530 845 L1545 858 L1560 860 L1575 872" stroke="#c9383a" stroke-width="1" fill="none"/><path d="M1412 890 L1432 905 L1560 905" stroke="#c9383a" stroke-width="1" fill="none"/><rect x="1380" y="907.7" width="40" height="36" fill="none" stroke="#452a55" stroke-width="0.8"/><rect x="1389" y="914.7" width="22" height="22" fill="#d5363b" /><rect x="1385" y="915.6" width="3.5" height="1.2" fill="#d5363b" /><rect x="1411.5" y="915.6" width="3.5" height="1.2" fill="#d5363b" /><rect x="1389.9" y="910.7" width="1.2" height="3.5" fill="#d5363b" /><rect x="1389.9" y="937.2" width="1.2" height="3.5" fill="#d5363b" /><rect x="1385" y="918.767" width="3.5" height="1.2" fill="#d5363b" /><rect x="1411.5" y="918.767" width="3.5" height="1.2" fill="#d5363b" /><rect x="1393.07" y="910.7" width="1.2" height="3.5" fill="#d5363b" /><rect x="1393.07" y="937.2" width="1.2" height="3.5" fill="#d5363b" /><rect x="1385" y="921.933" width="3.5" height="1.2" fill="#d5363b" /><rect x="1411.5" y="921.933" width="3.5" height="1.2" fill="#d5363b" /><rect x="1396.23" y="910.7" width="1.2" height="3.5" fill="#d5363b" /><rect x="1396.23" y="937.2" width="1.2" height="3.5" fill="#d5363b" /><rect x="1385" y="925.1" width="3.5" height="1.2" fill="#d5363b" /><rect x="1411.5" y="925.1" width="3.5" height="1.2" fill="#d5363b" /><rect x="1399.4" y="910.7" width="1.2" height="3.5" fill="#d5363b" /><rect x="1399.4" y="937.2" width="1.2" height="3.5" fill="#d5363b" /><rect x="1385" y="928.267" width="3.5" height="1.2" fill="#d5363b" /><rect x="1411.5" y="928.267" width="3.5" height="1.2" fill="#d5363b" /><rect x="1402.57" y="910.7" width="1.2" height="3.5" fill="#d5363b" /><rect x="1402.57" y="937.2" width="1.2" height="3.5" fill="#d5363b" /><rect x="1385" y="931.433" width="3.5" height="1.2" fill="#d5363b" /><rect x="1411.5" y="931.433" width="3.5" height="1.2" fill="#d5363b" /><rect x="1405.73" y="910.7" width="1.2" height="3.5" fill="#d5363b" /><rect x="1405.73" y="937.2" width="1.2" height="3.5" fill="#d5363b" /><rect x="1385" y="934.6" width="3.5" height="1.2" fill="#d5363b" /><rect x="1411.5" y="934.6" width="3.5" height="1.2" fill="#d5363b" /><rect x="1408.9" y="910.7" width="1.2" height="3.5" fill="#d5363b" /><rect x="1408.9" y="937.2" width="1.2" height="3.5" fill="#d5363b" /><text x="1400" y="924.7" font-size="6" fill="#f4d0d0" font-weight="normal" font-family="Liberation Sans" text-anchor="middle" >17</text><text x="1400" y="931.4000000000001" font-size="4.800000000000001" fill="#f4d0d0" font-weight="normal" font-family="Liberation Sans" text-anchor="middle" >GND</text><rect x="1392" y="901.7" width="14" height="5" fill="#d5363b" /><rect x="1392" y="944.7" width="14" height="5" fill="#d5363b" /><rect x="1420" y="917.7" width="12" height="6" fill="#d5363b" /><rect x="1420" y="931.7" width="12" height="6" fill="#d5363b" /><circle cx="1376" cy="917.7" r="1.4" fill="#f2a22a"/><circle cx="1376" cy="925.7" r="1.4" fill="#f2a22a"/><circle cx="1376" cy="933.7" r="1.4" fill="#f2a22a"/><circle cx="1422" cy="911.7" r="1.4" fill="#f2a22a"/><circle cx="1422" cy="939.7" r="1.4" fill="#f2a22a"/><rect x="1380" y="945" width="40" height="36" fill="none" stroke="#452a55" stroke-width="0.8"/><rect x="1389" y="952" width="22" height="22" fill="#d5363b" /><rect x="1385" y="952.9" width="3.5" height="1.2" fill="#d5363b" /><rect x="1411.5" y="952.9" width="3.5" height="1.2" fill="#d5363b" /><rect x="1389.9" y="948" width="1.2" height="3.5" fill="#d5363b" /><rect x="1389.9" y="974.5" width="1.2" height="3.5" fill="#d5363b" /><rect x="1385" y="956.067" width="3.5" height="1.2" fill="#d5363b" /><rect x="1411.5" y="956.067" width="3.5" height="1.2" fill="#d5363b" /><rect x="1393.07" y="948" width="1.2" height="3.5" fill="#d5363b" /><rect x="1393.07" y="974.5" width="1.2" height="3.5" fill="#d5363b" /><rect x="1385" y="959.233" width="3.5" height="1.2" fill="#d5363b" /><rect x="1411.5" y="959.233" width="3.5" height="1.2" fill="#d5363b" /><rect x="1396.23" y="948" width="1.2" height="3.5" fill="#d5363b" /><rect x="1396.23" y="974.5" width="1.2" height="3.5" fill="#d5363b" /><rect x="1385" y="962.4" width="3.5" height="1.2" fill="#d5363b" /><rect x="1411.5" y="962.4" width="3.5" height="1.2" fill="#d5363b" /><rect x="1399.4" y="948" width="1.2" height="3.5" fill="#d5363b" /><rect x="1399.4" y="974.5" width="1.2" height="3.5" fill="#d5363b" /><rect x="1385" y="965.567" width="3.5" height="1.2" fill="#d5363b" /><rect x="1411.5" y="965.567" width="3.5" height="1.2" fill="#d5363b" /><rect x="1402.57" y="948" width="1.2" height="3.5" fill="#d5363b" /><rect x="1402.57" y="974.5" width="1.2" height="3.5" fill="#d5363b" /><rect x="1385" y="968.733" width="3.5" height="1.2" fill="#d5363b" /><rect x="1411.5" y="968.733" width="3.5" height="1.2" fill="#d5363b" /><rect x="1405.73" y="948" width="1.2" height="3.5" fill="#d5363b" /><rect x="1405.73" y="974.5" width="1.2" height="3.5" fill="#d5363b" /><rect x="1385" y="971.9" width="3.5" height="1.2" fill="#d5363b" /><rect x="1411.5" y="971.9" width="3.5" height="1.2" fill="#d5363b" /><rect x="1408.9" y="948" width="1.2" height="3.5" fill="#d5363b" /><rect x="1408.9" y="974.5" width="1.2" height="3.5" fill="#d5363b" /><text x="1400" y="962" font-size="6" fill="#f4d0d0" font-weight="normal" font-family="Liberation Sans" text-anchor="middle" >17</text><text x="1400" y="968.7" font-size="4.800000000000001" fill="#f4d0d0" font-weight="normal" font-family="Liberation Sans" text-anchor="middle" >GND</text><rect x="1392" y="939" width="14" height="5" fill="#d5363b" /><rect x="1392" y="982" width="14" height="5" fill="#d5363b" /><rect x="1420" y="955" width="12" height="6" fill="#d5363b" /><rect x="1420" y="969" width="12" height="6" fill="#d5363b" /><circle cx="1376" cy="955" r="1.4" fill="#f2a22a"/><circle cx="1376" cy="963" r="1.4" fill="#f2a22a"/><circle cx="1376" cy="971" r="1.4" fill="#f2a22a"/><circle cx="1422" cy="949" r="1.4" fill="#f2a22a"/><circle cx="1422" cy="977" r="1.4" fill="#f2a22a"/><rect x="1380" y="987" width="40" height="36" fill="none" stroke="#452a55" stroke-width="0.8"/><rect x="1389" y="994" width="22" height="22" fill="#d5363b" /><rect x="1385" y="994.9" width="3.5" height="1.2" fill="#d5363b" /><rect x="1411.5" y="994.9" width="3.5" height="1.2" fill="#d5363b" /><rect x="1389.9" y="990" width="1.2" height="3.5" fill="#d5363b" /><rect x="1389.9" y="1016.5" width="1.2" height="3.5" fill="#d5363b" /><rect x="1385" y="998.067" width="3.5" height="1.2" fill="#d5363b" /><rect x="1411.5" y="998.067" width="3.5" height="1.2" fill="#d5363b" /><rect x="1393.07" y="990" width="1.2" height="3.5" fill="#d5363b" /><rect x="1393.07" y="1016.5" width="1.2" height="3.5" fill="#d5363b" /><rect x="1385" y="1001.23" width="3.5" height="1.2" fill="#d5363b" /><rect x="1411.5" y="1001.23" width="3.5" height="1.2" fill="#d5363b" /><rect x="1396.23" y="990" width="1.2" height="3.5" fill="#d5363b" /><rect x="1396.23" y="1016.5" width="1.2" height="3.5" fill="#d5363b" /><rect x="1385" y="1004.4" width="3.5" height="1.2" fill="#d5363b" /><rect x="1411.5" y="1004.4" width="3.5" height="1.2" fill="#d5363b" /><rect x="1399.4" y="990" width="1.2" height="3.5" fill="#d5363b" /><rect x="1399.4" y="1016.5" width="1.2" height="3.5" fill="#d5363b" /><rect x="1385" y="1007.57" width="3.5" height="1.2" fill="#d5363b" /><rect x="1411.5" y="1007.57" width="3.5" height="1.2" fill="#d5363b" /><rect x="1402.57" y="990" width="1.2" height="3.5" fill="#d5363b" /><rect x="1402.57" y="1016.5" width="1.2" height="3.5" fill="#d5363b" /><rect x="1385" y="1010.73" width="3.5" height="1.2" fill="#d5363b" /><rect x="1411.5" y="1010.73" width="3.5" height="1.2" fill="#d5363b" /><rect x="1405.73" y="990" width="1.2" height="3.5" fill="#d5363b" /><rect x="1405.73" y="1016.5" width="1.2" height="3.5" fill="#d5363b" /><rect x="1385" y="1013.9" width="3.5" height="1.2" fill="#d5363b" /><rect x="1411.5" y="1013.9" width="3.5" height="1.2" fill="#d5363b" /><rect x="1408.9" y="990" width="1.2" height="3.5" fill="#d5363b" /><rect x="1408.9" y="1016.5" width="1.2" height="3.5" fill="#d5363b" /><text x="1400" y="1004" font-size="6" fill="#f4d0d0" font-weight="normal" font-family="Liberation Sans" text-anchor="middle" >17</text><text x="1400" y="1010.7" font-size="4.800000000000001" fill="#f4d0d0" font-weight="normal" font-family="Liberation Sans" text-anchor="middle" >GND</text><rect x="1392" y="981" width="14" height="5" fill="#d5363b" /><rect x="1392" y="1024" width="14" height="5" fill="#d5363b" /><rect x="1420" y="997" width="12" height="6" fill="#d5363b" /><rect x="1420" y="1011" width="12" height="6" fill="#d5363b" /><circle cx="1376" cy="997" r="1.4" fill="#f2a22a"/><circle cx="1376" cy="1005" r="1.4" fill="#f2a22a"/><circle cx="1376" cy="1013" r="1.4" fill="#f2a22a"/><circle cx="1422" cy="991" r="1.4" fill="#f2a22a"/><circle cx="1422" cy="1019" r="1.4" fill="#f2a22a"/><rect x="1380" y="1025.8" width="40" height="36" fill="none" stroke="#452a55" stroke-width="0.8"/><rect x="1389" y="1032.8" width="22" height="22" fill="#d5363b" /><rect x="1385" y="1033.7" width="3.5" height="1.2" fill="#d5363b" /><rect x="1411.5" y="1033.7" width="3.5" height="1.2" fill="#d5363b" /><rect x="1389.9" y="1028.8" width="1.2" height="3.5" fill="#d5363b" /><rect x="1389.9" y="1055.3" width="1.2" height="3.5" fill="#d5363b" /><rect x="1385" y="1036.87" width="3.5" height="1.2" fill="#d5363b" /><rect x="1411.5" y="1036.87" width="3.5" height="1.2" fill="#d5363b" /><rect x="1393.07" y="1028.8" width="1.2" height="3.5" fill="#d5363b" /><rect x="1393.07" y="1055.3" width="1.2" height="3.5" fill="#d5363b" /><rect x="1385" y="1040.03" width="3.5" height="1.2" fill="#d5363b" /><rect x="1411.5" y="1040.03" width="3.5" height="1.2" fill="#d5363b" /><rect x="1396.23" y="1028.8" width="1.2" height="3.5" fill="#d5363b" /><rect x="1396.23" y="1055.3" width="1.2" height="3.5" fill="#d5363b" /><rect x="1385" y="1043.2" width="3.5" height="1.2" fill="#d5363b" /><rect x="1411.5" y="1043.2" width="3.5" height="1.2" fill="#d5363b" /><rect x="1399.4" y="1028.8" width="1.2" height="3.5" fill="#d5363b" /><rect x="1399.4" y="1055.3" width="1.2" height="3.5" fill="#d5363b" /><rect x="1385" y="1046.37" width="3.5" height="1.2" fill="#d5363b" /><rect x="1411.5" y="1046.37" width="3.5" height="1.2" fill="#d5363b" /><rect x="1402.57" y="1028.8" width="1.2" height="3.5" fill="#d5363b" /><rect x="1402.57" y="1055.3" width="1.2" height="3.5" fill="#d5363b" /><rect x="1385" y="1049.53" width="3.5" height="1.2" fill="#d5363b" /><rect x="1411.5" y="1049.53" width="3.5" height="1.2" fill="#d5363b" /><rect x="1405.73" y="1028.8" width="1.2" height="3.5" fill="#d5363b" /><rect x="1405.73" y="1055.3" width="1.2" height="3.5" fill="#d5363b" /><rect x="1385" y="1052.7" width="3.5" height="1.2" fill="#d5363b" /><rect x="1411.5" y="1052.7" width="3.5" height="1.2" fill="#d5363b" /><rect x="1408.9" y="1028.8" width="1.2" height="3.5" fill="#d5363b" /><rect x="1408.9" y="1055.3" width="1.2" height="3.5" fill="#d5363b" /><text x="1400" y="1042.8" font-size="6" fill="#f4d0d0" font-weight="normal" font-family="Liberation Sans" text-anchor="middle" >17</text><text x="1400" y="1049.5" font-size="4.800000000000001" fill="#f4d0d0" font-weight="normal" font-family="Liberation Sans" text-anchor="middle" >GND</text><rect x="1392" y="1019.8" width="14" height="5" fill="#d5363b" /><rect x="1392" y="1062.8" width="14" height="5" fill="#d5363b" /><rect x="1420" y="1035.8" width="12" height="6" fill="#d5363b" /><rect x="1420" y="1049.8" width="12" height="6" fill="#d5363b" /><circle cx="1376" cy="1035.8" r="1.4" fill="#f2a22a"/><circle cx="1376" cy="1043.8" r="1.4" fill="#f2a22a"/><circle cx="1376" cy="1051.8" r="1.4" fill="#f2a22a"/><circle cx="1422" cy="1029.8" r="1.4" fill="#f2a22a"/><circle cx="1422" cy="1057.8" r="1.4" fill="#f2a22a"/><text x="1365" y="920" font-size="10" fill="#3b4542" font-weight="normal" font-family="Liberation Mono" text-anchor="start" >IC63</text><text x="1365" y="958" font-size="10" fill="#3b4542" font-weight="normal" font-family="Liberation Mono" text-anchor="start" >IC55</text><text x="1365" y="998" font-size="10" fill="#3b4542" font-weight="normal" font-family="Liberation Mono" text-anchor="start" >IC49</text><text x="1365" y="1038" font-size="10" fill="#3b4542" font-weight="normal" font-family="Liberation Mono" text-anchor="start" >IC64</text><rect x="1432" y="912" width="12" height="73" fill="#d5363b" /><rect x="1432" y="913" width="12" height="0.6" fill="#a02a30" /><rect x="1432" y="915.5" width="12" height="0.6" fill="#a02a30" /><rect x="1432" y="918" width="12" height="0.6" fill="#a02a30" /><rect x="1432" y="920.5" width="12" height="0.6" fill="#a02a30" /><rect x="1432" y="923" width="12" height="0.6" fill="#a02a30" /><rect x="1432" y="925.5" width="12" height="0.6" fill="#a02a30" /><rect x="1432" y="928" width="12" height="0.6" fill="#a02a30" /><rect x="1432" y="930.5" width="12" height="0.6" fill="#a02a30" /><rect x="1432" y="933" width="12" height="0.6" fill="#a02a30" /><rect x="1432" y="935.5" width="12" height="0.6" fill="#a02a30" /><rect x="1432" y="938" width="12" height="0.6" fill="#a02a30" /><rect x="1432" y="940.5" width="12" height="0.6" fill="#a02a30" /><rect x="1432" y="943" width="12" height="0.6" fill="#a02a30" /><rect x="1432" y="945.5" width="12" height="0.6" fill="#a02a30" /><rect x="1432" y="948" width="12" height="0.6" fill="#a02a30" /><rect x="1432" y="950.5" width="12" height="0.6" fill="#a02a30" /><rect x="1432" y="953" width="12" height="0.6" fill="#a02a30" /><rect x="1432" y="955.5" width="12" height="0.6" fill="#a02a30" /><rect x="1432" y="958" width="12" height="0.6" fill="#a02a30" /><rect x="1432" y="960.5" width="12" height="0.6" fill="#a02a30" /><rect x="1432" y="963" width="12" height="0.6" fill="#a02a30" /><rect x="1432" y="965.5" width="12" height="0.6" fill="#a02a30" /><rect x="1432" y="968" width="12" height="0.6" fill="#a02a30" /><rect x="1432" y="970.5" width="12" height="0.6" fill="#a02a30" /><rect x="1432" y="973" width="12" height="0.6" fill="#a02a30" /><rect x="1432" y="975.5" width="12" height="0.6" fill="#a02a30" /><rect x="1432" y="978" width="12" height="0.6" fill="#a02a30" /><rect x="1432" y="980.5" width="12" height="0.6" fill="#a02a30" /><rect x="1432" y="983" width="12" height="0.6" fill="#a02a30" /><rect x="1478" y="912" width="12" height="73" fill="#d5363b" /><rect x="1478" y="913" width="12" height="0.6" fill="#a02a30" /><rect x="1478" y="915.5" width="12" height="0.6" fill="#a02a30" /><rect x="1478" y="918" width="12" height="0.6" fill="#a02a30" /><rect x="1478" y="920.5" width="12" height="0.6" fill="#a02a30" /><rect x="1478" y="923" width="12" height="0.6" fill="#a02a30" /><rect x="1478" y="925.5" width="12" height="0.6" fill="#a02a30" /><rect x="1478" y="928" width="12" height="0.6" fill="#a02a30" /><rect x="1478" y="930.5" width="12" height="0.6" fill="#a02a30" /><rect x="1478" y="933" width="12" height="0.6" fill="#a02a30" /><rect x="1478" y="935.5" width="12" height="0.6" fill="#a02a30" /><rect x="1478" y="938" width="12" height="0.6" fill="#a02a30" /><rect x="1478" y="940.5" width="12" height="0.6" fill="#a02a30" /><rect x="1478" y="943" width="12" height="0.6" fill="#a02a30" /><rect x="1478" y="945.5" width="12" height="0.6" fill="#a02a30" /><rect x="1478" y="948" width="12" height="0.6" fill="#a02a30" /><rect x="1478" y="950.5" width="12" height="0.6" fill="#a02a30" /><rect x="1478" y="953" width="12" height="0.6" fill="#a02a30" /><rect x="1478" y="955.5" width="12" height="0.6" fill="#a02a30" /><rect x="1478" y="958" width="12" height="0.6" fill="#a02a30" /><rect x="1478" y="960.5" width="12" height="0.6" fill="#a02a30" /><rect x="1478" y="963" width="12" height="0.6" fill="#a02a30" /><rect x="1478" y="965.5" width="12" height="0.6" fill="#a02a30" /><rect x="1478" y="968" width="12" height="0.6" fill="#a02a30" /><rect x="1478" y="970.5" width="12" height="0.6" fill="#a02a30" /><rect x="1478" y="973" width="12" height="0.6" fill="#a02a30" /><rect x="1478" y="975.5" width="12" height="0.6" fill="#a02a30" /><rect x="1478" y="978" width="12" height="0.6" fill="#a02a30" /><rect x="1478" y="980.5" width="12" height="0.6" fill="#a02a30" /><rect x="1478" y="983" width="12" height="0.6" fill="#a02a30" /><rect x="1429" y="909" width="64" height="79" fill="none" stroke="#452a55" stroke-width="0.8"/><circle cx="1448" cy="918" r="1.3" fill="#f2a22a"/><circle cx="1496" cy="917" r="1.3" fill="#f2a22a"/><circle cx="1448" cy="929" r="1.3" fill="#f2a22a"/><circle cx="1496" cy="928" r="1.3" fill="#f2a22a"/><circle cx="1448" cy="940" r="1.3" fill="#f2a22a"/><circle cx="1496" cy="939" r="1.3" fill="#f2a22a"/><circle cx="1448" cy="951" r="1.3" fill="#f2a22a"/><circle cx="1496" cy="950" r="1.3" fill="#f2a22a"/><circle cx="1448" cy="962" r="1.3" fill="#f2a22a"/><circle cx="1496" cy="961" r="1.3" fill="#f2a22a"/><circle cx="1448" cy="973" r="1.3" fill="#f2a22a"/><circle cx="1496" cy="972" r="1.3" fill="#f2a22a"/><rect x="1496" y="916" width="12" height="6" fill="#d5363b" /><rect x="1510" y="916" width="12" height="6" fill="#d5363b" /><rect x="1496" y="931" width="12" height="6" fill="#d5363b" /><rect x="1510" y="931" width="12" height="6" fill="#d5363b" /><rect x="1496" y="946" width="12" height="6" fill="#d5363b" /><rect x="1510" y="946" width="12" height="6" fill="#d5363b" /><rect x="1496" y="961" width="12" height="6" fill="#d5363b" /><rect x="1510" y="961" width="12" height="6" fill="#d5363b" /><rect x="1432" y="995" width="12" height="64" fill="#d5363b" /><rect x="1432" y="996" width="12" height="0.6" fill="#a02a30" /><rect x="1432" y="998.5" width="12" height="0.6" fill="#a02a30" /><rect x="1432" y="1001" width="12" height="0.6" fill="#a02a30" /><rect x="1432" y="1003.5" width="12" height="0.6" fill="#a02a30" /><rect x="1432" y="1006" width="12" height="0.6" fill="#a02a30" /><rect x="1432" y="1008.5" width="12" height="0.6" fill="#a02a30" /><rect x="1432" y="1011" width="12" height="0.6" fill="#a02a30" /><rect x="1432" y="1013.5" width="12" height="0.6" fill="#a02a30" /><rect x="1432" y="1016" width="12" height="0.6" fill="#a02a30" /><rect x="1432" y="1018.5" width="12" height="0.6" fill="#a02a30" /><rect x="1432" y="1021" width="12" height="0.6" fill="#a02a30" /><rect x="1432" y="1023.5" width="12" height="0.6" fill="#a02a30" /><rect x="1432" y="1026" width="12" height="0.6" fill="#a02a30" /><rect x="1432" y="1028.5" width="12" height="0.6" fill="#a02a30" /><rect x="1432" y="1031" width="12" height="0.6" fill="#a02a30" /><rect x="1432" y="1033.5" width="12" height="0.6" fill="#a02a30" /><rect x="1432" y="1036" width="12" height="0.6" fill="#a02a30" /><rect x="1432" y="1038.5" width="12" height="0.6" fill="#a02a30" /><rect x="1432" y="1041" width="12" height="0.6" fill="#a02a30" /><rect x="1432" y="1043.5" width="12" height="0.6" fill="#a02a30" /><rect x="1432" y="1046" width="12" height="0.6" fill="#a02a30" /><rect x="1432" y="1048.5" width="12" height="0.6" fill="#a02a30" /><rect x="1432" y="1051" width="12" height="0.6" fill="#a02a30" /><rect x="1432" y="1053.5" width="12" height="0.6" fill="#a02a30" /><rect x="1432" y="1056" width="12" height="0.6" fill="#a02a30" /><rect x="1478" y="995" width="12" height="64" fill="#d5363b" /><rect x="1478" y="996" width="12" height="0.6" fill="#a02a30" /><rect x="1478" y="998.5" width="12" height="0.6" fill="#a02a30" /><rect x="1478" y="1001" width="12" height="0.6" fill="#a02a30" /><rect x="1478" y="1003.5" width="12" height="0.6" fill="#a02a30" /><rect x="1478" y="1006" width="12" height="0.6" fill="#a02a30" /><rect x="1478" y="1008.5" width="12" height="0.6" fill="#a02a30" /><rect x="1478" y="1011" width="12" height="0.6" fill="#a02a30" /><rect x="1478" y="1013.5" width="12" height="0.6" fill="#a02a30" /><rect x="1478" y="1016" width="12" height="0.6" fill="#a02a30" /><rect x="1478" y="1018.5" width="12" height="0.6" fill="#a02a30" /><rect x="1478" y="1021" width="12" height="0.6" fill="#a02a30" /><rect x="1478" y="1023.5" width="12" height="0.6" fill="#a02a30" /><rect x="1478" y="1026" width="12" height="0.6" fill="#a02a30" /><rect x="1478" y="1028.5" width="12" height="0.6" fill="#a02a30" /><rect x="1478" y="1031" width="12" height="0.6" fill="#a02a30" /><rect x="1478" y="1033.5" width="12" height="0.6" fill="#a02a30" /><rect x="1478" y="1036" width="12" height="0.6" fill="#a02a30" /><rect x="1478" y="1038.5" width="12" height="0.6" fill="#a02a30" /><rect x="1478" y="1041" width="12" height="0.6" fill="#a02a30" /><rect x="1478" y="1043.5" width="12" height="0.6" fill="#a02a30" /><rect x="1478" y="1046" width="12" height="0.6" fill="#a02a30" /><rect x="1478" y="1048.5" width="12" height="0.6" fill="#a02a30" /><rect x="1478" y="1051" width="12" height="0.6" fill="#a02a30" /><rect x="1478" y="1053.5" width="12" height="0.6" fill="#a02a30" /><rect x="1478" y="1056" width="12" height="0.6" fill="#a02a30" /><rect x="1429" y="992" width="64" height="70" fill="none" stroke="#452a55" stroke-width="0.8"/><circle cx="1448" cy="1001" r="1.3" fill="#f2a22a"/><circle cx="1496" cy="1000" r="1.3" fill="#f2a22a"/><circle cx="1448" cy="1012" r="1.3" fill="#f2a22a"/><circle cx="1496" cy="1011" r="1.3" fill="#f2a22a"/><circle cx="1448" cy="1023" r="1.3" fill="#f2a22a"/><circle cx="1496" cy="1022" r="1.3" fill="#f2a22a"/><circle cx="1448" cy="1034" r="1.3" fill="#f2a22a"/><circle cx="1496" cy="1033" r="1.3" fill="#f2a22a"/><circle cx="1448" cy="1045" r="1.3" fill="#f2a22a"/><circle cx="1496" cy="1044" r="1.3" fill="#f2a22a"/><circle cx="1448" cy="1056" r="1.3" fill="#f2a22a"/><circle cx="1496" cy="1055" r="1.3" fill="#f2a22a"/><rect x="1496" y="999" width="12" height="6" fill="#d5363b" /><rect x="1510" y="999" width="12" height="6" fill="#d5363b" /><rect x="1496" y="1014" width="12" height="6" fill="#d5363b" /><rect x="1510" y="1014" width="12" height="6" fill="#d5363b" /><rect x="1496" y="1029" width="12" height="6" fill="#d5363b" /><rect x="1510" y="1029" width="12" height="6" fill="#d5363b" /><rect x="1496" y="1044" width="12" height="6" fill="#d5363b" /><rect x="1510" y="1044" width="12" height="6" fill="#d5363b" /><path d="M1525 950 L1535 945 L1549 925" stroke="#c9383a" stroke-width="0.9" fill="none"/><path d="M1525 962 L1535 957 L1549 937" stroke="#c9383a" stroke-width="0.9" fill="none"/><path d="M1525 974 L1535 969 L1549 949" stroke="#c9383a" stroke-width="0.9" fill="none"/><path d="M1525 986 L1535 981 L1549 961" stroke="#c9383a" stroke-width="0.9" fill="none"/><path d="M1525 998 L1535 993 L1549 973" stroke="#c9383a" stroke-width="0.9" fill="none"/><path d="M1525 1010 L1535 1005 L1549 985" stroke="#c9383a" stroke-width="0.9" fill="none"/><path d="M1525 1010 L1545 990 L1560 985" stroke="#c9383a" stroke-width="0.9" fill="none"/><path d="M1525 1016 L1545 996 L1560 991" stroke="#c9383a" stroke-width="0.9" fill="none"/><path d="M1525 1022 L1545 1002 L1560 997" stroke="#c9383a" stroke-width="0.9" fill="none"/><path d="M1525 1028 L1545 1008 L1560 1003" stroke="#c9383a" stroke-width="0.9" fill="none"/><path d="M1385 909 L1375 912 L1372 918 L1372 962 L1378 968 L1385 968" stroke="#c9383a" stroke-width="1" fill="none"/><circle cx="1375" cy="921" r="1.4" fill="#f2a22a"/><circle cx="1375" cy="926" r="1.4" fill="#f2a22a"/><circle cx="1375" cy="931" r="1.4" fill="#f2a22a"/></svg>
<svg style="position:absolute;left:110px;top:33px;" width="20" height="20" viewBox="0 0 20 20"><rect x="0" y="0" width="20" height="20" rx="3" fill="#2a8a2a"/><path d="M5 0 Q4 8 8 11 Q11 14 10 20 M9 0 Q8 7 12 10 Q15 12 14 20 M13 0 Q13 4 17 6" stroke="#5cb85c" stroke-width="1.2" fill="none"/><circle cx="17" cy="8" r="1.5" fill="#f5b041"/><circle cx="3" cy="12" r="1.5" fill="#f5b041"/><circle cx="16" cy="14" r="1.3" fill="#f5b041"/></svg><svg style="position:absolute;left:137px;top:36px;" width="14" height="14" viewBox="0 0 14 14"><path d="M2 12 L6 8" stroke="#232627" stroke-width="1.3"/><path d="M5 6 L9 2 L12 5 L8 9 Z" fill="#232627"/><path d="M4 6 L8 10" stroke="#232627" stroke-width="1.6"/></svg><div style="position:absolute;left:1008px;top:33.80px;font-size:14px;line-height:20px;color:#232627;font-weight:normal;white-space:nowrap;letter-spacing:-0.25px;">vme-wren — PCB Editor</div><svg style="position:absolute;left:1988px;top:36px;" width="64" height="14" viewBox="0 0 64 14"><path d="M2 4 L8 10 L14 4" stroke="#232627" stroke-width="1.3" fill="none"/><path d="M26 10 L32 4 L38 10" stroke="#232627" stroke-width="1.3" fill="none"/><path d="M51 2 L61 12 M61 2 L51 12" stroke="#232627" stroke-width="1.3" fill="none"/></svg><div style="position:absolute;left:115px;top:60.80px;font-size:14px;line-height:20px;color:#232627;font-weight:normal;white-space:nowrap;letter-spacing:-0.25px;">File</div><div style="position:absolute;left:153px;top:60.80px;font-size:14px;line-height:20px;color:#232627;font-weight:normal;white-space:nowrap;letter-spacing:-0.25px;">Edit</div><div style="position:absolute;left:194px;top:60.80px;font-size:14px;line-height:20px;color:#232627;font-weight:normal;white-space:nowrap;letter-spacing:-0.25px;">View</div><div style="position:absolute;left:240px;top:60.80px;font-size:14px;line-height:20px;color:#232627;font-weight:normal;white-space:nowrap;letter-spacing:-0.25px;">Place</div><div style="position:absolute;left:290px;top:60.80px;font-size:14px;line-height:20px;color:#232627;font-weight:normal;white-space:nowrap;letter-spacing:-0.25px;">Route</div><div style="position:absolute;left:345px;top:60.80px;font-size:14px;line-height:20px;color:#232627;font-weight:normal;white-space:nowrap;letter-spacing:-0.25px;">Inspect</div><div style="position:absolute;left:409px;top:60.80px;font-size:14px;line-height:20px;color:#232627;font-weight:normal;white-space:nowrap;letter-spacing:-0.25px;">Tools</div><div style="position:absolute;left:458px;top:60.80px;font-size:14px;line-height:20px;color:#232627;font-weight:normal;white-space:nowrap;letter-spacing:-0.25px;">Preferences</div><div style="position:absolute;left:551px;top:60.80px;font-size:14px;line-height:20px;color:#232627;font-weight:normal;white-space:nowrap;letter-spacing:-0.25px;">Help</div><div style="position:absolute;left:105px;top:84px;width:1953px;height:74px;background:#fcfcfc"></div><svg style="position:absolute;left:114px;top:90px;" width="24" height="24" viewBox="0 0 24 24"><path d="M1 2 L18 2 L22 6 L22 22 L1 22 Z" fill="#4d4d4d"/><rect x="5" y="2" width="11" height="6" fill="#fcfcfc"/><rect x="11" y="3" width="3" height="4" fill="#4d4d4d"/><rect x="4" y="13" width="15" height="8" fill="#fcfcfc"/></svg><div style="position:absolute;left:146px;top:90px;width:1px;height:23px;background:#c9cbcd"></div><svg style="position:absolute;left:155px;top:90px;" width="24" height="24" viewBox="0 0 24 24"><rect x="0" y="1" width="23" height="22" rx="3" fill="#2a8a2a"/><path d="M5 1 Q4 9 8 12 Q11 15 10 23 M10 1 Q9 8 13 11" stroke="#5cb85c" stroke-width="1.3" fill="none"/><circle cx="15" cy="15" r="5" fill="#d03040"/><circle cx="15" cy="15" r="2" fill="#2a8a2a"/><circle cx="4" cy="13" r="1.6" fill="#f5b041"/><circle cx="20" cy="6" r="1.5" fill="#f5b041"/></svg><div style="position:absolute;left:187px;top:90px;width:1px;height:23px;background:#c9cbcd"></div><svg style="position:absolute;left:196px;top:90px;" width="24" height="24" viewBox="0 0 24 24"><path d="M3 2 L3 21 M1 22 L6 22" stroke="#4d4d4d" stroke-width="1.3" fill="none"/><path d="M7 2 L16 2 L20 6 L20 21 L7 21 Z" fill="#f4f4f4" stroke="#4d4d4d" stroke-width="1.3"/><path d="M5 24 L20 24" stroke="#4d4d4d" stroke-width="1"/></svg><svg style="position:absolute;left:228px;top:90px;" width="25" height="24" viewBox="0 0 25 24"><rect x="5" y="2" width="14" height="6" fill="none" stroke="#4d4d4d" stroke-width="1.4"/><rect x="1" y="8" width="23" height="9" rx="2" fill="#4d4d4d"/><path d="M5 13 L19 13 L19 22 L5 22 Z" fill="#f4f4f4" stroke="#4d4d4d" stroke-width="1.5"/></svg><svg style="position:absolute;left:259px;top:90px;" width="25" height="24" viewBox="0 0 25 24"><rect x="6" y="1" width="13" height="5" fill="none" stroke="#4d4d4d" stroke-width="1.3"/><rect x="0" y="5" width="24" height="5" rx="1" fill="#4d4d4d"/><path d="M6 10 L19 10 L19 19 L6 19 Z" fill="#f4f4f4" stroke="#4d4d4d" stroke-width="1.4"/><path d="M2 10 L2 22 M22 10 L22 22 M0 22 L5 22 M19 22 L24 22" stroke="#4d4d4d" stroke-width="1.4"/></svg><div style="position:absolute;left:292px;top:90px;width:1px;height:23px;background:#c9cbcd"></div><svg style="position:absolute;left:302px;top:90px;" width="24" height="24" viewBox="0 0 24 24"><path d="M6 8 A8 8 0 1 1 8 19" stroke="#b8b8b8" stroke-width="1.6" fill="none"/><path d="M2 3 L3 10 L9 8" stroke="#b8b8b8" stroke-width="1.6" fill="none"/></svg><svg style="position:absolute;left:334px;top:90px;" width="24" height="24" viewBox="0 0 24 24"><path d="M18 8 A8 8 0 1 0 16 19" stroke="#b8b8b8" stroke-width="1.6" fill="none"/><path d="M22 3 L21 10 L15 8" stroke="#b8b8b8" stroke-width="1.6" fill="none"/></svg><div style="position:absolute;left:365px;top:90px;width:1px;height:23px;background:#c9cbcd"></div><svg style="position:absolute;left:374px;top:90px;" width="24" height="24" viewBox="0 0 24 24"><circle cx="14" cy="10" r="8" fill="none" stroke="#4d4d4d" stroke-width="1.6"/><path d="M8 16 L2 22" stroke="#4d4d4d" stroke-width="2"/><path d="M11 14 L14 5 L17 14 M12 11 L16 11" stroke="#4d4d4d" stroke-width="1.4" fill="none"/></svg><div style="position:absolute;left:406px;top:90px;width:1px;height:23px;background:#c9cbcd"></div><svg style="position:absolute;left:415px;top:90px;" width="24" height="24" viewBox="0 0 24 24"><path d="M4 11 A8 8 0 0 1 19 6" stroke="#4d4d4d" stroke-width="2" fill="none"/><path d="M20 1 L20 8 L13 8" stroke="#4d4d4d" stroke-width="2" fill="none"/><path d="M20 13 A8 8 0 0 1 5 18" stroke="#4d4d4d" stroke-width="2" fill="none"/><path d="M4 23 L4 16 L11 16" stroke="#4d4d4d" stroke-width="2" fill="none"/></svg><svg style="position:absolute;left:447px;top:91px;" width="23" height="23" viewBox="0 0 23 23"><circle cx="9" cy="9" r="7.5" fill="none" stroke="#4d4d4d" stroke-width="1.6"/><path d="M14.5 14.5 L21 21" stroke="#4d4d4d" stroke-width="2.2"/><path d="M5 9 L13 9 M9 5 L9 13" stroke="#4d4d4d" stroke-width="1.8"/></svg><svg style="position:absolute;left:479px;top:91px;" width="23" height="23" viewBox="0 0 23 23"><circle cx="9" cy="9" r="7.5" fill="none" stroke="#4d4d4d" stroke-width="1.6"/><path d="M14.5 14.5 L21 21" stroke="#4d4d4d" stroke-width="2.2"/><path d="M5 9 L13 9" stroke="#4d4d4d" stroke-width="1.8"/></svg><svg style="position:absolute;left:511px;top:91px;" width="23" height="23" viewBox="0 0 23 23"><circle cx="9" cy="9" r="7.5" fill="none" stroke="#4d4d4d" stroke-width="1.6"/><path d="M14.5 14.5 L21 21" stroke="#4d4d4d" stroke-width="2.2"/><path d="M6 5 L10 5 L12 7 L12 13 L6 13 Z" fill="#999"/></svg><svg style="position:absolute;left:543px;top:91px;" width="23" height="23" viewBox="0 0 23 23"><circle cx="9" cy="9" r="7.5" fill="none" stroke="#4d4d4d" stroke-width="1.6"/><path d="M14.5 14.5 L21 21" stroke="#4d4d4d" stroke-width="2.2"/><path d="M4 13 L7 9 L9 11 L11 8 L14 13 Z" fill="#999"/><circle cx="12" cy="6" r="1" fill="#999"/></svg><svg style="position:absolute;left:575px;top:91px;" width="23" height="23" viewBox="0 0 23 23"><circle cx="9" cy="9" r="7.5" fill="none" stroke="#4d4d4d" stroke-width="1.6"/><path d="M14.5 14.5 L21 21" stroke="#4d4d4d" stroke-width="2.2"/><path d="M7 5 L13 11 L10 11 L11 14 L9 14 L8 11 L6 13 Z" fill="#999"/></svg><div style="position:absolute;left:607px;top:90px;width:1px;height:23px;background:#c9cbcd"></div><svg style="position:absolute;left:617px;top:90px;" width="22" height="24" viewBox="0 0 22 24"><path d="M1 23 L17 16 L20 23 Z" fill="#999"/><path d="M16 14 Q16 6 9 7" stroke="#1d8fd6" stroke-width="2" fill="none"/><path d="M11 3 L7 7 L11 11" stroke="#1d8fd6" stroke-width="2" fill="none"/></svg><svg style="position:absolute;left:649px;top:90px;" width="22" height="24" viewBox="0 0 22 24"><path d="M1 23 L21 16 L21 23 Z" fill="#999"/><path d="M6 14 Q6 6 13 7" stroke="#1d8fd6" stroke-width="2" fill="none"/><path d="M11 3 L15 7 L11 11" stroke="#1d8fd6" stroke-width="2" fill="none"/></svg><svg style="position:absolute;left:681px;top:90px;" width="22" height="24" viewBox="0 0 22 24"><path d="M1 2 L21 10 L1 10 Z" fill="#999"/><path d="M1 13 L21 13 L1 21 Z" fill="#1d8fd6"/></svg><svg style="position:absolute;left:712px;top:90px;" width="22" height="24" viewBox="0 0 22 24"><path d="M10 1 L10 21 L2 21 Z" fill="#999"/><path d="M12 1 L12 21 L20 21 Z" fill="#1d8fd6"/></svg><svg style="position:absolute;left:744px;top:90px;" width="23" height="24" viewBox="0 0 23 24"><rect x="1" y="1" width="14" height="13" fill="none" stroke="#aaa" stroke-width="1" stroke-dasharray="2,1.5"/><rect x="7" y="7" width="14" height="13" fill="#fcfcfc" stroke="#aaa" stroke-width="1.2"/><rect x="0" y="0" width="23" height="22" fill="none" stroke="#bbb" stroke-width="1" stroke-dasharray="2,2"/></svg><svg style="position:absolute;left:777px;top:90px;" width="22" height="24" viewBox="0 0 22 24"><rect x="2" y="2" width="12" height="12" fill="none" stroke="#aaa" stroke-width="1.2"/><rect x="7" y="8" width="12" height="12" fill="#fcfcfc" stroke="#aaa" stroke-width="1.2"/></svg><svg style="position:absolute;left:809px;top:90px;" width="22" height="24" viewBox="0 0 22 24"><path d="M6 11 L6 7 A5 5 0 0 1 16 7 L16 11" fill="none" stroke="#b0b0b0" stroke-width="2.2"/><rect x="3" y="11" width="16" height="11" rx="1" fill="#b0b0b0"/></svg><svg style="position:absolute;left:840px;top:90px;" width="24" height="24" viewBox="0 0 24 24"><path d="M13 11 L13 7 A5 5 0 0 1 23 7 L23 10" fill="none" stroke="#4d4d4d" stroke-width="2.2"/><rect x="0" y="11" width="16" height="11" rx="1" fill="#4d4d4d"/><circle cx="8" cy="16" r="1.6" fill="#fcfcfc"/></svg><div style="position:absolute;left:872px;top:90px;width:1px;height:23px;background:#c9cbcd"></div><svg style="position:absolute;left:880px;top:90px;" width="24" height="24" viewBox="0 0 24 24"><rect x="2" y="4" width="19" height="17" fill="none" stroke="#1d8fd6" stroke-width="1.4" stroke-dasharray="2,2"/><rect x="3" y="1" width="4" height="4" fill="#1d8fd6"/><rect x="9" y="1" width="4" height="4" fill="#1d8fd6"/><rect x="15" y="1" width="4" height="4" fill="#1d8fd6"/><rect x="3" y="19" width="4" height="4" fill="#1d8fd6"/><circle cx="17" cy="17" r="6.5" fill="#d82040"/><path d="M14 20 L20 14" stroke="#fff" stroke-width="2"/></svg><svg style="position:absolute;left:912px;top:90px;" width="24" height="24" viewBox="0 0 24 24"><rect x="1" y="2" width="3" height="20" fill="#4d4d4d"/><rect x="5" y="2" width="3" height="20" fill="#4d4d4d"/><path d="M9 3 L13 2 L15 20 L11 21 Z" fill="#4d4d4d"/><circle cx="15" cy="14" r="5" fill="#fff" stroke="#d82040" stroke-width="2"/><path d="M19 18 L23 23" stroke="#d82040" stroke-width="2.4"/><path d="M2 22 L8 22" stroke="#1d8fd6" stroke-width="1.5"/></svg><svg style="position:absolute;left:944px;top:90px;" width="25" height="24" viewBox="0 0 25 24"><rect x="5" y="1" width="14" height="14" rx="1" fill="#4d4d4d"/><rect x="1" y="17" width="23" height="3" fill="#1d8fd6"/><path d="M8 15 L8 22 M16 15 L16 22" stroke="#4d4d4d" stroke-width="1.2"/></svg><div style="position:absolute;left:977px;top:90px;width:1px;height:23px;background:#c9cbcd"></div><svg style="position:absolute;left:985px;top:89px;" width="25" height="25" viewBox="0 0 25 25"><rect x="0" y="0" width="24" height="24" rx="2" fill="#6a9a50"/><path d="M14 0 L24 0 L24 24 L10 24 Q16 14 14 0" fill="#4caf50"/><path d="M6 2 L4 10 L12 16 L8 22" stroke="#333" stroke-width="2" fill="none"/><circle cx="18" cy="6" r="2" fill="#f5b041"/><path d="M4 18 L10 22 L14 16" stroke="#d82040" stroke-width="2.5" fill="none"/></svg><svg style="position:absolute;left:1019px;top:90px;" width="24" height="24" viewBox="0 0 24 24"><rect x="1" y="1" width="5" height="5" fill="none" stroke="#4d4d4d" stroke-width="1.2"/><rect x="1" y="9" width="5" height="5" fill="none" stroke="#4d4d4d" stroke-width="1.2"/><rect x="1" y="17" width="5" height="5" fill="none" stroke="#4d4d4d" stroke-width="1.2"/><path d="M9 3 L20 3 M9 11 L12 11" stroke="#4d4d4d" stroke-width="1.4"/><circle cx="17" cy="17" r="6.5" fill="#d82040"/><path d="M13.5 17 L16 19.5 L20.5 14.5" stroke="#fff" stroke-width="1.8" fill="none"/></svg><div style="position:absolute;left:1050px;top:90px;width:1px;height:23px;background:#c9cbcd"></div><svg style="position:absolute;left:1058px;top:89px;" width="25" height="25" viewBox="0 0 25 25"><rect x="0" y="0" width="25" height="25" rx="3" fill="#d9ccb0"/><path d="M9 2 L9 22 M3 12 L9 12 M9 8 L16 4 M9 15 L16 20" stroke="#333" stroke-width="2.2" fill="none"/><rect x="16" y="1" width="8" height="4" fill="#d82040"/><rect x="15" y="18" width="5" height="5" fill="#d82040"/></svg><div style="position:absolute;left:1088px;top:87px;width:97px;height:31px;background:#fcfcfc;border:1px solid #c3c5c7;border-radius:3px;box-sizing:border-box"></div><div style="position:absolute;left:1096px;top:93.30px;font-size:14px;line-height:20px;color:#232627;font-weight:normal;white-space:nowrap;letter-spacing:-0.25px;">&lt; Default &gt;</div><svg style="position:absolute;left:1168px;top:98px;" width="14" height="9" viewBox="0 0 14 9"><path d="M1 1 L7 7 L13 1" stroke="#232627" stroke-width="1.2" fill="none"/></svg><div style="position:absolute;left:1191px;top:90px;width:1px;height:23px;background:#c9cbcd"></div><svg style="position:absolute;left:1200px;top:90px;" width="23" height="24" viewBox="0 0 23 24"><rect x="0" y="2" width="23" height="20" rx="2" fill="#4d4d4d"/><rect x="1.5" y="6" width="20" height="14.5" fill="#4d4d4d"/><path d="M2 6 L21 6" stroke="#eee" stroke-width="0.8"/><path d="M4 10 L8 13 L4 16" stroke="#fff" stroke-width="1.4" fill="none"/><path d="M9 17 L14 17" stroke="#fff" stroke-width="1.4"/><circle cx="3" cy="4" r="0.7" fill="#ccc"/><circle cx="5" cy="4" r="0.7" fill="#ccc"/><circle cx="7" cy="4" r="0.7" fill="#ccc"/></svg><div style="position:absolute;left:111px;top:123.5px;width:206px;height:32px;background:#fcfcfc;border:1px solid #c3c5c7;border-radius:3px;box-sizing:border-box"></div><svg style="position:absolute;left:300px;top:135.5px;" width="14" height="9" viewBox="0 0 14 9"><path d="M1 1 L7 7 L13 1" stroke="#232627" stroke-width="1.2" fill="none"/></svg><div style="position:absolute;left:120px;top:130.30px;font-size:14px;line-height:20px;color:#232627;font-weight:normal;white-space:nowrap;letter-spacing:-0.25px;">Track: use netclass width</div><div style="position:absolute;left:319px;top:124px;width:30px;height:30px;background:#c5e2f6;border:1px solid #3daee9;box-sizing:border-box;border-radius:2px"></div><svg style="position:absolute;left:322px;top:127px;" width="24" height="24" viewBox="0 0 24 24"><path d="M5 3 L5 18 Q5 21 8 21 L16 21 Q19 21 19 18 L19 3" stroke="#333" stroke-width="1.6" fill="none"/><path d="M9 9 L15 9 M9 13 L15 13" stroke="#333" stroke-width="1.3"/><circle cx="12" cy="21" r="2.4" fill="#1d8fd6"/></svg><div style="position:absolute;left:354px;top:126px;width:1px;height:26px;background:#c9cbcd"></div><div style="position:absolute;left:360px;top:123.5px;width:286px;height:32px;background:#fcfcfc;border:1px solid #c3c5c7;border-radius:3px;box-sizing:border-box"></div><svg style="position:absolute;left:629px;top:135.5px;" width="14" height="9" viewBox="0 0 14 9"><path d="M1 1 L7 7 L13 1" stroke="#232627" stroke-width="1.2" fill="none"/></svg><div style="position:absolute;left:369px;top:130.30px;font-size:14px;line-height:20px;color:#232627;font-weight:normal;white-space:nowrap;letter-spacing:-0.25px;">Via: use netclass sizes</div><div style="position:absolute;left:651px;top:126px;width:1px;height:26px;background:#c9cbcd"></div><div style="position:absolute;left:657px;top:123.5px;width:184px;height:32px;background:#fcfcfc;border:1px solid #c3c5c7;border-radius:3px;box-sizing:border-box"></div><svg style="position:absolute;left:824px;top:135.5px;" width="14" height="9" viewBox="0 0 14 9"><path d="M1 1 L7 7 L13 1" stroke="#232627" stroke-width="1.2" fill="none"/></svg><div style="position:absolute;left:664px;top:132px;width:14px;height:14px;background:#d03030;border:1px solid #333;box-sizing:border-box"></div><div style="position:absolute;left:680px;top:130.30px;font-size:14px;line-height:20px;color:#232627;font-weight:normal;white-space:nowrap;letter-spacing:-0.25px;">Top Layer (PgUp)</div><svg style="position:absolute;left:848px;top:127px;" width="20" height="24" viewBox="0 0 20 24"><path d="M10 12 L18 16 L10 20 L2 16 Z" fill="#bbb"/><path d="M10 8 L18 12 L10 16 L2 12 Z" fill="#d82040"/><path d="M10 2 L18 7 L10 12 L2 7 Z" fill="#1d8fd6"/></svg><div style="position:absolute;left:878px;top:126px;width:1px;height:26px;background:#c9cbcd"></div><div style="position:absolute;left:884px;top:123.5px;width:198px;height:32px;background:#fcfcfc;border:1px solid #c3c5c7;border-radius:3px;box-sizing:border-box"></div><svg style="position:absolute;left:1065px;top:135.5px;" width="14" height="9" viewBox="0 0 14 9"><path d="M1 1 L7 7 L13 1" stroke="#232627" stroke-width="1.2" fill="none"/></svg><div style="position:absolute;left:892px;top:130.30px;font-size:14px;line-height:20px;color:#232627;font-weight:normal;white-space:nowrap;letter-spacing:-0.25px;">1.0000 mm (39.37 mils)</div><div style="position:absolute;left:1088px;top:126px;width:1px;height:26px;background:#c9cbcd"></div><div style="position:absolute;left:1094px;top:123.5px;width:112px;height:32px;background:#fcfcfc;border:1px solid #c3c5c7;border-radius:3px;box-sizing:border-box"></div><svg style="position:absolute;left:1189px;top:135.5px;" width="14" height="9" viewBox="0 0 14 9"><path d="M1 1 L7 7 L13 1" stroke="#232627" stroke-width="1.2" fill="none"/></svg><div style="position:absolute;left:1102px;top:130.30px;font-size:14px;line-height:20px;color:#232627;font-weight:normal;white-space:nowrap;letter-spacing:-0.25px;">Zoom 1.50</div><div style="position:absolute;left:1212px;top:126px;width:1px;height:26px;background:#c9cbcd"></div><div style="position:absolute;left:1222px;top:131px;width:16px;height:16px;background:#fcfcfc;border:1px solid #b5b7b9;border-radius:3px;box-sizing:border-box"></div><div style="position:absolute;left:1242px;top:130.30px;font-size:14px;line-height:20px;color:#232627;font-weight:normal;white-space:nowrap;letter-spacing:-0.25px;">Override locks</div><div style="position:absolute;left:105px;top:158px;width:301px;height:901px;background:#e8e8e8"></div><div style="position:absolute;left:105px;top:158px;width:301px;height:17px;background:#c7c7c7"></div><div style="position:absolute;left:108px;top:156.80px;font-size:11.5px;line-height:20px;color:#3a3a3a;font-weight:normal;white-space:nowrap;">Properties</div><svg style="position:absolute;left:390px;top:160px;" width="12" height="12" viewBox="0 0 12 12"><rect x="0.5" y="0.5" width="11" height="11" rx="1.5" fill="none" stroke="#333" stroke-width="1"/><path d="M3 3 L9 9 M9 3 L3 9" stroke="#333" stroke-width="1.5"/></svg><div style="position:absolute;left:111px;top:180.30px;font-size:14px;line-height:20px;color:#232627;font-weight:normal;white-space:nowrap;letter-spacing:-0.25px;">Pad</div><div style="position:absolute;left:106px;top:204px;width:300px;height:860px;background:#e4e4e4;border:1px solid #d2d2d2;border-radius:4px 4px 0 0;box-sizing:border-box"></div><svg style="position:absolute;left:106.5px;top:213.0px;" width="14" height="8" viewBox="0 0 14 8"><path d="M1.5 1 L7 6.5 L12.5 1" stroke="#6a6a6a" stroke-width="1.4" fill="none"/></svg><div style="position:absolute;left:125.5px;top:207.30px;font-size:14px;line-height:20px;color:#232627;font-weight:bold;white-space:nowrap;letter-spacing:-0.25px;">Basic Properties</div><div style="position:absolute;left:122px;top:230px;width:134px;height:25px;background:#ffffff"></div><div style="position:absolute;left:257px;top:230px;width:147px;height:25px;background:#ffffff"></div><div style="position:absolute;left:126.5px;top:234.30px;font-size:14px;line-height:20px;color:#3b3e40;font-weight:normal;white-space:nowrap;letter-spacing:-0.25px;">Position X</div><div style="position:absolute;left:261.5px;top:234.30px;font-size:14px;line-height:20px;color:#3b3e40;font-weight:normal;white-space:nowrap;letter-spacing:-0.25px;">74.551125 mm</div><div style="position:absolute;left:122px;top:256px;width:134px;height:25px;background:#ffffff"></div><div style="position:absolute;left:257px;top:256px;width:147px;height:25px;background:#ffffff"></div><div style="position:absolute;left:126.5px;top:260.30px;font-size:14px;line-height:20px;color:#3b3e40;font-weight:normal;white-space:nowrap;letter-spacing:-0.25px;">Position Y</div><div style="position:absolute;left:261.5px;top:260.30px;font-size:14px;line-height:20px;color:#3b3e40;font-weight:normal;white-space:nowrap;letter-spacing:-0.25px;">87.877175 mm</div><div style="position:absolute;left:122px;top:282px;width:134px;height:25px;background:#ffffff"></div><div style="position:absolute;left:257px;top:282px;width:147px;height:25px;background:#ffffff"></div><div style="position:absolute;left:126.5px;top:286.30px;font-size:14px;line-height:20px;color:#3b3e40;font-weight:normal;white-space:nowrap;letter-spacing:-0.25px;">Net</div><div style="position:absolute;left:261.5px;top:286.30px;font-size:14px;line-height:20px;color:#3b3e40;font-weight:normal;white-space:nowrap;letter-spacing:-0.25px;">CHASSIS</div><div style="position:absolute;left:122px;top:308px;width:134px;height:25px;background:#ffffff"></div><div style="position:absolute;left:257px;top:308px;width:147px;height:25px;background:#ffffff"></div><div style="position:absolute;left:126.5px;top:312.30px;font-size:14px;line-height:20px;color:#3b3e40;font-weight:normal;white-space:nowrap;letter-spacing:-0.25px;">Orientation</div><div style="position:absolute;left:261.5px;top:312.30px;font-size:14px;line-height:20px;color:#3b3e40;font-weight:normal;white-space:nowrap;letter-spacing:-0.25px;">0°</div><svg style="position:absolute;left:106.5px;top:343.0px;" width="14" height="8" viewBox="0 0 14 8"><path d="M1.5 1 L7 6.5 L12.5 1" stroke="#6a6a6a" stroke-width="1.4" fill="none"/></svg><div style="position:absolute;left:125.5px;top:337.30px;font-size:14px;line-height:20px;color:#232627;font-weight:bold;white-space:nowrap;letter-spacing:-0.25px;">Pad Properties</div><div style="position:absolute;left:122px;top:360px;width:134px;height:25px;background:#ffffff"></div><div style="position:absolute;left:257px;top:360px;width:147px;height:25px;background:#ffffff"></div><div style="position:absolute;left:126.5px;top:364.30px;font-size:14px;line-height:20px;color:#3b3e40;font-weight:normal;white-space:nowrap;letter-spacing:-0.25px;">Pad Type</div><div style="position:absolute;left:261.5px;top:364.30px;font-size:14px;line-height:20px;color:#3b3e40;font-weight:normal;white-space:nowrap;letter-spacing:-0.25px;">Through-hole</div><div style="position:absolute;left:122px;top:386px;width:134px;height:25px;background:#ffffff"></div><div style="position:absolute;left:257px;top:386px;width:147px;height:25px;background:#ffffff"></div><div style="position:absolute;left:126.5px;top:390.30px;font-size:14px;line-height:20px;color:#3b3e40;font-weight:normal;white-space:nowrap;letter-spacing:-0.25px;">Pad Shape</div><div style="position:absolute;left:261.5px;top:390.30px;font-size:14px;line-height:20px;color:#3b3e40;font-weight:normal;white-space:nowrap;letter-spacing:-0.25px;">Circle</div><div style="position:absolute;left:122px;top:412px;width:134px;height:25px;background:#ffffff"></div><div style="position:absolute;left:257px;top:412px;width:147px;height:25px;background:#ffffff"></div><div style="position:absolute;left:126.5px;top:416.30px;font-size:14px;line-height:20px;color:#3b3e40;font-weight:normal;white-space:nowrap;letter-spacing:-0.25px;">Pad Number</div><div style="position:absolute;left:261.5px;top:416.30px;font-size:14px;line-height:20px;color:#3b3e40;font-weight:normal;white-space:nowrap;letter-spacing:-0.25px;">1</div><div style="position:absolute;left:122px;top:438px;width:134px;height:25px;background:#ffffff"></div><div style="position:absolute;left:257px;top:438px;width:147px;height:25px;background:#ffffff"></div><div style="position:absolute;left:126.5px;top:442.30px;font-size:14px;line-height:20px;color:#3b3e40;font-weight:normal;white-space:nowrap;letter-spacing:-0.25px;">Pin Name</div><div style="position:absolute;left:261.5px;top:442.30px;font-size:14px;line-height:20px;color:#3b3e40;font-weight:normal;white-space:nowrap;letter-spacing:-0.25px;">1</div><div style="position:absolute;left:122px;top:464px;width:134px;height:25px;background:#ffffff"></div><div style="position:absolute;left:257px;top:464px;width:147px;height:25px;background:#ffffff"></div><div style="position:absolute;left:126.5px;top:468.30px;font-size:14px;line-height:20px;color:#3b3e40;font-weight:normal;white-space:nowrap;letter-spacing:-0.25px;">Pin Type</div><div style="position:absolute;left:261.5px;top:468.30px;font-size:14px;line-height:20px;color:#3b3e40;font-weight:normal;white-space:nowrap;letter-spacing:-0.25px;">bidirectional</div><div style="position:absolute;left:122px;top:490px;width:134px;height:25px;background:#ffffff"></div><div style="position:absolute;left:257px;top:490px;width:147px;height:25px;background:#ffffff"></div><div style="position:absolute;left:126.5px;top:494.30px;font-size:14px;line-height:20px;color:#3b3e40;font-weight:normal;white-space:nowrap;letter-spacing:-0.25px;">Size X</div><div style="position:absolute;left:261.5px;top:494.30px;font-size:14px;line-height:20px;color:#3b3e40;font-weight:normal;white-space:nowrap;letter-spacing:-0.25px;">5 mm</div><div style="position:absolute;left:122px;top:516px;width:134px;height:25px;background:#ffffff"></div><div style="position:absolute;left:257px;top:516px;width:147px;height:25px;background:#ffffff"></div><div style="position:absolute;left:126.5px;top:520.30px;font-size:14px;line-height:20px;color:#3b3e40;font-weight:normal;white-space:nowrap;letter-spacing:-0.25px;">Hole Shape</div><div style="position:absolute;left:261.5px;top:520.30px;font-size:14px;line-height:20px;color:#3b3e40;font-weight:normal;white-space:nowrap;letter-spacing:-0.25px;">Round</div><div style="position:absolute;left:122px;top:542px;width:134px;height:25px;background:#ffffff"></div><div style="position:absolute;left:257px;top:542px;width:147px;height:25px;background:#ffffff"></div><div style="position:absolute;left:126.5px;top:546.30px;font-size:14px;line-height:20px;color:#3b3e40;font-weight:normal;white-space:nowrap;letter-spacing:-0.25px;">Hole Size X</div><div style="position:absolute;left:261.5px;top:546.30px;font-size:14px;line-height:20px;color:#3b3e40;font-weight:normal;white-space:nowrap;letter-spacing:-0.25px;">2.7 mm</div><div style="position:absolute;left:122px;top:568px;width:134px;height:25px;background:#ffffff"></div><div style="position:absolute;left:257px;top:568px;width:147px;height:25px;background:#ffffff"></div><div style="position:absolute;left:126.5px;top:572.30px;font-size:14px;line-height:20px;color:#3b3e40;font-weight:normal;white-space:nowrap;letter-spacing:-0.25px;">Fabrication Property</div><div style="position:absolute;left:261.5px;top:572.30px;font-size:14px;line-height:20px;color:#3b3e40;font-weight:normal;white-space:nowrap;letter-spacing:-0.25px;">None</div><div style="position:absolute;left:122px;top:594px;width:134px;height:25px;background:#ffffff"></div><div style="position:absolute;left:257px;top:594px;width:147px;height:25px;background:#ffffff"></div><div style="position:absolute;left:126.5px;top:598.30px;font-size:14px;line-height:20px;color:#3b3e40;font-weight:normal;white-space:nowrap;letter-spacing:-0.25px;">Copper Layers</div><div style="position:absolute;left:261.5px;top:598.30px;font-size:14px;line-height:20px;color:#3b3e40;font-weight:normal;white-space:nowrap;letter-spacing:-0.25px;">All copper layers</div><div style="position:absolute;left:122px;top:620px;width:134px;height:25px;background:#ffffff"></div><div style="position:absolute;left:257px;top:620px;width:147px;height:25px;background:#ffffff"></div><div style="position:absolute;left:126.5px;top:624.30px;font-size:14px;line-height:20px;color:#3b3e40;font-weight:normal;white-space:nowrap;letter-spacing:-0.25px;">Pad To Die Length</div><div style="position:absolute;left:261.5px;top:624.30px;font-size:14px;line-height:20px;color:#3b3e40;font-weight:normal;white-space:nowrap;letter-spacing:-0.25px;">0 mm</div><div style="position:absolute;left:122px;top:646px;width:134px;height:25px;background:#ffffff"></div><div style="position:absolute;left:257px;top:646px;width:147px;height:25px;background:#ffffff"></div><div style="position:absolute;left:126.5px;top:650.30px;font-size:14px;line-height:20px;color:#3b3e40;font-weight:normal;white-space:nowrap;letter-spacing:-0.25px;">Pad To Die Delay</div><div style="position:absolute;left:261.5px;top:650.30px;font-size:14px;line-height:20px;color:#3b3e40;font-weight:normal;white-space:nowrap;letter-spacing:-0.25px;">0 ps</div><svg style="position:absolute;left:106.5px;top:681.0px;" width="14" height="8" viewBox="0 0 14 8"><path d="M1.5 1 L7 6.5 L12.5 1" stroke="#6a6a6a" stroke-width="1.4" fill="none"/></svg><div style="position:absolute;left:125.5px;top:675.30px;font-size:14px;line-height:20px;color:#232627;font-weight:bold;white-space:nowrap;letter-spacing:-0.25px;">Post-machining Properties</div><div style="position:absolute;left:122px;top:698px;width:134px;height:25px;background:#ffffff"></div><div style="position:absolute;left:257px;top:698px;width:147px;height:25px;background:#ffffff"></div><div style="position:absolute;left:126.5px;top:702.30px;font-size:14px;line-height:20px;color:#3b3e40;font-weight:normal;white-space:nowrap;letter-spacing:-0.25px;">Top Post-machining</div><div style="position:absolute;left:261.5px;top:702.30px;font-size:14px;line-height:20px;color:#3b3e40;font-weight:normal;white-space:nowrap;letter-spacing:-0.25px;">Not post-machined</div><div style="position:absolute;left:122px;top:724px;width:134px;height:25px;background:#ffffff"></div><div style="position:absolute;left:257px;top:724px;width:147px;height:25px;background:#ffffff"></div><div style="position:absolute;left:126.5px;top:728.30px;font-size:14px;line-height:20px;color:#3b3e40;font-weight:normal;white-space:nowrap;letter-spacing:-0.25px;">Bottom Post-machi...</div><div style="position:absolute;left:261.5px;top:728.30px;font-size:14px;line-height:20px;color:#3b3e40;font-weight:normal;white-space:nowrap;letter-spacing:-0.25px;">Not post-machined</div><svg style="position:absolute;left:106.5px;top:759.0px;" width="14" height="8" viewBox="0 0 14 8"><path d="M1.5 1 L7 6.5 L12.5 1" stroke="#6a6a6a" stroke-width="1.4" fill="none"/></svg><div style="position:absolute;left:125.5px;top:753.30px;font-size:14px;line-height:20px;color:#232627;font-weight:bold;white-space:nowrap;letter-spacing:-0.25px;">Backdrill Properties</div><div style="position:absolute;left:122px;top:776px;width:134px;height:25px;background:#ffffff"></div><div style="position:absolute;left:257px;top:776px;width:147px;height:25px;background:#ffffff"></div><div style="position:absolute;left:126.5px;top:780.30px;font-size:14px;line-height:20px;color:#3b3e40;font-weight:normal;white-space:nowrap;letter-spacing:-0.25px;">Backdrill Mode</div><div style="position:absolute;left:261.5px;top:780.30px;font-size:14px;line-height:20px;color:#3b3e40;font-weight:normal;white-space:nowrap;letter-spacing:-0.25px;">No backdrill</div><svg style="position:absolute;left:106.5px;top:811.0px;" width="14" height="8" viewBox="0 0 14 8"><path d="M1.5 1 L7 6.5 L12.5 1" stroke="#6a6a6a" stroke-width="1.4" fill="none"/></svg><div style="position:absolute;left:125.5px;top:805.30px;font-size:14px;line-height:20px;color:#232627;font-weight:bold;white-space:nowrap;letter-spacing:-0.25px;">Overrides</div><div style="position:absolute;left:122px;top:828px;width:134px;height:25px;background:#ffffff"></div><div style="position:absolute;left:257px;top:828px;width:147px;height:25px;background:#ffffff"></div><div style="position:absolute;left:126.5px;top:832.30px;font-size:14px;line-height:20px;color:#3b3e40;font-weight:normal;white-space:nowrap;letter-spacing:-0.25px;">Clearance Override</div><div style="position:absolute;left:122px;top:854px;width:134px;height:25px;background:#ffffff"></div><div style="position:absolute;left:257px;top:854px;width:147px;height:25px;background:#ffffff"></div><div style="position:absolute;left:126.5px;top:858.30px;font-size:14px;line-height:20px;color:#3b3e40;font-weight:normal;white-space:nowrap;letter-spacing:-0.25px;">Soldermask Margin ..</div><div style="position:absolute;left:122px;top:880px;width:134px;height:25px;background:#ffffff"></div><div style="position:absolute;left:257px;top:880px;width:147px;height:25px;background:#ffffff"></div><div style="position:absolute;left:126.5px;top:884.30px;font-size:14px;line-height:20px;color:#3b3e40;font-weight:normal;white-space:nowrap;letter-spacing:-0.25px;">Solderpaste Margin..</div><div style="position:absolute;left:122px;top:906px;width:134px;height:25px;background:#ffffff"></div><div style="position:absolute;left:257px;top:906px;width:147px;height:25px;background:#ffffff"></div><div style="position:absolute;left:126.5px;top:910.30px;font-size:14px;line-height:20px;color:#3b3e40;font-weight:normal;white-space:nowrap;letter-spacing:-0.25px;">Solderpaste Margin..</div><div style="position:absolute;left:122px;top:932px;width:134px;height:25px;background:#ffffff"></div><div style="position:absolute;left:257px;top:932px;width:147px;height:25px;background:#ffffff"></div><div style="position:absolute;left:126.5px;top:936.30px;font-size:14px;line-height:20px;color:#3b3e40;font-weight:normal;white-space:nowrap;letter-spacing:-0.25px;">Zone Connection St..</div><div style="position:absolute;left:261.5px;top:936.30px;font-size:14px;line-height:20px;color:#3b3e40;font-weight:normal;white-space:nowrap;letter-spacing:-0.25px;">Inherited</div><div style="position:absolute;left:122px;top:958px;width:134px;height:25px;background:#ffffff"></div><div style="position:absolute;left:257px;top:958px;width:147px;height:25px;background:#ffffff"></div><div style="position:absolute;left:126.5px;top:962.30px;font-size:14px;line-height:20px;color:#3b3e40;font-weight:normal;white-space:nowrap;letter-spacing:-0.25px;">Thermal Relief Spok..</div><div style="position:absolute;left:122px;top:984px;width:134px;height:25px;background:#ffffff"></div><div style="position:absolute;left:257px;top:984px;width:147px;height:25px;background:#ffffff"></div><div style="position:absolute;left:126.5px;top:988.30px;font-size:14px;line-height:20px;color:#3b3e40;font-weight:normal;white-space:nowrap;letter-spacing:-0.25px;">Thermal Relief Spok..</div><div style="position:absolute;left:261.5px;top:988.30px;font-size:14px;line-height:20px;color:#3b3e40;font-weight:normal;white-space:nowrap;letter-spacing:-0.25px;">45°</div><div style="position:absolute;left:122px;top:1010px;width:134px;height:25px;background:#ffffff"></div><div style="position:absolute;left:257px;top:1010px;width:147px;height:25px;background:#ffffff"></div><div style="position:absolute;left:126.5px;top:1014.30px;font-size:14px;line-height:20px;color:#3b3e40;font-weight:normal;white-space:nowrap;letter-spacing:-0.25px;">Thermal Relief Gap</div><svg style="position:absolute;left:106.5px;top:1045.0px;" width="14" height="8" viewBox="0 0 14 8"><path d="M1.5 1 L7 6.5 L12.5 1" stroke="#6a6a6a" stroke-width="1.4" fill="none"/></svg><div style="position:absolute;left:125.5px;top:1039.30px;font-size:14px;line-height:20px;color:#232627;font-weight:bold;white-space:nowrap;letter-spacing:-0.25px;">Teardrops</div><div style="position:absolute;left:105px;top:1059px;width:301px;height:10px;background:#fcfcfc"></div><div style="position:absolute;left:405px;top:158px;width:6px;height:901px;background:#e0e1e2"></div><div style="position:absolute;left:411px;top:158px;width:35px;height:901px;background:#fcfcfc"></div><div style="position:absolute;left:413px;top:163px;width:30px;height:30px;background:#c5e2f6;border:1px solid #3daee9;box-sizing:border-box;border-radius:2px"></div><div style="position:absolute;left:413px;top:195px;width:30px;height:30px;background:#c5e2f6;border:1px solid #3daee9;box-sizing:border-box;border-radius:2px"></div><svg style="position:absolute;left:415px;top:165px;" width="26" height="26" viewBox="0 0 26 26"><circle cx="4" cy="4" r="1.2" fill="#4d4d4d"/><circle cx="4" cy="9" r="1.2" fill="#4d4d4d"/><circle cx="4" cy="14" r="1.2" fill="#4d4d4d"/><circle cx="4" cy="19" r="1.2" fill="#4d4d4d"/><circle cx="4" cy="24" r="1.2" fill="#4d4d4d"/><circle cx="9" cy="4" r="1.2" fill="#4d4d4d"/><circle cx="9" cy="9" r="1.2" fill="#4d4d4d"/><circle cx="9" cy="14" r="1.2" fill="#4d4d4d"/><circle cx="9" cy="19" r="1.2" fill="#4d4d4d"/><circle cx="9" cy="24" r="1.2" fill="#4d4d4d"/><circle cx="14" cy="4" r="1.2" fill="#4d4d4d"/><circle cx="14" cy="9" r="1.2" fill="#4d4d4d"/><circle cx="14" cy="14" r="1.2" fill="#4d4d4d"/><circle cx="14" cy="19" r="1.2" fill="#4d4d4d"/><circle cx="14" cy="24" r="1.2" fill="#4d4d4d"/><circle cx="19" cy="4" r="1.2" fill="#4d4d4d"/><circle cx="19" cy="9" r="1.2" fill="#4d4d4d"/><circle cx="19" cy="14" r="1.2" fill="#4d4d4d"/><circle cx="19" cy="19" r="1.2" fill="#4d4d4d"/><circle cx="19" cy="24" r="1.2" fill="#4d4d4d"/><circle cx="24" cy="4" r="1.2" fill="#4d4d4d"/><circle cx="24" cy="9" r="1.2" fill="#4d4d4d"/><circle cx="24" cy="14" r="1.2" fill="#4d4d4d"/><circle cx="24" cy="19" r="1.2" fill="#4d4d4d"/><circle cx="24" cy="24" r="1.2" fill="#4d4d4d"/></svg><svg style="position:absolute;left:415px;top:197px;" width="26" height="26" viewBox="0 0 26 26"><circle cx="4" cy="4" r="1.1" fill="#4d4d4d"/><circle cx="4" cy="9" r="1.1" fill="#4d4d4d"/><circle cx="4" cy="14" r="1.1" fill="#4d4d4d"/><circle cx="4" cy="19" r="1.1" fill="#4d4d4d"/><circle cx="9" cy="4" r="1.1" fill="#4d4d4d"/><circle cx="9" cy="9" r="1.1" fill="#4d4d4d"/><circle cx="9" cy="14" r="1.1" fill="#4d4d4d"/><circle cx="14" cy="4" r="1.1" fill="#4d4d4d"/><circle cx="14" cy="9" r="1.1" fill="#4d4d4d"/><circle cx="19" cy="4" r="1.1" fill="#4d4d4d"/><circle cx="7.3" cy="23.799999999999997" r="0.7" fill="#4d4d4d"/><circle cx="10.6" cy="20.5" r="0.7" fill="#4d4d4d"/><circle cx="10.6" cy="23.799999999999997" r="0.7" fill="#4d4d4d"/><circle cx="13.899999999999999" cy="17.2" r="0.7" fill="#4d4d4d"/><circle cx="13.899999999999999" cy="20.5" r="0.7" fill="#4d4d4d"/><circle cx="13.899999999999999" cy="23.799999999999997" r="0.7" fill="#4d4d4d"/><circle cx="17.2" cy="13.899999999999999" r="0.7" fill="#4d4d4d"/><circle cx="17.2" cy="17.2" r="0.7" fill="#4d4d4d"/><circle cx="17.2" cy="20.5" r="0.7" fill="#4d4d4d"/><circle cx="17.2" cy="23.799999999999997" r="0.7" fill="#4d4d4d"/><circle cx="20.5" cy="10.6" r="0.7" fill="#4d4d4d"/><circle cx="20.5" cy="13.899999999999999" r="0.7" fill="#4d4d4d"/><circle cx="20.5" cy="17.2" r="0.7" fill="#4d4d4d"/><circle cx="20.5" cy="20.5" r="0.7" fill="#4d4d4d"/><circle cx="20.5" cy="23.799999999999997" r="0.7" fill="#4d4d4d"/><circle cx="23.799999999999997" cy="7.3" r="0.7" fill="#4d4d4d"/><circle cx="23.799999999999997" cy="10.6" r="0.7" fill="#4d4d4d"/><circle cx="23.799999999999997" cy="13.899999999999999" r="0.7" fill="#4d4d4d"/><circle cx="23.799999999999997" cy="17.2" r="0.7" fill="#4d4d4d"/><circle cx="23.799999999999997" cy="20.5" r="0.7" fill="#4d4d4d"/><circle cx="23.799999999999997" cy="23.799999999999997" r="0.7" fill="#4d4d4d"/><path d="M2 23 L23 2" stroke="#4d4d4d" stroke-width="1.2"/></svg><svg style="position:absolute;left:415px;top:230px;" width="26" height="26" viewBox="0 0 26 26"><path d="M3 2 L3 23 L24 23" stroke="#4d4d4d" stroke-width="1.3" fill="none"/><path d="M3 23 L20 5" stroke="#4d4d4d" stroke-width="1.2"/><circle cx="21" cy="4" r="2" fill="#d82040"/><text x="7" y="12" font-size="8" fill="#4d4d4d" font-family="Liberation Sans">r</text><text x="14" y="20" font-size="8" fill="#4d4d4d" font-style="italic" font-family="Liberation Sans">θ</text></svg><svg style="position:absolute;left:414px;top:262px;" width="28" height="26" viewBox="0 0 28 26"><text x="1" y="12" font-size="11" font-weight="bold" fill="#4d4d4d" font-family="Liberation Sans">mm</text><path d="M3 17 L23 17 M3 17 L7 14 M3 17 L7 20 M23 17 L19 14 M23 17 L19 20" stroke="#4d4d4d" stroke-width="1.3" fill="none"/><path d="M27 25 L21 25 L27 19 Z" fill="#232627"/></svg><svg style="position:absolute;left:414px;top:294px;" width="28" height="26" viewBox="0 0 28 26"><path d="M11 4 L11 14 M6 9 L16 9" stroke="#1d8fd6" stroke-width="2.2"/><path d="M12 10 L20 18 L16 18 L18 22 L16 23 L14 19 L12 21 Z" fill="#4d4d4d"/><path d="M27 25 L21 25 L27 19 Z" fill="#232627"/></svg><div style="position:absolute;left:415px;top:326px;width:26px;height:1px;background:#c9cbcd"></div><svg style="position:absolute;left:414px;top:334px;" width="28" height="26" viewBox="0 0 28 26"><path d="M3 3 L3 23 L24 23" stroke="#4d4d4d" stroke-width="1.5" fill="none"/><path d="M3 20 L8 8 L13 17 L20 12" stroke="#4d4d4d" stroke-width="1.2" fill="none"/><path d="M27 25 L21 25 L27 19 Z" fill="#232627"/></svg><div style="position:absolute;left:415px;top:367px;width:26px;height:1px;background:#c9cbcd"></div><div style="position:absolute;left:413px;top:372px;width:30px;height:30px;background:#c5e2f6;border:1px solid #3daee9;box-sizing:border-box;border-radius:2px"></div><svg style="position:absolute;left:415px;top:374px;" width="26" height="26" viewBox="0 0 26 26"><path d="M5 5 L21 21 M5 21 L21 5 M5 5 L21 10" stroke="#4d4d4d" stroke-width="1.2"/><circle cx="5" cy="5" r="2.5" fill="#fff" stroke="#4d4d4d"/><circle cx="21" cy="21" r="2.5" fill="#fff" stroke="#4d4d4d"/><circle cx="5" cy="21" r="2.5" fill="#fff" stroke="#4d4d4d"/><circle cx="21" cy="5" r="2.5" fill="#fff" stroke="#4d4d4d"/></svg><svg style="position:absolute;left:415px;top:407px;" width="26" height="26" viewBox="0 0 26 26"><path d="M2 20 L22 2 M5 24 L24 7" stroke="#4d4d4d" stroke-width="1.2"/><circle cx="8" cy="16" r="2.3" fill="#fff" stroke="#4d4d4d"/><circle cx="17" cy="6" r="2.3" fill="#fff" stroke="#4d4d4d"/><circle cx="9" cy="20" r="2.3" fill="#fff" stroke="#4d4d4d"/><circle cx="21" cy="12" r="2.3" fill="#fff" stroke="#4d4d4d"/></svg><div style="position:absolute;left:415px;top:440px;width:26px;height:1px;background:#c9cbcd"></div><div style="position:absolute;left:413px;top:446px;width:30px;height:30px;background:#c5e2f6;border:1px solid #3daee9;box-sizing:border-box;border-radius:2px"></div><svg style="position:absolute;left:415px;top:448px;" width="26" height="26" viewBox="0 0 26 26"><path d="M2 4 L9 4 L15 10 L24 10 M2 12 L8 12 L14 18 L24 18 M2 20 L10 20 L14 24" stroke="#4d4d4d" stroke-width="1.5" fill="none"/><path d="M3 2 L10 2 L16 7 L24 14 M14 12 L24 22" stroke="#d82040" stroke-width="1.8" fill="none"/><circle cx="9" cy="13" r="2.5" fill="#fff" stroke="#f39c12" stroke-width="1.4"/></svg><svg style="position:absolute;left:415px;top:480px;" width="26" height="26" viewBox="0 0 26 26"><path d="M14 24 L14 8 Q14 3 9 3 L5 3 M19 24 L19 8 Q19 2 12 1" stroke="#999" stroke-width="1.6" fill="none"/><path d="M6 10 L6 24" stroke="#e8a0b0" stroke-width="2"/><path d="M6 10 L24 10" stroke="#7ab8e0" stroke-width="2.5"/><circle cx="6" cy="10" r="2.5" fill="#fff" stroke="#f39c12" stroke-width="1.3"/></svg><div style="position:absolute;left:415px;top:513px;width:26px;height:1px;background:#c9cbcd"></div><div style="position:absolute;left:413px;top:519px;width:30px;height:30px;background:#c5e2f6;border:1px solid #3daee9;box-sizing:border-box;border-radius:2px"></div><svg style="position:absolute;left:415px;top:521px;" width="26" height="26" viewBox="0 0 26 26"><path d="M2 10 L10 10 L10 3 L24 3 L24 23 L2 23 Z" fill="#1d8fd6"/><circle cx="17" cy="13" r="3" fill="#fff"/><path d="M17 13 L23 13" stroke="#333" stroke-width="1.5"/></svg><svg style="position:absolute;left:415px;top:553px;" width="26" height="26" viewBox="0 0 26 26"><path d="M2 12 L9 12 L9 4 L23 4 L23 23 L2 23 Z" fill="none" stroke="#1d8fd6" stroke-width="1.4" stroke-dasharray="2,2"/><circle cx="17" cy="13" r="1.8" fill="#333"/><path d="M17 13 L21 13" stroke="#333" stroke-width="1.3"/></svg><div style="position:absolute;left:415px;top:586px;width:26px;height:1px;background:#c9cbcd"></div><svg style="position:absolute;left:415px;top:594px;" width="26" height="26" viewBox="0 0 26 26"><rect x="2" y="5" width="22" height="17" fill="none" stroke="#4d4d4d" stroke-width="1.3"/><rect x="4" y="1" width="5" height="6" fill="#1d8fd6"/><rect x="11" y="1" width="5" height="6" fill="#1d8fd6"/><rect x="18" y="1" width="5" height="6" fill="#1d8fd6"/><rect x="4" y="19" width="5" height="6" fill="none" stroke="#1d8fd6" stroke-width="1.2"/><rect x="11" y="19" width="5" height="6" fill="none" stroke="#1d8fd6" stroke-width="1.2"/><rect x="18" y="19" width="5" height="6" fill="none" stroke="#1d8fd6" stroke-width="1.2"/><path d="M2 24 L24 4" stroke="#4d4d4d" stroke-width="1.4"/></svg><svg style="position:absolute;left:415px;top:626px;" width="26" height="26" viewBox="0 0 26 26"><circle cx="12" cy="14" r="8" fill="none" stroke="#f39c12" stroke-width="5"/><circle cx="14" cy="13" r="6" fill="none" stroke="#ddd" stroke-width="2"/><path d="M2 24 L24 2" stroke="#4d4d4d" stroke-width="1.4"/></svg><svg style="position:absolute;left:415px;top:658px;" width="26" height="26" viewBox="0 0 26 26"><path d="M2 12 L24 12" stroke="#1d8fd6" stroke-width="3.5"/><path d="M13 2 L13 12" stroke="#d82040" stroke-width="3.5"/><path d="M11 12 L11 24 M15 12 L15 24" stroke="#d82040" stroke-width="1.4"/><path d="M2 24 L24 2" stroke="#4d4d4d" stroke-width="1.4"/></svg><div style="position:absolute;left:415px;top:691px;width:26px;height:1px;background:#c9cbcd"></div><div style="position:absolute;left:413px;top:697px;width:30px;height:30px;background:#c5e2f6;border:1px solid #3daee9;box-sizing:border-box;border-radius:2px"></div><svg style="position:absolute;left:415px;top:699px;" width="26" height="26" viewBox="0 0 26 26"><path d="M13 11 L23 16 L13 22 L3 16 Z" fill="#f39c12"/><path d="M13 7 L23 12 L13 18 L3 12 Z" fill="#333"/><path d="M13 2 L23 8 L13 14 L3 8 Z" fill="#1d8fd6"/></svg><div style="position:absolute;left:413px;top:729px;width:30px;height:30px;background:#c5e2f6;border:1px solid #3daee9;box-sizing:border-box;border-radius:2px"></div><svg style="position:absolute;left:415px;top:731px;" width="26" height="26" viewBox="0 0 26 26"><path d="M3 23 L20 6" stroke="#4d4d4d" stroke-width="3"/><path d="M18 3 L23 8 L20 9 L17 6 Z" fill="#4d4d4d"/><path d="M6 3 L23 21" stroke="#1d8fd6" stroke-width="3.2"/><path d="M2 5 Q3 1 7 2 L5 6 Z" fill="#1d8fd6"/></svg><div style="position:absolute;left:1721px;top:158px;width:35px;height:901px;background:#fcfcfc"></div><div style="position:absolute;left:1756px;top:158px;width:5px;height:901px;background:#e0e1e2"></div><svg style="position:absolute;left:1725px;top:165.5px;" width="28" height="26" viewBox="0 0 28 26"><path d="M8 4 L18 14 L13 14 L15 19 L13 20 L11 15 L8 18 Z" fill="#4d4d4d"/><path d="M27 25 L21 25 L27 19 Z" fill="#232627"/></svg><svg style="position:absolute;left:1725px;top:196.5px;" width="28" height="26" viewBox="0 0 28 26"><path d="M3 3 L23 23 M23 3 L3 23" stroke="#4d4d4d" stroke-width="1.2"/><circle cx="13" cy="13" r="2.5" fill="#fff" stroke="#4d4d4d"/></svg><div style="position:absolute;left:1727px;top:227px;width:24px;height:1px;background:#c9cbcd"></div><svg style="position:absolute;left:1725px;top:237.5px;" width="28" height="26" viewBox="0 0 28 26"><rect x="3" y="5" width="22" height="16" fill="none" stroke="#333" stroke-width="1"/><rect x="4" y="2" width="4" height="6" fill="#1d8fd6"/><rect x="10" y="2" width="4" height="6" fill="#1d8fd6"/><rect x="16" y="2" width="4" height="6" fill="#1d8fd6"/><rect x="4" y="18" width="4" height="6" fill="#1d8fd6"/><rect x="10" y="18" width="4" height="6" fill="#1d8fd6"/><rect x="16" y="18" width="4" height="6" fill="#1d8fd6"/><path d="M5 6 L22 6 M5 20 L22 20" stroke="#1d8fd6" stroke-width="2"/></svg><svg style="position:absolute;left:1725px;top:270.5px;" width="28" height="26" viewBox="0 0 28 26"><path d="M2 22 L9 14 L16 14 L24 2" stroke="#1d8fd6" stroke-width="2" fill="none"/><path d="M27 25 L21 25 L27 19 Z" fill="#232627"/></svg><svg style="position:absolute;left:1725px;top:302.5px;" width="28" height="26" viewBox="0 0 28 26"><path d="M1 16 Q1 20 4 18 L4 8 Q6 4 8 8 L8 16 Q10 20 12 16 L12 8 Q14 4 16 8 L16 16 Q18 20 20 16 L20 10 Q22 8 24 12" stroke="#1d8fd6" stroke-width="2" fill="none"/><path d="M27 25 L21 25 L27 19 Z" fill="#232627"/></svg><svg style="position:absolute;left:1725px;top:334.5px;" width="28" height="26" viewBox="0 0 28 26"><circle cx="13" cy="13" r="4.5" fill="none" stroke="#f39c12" stroke-width="4"/></svg><svg style="position:absolute;left:1725px;top:366.5px;" width="28" height="26" viewBox="0 0 28 26"><path d="M3 12 L11 12 L11 5 L23 5 L23 23 L3 23 Z" fill="#1d8fd6"/><circle cx="17" cy="14" r="2.6" fill="#fff"/><path d="M17 14 L22 14" stroke="#333" stroke-width="1.4"/></svg><svg style="position:absolute;left:1725px;top:398.5px;" width="28" height="26" viewBox="0 0 28 26"><path d="M3 23 L3 14 L10 14 L10 4 L23 4 L23 23 Z" fill="none" stroke="#4d4d4d" stroke-width="1.4"/><path d="M5 22 L22 6 M3 18 L9 12 M10 22 L22 10 M15 22 L22 15 M12 8 L16 4" stroke="#4d4d4d" stroke-width="1.5"/></svg><div style="position:absolute;left:1727px;top:432px;width:24px;height:1px;background:#c9cbcd"></div><svg style="position:absolute;left:1725px;top:439.5px;" width="28" height="26" viewBox="0 0 28 26"><path d="M3 23 L23 3" stroke="#4d4d4d" stroke-width="1.6"/></svg><svg style="position:absolute;left:1725px;top:471.5px;" width="28" height="26" viewBox="0 0 28 26"><path d="M4 23 Q4 6 22 3" stroke="#4d4d4d" stroke-width="1.6" fill="none"/></svg><svg style="position:absolute;left:1725px;top:503.5px;" width="28" height="26" viewBox="0 0 28 26"><rect x="4" y="5" width="19" height="16" fill="#d0d0d0" stroke="#4d4d4d" stroke-width="1.6"/></svg><svg style="position:absolute;left:1725px;top:535.5px;" width="28" height="26" viewBox="0 0 28 26"><circle cx="13" cy="13" r="9" fill="#d0d0d0" stroke="#4d4d4d" stroke-width="1.6"/></svg><svg style="position:absolute;left:1725px;top:567.5px;" width="28" height="26" viewBox="0 0 28 26"><path d="M5 2 L23 6 L22 21 L7 24 L13 12 Z" fill="#c8c8c8" stroke="#4d4d4d" stroke-width="1.8" stroke-linejoin="round"/></svg><svg style="position:absolute;left:1725px;top:599.5px;" width="28" height="26" viewBox="0 0 28 26"><path d="M2 14 Q10 10 14 14 Q20 10 24 12 M14 14 Q10 18 10 24 M14 14 Q16 6 18 4" stroke="#1d8fd6" stroke-width="1.5" fill="none"/><circle cx="3" cy="14" r="1.6" fill="#1d8fd6"/><circle cx="24" cy="12" r="1.6" fill="#1d8fd6"/><path d="M11 24 Q12 16 18 10" stroke="#333" stroke-width="1.8" fill="none"/></svg><svg style="position:absolute;left:1725px;top:631.5px;" width="28" height="26" viewBox="0 0 28 26"><rect x="2" y="3" width="22" height="20" rx="2" fill="#4d4d4d"/><path d="M4 20 L10 12 L14 17 L17 14 L22 20 Z" fill="#fff"/><circle cx="17" cy="8" r="2.5" fill="#fff"/></svg><svg style="position:absolute;left:1725px;top:663.5px;" width="28" height="26" viewBox="0 0 28 26"><path d="M4 5 L23 5 M13.5 5 L13.5 24" stroke="#4d4d4d" stroke-width="3.6" fill="none"/></svg><svg style="position:absolute;left:1725px;top:695.5px;" width="28" height="26" viewBox="0 0 28 26"><rect x="3" y="4" width="20" height="17" fill="#d0d0d0" stroke="#4d4d4d" stroke-width="1.6"/><path d="M7 9 L19 9 M7 12 L19 12 M7 15 L15 15" stroke="#4d4d4d" stroke-width="1.2"/></svg><svg style="position:absolute;left:1725px;top:727.5px;" width="28" height="26" viewBox="0 0 28 26"><rect x="2" y="2" width="23" height="22" fill="none" stroke="#4d4d4d" stroke-width="1.4"/><path d="M2 8 L25 8 M2 13 L25 13 M2 18 L25 18 M9 2 L9 24 M17 2 L17 24" stroke="#4d4d4d" stroke-width="1.2"/><rect x="2" y="2" width="23" height="6" fill="#bbb" opacity="0.6"/></svg><svg style="position:absolute;left:1725px;top:759.5px;" width="28" height="26" viewBox="0 0 28 26"><circle cx="3" cy="4" r="2.5" fill="#1d8fd6"/><path d="M3 4 L23 4 M21 7 L21 20" stroke="#4d4d4d" stroke-width="1.2"/><path d="M21 7 L19 10 M21 7 L23 10 M21 20 L19 17 M21 20 L23 17" stroke="#4d4d4d" stroke-width="1"/><circle cx="11" cy="21" r="2.5" fill="#1d8fd6"/><path d="M11 21 L22 21" stroke="#4d4d4d" stroke-width="1.2"/><path d="M27 25 L21 25 L27 19 Z" fill="#232627"/></svg><svg style="position:absolute;left:1725px;top:791.5px;" width="28" height="26" viewBox="0 0 28 26"><path d="M5 3 L5 23 M8 3 L8 23 M11 3 L11 23 M14 3 L14 23 M18 3 L18 23 M21 3 L21 23" stroke="#4d4d4d" stroke-width="2"/></svg><svg style="position:absolute;left:1725px;top:823.5px;" width="28" height="26" viewBox="0 0 28 26"><path d="M5 2 L16 13 L11 13 L13 18 L11 19 L9 14 L5 18 Z" fill="#4d4d4d"/><circle cx="17" cy="18" r="6" fill="#d82040"/><path d="M14.5 15.5 L19.5 20.5 M19.5 15.5 L14.5 20.5" stroke="#fff" stroke-width="1.6"/></svg><div style="position:absolute;left:1727px;top:855px;width:24px;height:1px;background:#c9cbcd"></div><svg style="position:absolute;left:1725px;top:864.5px;" width="28" height="26" viewBox="0 0 28 26"><circle cx="3" cy="3" r="1" fill="#4d4d4d"/><circle cx="3" cy="8" r="1" fill="#4d4d4d"/><circle cx="3" cy="13" r="1" fill="#4d4d4d"/><circle cx="3" cy="18" r="1" fill="#4d4d4d"/><circle cx="3" cy="23" r="1" fill="#4d4d4d"/><circle cx="8" cy="3" r="1" fill="#4d4d4d"/><circle cx="8" cy="8" r="1" fill="#4d4d4d"/><circle cx="8" cy="13" r="1" fill="#4d4d4d"/><circle cx="8" cy="18" r="1" fill="#4d4d4d"/><circle cx="8" cy="23" r="1" fill="#4d4d4d"/><circle cx="13" cy="3" r="1" fill="#4d4d4d"/><circle cx="13" cy="8" r="1" fill="#4d4d4d"/><circle cx="13" cy="13" r="1" fill="#4d4d4d"/><circle cx="13" cy="18" r="1" fill="#4d4d4d"/><circle cx="13" cy="23" r="1" fill="#4d4d4d"/><circle cx="18" cy="3" r="1" fill="#4d4d4d"/><circle cx="18" cy="8" r="1" fill="#4d4d4d"/><circle cx="18" cy="13" r="1" fill="#4d4d4d"/><circle cx="18" cy="18" r="1" fill="#4d4d4d"/><circle cx="18" cy="23" r="1" fill="#4d4d4d"/><circle cx="23" cy="3" r="1" fill="#4d4d4d"/><circle cx="23" cy="8" r="1" fill="#4d4d4d"/><circle cx="23" cy="13" r="1" fill="#4d4d4d"/><circle cx="23" cy="18" r="1" fill="#4d4d4d"/><circle cx="23" cy="23" r="1" fill="#4d4d4d"/><path d="M4 13 L20 13 M12 5 L12 21" stroke="#1d8fd6" stroke-width="2"/><path d="M27 25 L21 25 L27 19 Z" fill="#232627"/></svg><svg style="position:absolute;left:1725px;top:896.5px;" width="28" height="26" viewBox="0 0 28 26"><circle cx="13" cy="13" r="7" fill="none" stroke="#1d8fd6" stroke-width="2"/><path d="M3 3 L23 23 M23 3 L3 23" stroke="#4d4d4d" stroke-width="2"/></svg><svg style="position:absolute;left:1725px;top:928.5px;" width="28" height="26" viewBox="0 0 28 26"><path d="M3 19 L17 5 L23 11 L9 25 Z" fill="none" stroke="#4d4d4d" stroke-width="1.8" stroke-linejoin="round"/><path d="M8 16 L10 18 M11 13 L14 16 M14 10 L16 12 M17 7 L20 10" stroke="#4d4d4d" stroke-width="1.3"/></svg><div style="position:absolute;left:1761px;top:158px;width:297px;height:901px;background:#e8e8e8"></div><div style="position:absolute;left:1761px;top:158px;width:297px;height:17px;background:#c7c7c7"></div><div style="position:absolute;left:1764px;top:156.30px;font-size:11.5px;line-height:20px;color:#3a3a3a;font-weight:normal;white-space:nowrap;">Appearance</div><div style="position:absolute;left:1761px;top:181px;width:297px;height:32px;background:#eff0f1"></div><div style="position:absolute;left:1814px;top:180px;width:105px;height:32px;background:#cfd0d1"></div><div style="position:absolute;left:1762px;top:179px;width:53px;height:33px;background:#eff0f1"></div><div style="position:absolute;left:1762px;top:179px;width:53px;height:2px;background:#3daee9"></div><div style="position:absolute;left:1761px;top:212px;width:297px;height:1px;background:#c9cbcd"></div><div style="position:absolute;left:1768px;top:187.30px;font-size:14px;line-height:20px;color:#232627;font-weight:normal;white-space:nowrap;letter-spacing:-0.25px;">Layers</div><div style="position:absolute;left:1822px;top:187.30px;font-size:14px;line-height:20px;color:#232627;font-weight:normal;white-space:nowrap;letter-spacing:-0.25px;">Objects</div><div style="position:absolute;left:1882px;top:187.30px;font-size:14px;line-height:20px;color:#232627;font-weight:normal;white-space:nowrap;letter-spacing:-0.25px;">Nets</div><div style="position:absolute;left:1761px;top:213px;width:297px;height:442px;background:#fcfcfc"></div><div style="position:absolute;left:1761px;top:213px;width:297px;height:19px;background:#ececec"></div><svg style="position:absolute;left:1766px;top:217.5px;" width="6" height="10" viewBox="0 0 6 10"><path d="M0 0 L6 5 L0 10 Z" fill="#3a3aff"/></svg><div style="position:absolute;left:1776px;top:215.0px;width:16px;height:16px;background:#d03434"></div><svg style="position:absolute;left:1797px;top:214.5px;" width="18" height="17" viewBox="0 0 18 17"><circle cx="9" cy="8.5" r="7.5" fill="#4a4a4a"/><path d="M3.5 8.5 Q9 3 14.5 8.5 Q9 14 3.5 8.5 Z" fill="#fcfcfc"/><circle cx="9" cy="8.5" r="1.8" fill="#4a4a4a"/></svg><div style="position:absolute;left:1819px;top:213.30px;font-size:14px;line-height:20px;color:#232627;font-weight:normal;white-space:nowrap;letter-spacing:-0.3px">Top Layer</div><div style="position:absolute;left:1776px;top:234.0px;width:16px;height:16px;background:#7fc87f"></div><svg style="position:absolute;left:1797px;top:233.5px;" width="18" height="17" viewBox="0 0 18 17"><circle cx="9" cy="8.5" r="7.5" fill="#4a4a4a"/><path d="M3.5 8.5 Q9 3 14.5 8.5 Q9 14 3.5 8.5 Z" fill="#fcfcfc"/><circle cx="9" cy="8.5" r="1.8" fill="#4a4a4a"/></svg><div style="position:absolute;left:1819px;top:232.30px;font-size:14px;line-height:20px;color:#232627;font-weight:normal;white-space:nowrap;letter-spacing:-0.3px">L2GND</div><div style="position:absolute;left:1776px;top:253.0px;width:16px;height:16px;background:#c87828"></div><svg style="position:absolute;left:1797px;top:252.5px;" width="18" height="17" viewBox="0 0 18 17"><circle cx="9" cy="8.5" r="7.5" fill="#4a4a4a"/><path d="M3.5 8.5 Q9 3 14.5 8.5 Q9 14 3.5 8.5 Z" fill="#fcfcfc"/><circle cx="9" cy="8.5" r="1.8" fill="#4a4a4a"/></svg><div style="position:absolute;left:1819px;top:251.30px;font-size:14px;line-height:20px;color:#232627;font-weight:normal;white-space:nowrap;letter-spacing:-0.3px">L3</div><div style="position:absolute;left:1776px;top:272.0px;width:16px;height:16px;background:#4fc8c8"></div><svg style="position:absolute;left:1797px;top:271.5px;" width="18" height="17" viewBox="0 0 18 17"><circle cx="9" cy="8.5" r="7.5" fill="#4a4a4a"/><path d="M3.5 8.5 Q9 3 14.5 8.5 Q9 14 3.5 8.5 Z" fill="#fcfcfc"/><circle cx="9" cy="8.5" r="1.8" fill="#4a4a4a"/></svg><div style="position:absolute;left:1819px;top:270.30px;font-size:14px;line-height:20px;color:#232627;font-weight:normal;white-space:nowrap;letter-spacing:-0.3px">L4GND</div><div style="position:absolute;left:1776px;top:291.0px;width:16px;height:16px;background:#e0608a"></div><svg style="position:absolute;left:1797px;top:290.5px;" width="18" height="17" viewBox="0 0 18 17"><circle cx="9" cy="8.5" r="7.5" fill="#4a4a4a"/><path d="M3.5 8.5 Q9 3 14.5 8.5 Q9 14 3.5 8.5 Z" fill="#fcfcfc"/><circle cx="9" cy="8.5" r="1.8" fill="#4a4a4a"/></svg><div style="position:absolute;left:1819px;top:289.30px;font-size:14px;line-height:20px;color:#232627;font-weight:normal;white-space:nowrap;letter-spacing:-0.3px">L5</div><div style="position:absolute;left:1776px;top:310.0px;width:16px;height:16px;background:#a8a8c8"></div><svg style="position:absolute;left:1797px;top:309.5px;" width="18" height="17" viewBox="0 0 18 17"><circle cx="9" cy="8.5" r="7.5" fill="#4a4a4a"/><path d="M3.5 8.5 Q9 3 14.5 8.5 Q9 14 3.5 8.5 Z" fill="#fcfcfc"/><circle cx="9" cy="8.5" r="1.8" fill="#4a4a4a"/></svg><div style="position:absolute;left:1819px;top:308.30px;font-size:14px;line-height:20px;color:#232627;font-weight:normal;white-space:nowrap;letter-spacing:-0.3px">L6PWR</div><div style="position:absolute;left:1776px;top:329.0px;width:16px;height:16px;background:#28c8d8"></div><svg style="position:absolute;left:1797px;top:328.5px;" width="18" height="17" viewBox="0 0 18 17"><circle cx="9" cy="8.5" r="7.5" fill="#4a4a4a"/><path d="M3.5 8.5 Q9 3 14.5 8.5 Q9 14 3.5 8.5 Z" fill="#fcfcfc"/><circle cx="9" cy="8.5" r="1.8" fill="#4a4a4a"/></svg><div style="position:absolute;left:1819px;top:327.30px;font-size:14px;line-height:20px;color:#232627;font-weight:normal;white-space:nowrap;letter-spacing:-0.3px">L7PWR</div><div style="position:absolute;left:1776px;top:348.0px;width:16px;height:16px;background:#e8b0a8"></div><svg style="position:absolute;left:1797px;top:347.5px;" width="18" height="17" viewBox="0 0 18 17"><circle cx="9" cy="8.5" r="7.5" fill="#4a4a4a"/><path d="M3.5 8.5 Q9 3 14.5 8.5 Q9 14 3.5 8.5 Z" fill="#fcfcfc"/><circle cx="9" cy="8.5" r="1.8" fill="#4a4a4a"/></svg><div style="position:absolute;left:1819px;top:346.30px;font-size:14px;line-height:20px;color:#232627;font-weight:normal;white-space:nowrap;letter-spacing:-0.3px">L8</div><div style="position:absolute;left:1776px;top:367.0px;width:16px;height:16px;background:#f0e8a0"></div><svg style="position:absolute;left:1797px;top:366.5px;" width="18" height="17" viewBox="0 0 18 17"><circle cx="9" cy="8.5" r="7.5" fill="#4a4a4a"/><path d="M3.5 8.5 Q9 3 14.5 8.5 Q9 14 3.5 8.5 Z" fill="#fcfcfc"/><circle cx="9" cy="8.5" r="1.8" fill="#4a4a4a"/></svg><div style="position:absolute;left:1819px;top:365.30px;font-size:14px;line-height:20px;color:#232627;font-weight:normal;white-space:nowrap;letter-spacing:-0.3px">L9GND</div><div style="position:absolute;left:1776px;top:386.0px;width:16px;height:16px;background:#88c878"></div><svg style="position:absolute;left:1797px;top:385.5px;" width="18" height="17" viewBox="0 0 18 17"><circle cx="9" cy="8.5" r="7.5" fill="#4a4a4a"/><path d="M3.5 8.5 Q9 3 14.5 8.5 Q9 14 3.5 8.5 Z" fill="#fcfcfc"/><circle cx="9" cy="8.5" r="1.8" fill="#4a4a4a"/></svg><div style="position:absolute;left:1819px;top:384.30px;font-size:14px;line-height:20px;color:#232627;font-weight:normal;white-space:nowrap;letter-spacing:-0.3px">L10</div><div style="position:absolute;left:1776px;top:405.0px;width:16px;height:16px;background:#ee7c30"></div><svg style="position:absolute;left:1797px;top:404.5px;" width="18" height="17" viewBox="0 0 18 17"><circle cx="9" cy="8.5" r="7.5" fill="#4a4a4a"/><path d="M3.5 8.5 Q9 3 14.5 8.5 Q9 14 3.5 8.5 Z" fill="#fcfcfc"/><circle cx="9" cy="8.5" r="1.8" fill="#4a4a4a"/></svg><div style="position:absolute;left:1819px;top:403.30px;font-size:14px;line-height:20px;color:#232627;font-weight:normal;white-space:nowrap;letter-spacing:-0.3px">L11GND</div><div style="position:absolute;left:1776px;top:424.0px;width:16px;height:16px;background:#4d80c8"></div><svg style="position:absolute;left:1797px;top:423.5px;" width="18" height="17" viewBox="0 0 18 17"><circle cx="9" cy="8.5" r="7.5" fill="#4a4a4a"/><path d="M3.5 8.5 Q9 3 14.5 8.5 Q9 14 3.5 8.5 Z" fill="#fcfcfc"/><circle cx="9" cy="8.5" r="1.8" fill="#4a4a4a"/></svg><div style="position:absolute;left:1819px;top:422.30px;font-size:14px;line-height:20px;color:#232627;font-weight:normal;white-space:nowrap;letter-spacing:-0.3px">Bottom Layer</div><div style="position:absolute;left:1776px;top:443.0px;width:16px;height:16px;background:#840084"></div><svg style="position:absolute;left:1797px;top:442.5px;" width="18" height="17" viewBox="0 0 18 17"><circle cx="9" cy="8.5" r="7.5" fill="#4a4a4a"/><path d="M3.5 8.5 Q9 3 14.5 8.5 Q9 14 3.5 8.5 Z" fill="#fcfcfc"/><circle cx="9" cy="8.5" r="1.8" fill="#4a4a4a"/></svg><div style="position:absolute;left:1819px;top:441.30px;font-size:14px;line-height:20px;color:#232627;font-weight:normal;white-space:nowrap;letter-spacing:-0.3px">F.Adhesive</div><div style="position:absolute;left:1776px;top:462.0px;width:16px;height:16px;background:#000084"></div><svg style="position:absolute;left:1797px;top:461.5px;" width="18" height="17" viewBox="0 0 18 17"><circle cx="9" cy="8.5" r="7.5" fill="#4a4a4a"/><path d="M3.5 8.5 Q9 3 14.5 8.5 Q9 14 3.5 8.5 Z" fill="#fcfcfc"/><circle cx="9" cy="8.5" r="1.8" fill="#4a4a4a"/></svg><div style="position:absolute;left:1819px;top:460.30px;font-size:14px;line-height:20px;color:#232627;font-weight:normal;white-space:nowrap;letter-spacing:-0.3px">B.Adhesive</div><div style="position:absolute;left:1776px;top:481.0px;width:16px;height:16px;background:#a89088"></div><svg style="position:absolute;left:1797px;top:480.5px;" width="18" height="17" viewBox="0 0 18 17"><circle cx="9" cy="8.5" r="7.5" fill="#4a4a4a"/><path d="M3.5 8.5 Q9 3 14.5 8.5 Q9 14 3.5 8.5 Z" fill="#fcfcfc"/><circle cx="9" cy="8.5" r="1.8" fill="#4a4a4a"/></svg><div style="position:absolute;left:1819px;top:479.30px;font-size:14px;line-height:20px;color:#232627;font-weight:normal;white-space:nowrap;letter-spacing:-0.3px">Top Paste</div><div style="position:absolute;left:1776px;top:500.0px;width:16px;height:16px;background:#00b4b4"></div><svg style="position:absolute;left:1797px;top:499.5px;" width="18" height="17" viewBox="0 0 18 17"><circle cx="9" cy="8.5" r="7.5" fill="#4a4a4a"/><path d="M3.5 8.5 Q9 3 14.5 8.5 Q9 14 3.5 8.5 Z" fill="#fcfcfc"/><circle cx="9" cy="8.5" r="1.8" fill="#4a4a4a"/></svg><div style="position:absolute;left:1819px;top:498.30px;font-size:14px;line-height:20px;color:#232627;font-weight:normal;white-space:nowrap;letter-spacing:-0.3px">Bottom Paste</div><div style="position:absolute;left:1776px;top:519.0px;width:16px;height:16px;background:#f0e8a0"></div><svg style="position:absolute;left:1797px;top:518.5px;" width="18" height="17" viewBox="0 0 18 17"><circle cx="9" cy="8.5" r="7.5" fill="#4a4a4a"/><path d="M3.5 8.5 Q9 3 14.5 8.5 Q9 14 3.5 8.5 Z" fill="#fcfcfc"/><circle cx="9" cy="8.5" r="1.8" fill="#4a4a4a"/></svg><div style="position:absolute;left:1819px;top:517.30px;font-size:14px;line-height:20px;color:#232627;font-weight:normal;white-space:nowrap;letter-spacing:-0.3px">Top Overlay</div><div style="position:absolute;left:1776px;top:538.0px;width:16px;height:16px;background:#e8b0a8"></div><svg style="position:absolute;left:1797px;top:537.5px;" width="18" height="17" viewBox="0 0 18 17"><circle cx="9" cy="8.5" r="7.5" fill="#4a4a4a"/><path d="M3.5 8.5 Q9 3 14.5 8.5 Q9 14 3.5 8.5 Z" fill="#fcfcfc"/><circle cx="9" cy="8.5" r="1.8" fill="#4a4a4a"/></svg><div style="position:absolute;left:1819px;top:536.30px;font-size:14px;line-height:20px;color:#232627;font-weight:normal;white-space:nowrap;letter-spacing:-0.3px">Bottom Overlay</div><div style="position:absolute;left:1776px;top:557.0px;width:16px;height:16px;background:#5a2a78;background-image:linear-gradient(45deg,#7a4a98 25%,transparent 25%,transparent 75%,#7a4a98 75%),linear-gradient(45deg,#7a4a98 25%,transparent 25%,transparent 75%,#7a4a98 75%);background-size:8px 8px;background-position:0 0,4px 4px"></div><svg style="position:absolute;left:1797px;top:556.5px;" width="18" height="17" viewBox="0 0 18 17"><circle cx="9" cy="8.5" r="7.5" fill="#4a4a4a"/><path d="M3.5 8.5 Q9 3 14.5 8.5 Q9 14 3.5 8.5 Z" fill="#fcfcfc"/><circle cx="9" cy="8.5" r="1.8" fill="#4a4a4a"/></svg><div style="position:absolute;left:1819px;top:555.30px;font-size:14px;line-height:20px;color:#232627;font-weight:normal;white-space:nowrap;letter-spacing:-0.3px">Top Solder</div><div style="position:absolute;left:1776px;top:576.0px;width:16px;height:16px;background:#0a6060;background-image:linear-gradient(45deg,#0e8080 25%,transparent 25%,transparent 75%,#0e8080 75%),linear-gradient(45deg,#0e8080 25%,transparent 25%,transparent 75%,#0e8080 75%);background-size:8px 8px;background-position:0 0,4px 4px"></div><svg style="position:absolute;left:1797px;top:575.5px;" width="18" height="17" viewBox="0 0 18 17"><circle cx="9" cy="8.5" r="7.5" fill="#4a4a4a"/><path d="M3.5 8.5 Q9 3 14.5 8.5 Q9 14 3.5 8.5 Z" fill="#fcfcfc"/><circle cx="9" cy="8.5" r="1.8" fill="#4a4a4a"/></svg><div style="position:absolute;left:1819px;top:574.30px;font-size:14px;line-height:20px;color:#232627;font-weight:normal;white-space:nowrap;letter-spacing:-0.3px">Bottom Solder</div><div style="position:absolute;left:1776px;top:595.0px;width:16px;height:16px;background:#c8c8c8"></div><svg style="position:absolute;left:1797px;top:594.5px;" width="18" height="17" viewBox="0 0 18 17"><circle cx="9" cy="8.5" r="7.5" fill="#4a4a4a"/><path d="M3.5 8.5 Q9 3 14.5 8.5 Q9 14 3.5 8.5 Z" fill="#fcfcfc"/><circle cx="9" cy="8.5" r="1.8" fill="#4a4a4a"/></svg><div style="position:absolute;left:1819px;top:593.30px;font-size:14px;line-height:20px;color:#232627;font-weight:normal;white-space:nowrap;letter-spacing:-0.3px">Top Assembly</div><div style="position:absolute;left:1776px;top:614.0px;width:16px;height:16px;background:#5890e0"></div><svg style="position:absolute;left:1797px;top:613.5px;" width="18" height="17" viewBox="0 0 18 17"><circle cx="9" cy="8.5" r="7.5" fill="#4a4a4a"/><path d="M3.5 8.5 Q9 3 14.5 8.5 Q9 14 3.5 8.5 Z" fill="#fcfcfc"/><circle cx="9" cy="8.5" r="1.8" fill="#4a4a4a"/></svg><div style="position:absolute;left:1819px;top:612.30px;font-size:14px;line-height:20px;color:#232627;font-weight:normal;white-space:nowrap;letter-spacing:-0.3px">User.Comments</div><div style="position:absolute;left:1776px;top:633.0px;width:16px;height:16px;background:#b0dcd0"></div><svg style="position:absolute;left:1797px;top:632.5px;" width="18" height="17" viewBox="0 0 18 17"><circle cx="9" cy="8.5" r="7.5" fill="#4a4a4a"/><path d="M3.5 8.5 Q9 3 14.5 8.5 Q9 14 3.5 8.5 Z" fill="#fcfcfc"/><circle cx="9" cy="8.5" r="1.8" fill="#4a4a4a"/></svg><div style="position:absolute;left:1819px;top:631.30px;font-size:14px;line-height:20px;color:#232627;font-weight:normal;white-space:nowrap;letter-spacing:-0.3px">User.Eco1</div><div style="position:absolute;left:1776px;top:652.0px;width:16px;height:16px;background:#d8c850"></div><svg style="position:absolute;left:1797px;top:651.5px;" width="18" height="17" viewBox="0 0 18 17"><circle cx="9" cy="8.5" r="7.5" fill="#4a4a4a"/><path d="M3.5 8.5 Q9 3 14.5 8.5 Q9 14 3.5 8.5 Z" fill="#fcfcfc"/><circle cx="9" cy="8.5" r="1.8" fill="#4a4a4a"/></svg><div style="position:absolute;left:1761px;top:655px;width:297px;height:100px;background:#e6e6e6;border-bottom:1px solid #cfcfcf;box-sizing:border-box"></div><svg style="position:absolute;left:1769px;top:665px;" width="10" height="8" viewBox="0 0 10 8"><path d="M0 1 L9 1 L4.5 7 Z" fill="#232627"/></svg><div style="position:absolute;left:1781.5px;top:658.80px;font-size:14px;line-height:20px;color:#232627;font-weight:normal;white-space:nowrap;letter-spacing:-0.25px;">Layer Display Options</div><div style="position:absolute;left:1766px;top:681.80px;font-size:14px;line-height:20px;color:#232627;font-weight:normal;white-space:nowrap;letter-spacing:-0.25px;">Inactive layers (H):</div><svg style="position:absolute;left:1769px;top:704px;" width="17" height="17" viewBox="0 0 17 17"><circle cx="8.5" cy="8.5" r="7.5" fill="#fcfcfc" stroke="#b5b7b9" stroke-width="1"/></svg><div style="position:absolute;left:1790px;top:702.80px;font-size:14px;line-height:20px;color:#232627;font-weight:normal;white-space:nowrap;letter-spacing:-0.25px;">Normal</div><svg style="position:absolute;left:1878px;top:704px;" width="17" height="17" viewBox="0 0 17 17"><circle cx="8.5" cy="8.5" r="7.5" fill="#c5e2f6" stroke="#3daee9" stroke-width="1.2"/><circle cx="8.5" cy="8.5" r="2.8" fill="#232627"/></svg><div style="position:absolute;left:1899px;top:702.80px;font-size:14px;line-height:20px;color:#232627;font-weight:normal;white-space:nowrap;letter-spacing:-0.25px;">Dim</div><svg style="position:absolute;left:1968px;top:704px;" width="17" height="17" viewBox="0 0 17 17"><circle cx="8.5" cy="8.5" r="7.5" fill="#fcfcfc" stroke="#b5b7b9" stroke-width="1"/></svg><div style="position:absolute;left:1989px;top:702.80px;font-size:14px;line-height:20px;color:#232627;font-weight:normal;white-space:nowrap;letter-spacing:-0.25px;">Hide</div><div style="position:absolute;left:1766px;top:727px;width:287px;height:1.5px;background:#c9c9c9"></div><div style="position:absolute;left:1769px;top:734px;width:16px;height:16px;background:#fcfcfc;border:1px solid #b5b7b9;border-radius:3px;box-sizing:border-box"></div><div style="position:absolute;left:1790px;top:732.80px;font-size:14px;line-height:20px;color:#232627;font-weight:normal;white-space:nowrap;letter-spacing:-0.25px;">Flip board view</div><div style="position:absolute;left:1768px;top:766.30px;font-size:14px;line-height:20px;color:#232627;font-weight:normal;white-space:nowrap;letter-spacing:-0.25px;">Presets (Ctrl+Tab):</div><div style="position:absolute;left:1768px;top:786px;width:282px;height:33px;background:#fcfcfc;border:1px solid #c3c5c7;border-radius:4px;box-sizing:border-box"></div><div style="position:absolute;left:1777px;top:793.30px;font-size:14px;line-height:20px;color:#232627;font-weight:normal;white-space:nowrap;letter-spacing:-0.25px;">---</div><svg style="position:absolute;left:2030px;top:798px;" width="14" height="9" viewBox="0 0 14 9"><path d="M1 1 L7 7 L13 1" stroke="#232627" stroke-width="1.2" fill="none"/></svg><div style="position:absolute;left:1768px;top:822.30px;font-size:14px;line-height:20px;color:#232627;font-weight:normal;white-space:nowrap;letter-spacing:-0.25px;">Viewports (Shift+Tab):</div><div style="position:absolute;left:1768px;top:842px;width:282px;height:33px;background:#fcfcfc;border:1px solid #c3c5c7;border-radius:4px;box-sizing:border-box"></div><div style="position:absolute;left:1777px;top:849.30px;font-size:14px;line-height:20px;color:#232627;font-weight:normal;white-space:nowrap;letter-spacing:-0.25px;">---</div><svg style="position:absolute;left:2030px;top:854px;" width="14" height="9" viewBox="0 0 14 9"><path d="M1 1 L7 7 L13 1" stroke="#232627" stroke-width="1.2" fill="none"/></svg><div style="position:absolute;left:1761px;top:886px;width:297px;height:17px;background:#c7c7c7"></div><div style="position:absolute;left:1764px;top:884.80px;font-size:11.5px;line-height:20px;color:#3a3a3a;font-weight:normal;white-space:nowrap;">Selection Filter</div><svg style="position:absolute;left:1769px;top:909.7px;" width="17" height="17" viewBox="0 0 17 17"><rect x="0.6" y="0.6" width="15.8" height="15.8" rx="3" fill="#c5e2f6" stroke="#3daee9" stroke-width="1.2"/><path d="M4 8.5 L7.2 11.8 L13 5.5" stroke="#232627" stroke-width="1.6" fill="none"/></svg><div style="position:absolute;left:1790px;top:908.50px;font-size:14px;line-height:20px;color:#232627;font-weight:normal;white-space:nowrap;letter-spacing:-0.2px">All items</div><svg style="position:absolute;left:1769px;top:930.7px;" width="17" height="17" viewBox="0 0 17 17"><rect x="0.6" y="0.6" width="15.8" height="15.8" rx="3" fill="#c5e2f6" stroke="#3daee9" stroke-width="1.2"/><path d="M4 8.5 L7.2 11.8 L13 5.5" stroke="#232627" stroke-width="1.6" fill="none"/></svg><div style="position:absolute;left:1790px;top:929.50px;font-size:14px;line-height:20px;color:#232627;font-weight:normal;white-space:nowrap;letter-spacing:-0.2px">Footprints</div><svg style="position:absolute;left:1769px;top:951.7px;" width="17" height="17" viewBox="0 0 17 17"><rect x="0.6" y="0.6" width="15.8" height="15.8" rx="3" fill="#c5e2f6" stroke="#3daee9" stroke-width="1.2"/><path d="M4 8.5 L7.2 11.8 L13 5.5" stroke="#232627" stroke-width="1.6" fill="none"/></svg><div style="position:absolute;left:1790px;top:950.50px;font-size:14px;line-height:20px;color:#232627;font-weight:normal;white-space:nowrap;letter-spacing:-0.2px">Tracks</div><svg style="position:absolute;left:1769px;top:972.7px;" width="17" height="17" viewBox="0 0 17 17"><rect x="0.6" y="0.6" width="15.8" height="15.8" rx="3" fill="#c5e2f6" stroke="#3daee9" stroke-width="1.2"/><path d="M4 8.5 L7.2 11.8 L13 5.5" stroke="#232627" stroke-width="1.6" fill="none"/></svg><div style="position:absolute;left:1790px;top:971.50px;font-size:14px;line-height:20px;color:#232627;font-weight:normal;white-space:nowrap;letter-spacing:-0.2px">Pads</div><svg style="position:absolute;left:1769px;top:993.7px;" width="17" height="17" viewBox="0 0 17 17"><rect x="0.6" y="0.6" width="15.8" height="15.8" rx="3" fill="#c5e2f6" stroke="#3daee9" stroke-width="1.2"/><path d="M4 8.5 L7.2 11.8 L13 5.5" stroke="#232627" stroke-width="1.6" fill="none"/></svg><div style="position:absolute;left:1790px;top:992.50px;font-size:14px;line-height:20px;color:#232627;font-weight:normal;white-space:nowrap;letter-spacing:-0.2px">Zones</div><svg style="position:absolute;left:1769px;top:1014.7px;" width="17" height="17" viewBox="0 0 17 17"><rect x="0.6" y="0.6" width="15.8" height="15.8" rx="3" fill="#c5e2f6" stroke="#3daee9" stroke-width="1.2"/><path d="M4 8.5 L7.2 11.8 L13 5.5" stroke="#232627" stroke-width="1.6" fill="none"/></svg><div style="position:absolute;left:1790px;top:1013.50px;font-size:14px;line-height:20px;color:#232627;font-weight:normal;white-space:nowrap;letter-spacing:-0.2px">Dimensions</div><svg style="position:absolute;left:1769px;top:1035.7px;" width="17" height="17" viewBox="0 0 17 17"><rect x="0.6" y="0.6" width="15.8" height="15.8" rx="3" fill="#c5e2f6" stroke="#3daee9" stroke-width="1.2"/><path d="M4 8.5 L7.2 11.8 L13 5.5" stroke="#232627" stroke-width="1.6" fill="none"/></svg><div style="position:absolute;left:1790px;top:1034.50px;font-size:14px;line-height:20px;color:#232627;font-weight:normal;white-space:nowrap;letter-spacing:-0.2px">Points</div><svg style="position:absolute;left:1873px;top:909.7px;" width="17" height="17" viewBox="0 0 17 17"><rect x="0.6" y="0.6" width="15.8" height="15.8" rx="3" fill="#fcfcfc" stroke="#b5b7b9" stroke-width="1"/></svg><div style="position:absolute;left:1894px;top:908.50px;font-size:14px;line-height:20px;color:#232627;font-weight:normal;white-space:nowrap;letter-spacing:-0.2px">Locked items</div><svg style="position:absolute;left:1873px;top:930.7px;" width="17" height="17" viewBox="0 0 17 17"><rect x="0.6" y="0.6" width="15.8" height="15.8" rx="3" fill="#c5e2f6" stroke="#3daee9" stroke-width="1.2"/><path d="M4 8.5 L7.2 11.8 L13 5.5" stroke="#232627" stroke-width="1.6" fill="none"/></svg><div style="position:absolute;left:1894px;top:929.50px;font-size:14px;line-height:20px;color:#232627;font-weight:normal;white-space:nowrap;letter-spacing:-0.2px">Text</div><svg style="position:absolute;left:1873px;top:951.7px;" width="17" height="17" viewBox="0 0 17 17"><rect x="0.6" y="0.6" width="15.8" height="15.8" rx="3" fill="#c5e2f6" stroke="#3daee9" stroke-width="1.2"/><path d="M4 8.5 L7.2 11.8 L13 5.5" stroke="#232627" stroke-width="1.6" fill="none"/></svg><div style="position:absolute;left:1894px;top:950.50px;font-size:14px;line-height:20px;color:#232627;font-weight:normal;white-space:nowrap;letter-spacing:-0.2px">Vias</div><svg style="position:absolute;left:1873px;top:972.7px;" width="17" height="17" viewBox="0 0 17 17"><rect x="0.6" y="0.6" width="15.8" height="15.8" rx="3" fill="#c5e2f6" stroke="#3daee9" stroke-width="1.2"/><path d="M4 8.5 L7.2 11.8 L13 5.5" stroke="#232627" stroke-width="1.6" fill="none"/></svg><div style="position:absolute;left:1894px;top:971.50px;font-size:14px;line-height:20px;color:#232627;font-weight:normal;white-space:nowrap;letter-spacing:-0.2px">Graphics</div><svg style="position:absolute;left:1873px;top:993.7px;" width="17" height="17" viewBox="0 0 17 17"><rect x="0.6" y="0.6" width="15.8" height="15.8" rx="3" fill="#c5e2f6" stroke="#3daee9" stroke-width="1.2"/><path d="M4 8.5 L7.2 11.8 L13 5.5" stroke="#232627" stroke-width="1.6" fill="none"/></svg><div style="position:absolute;left:1894px;top:992.50px;font-size:14px;line-height:20px;color:#232627;font-weight:normal;white-space:nowrap;letter-spacing:-0.2px">Rule Areas</div><svg style="position:absolute;left:1873px;top:1014.7px;" width="17" height="17" viewBox="0 0 17 17"><rect x="0.6" y="0.6" width="15.8" height="15.8" rx="3" fill="#c5e2f6" stroke="#3daee9" stroke-width="1.2"/><path d="M4 8.5 L7.2 11.8 L13 5.5" stroke="#232627" stroke-width="1.6" fill="none"/></svg><div style="position:absolute;left:1894px;top:1013.50px;font-size:14px;line-height:20px;color:#232627;font-weight:normal;white-space:nowrap;letter-spacing:-0.2px">Other items</div><div style="position:absolute;left:105px;top:1059px;width:1953px;height:40px;background:#fcfcfc"></div><div style="position:absolute;left:105px;top:1098px;width:1953px;height:23px;background:#eaebec"></div><div style="position:absolute;left:118px;top:1060.30px;font-size:14px;line-height:20px;color:#232627;font-weight:normal;white-space:nowrap;letter-spacing:-0.2px">Footprint</div><div style="position:absolute;left:118px;top:1079.30px;font-size:14px;line-height:20px;color:#232627;font-weight:normal;white-space:nowrap;letter-spacing:-0.2px">B1</div><div style="position:absolute;left:206px;top:1060.30px;font-size:14px;line-height:20px;color:#232627;font-weight:normal;white-space:nowrap;letter-spacing:-0.2px">Pad</div><div style="position:absolute;left:206px;top:1079.30px;font-size:14px;line-height:20px;color:#232627;font-weight:normal;white-space:nowrap;letter-spacing:-0.2px">1</div><div style="position:absolute;left:259px;top:1060.30px;font-size:14px;line-height:20px;color:#232627;font-weight:normal;white-space:nowrap;letter-spacing:-0.2px">Pin Name</div><div style="position:absolute;left:259px;top:1079.30px;font-size:14px;line-height:20px;color:#232627;font-weight:normal;white-space:nowrap;letter-spacing:-0.2px">1</div><div style="position:absolute;left:348px;top:1060.30px;font-size:14px;line-height:20px;color:#232627;font-weight:normal;white-space:nowrap;letter-spacing:-0.2px">Pin Type</div><div style="position:absolute;left:348px;top:1079.30px;font-size:14px;line-height:20px;color:#232627;font-weight:normal;white-space:nowrap;letter-spacing:-0.2px">bidirectional</div><div style="position:absolute;left:453px;top:1060.30px;font-size:14px;line-height:20px;color:#232627;font-weight:normal;white-space:nowrap;letter-spacing:-0.2px">Net</div><div style="position:absolute;left:453px;top:1079.30px;font-size:14px;line-height:20px;color:#232627;font-weight:normal;white-space:nowrap;letter-spacing:-0.2px">CHASSIS</div><div style="position:absolute;left:536px;top:1060.30px;font-size:14px;line-height:20px;color:#232627;font-weight:normal;white-space:nowrap;letter-spacing:-0.2px">Resolved Netclass</div><div style="position:absolute;left:536px;top:1079.30px;font-size:14px;line-height:20px;color:#232627;font-weight:normal;white-space:nowrap;letter-spacing:-0.2px">Default</div><div style="position:absolute;left:676px;top:1060.30px;font-size:14px;line-height:20px;color:#232627;font-weight:normal;white-space:nowrap;letter-spacing:-0.2px">Status</div><div style="position:absolute;left:676px;top:1079.30px;font-size:14px;line-height:20px;color:#232627;font-weight:normal;white-space:nowrap;letter-spacing:-0.2px">Locked</div><div style="position:absolute;left:749.5px;top:1060.30px;font-size:14px;line-height:20px;color:#232627;font-weight:normal;white-space:nowrap;letter-spacing:-0.2px">Circle</div><div style="position:absolute;left:749.5px;top:1079.30px;font-size:14px;line-height:20px;color:#232627;font-weight:normal;white-space:nowrap;letter-spacing:-0.2px">PTH</div><div style="position:absolute;left:812.5px;top:1060.30px;font-size:14px;line-height:20px;color:#232627;font-weight:normal;white-space:nowrap;letter-spacing:-0.2px">Diameter</div><div style="position:absolute;left:812.5px;top:1079.30px;font-size:14px;line-height:20px;color:#232627;font-weight:normal;white-space:nowrap;letter-spacing:-0.2px">5.0000 mm</div><div style="position:absolute;left:914px;top:1060.30px;font-size:14px;line-height:20px;color:#232627;font-weight:normal;white-space:nowrap;letter-spacing:-0.2px">Rotation</div><div style="position:absolute;left:914px;top:1079.30px;font-size:14px;line-height:20px;color:#232627;font-weight:normal;white-space:nowrap;letter-spacing:-0.2px">0</div><div style="position:absolute;left:996px;top:1060.30px;font-size:14px;line-height:20px;color:#232627;font-weight:normal;white-space:nowrap;letter-spacing:-0.2px">Hole</div><div style="position:absolute;left:996px;top:1079.30px;font-size:14px;line-height:20px;color:#232627;font-weight:normal;white-space:nowrap;letter-spacing:-0.2px">2.7000 mm</div><div style="position:absolute;left:1096.5px;top:1060.30px;font-size:14px;line-height:20px;color:#232627;font-weight:normal;white-space:nowrap;letter-spacing:-0.2px">Min Clearance: 0.1250 mm</div><div style="position:absolute;left:1096.5px;top:1079.30px;font-size:14px;line-height:20px;color:#232627;font-weight:normal;white-space:nowrap;letter-spacing:-0.2px">(from board minimum)</div><div style="position:absolute;left:296px;top:1101.30px;font-size:14px;line-height:20px;color:#232627;font-weight:normal;white-space:nowrap;letter-spacing:-0.2px">Z 1.68</div><div style="position:absolute;left:480.5px;top:1101.30px;font-size:14px;line-height:20px;color:#232627;font-weight:normal;white-space:nowrap;letter-spacing:-0.2px">X 125.2411&nbsp; Y 123.9972</div><div style="position:absolute;left:666px;top:1101.30px;font-size:14px;line-height:20px;color:#232627;font-weight:normal;white-space:nowrap;letter-spacing:-0.2px">dx 125.2411</div><div style="position:absolute;left:749.5px;top:1101.30px;font-size:14px;line-height:20px;color:#232627;font-weight:normal;white-space:nowrap;letter-spacing:-0.2px">dy 123.9972 ...</div><div style="position:absolute;left:850.5px;top:1101.30px;font-size:14px;line-height:20px;color:#232627;font-weight:normal;white-space:nowrap;letter-spacing:-0.2px">grid 1.0000</div><div style="position:absolute;left:1035.5px;top:1101.30px;font-size:14px;line-height:20px;color:#232627;font-weight:normal;white-space:nowrap;letter-spacing:-0.2px">mm</div><svg style="position:absolute;left:2036px;top:1101px;" width="18" height="18" viewBox="0 0 18 18"><path d="M17 3 L3 17 M17 8 L8 17 M17 13 L13 17" stroke="#b0b0b0" stroke-width="1"/></svg>
<div style="position:absolute;left:0px;top:145px;width:83px;height:11px;background:#484848"></div><div style="position:absolute;left:60px;top:91px;width:23px;height:65px;background:#484848"></div><div style="position:absolute;left:23px;top:80px;width:53px;height:76px;background:#484848;border-radius:14px;color:#fff;font-size:70px;line-height:75px;text-align:center">1</div><div style="position:absolute;left:0px;top:1059px;width:40px;height:8px;background:#484848"></div><div style="position:absolute;left:0px;top:1075px;width:40px;height:47px;background:#484848"></div><div style="position:absolute;left:37px;top:1048px;width:53px;height:74px;background:#484848;border-radius:14px;color:#fff;font-size:70px;line-height:73px;text-align:center">4</div><div style="position:absolute;left:458px;top:330px;width:53px;height:73px;background:#484848;border-radius:14px;color:#fff;font-size:70px;line-height:72px;text-align:center">2</div><div style="position:absolute;left:312px;top:831px;width:53px;height:73px;background:#484848;border-radius:14px;color:#fff;font-size:70px;line-height:72px;text-align:center">3</div><div style="position:absolute;left:1713px;top:72px;width:53px;height:73px;background:#484848;border-radius:14px;color:#fff;font-size:70px;line-height:72px;text-align:center">5</div><div style="position:absolute;left:1960px;top:328px;width:53px;height:73px;background:#484848;border-radius:14px;color:#fff;font-size:70px;line-height:72px;text-align:center">6</div><div style="position:absolute;left:2031px;top:954px;width:53px;height:73px;background:#484848;border-radius:14px;color:#fff;font-size:70px;line-height:72px;text-align:center">7</div><div style="position:absolute;left:1189px;top:280px;width:53px;height:73px;background:#484848;border-radius:14px;color:#fff;font-size:70px;line-height:72px;text-align:center">8</div>
</body></html>
